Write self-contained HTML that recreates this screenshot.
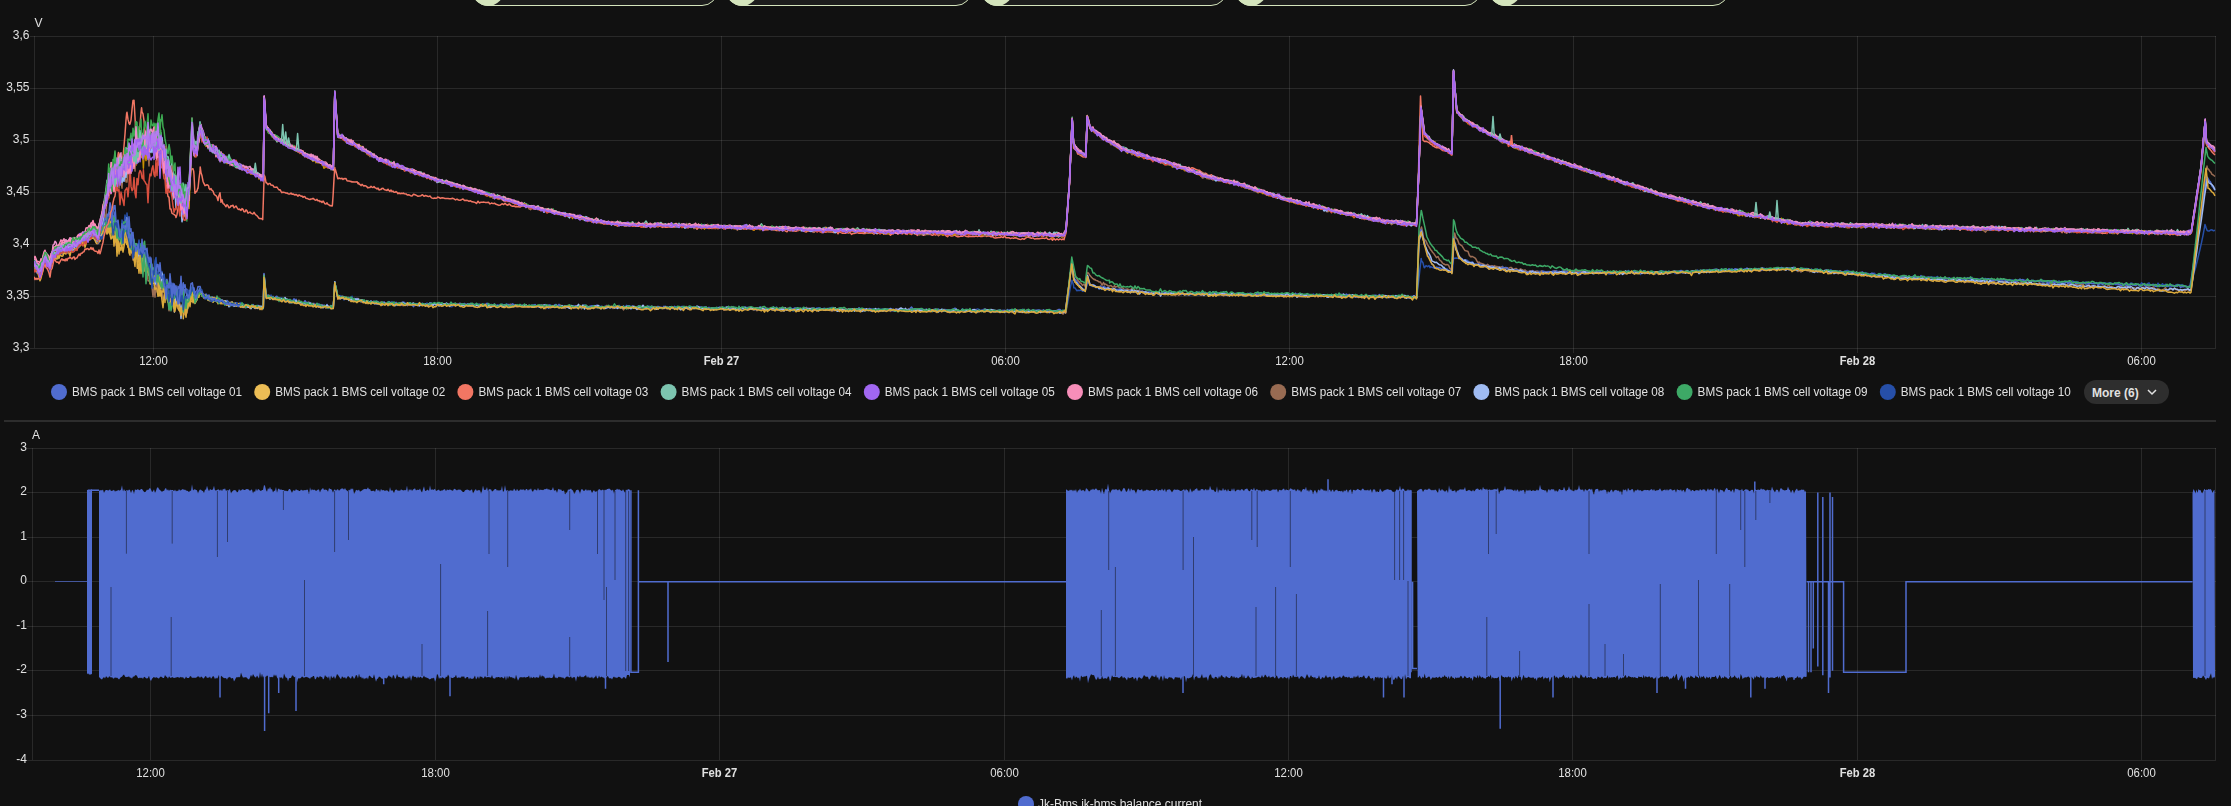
<!DOCTYPE html>
<html><head><meta charset="utf-8"><style>
html,body{margin:0;padding:0;background:#111111;width:2231px;height:806px;overflow:hidden;position:relative}
.chip{position:absolute;top:-26px;height:30px;border:1px solid #d4e4bc;border-radius:16px;background:#1c1c1c}
.av{position:absolute;top:-26px;width:32px;height:32px;border-radius:50%;background:#d4e4bc}
svg{position:absolute;left:0;top:0;will-change:transform}
.ax{font-family:"Liberation Sans",sans-serif;font-size:12px;fill:#e1e1e1}
.b{font-weight:bold}
.lg{font-family:"Liberation Sans",sans-serif;font-size:12px;fill:#e1e1e1}
.more{position:absolute;left:2084px;top:380px;width:85px;height:24px;border-radius:12px;background:#2e2e2e}
.more span{position:absolute;left:8px;top:6px;font-family:"Liberation Sans",sans-serif;font-size:12px;color:#e1e1e1;font-weight:bold}
</style></head><body>
<div class="chip" style="left:472px;width:244px"></div>
<div class="av" style="left:472px"></div>
<div class="chip" style="left:726px;width:244px"></div>
<div class="av" style="left:726px"></div>
<div class="chip" style="left:981px;width:244px"></div>
<div class="av" style="left:981px"></div>
<div class="chip" style="left:1235px;width:244px"></div>
<div class="av" style="left:1235px"></div>
<div class="chip" style="left:1489px;width:238px"></div>
<div class="av" style="left:1489px"></div>
<svg width="2231" height="806" viewBox="0 0 2231 806">
<path d="M30 36.5H2216M30 88.5H2216M30 140.5H2216M30 192.5H2216M30 244.5H2216M30 296.5H2216M30 348.5H2216M34.5 36V348M153.5 36V353M437.5 36V353M721.5 36V353M1005.5 36V353M1289.5 36V353M1573.5 36V353M1857.5 36V353M2141.5 36V353M2215.5 36V348" stroke="rgba(255,255,255,0.1)" stroke-width="1" fill="none"/>
<path d="M27 448.5H2216M27 492.5H2216M27 537.5H2216M27 581.5H2216M27 626.5H2216M27 670.5H2216M27 715.5H2216M27 760.5H2216M32.5 448V760M150.5 448V760M435.5 448V760M719.5 448V760M1004.5 448V760M1288.5 448V760M1572.5 448V760M1857.5 448V760M2141.5 448V760M2215.5 448V760" stroke="rgba(255,255,255,0.1)" stroke-width="1" fill="none"/>
<text x="29.5" y="39" text-anchor="end" class="ax">3,6</text>
<text x="29.5" y="91" text-anchor="end" class="ax">3,55</text>
<text x="29.5" y="143" text-anchor="end" class="ax">3,5</text>
<text x="29.5" y="195" text-anchor="end" class="ax">3,45</text>
<text x="29.5" y="247" text-anchor="end" class="ax">3,4</text>
<text x="29.5" y="299" text-anchor="end" class="ax">3,35</text>
<text x="29.5" y="351" text-anchor="end" class="ax">3,3</text>
<text x="34.5" y="27" class="ax">V</text>
<text x="153.5" y="365.3" text-anchor="middle" class="ax" textLength="28.5" lengthAdjust="spacingAndGlyphs">12:00</text>
<text x="437.5" y="365.3" text-anchor="middle" class="ax" textLength="28.5" lengthAdjust="spacingAndGlyphs">18:00</text>
<text x="721.5" y="365.3" text-anchor="middle" class="ax b" textLength="35.5" lengthAdjust="spacingAndGlyphs">Feb 27</text>
<text x="1005.5" y="365.3" text-anchor="middle" class="ax" textLength="28.5" lengthAdjust="spacingAndGlyphs">06:00</text>
<text x="1289.5" y="365.3" text-anchor="middle" class="ax" textLength="28.5" lengthAdjust="spacingAndGlyphs">12:00</text>
<text x="1573.5" y="365.3" text-anchor="middle" class="ax" textLength="28.5" lengthAdjust="spacingAndGlyphs">18:00</text>
<text x="1857.5" y="365.3" text-anchor="middle" class="ax b" textLength="35.5" lengthAdjust="spacingAndGlyphs">Feb 28</text>
<text x="2141.5" y="365.3" text-anchor="middle" class="ax" textLength="28.5" lengthAdjust="spacingAndGlyphs">06:00</text>
<text x="27" y="450.6" text-anchor="end" class="ax">3</text>
<text x="27" y="494.6" text-anchor="end" class="ax">2</text>
<text x="27" y="539.6" text-anchor="end" class="ax">1</text>
<text x="27" y="583.6" text-anchor="end" class="ax">0</text>
<text x="27" y="628.6" text-anchor="end" class="ax">-1</text>
<text x="27" y="672.6" text-anchor="end" class="ax">-2</text>
<text x="27" y="717.6" text-anchor="end" class="ax">-3</text>
<text x="27" y="762.6" text-anchor="end" class="ax">-4</text>
<text x="32" y="439" class="ax">A</text>
<text x="150.5" y="777.3" text-anchor="middle" class="ax" textLength="28.5" lengthAdjust="spacingAndGlyphs">12:00</text>
<text x="435.5" y="777.3" text-anchor="middle" class="ax" textLength="28.5" lengthAdjust="spacingAndGlyphs">18:00</text>
<text x="719.5" y="777.3" text-anchor="middle" class="ax b" textLength="35.5" lengthAdjust="spacingAndGlyphs">Feb 27</text>
<text x="1004.5" y="777.3" text-anchor="middle" class="ax" textLength="28.5" lengthAdjust="spacingAndGlyphs">06:00</text>
<text x="1288.5" y="777.3" text-anchor="middle" class="ax" textLength="28.5" lengthAdjust="spacingAndGlyphs">12:00</text>
<text x="1572.5" y="777.3" text-anchor="middle" class="ax" textLength="28.5" lengthAdjust="spacingAndGlyphs">18:00</text>
<text x="1857.5" y="777.3" text-anchor="middle" class="ax b" textLength="35.5" lengthAdjust="spacingAndGlyphs">Feb 28</text>
<text x="2141.5" y="777.3" text-anchor="middle" class="ax" textLength="28.5" lengthAdjust="spacingAndGlyphs">06:00</text>
<circle cx="59.0" cy="392" r="8" fill="#506ccf"/>
<text x="72.0" y="396" class="lg" textLength="170" lengthAdjust="spacingAndGlyphs">BMS pack 1 BMS cell voltage 01</text>
<circle cx="262.2" cy="392" r="8" fill="#ecbd55"/>
<text x="275.2" y="396" class="lg" textLength="170" lengthAdjust="spacingAndGlyphs">BMS pack 1 BMS cell voltage 02</text>
<circle cx="465.4" cy="392" r="8" fill="#f27663"/>
<text x="478.4" y="396" class="lg" textLength="170" lengthAdjust="spacingAndGlyphs">BMS pack 1 BMS cell voltage 03</text>
<circle cx="668.6" cy="392" r="8" fill="#7cc4af"/>
<text x="681.6" y="396" class="lg" textLength="170" lengthAdjust="spacingAndGlyphs">BMS pack 1 BMS cell voltage 04</text>
<circle cx="871.8" cy="392" r="8" fill="#a167f1"/>
<text x="884.8" y="396" class="lg" textLength="170" lengthAdjust="spacingAndGlyphs">BMS pack 1 BMS cell voltage 05</text>
<circle cx="1075.0" cy="392" r="8" fill="#f78eb9"/>
<text x="1088.0" y="396" class="lg" textLength="170" lengthAdjust="spacingAndGlyphs">BMS pack 1 BMS cell voltage 06</text>
<circle cx="1278.2" cy="392" r="8" fill="#986b52"/>
<text x="1291.2" y="396" class="lg" textLength="170" lengthAdjust="spacingAndGlyphs">BMS pack 1 BMS cell voltage 07</text>
<circle cx="1481.4" cy="392" r="8" fill="#9fbbf2"/>
<text x="1494.4" y="396" class="lg" textLength="170" lengthAdjust="spacingAndGlyphs">BMS pack 1 BMS cell voltage 08</text>
<circle cx="1684.6" cy="392" r="8" fill="#3da966"/>
<text x="1697.6" y="396" class="lg" textLength="170" lengthAdjust="spacingAndGlyphs">BMS pack 1 BMS cell voltage 09</text>
<circle cx="1887.8" cy="392" r="8" fill="#264fa8"/>
<text x="1900.8" y="396" class="lg" textLength="170" lengthAdjust="spacingAndGlyphs">BMS pack 1 BMS cell voltage 10</text>
<rect x="4" y="420.5" width="2212" height="1" fill="#4a4a4a"/>
<circle cx="1026" cy="804" r="8" fill="#506ccf"/>
<text x="1038" y="808" class="lg" textLength="164" lengthAdjust="spacingAndGlyphs">Jk-Bms jk-bms balance current</text>
<clipPath id="clipTop"><rect x="34" y="6" width="2182" height="342"/></clipPath>
<g clip-path="url(#clipTop)">
<path d="M34 266.3l1 3.5l1 0.7l1 0.7l1 1.8l1 2.3l1 0.1l1 -3l1 -5.7l1 -1.9l1 -2.1l1 -4.7l1 3.3l1 1.5l1 2.6l1 0.7l1 6.1l1 -5.1l1 -5.2l1 -4l1 2.5l1 -4.7l1 1.4l1 -0.1l1 -1.4l1 -2.5l1 0.9l1 -0.7l1 0.8l1 -0.7l1 -1.3l1 0.7l1 -0.9l1 -0.9l1 -1.4l1 -1.7l1 0l1 -1.3l1 1.4l1 1.8l1 -2.7l1 0.5l1 -2.8l1 1.1l1 1l1 -0.6l1 -2.5l1 -2l1 -3.2l1 3.6l1 -2.4l1 0.1l1 -2.7l1 0.4l1 -2.5l1 2.7l1 -0.4l1 -4.4l1 2l1 0.4l1 -1.1l1 1.3l1 2.4l1 2l1 0.9l1 0l1 -1.7l1 -2.2l1 -2.9l1 -2.4l1 -2.9l0.4 -4.5l0.6 0.6l1 -2.2l1 -2.4l1 1.4l1 -1.3l1 -0.8l1 -11l1 1.2l1 10.1l1 3.2l0.9 3.1l0.1 1.8l1 -2.3l1 8.5l1 -0.6l1 1.4l1 0.7l1 1.5l1 -17.2l1 4.3l1 0.6l1 -9.8l1 6.5l0.8 -2l0.2 -6.5l1 11.8l1 5.9l1 10l1 2.4l1 -1.7l1 -2.5l1 5.9l1 2.7l1 6.3l1 -1.5l0.2 -4.9l0.8 -3.4l1 4.6l1 -2.6l1 -2.6l1 4.2l1 -2.3l1 2.5l0.6 1.8l0.4 -3.9l1 17.2l1 -9.8l1 10.6l1 0.6l1 10.4l1 -12l1 7.9l1 2.6l1 -0.5l1 10.9l1 -7.9l1 7l1 -1.6l1 1.8l0.5 -1.7l0.5 -2.5l1 2l1 -9.2l1 10.1l1 -7.4l1 10l1 13l1 -8.4l1 3.6l1 8.1l1 -9.6l1 -8.1l1 1.4l1 4.7l1 3.6l0.4 -6.2l0.6 14.3l1 0.2l1 -7.7l1 1.9l1 -4.1l1 8.6l1 -11l1 8.9l1 -3.8l0.3 -0.5l0.7 8.3l1 2.9l1 -6.9l1 -3.1l1 5.5l1 -6.6l1 -1.7l1 3.7l1 -2l0.3 -5l0.7 10.5l1 -3.3l1 4.3l1 -4.6l1 -0.5l1 -3.6l1 2.6l0.7 -1.5l0.3 -2.6l1 1.1l1 1.4l1 4.2l1 -0.8l1 0.8l1 0.1l1 0.6l1 -0.7l0.6 1.3l0.4 -1.6l1 1.5l1 0.4l1 0.9l1 -0.1l1 0l1 1.2l1 -0.7l1 2.2l1 -0.5l1 -0.6l1 -0.1l1 -0.1l1 -0.2l1 0.8l1 1l1 0.5l1 0.4l1 1.9l1 -2.4l1 1l1 3.4l1 -4.1l1 1.8l1 0.2l1 -0.5l1 -0.3l1 -0.4l1 0.8l1 -0.1l1 0.8l1 -2.2l1 1.1l1 1.1l1 -0.6l1 0.2l1 1.8l1 -0.9l1 1.4l1 0.3l1 -0.3l1 0.4l1 -0.4l1 -0.9l1 1.4l1 0.4l1 -0.8l1 0.4l1 0.7l1 -1.4l1 1.4l1 1l1 -2.2l1 0.5l1 -0.3l0.3 1.5l0.7 -33.9l1 9.9l1 8.1l0.3 3.5l0.7 0.1l1 -1.4l1 2.9l1 -0.3l1 -2.2l1 2.5l1 -0.4l1 0.9l1 0.3l1 -1.3l1 1.5l1 1.6l1 -1.7l1 -0.3l1 -0.2l1 0.2l1 1.5l1 1.3l1 -1l1 0l1 1.9l1 -2.2l1 0l1 1.3l1 0.3l1 -1l1 0.2l1 1.5l1 0.3l1 -1.1l1 1.1l1 -0.1l1 1l1 -0.3l1 0.1l1 -0.1l1 1.3l1 0.3l1 -1.3l1 1.1l1 -1.3l1 0.9l1 0.7l1 0.8l1 -1.5l1 0.5l1 0.3l1 -1.2l1 1.4l1 -0.4l1 1l1 -1.1l1 -0.5l1 1.9l1 0.4l1 -0.5l1 1.4l1 -0.7l1 -0.1l1 1l1 -1.6l1 0.8l1 0.7l1 0.8l1 -0.8l1 0.6l1 -0.7l0.3 0.8l0.7 -10.4l0.8 -15.1l0.2 3.5l1 2.4l1 5.3l0.7 3.5l0.3 0.8l1 -1.7l1 -0.5l1 2.3l1 0.3l1 0l1 1.7l1 -1.9l1 0.1l1 0.5l1 -0.4l1 1.1l1 -2l1 1l1 -2.1l1 3.7l1 -0.6l1 1.3l1 1.2l1 -1.6l1 -0.1l1 0l1 -0.1l1 0.3l1 1.1l1 -0.3l1 0.1l1 0l1 1l1 -0.2l1 -0.5l1 0.7l1 -0.7l1 -0.7l1 2l1 -0.7l1 -0.9l1 1.8l1 -0.3l1 -1.2l1 2.6l1 -0.7l1 0.7l1 -0.5l1 -0.2l1 -0.9l1 2l1 -0.6l1 -0.4l1 0.4l1 -0.4l1 0.4l1 -0.9l1 0.1l1 -1.5l1 1.4l1 0.9l1 0.6l1 -1.2l1 0.3l1 1.4l1 -1.4l1 0.9l1.5 0.8l1.5 -1.1l1.5 0.7l1.5 -1.6l1.5 0.6l1.5 -0.4l1.5 0.4l1.5 1l1.5 1.2l1.5 -2.1l1.5 0l1.5 0.8l1.5 -1.2l1.5 1.1l1.5 0l1.5 -0.7l1.5 0.6l1.5 -1.6l1.5 1.8l1.5 -1.7l1.5 0.7l1.5 0.2l1.5 0.2l1.5 1l1.5 -0.6l1.5 -0.3l1.5 0.7l1.5 0.8l1.5 -1.2l1.5 0.2l1.5 0.8l1.5 -0.7l1.5 -1l1.5 2.9l1.5 -0.3l1.5 -3.3l1.5 1.4l1.5 0.2l1.5 0.5l1.5 -0.2l1.5 -0.7l1.5 -0.5l1.5 1l1.5 0.8l1.5 -1.5l1.5 0.2l1.5 0.7l1.5 -1.5l1.5 1.2l1.5 -0.2l1.5 0.7l1.5 -0.9l1.5 -0.2l1.5 0.3l1.5 0.4l1.5 -0.3l1.5 0.7l1.5 0.7l1.5 0.4l1.5 0.4l1.5 -1.8l1.5 0.4l1.5 -1.7l1.5 3.2l1.5 -2.1l1.5 0.4l1.5 0.3l1.5 -1.4l1.5 1.3l1.5 -0.4l1.5 -1.2l1.5 1.7l1.5 0.8l1.5 -2.2l1.5 2l1.5 -0.4l1.5 0.2l1.5 0l1.5 0.7l1.5 -1.2l1.5 0.9l1.5 -1l1.5 1l1.5 -1l1.5 0.7l1.5 1.5l1.5 -1.1l1.5 -0.6l1.5 -0.9l1.5 0.1l1.5 0.9l1.5 0.8l1.5 -0.2l1.5 0.3l1.5 -0.6l1.5 0.8l1.5 -1.4l1.5 -0.3l1.5 1.1l0.1 -0.6l1.4 -0.2l1.5 -0.2l1.5 0.3l1.5 0.8l1.5 -0.1l1.5 -1l1.5 1.3l1.5 -0.1l1.5 -0.8l1.5 1.4l1.5 -0.8l1.5 0l1.5 0.8l1.5 0.4l1.5 -1.5l1.5 0.8l1.5 -1l1.5 2.4l1.5 -2.1l1.5 1.2l1.5 -1.3l1.5 1.1l1.5 1l1.5 -3.5l1.5 1.6l1.5 0.7l1.5 -0.4l1.5 -0.4l1.5 2.1l1.5 -1.5l1.5 -1.2l1.5 1.8l1.5 -1.9l1.5 2.1l1.5 -1.3l1.5 0.5l1.5 0.9l1.5 -0.8l1.5 -1l1.5 -0.2l1.5 2.2l1.5 -0.3l1.5 -1.2l1.5 1.3l1.5 -0.3l1.5 0.1l1.5 -2.2l1.5 1.5l1.5 1l1.5 -0.1l1.5 0.2l1.5 -2.5l1.5 2l1.5 0.2l1.5 1.6l1.5 -2.5l1.5 0.6l1.5 0.4l1.5 0.7l1.5 -1.1l1.5 1.1l1.5 -1.5l1.5 0.6l1.5 -0.6l1.5 0.5l1.5 -0.7l1.5 -0.7l1.5 2l1.5 -0.5l1.5 -0.7l1.5 0.6l1.5 0.7l1.5 -1.5l1.5 0.7l1.5 0.6l1.5 0l1.5 -0.5l1.5 -1.2l1.5 2.5l1.5 -0.7l1.5 -0.3l1.5 -0.3l1.5 0.3l1.5 -0.4l1.5 -0.4l1.5 0.3l1.5 0.2l1.5 0.1l1.5 -0.3l1.5 1.5l1.5 -1.4l1.5 1.2l1.5 -1.6l1.5 0.7l1.5 0.5l1.5 -0.8l1.5 -0.5l1.5 0.7l1.5 0.2l1.5 -1.3l1.5 1l1.5 0.6l1.5 -0.3l1.5 0.4l1.5 0.5l1.5 0.1l1.5 0.1l1.5 -0.2l1.5 -0.6l1.5 0.2l1.5 -0.2l1.5 -0.1l1.5 0.1l1.5 -1.2l1.5 1l1.5 0.3l1.5 -0.6l1.5 0.8l1.5 0.5l1.5 -0.5l1.5 1.7l1.5 -3.5l1.5 1.8l1.5 -1.3l1.5 2l1.5 1.2l1.5 -3.8l1.5 2.2l1.5 0.5l1.5 -0.4l1.5 0.9l1.5 -2.2l1.5 2.1l1.5 -0.5l1.5 -0.4l1.5 -0.5l1.5 0.9l1.5 -0.9l1.5 0.4l1.5 -0.5l1.5 -1.2l1.5 1.7l1.5 0.2l1.5 0.4l1.5 -1.2l1.5 0.7l1.5 0.4l1.5 -0.3l1.5 0.9l1.5 0.5l1.5 -2.1l1.5 -0.9l1.5 1.8l1.5 0.4l1.5 -0.7l1.5 0.1l1.5 -0.9l1.5 0.2l1.5 1.3l1.5 -1.2l1.5 -0.5l1.5 0.7l1.5 2.7l1.5 -0.6l1.5 -2l1.5 -0.2l1.5 0.5l1.5 -0.6l1.5 1.6l1.5 -0.9l1.5 -0.7l1.5 1.9l1.5 -1.3l1.5 0.7l1.5 -0.1l1.5 -0.2l1.5 0.5l1.5 -0.8l1.5 -0.8l1.5 -0.2l1.5 0.7l1.5 0.5l1.5 0.6l1.5 -0.2l1.5 0.1l1.5 -0.5l1.5 -0.9l1.5 0.2l1.5 -1l1.5 1.6l1.5 0.6l1.5 0l1.5 -0.4l1.5 -0.1l1.5 0.9l1.5 -0.6l1.5 0.6l1.5 0l1.5 -0.2l1.5 0.8l1.5 -1.3l1.5 0.2l1.5 -0.3l1.5 -0.2l1.5 1.4l1.5 -0.1l1.5 -1.5l1.5 0.7l1.5 0.7l1.5 0l1.5 0.6l1.5 -2l1.5 0.3l1.5 0.6l1.5 0.6l1.5 -0.8l1.5 -0.6l1.5 0.6l1.5 -0.1l1.5 -0.3l1.5 1.6l1.5 -1.7l1.5 0.3l1.5 1.8l1.5 -0.6l1.5 -0.5l1.5 -0.6l1.5 0.9l1.5 0.9l1.5 -0.6l1.5 0.6l1.5 -1l1.5 0.2l1.5 -0.6l1.5 0.4l1.5 0.7l1.5 -2l1.5 1.1l1.5 0.2l1.5 -0.5l1.5 0.2l1.5 0.9l1.5 0.9l1.5 -1l1.5 -0.3l1.5 -1.4l1.5 2.6l1.5 -1.4l1.5 -0.1l1.5 -0.8l1.5 0.8l1.5 -0.7l1.5 1l1.5 0.5l1.5 -0.2l1.5 0.1l1.5 -0.8l1.5 1.6l1.5 -1.5l1.5 -1l1.5 1.2l1.5 -0.6l1.5 -0.2l1.5 0.7l1.5 0.7l1.5 -0.8l1.5 1l1.5 0.9l1.5 -0.9l1.5 -0.9l1.5 0l1.5 -0.1l1.5 0.3l1.5 0.7l1.5 -0.4l1.5 -1.8l1.5 1.7l1.5 -0.7l1.5 1l1.5 -0.9l1.5 0.6l1.5 1.6l1.5 -2.4l1.5 0l1.5 -0.1l1.5 -0.7l1.5 0.5l1.5 1.6l1.5 -0.8l1.5 -0.9l1.5 0.3l1.5 1.5l1.5 -0.9l1.5 0.3l1.5 0.6l1.5 0.6l1.5 0.3l1.5 -0.9l1.5 -0.8l1.5 0.1l1.5 1.2l1.5 -0.3l1.5 -1.2l1.5 0.7l1.5 0l1.5 0l1.5 -0.2l1.5 -0.7l1.5 0.5l1.5 -0.9l1.5 2l1.5 -0.5l1.5 -1.3l1.5 1.9l1.5 -0.4l1.5 -2l1.5 2.7l1.5 -0.8l1.5 0.9l1.5 -2.2l1.5 1.5l1.5 0.2l1.5 0l1.5 0l1.5 0.6l1.5 -1.9l1.5 0.2l1.5 -0.1l1.5 0.7l1.5 0l1.5 0.8l1.5 -0.2l1.5 -0.4l1.5 -0.6l1.5 0l1.5 1.1l1.5 -0.1l1.5 -0.4l1.5 -0.2l1.5 1.3l1.5 -1.7l1.5 0.9l1.5 0.3l1.5 -0.9l0.9 0.9l0.6 -2l1.5 -6.1l1.5 -8.3l1.5 -9l1.5 -6.2l1.5 4.8l0.3 2.8l1.2 0.1l1.5 2.2l0.3 0.7l1.2 -0.5l1.5 0.3l1.5 -0.6l1.5 1.2l0.3 -0.4l1.2 0.2l1.5 -2l1.5 -3.2l0.5 -2.9l1 -0.5l1.5 2.8l1.5 0.6l1.5 0.9l1.5 -1.2l1.5 2.3l1.5 -0.9l1.5 2.2l1 -1.6l0.5 0.6l1.5 -0.7l1.5 -0.5l1.5 1.7l1.5 0.3l1.5 0.9l1.5 0l1.5 -0.6l1.5 -0.7l1.5 0.8l1.5 0.1l1.5 -0.1l1.5 1.2l1 -0.1l0.5 -0.4l1.5 0.5l1.5 -0.2l1.5 0.5l1.5 0.6l1.5 0.3l1.5 -1l1.5 -0.4l1.5 2.2l1.5 -0.8l1.5 0.9l1.5 -1.8l1.5 1.1l1.5 0.5l1.5 -0.9l1.5 0.6l1.5 0.9l1.5 0.2l1.5 0.3l1.5 -1.5l1.5 -0.1l1.5 1.6l1.5 0.5l1.5 -0.5l1.5 -1.1l1.5 1.6l1.5 0.1l1.5 -0.2l1.5 -0.7l1.5 0.6l1.5 0.3l1.5 -1.1l1.5 -1l1.5 1.5l1.5 0l1.5 -0.4l1.5 0.7l1.5 -1.1l1.5 0.3l1.5 0l1.5 0.8l1.5 0.9l1.5 -1.2l1.5 1.6l1.5 -0.4l1.5 -0.6l1.5 -0.2l1.5 0.9l1.5 -1.4l1.5 0.1l1.5 -0.7l1.5 1.2l1.5 0.8l1.5 -0.5l1.5 0.1l1.5 -0.6l1.5 0.2l1.5 -1.3l1.5 1.7l1.5 -1.2l1.5 -0.6l1.5 0.1l1.5 -0.2l1.5 1.4l1.5 0.3l1.5 -1.6l1.5 1.8l1.5 -0.1l1.5 -1.1l1.5 -0.8l1.5 0.5l1.5 0.3l1.5 0.9l1.5 -0.3l1.5 -1l1.5 1.7l1.5 -1.3l1.5 1.7l1.5 -1.5l1.5 0.3l1.5 -0.2l1.5 0.2l1.5 1.3l1.5 -0.3l1.5 -0.1l1.5 -0.1l1.5 -1.3l1.5 0.8l1.5 0.1l1.5 -0.2l1.5 1.1l1.5 -0.9l1.5 0l1.5 -0.3l1.5 -0.8l1.5 2.1l1.5 0.6l1.5 -0.7l1.5 -0.7l1.5 -1.4l1.5 2l1.5 0.7l1.5 -0.7l1.5 0.5l1.5 0.5l1.5 -0.1l1.5 -1.1l1.5 1.2l1.5 -0.2l1.5 -1.6l1.5 0.9l1.5 -0.7l1.5 1l1.5 0.5l1.5 -1.2l1.5 -0.8l1.5 2.2l1.5 -0.8l1.5 0.7l1.5 -1.9l1.5 1.8l1.5 0.9l1.5 0.1l1.5 -1.8l1.5 0.2l1.5 -0.5l1.5 0.6l1.5 0.1l1.5 -0.6l1.5 -0.9l1.5 1.6l1.5 -1l1.5 0.8l1.5 -0.3l1.5 0.9l1.5 -0.1l1.5 -0.9l1.5 0.8l1.5 1.3l1.5 -1.8l1.5 0.6l1.5 0.4l1.5 -0.1l1.5 -0.5l1.5 -1.2l1.5 0.2l1.5 1.2l1.5 0.1l1.5 1.6l1.5 -2.5l1.5 1.4l1.5 -0.2l1.5 -1.7l1.5 0.6l1.5 0.8l1.5 -0.5l1.5 0.2l1.5 0.4l1.5 -0.9l1.5 1l1.5 -0.7l1.5 0.1l1.5 0.9l1.5 -0.7l1.5 0.8l1.5 1.1l1.5 -1l1.5 -0.3l1.5 0.6l1.5 -0.9l1.5 0.9l1.5 -1.6l1.5 1.4l1.5 -0.8l1.5 -0.1l1.5 1.9l1.5 -1.8l1.5 1.9l1.5 -0.7l1.5 0.5l1.5 -1.9l1.5 1.5l1.5 0.2l1.5 -1.2l1.5 -0.1l1.5 1.8l1.5 -1.7l1.5 -0.4l1.5 0l1.5 0.8l1.5 0l1.5 0l1.5 1.3l1.5 -1.3l1.5 0.7l1.5 0.5l1.5 -1.9l1.5 1.2l1 0.5l0.5 -2.4l1.5 -13.2l1.5 -13.4l1.2 -10.2l0.3 2.4l1.5 2l1 4.2l0.5 0.7l1.5 -2.1l1.5 1.1l1.5 -1.1l1 2l0.5 -1l1.5 0.6l1.5 0.5l1.5 0.6l1.5 -0.4l1.5 0.5l1.5 -0.2l1.5 0.7l1.5 -0.5l1.5 1.2l1.5 -1.1l1.5 1.4l1.5 2l1.5 -1.1l1.5 -0.7l0.9 1.3l0.6 -7.2l0.5 -5.7l1 -0.2l1.5 -0.2l1.5 0.2l1.5 0.2l1.5 -0.1l1.5 0.5l1.5 2.3l1.5 -0.2l1 -0.4l0.5 -0.7l1.5 0.9l1.5 3.2l1.5 -2.2l1.5 1.2l1.5 0.7l1.5 0.2l1.5 0.4l1.5 -0.6l1.5 0.5l1.5 2.2l1.5 -1.6l1.5 1.5l1.5 -1.5l1.5 1.3l0.5 0.5l1 0.7l1.5 -1.3l1.5 1.4l1.5 0.1l1.5 -0.6l1.5 1l1.5 -0.9l1.5 0.3l1.5 0.7l1.5 -1.7l1.5 2.2l1.5 -0.3l1.5 -0.1l1.5 0.9l1.5 1l1.5 -0.7l1.5 1.3l1.5 -1.4l1.5 0.2l1.5 2.3l1.5 -0.5l1.5 0.4l1.5 -1.3l1.5 1.2l1.5 -0.4l1.5 0.7l1.5 -0.1l1.5 1.3l0.5 -1.2l1 -0.1l1.5 -0.4l1.5 1.8l1.5 -1.5l1.5 -0.2l1.5 -0.1l1.5 0.3l1.5 -0.7l1.5 0.6l1.5 0l1.5 0.2l1.5 -0.1l1.5 0.9l1.5 -0.4l1.5 0.3l1.5 0.1l1.5 0l1.5 -2l1.5 1l1.5 -0.3l1.5 1l1.5 -1.6l1.5 0.7l1.5 0.4l1.5 0.1l1.5 1l1.5 -0.9l1.5 1.1l1.5 -1.7l1.5 -0.3l1.5 2.1l1.5 -0.6l1.5 0l1.5 -0.2l1.5 0.4l1.5 -1.1l1.5 1.6l1.5 -1.1l1.5 1.1l1.5 -0.6l1.5 -1.5l1.5 0.5l1.5 1.7l1.5 -0.9l1.5 -0.2l1.5 0.4l1.5 -0.5l1.5 -0.1l1.5 0.5l1.5 0.1l1.5 1l1.5 -0.9l1.5 1.3l1.5 -0.1l1.5 -0.1l1.5 -0.5l1.5 -0.7l1.5 0l1.5 -0.2l1.5 -0.5l1.5 0.5l1.5 -0.6l1.5 1.4l1.5 -1l1.5 -0.8l1.5 -0.9l1.5 1.6l1.5 -0.1l1.5 -0.2l1.5 0l1.5 -0.8l1.5 2.1l1.5 -0.5l1.5 1.8l1.5 -2l1.5 -0.2l1.5 1l1.5 -0.9l1.5 0l1.5 -0.4l1.5 -0.2l1.5 1.7l1.5 -0.2l1.5 0.7l1.5 -1.3l1.5 0l1.5 -0.9l1.5 1l1.5 -1.9l0.8 1.5l0.7 0.4l1.5 0.3l1.5 -1.5l1.5 1.6l1.5 -1.2l1.5 0l1.5 -0.3l1.5 1.9l1.5 0.1l1.5 -2l1.5 -0.4l1.5 0l1.5 2.1l1.5 -1l1.5 -1l1.5 -0.8l1.5 0.8l1.5 1.4l1.5 0.5l1.5 -1.5l1.5 -0.5l1.5 0l1.5 -1.2l1.5 1.8l1.5 -1.4l1.5 1.5l1.5 -2l1.5 0.4l1.5 1l1.5 -0.7l1.5 1.1l1.5 -0.6l1.5 -1l1.5 1.1l1.5 -0.1l1.5 -2.1l1.5 2.7l1.5 -1l1.5 0.2l1.5 -1.8l1.5 0.8l1.5 0.2l1.5 1l1.5 -1.8l1.5 0.4l1.5 -0.8l1.5 1.2l1.5 0.4l1.5 -1.5l1.5 0.6l1.5 0.7l1.5 0.7l1.5 -0.7l1.5 -0.8l1.5 -0.7l1.5 0.1l1.5 0.1l1.5 0.5l1.5 -0.3l1.5 1.2l1.5 -1l1.5 -1l1.5 1.9l1.5 -0.5l1.5 -0.5l1.5 -0.6l1.5 -0.7l1.5 0.6l1.5 1.3l1.5 -1.3l1.5 -0.5l1.5 1l1.5 -0.1l1.5 0.1l1.5 -0.1l1.5 0.5l1.5 -1.7l1.5 1.3l1.5 -1.5l1.5 1.2l1.5 -0.2l1.5 0.3l0.7 0.6l0.8 -0.5l1.5 1.1l1.5 -0.1l1.5 -0.6l1.5 -0.5l1.5 -0.1l1.5 0.2l1.5 0.3l1.5 0.2l1.5 2.2l1.5 -1.8l1.5 -0.1l1.5 -1.3l1.5 0l1.5 0.6l1.5 0.7l1.5 -0.6l1.5 2.3l1.5 -1.5l1.5 1.2l1.5 -2.3l1.5 1.7l1.5 0.4l1.5 0.1l1.5 0.5l1.5 0l1.5 -0.1l1.5 -1.5l1.5 0.9l1.5 -1.2l1.5 2.2l1.5 -0.2l1.5 -0.3l1.5 -0.4l1.5 0.3l1.5 1.9l1.5 0l1.5 -1.1l1.5 0.9l1.5 -2.2l1.5 -0.3l1.5 0.9l1.5 0.1l1.5 0.5l1.5 0.9l1.5 2.3l1.5 -2.5l1.5 0.5l1.5 0.3l1.5 -0.2l1.5 0.8l1.5 0.6l1.5 -2.1l1.5 1.1l1.5 -0.1l1.5 0.8l1.5 -1.1l1.5 0.1l1.5 -0.2l1.5 2.2l1.5 -0.1l1.5 0.1l1.5 -1.9l1.5 1.3l1.5 -0.4l1.5 -0.5l1.5 0.5l1.5 1.3l1.5 0.1l1.5 -0.2l1.5 0.6l1.5 -0.6l1.5 0.6l1.5 0.2l1.5 0.5l1.5 -0.3l1.5 0l1.5 0l1.5 -0.3l1.5 2l1.5 -1.2l1.5 -0.1l1.5 1.4l1.5 -0.7l1.5 -2l1.5 1.6l1.5 0.3l1.5 1.1l1.5 -0.2l1.5 -0.1l1.5 -1.4l1.5 0.2l1.5 0.8l1.5 0.1l1.5 -1.2l1.5 0.4l1.5 -0.2l1.5 0.2l1.5 0.3l1.5 -0.4l1.5 -0.7l1.5 1.8l1.5 0.6l1.5 -1l1.5 1.1l1.5 -0.1l1.5 0.1l1.5 -0.1l1.5 -0.9l1.5 1l1.5 0.4l1.5 -1.3l1.5 2.2l1.5 0.2l1.5 -0.2l1.5 0.1l1.5 -1l1.5 -0.7l1.5 -0.3l1.5 -0.2l1.5 0.5l1.5 -0.1l1.5 0.6l1.5 -1.8l1.5 3.2l1.5 0.1l1.5 -1.7l1.5 0.3l1.5 -0.2l1.5 -0.3l1.5 -0.2l1.5 0.2l1.5 -0.3l1.5 0.9l1.5 -0.1l1.5 0.4l1.5 -0.8l1.5 0.8l1.5 0.1l1.5 0.4l1.5 -1l1.5 1.1l1.5 0.4l1.5 -0.4l1.5 -0.7l1.5 -0.1l1.5 0.3l1.5 0.7l1.5 0.7l1.5 -1.1l1.5 -0.2l1.5 0.8l1.5 -0.1l1.5 -0.7l1.5 0.2l1.5 0.5l1.5 0.6l1.5 -1.3l1.5 0.2l1.5 1.2l1.5 -1.2l1.5 1l1.5 0.2l1.5 -0.3l1.5 -0.6l1.5 0.7l1.5 -0.2l1.5 0.5l1.5 -0.9l1.5 1.4l1.5 -1.8l1.5 1.2l1.5 0.3l1.5 0.8l1.5 -1.2l1.5 0.9l1.5 -0.8l1.5 0.9l1.5 0.7l1.5 -1.6l1.5 0.6l1.5 -1l1.5 1.4l1.5 0.3l1.5 -0.8l1.5 -0.7l1.5 1.1l1.5 0.7l1.5 0l1.5 -0.1l1.5 -1.8l1.5 0.8l1.5 1.6l1.5 -1.9l1.5 1.8l1.5 0.6l1.5 -0.7l1.5 0.3l1.5 -1l1.5 -0.6l1.5 0.8l1.5 0l1.5 0.2l1.5 0.6l1.5 -0.6l1.5 0.3l1.5 0.2l1.5 -0.3l1.5 1.4l1.5 -1l1.5 -0.3l1.5 -0.2l1.5 -0.3l1.5 1.3l1.5 -0.7l1.5 -0.6l1.5 0.5l1.5 0.5l1.5 -0.1l1.5 1.1l1.5 -1.5l1.5 1.3l1.5 -0.2l1.5 -1l1.5 0.9l1.5 -0.1l1.5 0.4l1.5 -0.6l1.5 0.5l1.5 -1.4l1.5 0.5l1.5 1.4l1.5 0.3l1.5 -0.6l1.5 -0.5l1.5 1.1l1.5 -2.3l1.5 0.9l1.5 1l1.5 0l1.5 -1.2l1.5 -0.7l1.5 2.6l1.5 -0.7l1.5 -0.6l1.5 0.9l1.5 0.6l1.5 -2.5l1.5 2.6l1.5 -0.3l1.5 -1.8l1.5 2.1l1.5 -1.6l1.5 2.3l1.5 -0.7l1.5 1.3l1.5 -2.1l1.5 0.3l1.5 0.7l1.5 -1.3l1.5 -0.1l1.5 0.2l1.5 0.4l1.5 -0.6l1.5 1.3l1.5 0.2l1.5 -0.1l1.5 1.4l1.5 -1.2l0.5 1.3l1 -2.2l1.5 -5l1.5 -7.8l1.5 -4.5l1.5 -6.2l1 -4.1l0.5 -2.2l1.5 -6.2l1.5 -6.6l1.5 -7.4l1.5 -7.9l0.5 -2.9l1 3l1 2.7l0.5 0.5l1.5 0.4l1.5 -1l1.5 -0.3l1.5 1l1.5 -0.5" stroke="#264fa8" stroke-width="1.5" fill="none" stroke-linejoin="round"/>
<path d="M34 266.9l1 0.1l1 3.4l1 2.3l1 -1.8l1 1.9l1 1.8l1 -4.5l1 -3.2l1 0.5l1 -3.9l1 -2.1l1 -0.1l1 4.2l1 -3.2l1 2.4l1 3.6l1 -3l1 -6.7l1 -3.4l1 0.9l1 -3l1 2.8l1 -0.6l1 -1.8l1 0.4l1 -0.5l1 -1.4l1 0.5l1 1.6l1 -2.2l1 -0.1l1 -1.8l1 1l1 -1.7l1 1.3l1 -0.3l1 -0.3l1 1.9l1 -2.4l1 1.1l1 -1.6l1 -0.2l1 -2.4l1 0.8l1 -0.8l1 -3.3l1 -0.5l1 -2l1 -0.6l1 1l1 -3.3l1 -1.4l1 -0.6l1 1.1l1 -0.6l1 0.6l1 0.3l1 1.2l1 -2.2l1 2.3l1 -1.2l1 1.9l1 1.2l1 2.3l1 -5.5l1 2.1l1 -1.9l1 -4.1l1 -6.4l1 -0.6l0.4 0.4l0.6 -0.5l1 -3.3l1 -0.5l1 6.3l1 -8.9l1 13.4l1 -4.7l1 3.5l1 -7.7l1 3.7l0.9 6.4l0.1 -10.2l1 21.1l1 -12.7l1 5l1 5.9l1 1.8l1 -3.7l1 -4.6l1 1.5l1 0.6l1 -3.5l1 -11.5l0.8 15.6l0.2 -2.3l1 3.9l1 0.7l1 8.6l1 0.6l1 1.5l1 7.5l1 -13.8l1 9.2l1 -6.6l1 4.1l0.2 8.8l0.8 -12.8l1 4.2l1 -1.1l1 8.7l1 -8l1 -3.5l1 10.5l0.6 -4.2l0.4 1.1l1 14.8l1 -1.3l1 10.6l1 0.3l1 -0.9l1 -6.7l1 13.5l1 9.6l1 -8.9l1 9.4l1 -20.5l1 15.4l1 -7.6l1 3.1l0.5 -1.9l0.5 -0.6l1 -1l1 6.4l1 10.1l1 -1.4l1 -7.9l1 -1.5l1 3l1 0.7l1 17.4l1 -5.5l1 -2.7l1 -3l1 -4.5l1 9.3l0.4 -3.3l0.6 -9.7l1 12.6l1 -6.9l1 11.6l1 -7.4l1 2.9l1 4.5l1 -0.2l1 3l0.3 -8.9l0.7 11.8l1 0.4l1 -5.1l1 3.3l1 -6.6l1 -1.9l1 -8l1 2.9l1 -1.6l0.3 2.5l0.7 0.8l1 1.9l1 -0.1l1 -1.7l1 -3.2l1 -2.2l1 -5.2l0.7 2.2l0.3 -2.1l1 2.9l1 2.3l1 -0.6l1 2.6l1 -2.3l1 2.3l1 0.1l1 -1.4l0.6 1.5l0.4 1.2l1 -1l1 1.1l1 -0.7l1 0.6l1 -0.5l1 0.9l1 1.5l1 0.9l1 -1.3l1 0l1 0.6l1 -0.5l1 -0.1l1 2.7l1 -1.9l1 1.8l1 -1.8l1 3.3l1 -2.2l1 2.3l1 0.5l1 -2.5l1 2.1l1 -1.6l1 -0.4l1 2.8l1 0l1 -0.7l1 -2l1 2.2l1 -0.1l1 0l1 0.2l1 -1.1l1 1.2l1 2.2l1 -0.1l1 -1.5l1 -0.2l1 1l1 0.7l1 -0.2l1 -1.6l1 1.3l1 0l1 1.3l1 -0.1l1 -0.5l1 0.7l1 -1.3l1 1.6l1 -1.6l1 0.7l1 0.4l0.3 -1.5l0.7 -32.6l1 8.6l1 11.1l0.3 2.6l0.7 -0.1l1 0.7l1 -2.1l1 1.9l1 0.2l1 0l1 1.2l1 1.2l1 -1.5l1 -0.1l1 0.6l1 0.7l1 0.5l1 -1l1 1.6l1 -1.6l1 1.7l1 -0.1l1 0.2l1 1.6l1 -1.8l1 0.3l1 0.7l1 0.5l1 -1.5l1 1.5l1 -0.6l1 1.4l1 0.8l1 -1.1l1 -0.1l1 0.3l1 -2.5l1 3l1 -0.2l1 -0.1l1 -0.2l1 -0.1l1 0.7l1 1.4l1 -0.9l1 1.3l1 -2.9l1 1.8l1 0.8l1 -0.1l1 -1.2l1 1l1 1.6l1 -1.9l1 0.4l1 0l1 0.6l1 1.1l1 0.2l1 -1.8l1 3l1 -1.4l1 0.2l1 1.9l1 -1.2l1 -0.8l1 0.6l1 0l1 -0.1l1 0.7l1 1l0.3 -0.4l0.7 -12.9l0.8 -9.9l0.2 -2l1 5.6l1 4.8l0.7 3.9l0.3 -0.8l1 0.8l1 1.4l1 -1.4l1 -0.8l1 1.3l1 -0.6l1 0.6l1 0.6l1 0.4l1 -0.2l1 1.1l1 -0.7l1 -0.8l1 1.8l1 -0.9l1 1.3l1 -1.3l1 1.1l1 0.1l1 -2.1l1 1.1l1 0.6l1 2.1l1 -2.3l1 2.2l1 0.3l1 -0.3l1 0.3l1 -0.7l1 0.4l1 0.2l1 0.2l1 0.2l1 -0.6l1 -0.4l1 0.4l1 0.9l1 -1.3l1 0.5l1 0.8l1 0.1l1 0.4l1 -1.7l1 1.8l1 0.1l1 0.9l1 -2l1 1.3l1 0.6l1 0l1 0.6l1 -0.1l1 -1.5l1 1.3l1 -0.7l1 -0.3l1 1.7l1 -1.5l1 -0.1l1 0.3l1 -0.3l1 1.4l1.5 -0.5l1.5 0.8l1.5 -0.7l1.5 -0.7l1.5 1.3l1.5 -1.2l1.5 0l1.5 0.2l1.5 0l1.5 0.8l1.5 -1.3l1.5 0.8l1.5 -0.3l1.5 -0.8l1.5 0.2l1.5 0.7l1.5 0.6l1.5 0l1.5 0l1.5 -0.3l1.5 -0.5l1.5 0.6l1.5 -0.9l1.5 -0.1l1.5 0.9l1.5 -0.7l1.5 0.5l1.5 -0.4l1.5 0l1.5 0.2l1.5 -0.4l1.5 0.5l1.5 -0.7l1.5 1.5l1.5 -0.8l1.5 0.9l1.5 -2.4l1.5 1.5l1.5 0.6l1.5 -2l1.5 1.3l1.5 0.3l1.5 0.2l1.5 -0.9l1.5 1.5l1.5 0.2l1.5 -0.9l1.5 1.2l1.5 -0.6l1.5 0.1l1.5 -0.4l1.5 0.8l1.5 -0.4l1.5 0.8l1.5 -0.6l1.5 -0.8l1.5 0.2l1.5 0.8l1.5 -0.9l1.5 0.6l1.5 0.2l1.5 -0.4l1.5 -1.4l1.5 1.9l1.5 0.3l1.5 0.1l1.5 -0.8l1.5 1.3l1.5 -1.2l1.5 -0.5l1.5 -0.2l1.5 0.6l1.5 -1.2l1.5 -0.1l1.5 2.3l1.5 -0.2l1.5 0l1.5 0.4l1.5 -0.5l1.5 -1.7l1.5 2.1l1.5 0l1.5 -0.4l1.5 -1.7l1.5 2.5l1.5 0.1l1.5 -1.3l1.5 0.5l1.5 0.4l1.5 -0.6l1.5 0.9l1.5 -0.8l1.5 0.4l1.5 -0.4l1.5 -1.1l1.5 0.3l1.5 3.1l1.5 -2.1l1.5 0.9l0.1 -0.1l1.4 0.6l1.5 -0.7l1.5 -0.7l1.5 0.3l1.5 -1.6l1.5 1.1l1.5 0.6l1.5 -1.9l1.5 2l1.5 0.7l1.5 0.6l1.5 -1.8l1.5 0.1l1.5 -1.1l1.5 0.5l1.5 1.1l1.5 1.1l1.5 -2.4l1.5 1.8l1.5 -0.5l1.5 -0.5l1.5 2.1l1.5 -3.3l1.5 1.8l1.5 0.2l1.5 1.4l1.5 -0.2l1.5 0.2l1.5 -1.6l1.5 0.5l1.5 0.1l1.5 -0.4l1.5 0l1.5 -0.2l1.5 0l1.5 -0.8l1.5 2.1l1.5 -1.9l1.5 -1.3l1.5 1.7l1.5 -0.1l1.5 0.2l1.5 1.3l1.5 -1.2l1.5 0.1l1.5 -0.2l1.5 0.7l1.5 -0.4l1.5 0.4l1.5 2l1.5 -2.1l1.5 -0.9l1.5 1.9l1.5 -0.8l1.5 -0.1l1.5 0.1l1.5 0.2l1.5 0.1l1.5 0.6l1.5 -0.2l1.5 0.3l1.5 -1.3l1.5 0.4l1.5 -0.6l1.5 1.2l1.5 -0.1l1.5 -1l1.5 0.6l1.5 1.4l1.5 -1.1l1.5 -1.9l1.5 0.9l1.5 0.7l1.5 -0.4l1.5 0.4l1.5 0.7l1.5 -0.6l1.5 -0.9l1.5 1.4l1.5 -0.6l1.5 0.2l1.5 -0.4l1.5 -0.6l1.5 0.2l1.5 0.8l1.5 -0.4l1.5 -1.1l1.5 2.6l1.5 -1.8l1.5 0.2l1.5 0.8l1.5 -2.2l1.5 2.8l1.5 -1.6l1.5 1.1l1.5 -0.8l1.5 0.6l1.5 -0.1l1.5 0l1.5 -1.2l1.5 0.3l1.5 1.2l1.5 1.2l1.5 -1.6l1.5 0.6l1.5 -0.4l1.5 0.1l1.5 0.6l1.5 -1.6l1.5 1.4l1.5 -0.1l1.5 -0.4l1.5 -0.7l1.5 -0.2l1.5 -0.5l1.5 0.3l1.5 2.8l1.5 -0.3l1.5 -0.9l1.5 0.4l1.5 -1.3l1.5 -1.4l1.5 0.6l1.5 1.5l1.5 1.1l1.5 -1l1.5 -0.6l1.5 0.6l1.5 -0.5l1.5 -0.3l1.5 0.9l1.5 -0.3l1.5 -0.4l1.5 -0.2l1.5 -0.1l1.5 0.9l1.5 0.9l1.5 -1l1.5 1.8l1.5 -2.7l1.5 1.4l1.5 -1l1.5 0.8l1.5 0.2l1.5 0.3l1.5 0.5l1.5 -1.2l1.5 -0.6l1.5 0.7l1.5 0.2l1.5 -0.8l1.5 1.2l1.5 0.6l1.5 -2.3l1.5 1.3l1.5 0.4l1.5 -2.1l1.5 1.4l1.5 -0.3l1.5 -0.5l1.5 2.3l1.5 -0.5l1.5 -0.1l1.5 0.5l1.5 -0.1l1.5 -0.1l1.5 -0.3l1.5 -0.1l1.5 -1.2l1.5 0.6l1.5 0.4l1.5 -2.2l1.5 3.5l1.5 -1.9l1.5 -0.6l1.5 -0.3l1.5 1.6l1.5 0.1l1.5 -0.3l1.5 0.1l1.5 -0.5l1.5 0l1.5 0.4l1.5 -0.2l1.5 1.1l1.5 -0.4l1.5 0.3l1.5 0.2l1.5 0.6l1.5 -0.5l1.5 -0.3l1.5 -0.4l1.5 -0.5l1.5 0.3l1.5 0.7l1.5 -0.3l1.5 -0.3l1.5 -0.7l1.5 0l1.5 1.2l1.5 0.4l1.5 -0.6l1.5 -1.4l1.5 0.9l1.5 0.4l1.5 -0.8l1.5 1l1.5 -0.4l1.5 -0.5l1.5 -0.3l1.5 1.5l1.5 -0.3l1.5 -1l1.5 -0.1l1.5 1.3l1.5 -0.1l1.5 -0.5l1.5 1.5l1.5 -1.3l1.5 -0.5l1.5 1.5l1.5 -0.9l1.5 0.4l1.5 -0.1l1.5 -0.6l1.5 0l1.5 0.8l1.5 0.8l1.5 -2.1l1.5 1.4l1.5 -1.2l1.5 -0.7l1.5 1.2l1.5 0.4l1.5 -0.8l1.5 -0.9l1.5 1.8l1.5 -1.1l1.5 1.1l1.5 -1.6l1.5 1.3l1.5 -0.4l1.5 -0.5l1.5 1l1.5 0.4l1.5 -0.5l1.5 -0.3l1.5 1l1.5 -1.4l1.5 1.6l1.5 0l1.5 0.9l1.5 -0.6l1.5 -0.4l1.5 -0.1l1.5 -0.2l1.5 -1l1.5 2l1.5 -0.7l1.5 -0.5l1.5 -0.5l1.5 1.9l1.5 -0.6l1.5 -1.2l1.5 1.3l1.5 0.9l1.5 -1.3l1.5 0.1l1.5 -0.7l1.5 -0.3l1.5 1l1.5 1.6l1.5 -2l1.5 0l1.5 0.8l1.5 -0.9l1.5 0.7l1.5 0l1.5 -1.4l1.5 0l1.5 0.7l1.5 0.7l1.5 -0.4l1.5 0.8l1.5 -1.7l1.5 1.4l1.5 -0.7l1.5 0.5l1.5 0.2l1.5 -0.9l1.5 0.5l1.5 -0.6l1.5 1l1.5 -0.8l1.5 0.3l1.5 0.5l1.5 -0.7l1.5 1.2l1.5 -1.3l1.5 1.1l1.5 -0.3l1.5 -0.9l1.5 0.6l1.5 -0.5l1.5 0.3l1.5 0.1l1.5 1.4l1.5 -1.5l1.5 1.6l1.5 -0.7l1.5 -1.2l1.5 -0.6l1.5 2.1l1.5 -1.8l1.5 1.9l1.5 0.3l1.5 -0.3l1.5 -0.4l1.5 0.1l1.5 0.3l1.5 -0.4l1.5 -0.2l1.5 0.1l1.5 1l1.5 -1.4l1.5 0.5l1.5 -1.2l1.5 0.4l1.5 -0.5l1.5 0.9l1.5 0.7l1.5 -0.3l1.5 -0.6l1.5 0.7l1.5 -0.7l1.5 0.7l1.5 0l1.5 0.3l1.5 -2l1.5 0.9l1.5 1.6l1.5 -0.4l1.5 1.8l1.5 -1.9l0.9 -0.2l0.6 0.8l1.5 -13.5l1.5 -11.8l1.5 -13.9l1.3 -11.6l0.2 1.8l1.5 7.5l0.5 3.2l1 1.1l1.5 2.3l1.5 2.8l1.5 1.1l0.5 1.3l1 0.2l1.5 2.1l1.5 -1.4l1.3 2.8l0.2 -1.1l1.5 -11.3l0.5 -1.9l1 0.6l1.5 2.5l1.5 1.6l1.5 1.5l1.5 1.1l0.2 -0.5l1.3 1.1l1.5 0.4l1.5 1.1l1.5 0.1l1.5 3.2l1.5 -2.7l1.1 2.4l0.4 -1l1.5 0.7l1.5 1.4l1.5 -0.1l1.5 -0.3l1.5 1.4l1.5 -0.1l0.5 -1.3l1 1.6l1.5 -0.8l1.5 0.4l1.5 1.1l1.5 0.1l1.5 -0.2l1.5 2.2l1.5 -0.8l1.5 -0.3l1.5 1l1.5 -0.1l1.5 -1.4l1.5 0.6l0.9 0.2l0.6 2.5l1.5 -1.3l1.5 0.2l1.5 0l0.5 1.2l1 -0.5l1.5 1.4l1.5 -0.4l1.5 0.9l1.5 -1.1l1.5 0.8l1.5 -0.2l1.5 0.2l1.5 -1l1.5 0.7l1.5 -0.3l1.5 0.2l1.5 1.3l1.5 -0.5l1.5 0.9l1.5 -0.1l1.5 0.3l1.5 0.1l1.5 -1.2l1.5 1.1l1.5 -0.8l1.5 -0.1l1.5 1.3l1.5 0.8l1.5 -2.1l1.5 1.8l1.5 -0.7l1.5 -1.2l1.5 0.7l1.5 0.1l1.5 0l1.5 -0.6l1.5 -0.7l1.5 1l1.5 0.6l1.5 0l1.5 -0.1l1.5 0.5l1.5 -1.2l1.5 0.8l1.5 0.5l1.5 0.2l1.5 -0.8l1.5 0l1.5 -0.5l1.5 1.5l1.5 -2.8l1.5 1.7l1.5 1.9l1.5 -1.6l1.5 -1.4l1.5 1.4l1.5 -1.1l1.5 0.6l1.5 0.7l1.5 1.1l1.5 -0.8l1.5 0.1l1.5 0.2l1.5 -0.7l1.5 -0.8l1.5 0.7l1.5 0.3l1.5 -0.3l1.5 -0.2l1.5 0.3l1.5 -0.8l1.5 0.4l1.5 0.7l1.5 -0.2l1.5 0.2l1.5 0.9l1.5 -0.8l1.5 -0.3l1.5 -0.8l1.5 0.1l1.5 1l1.5 -0.8l1.5 0.9l1.5 -1l1.5 0.9l1.5 -0.2l1.5 0.7l1.5 -1l1.5 0l1.5 0.5l1.5 0l1.5 1.2l1.5 -1.3l1.5 -0.2l1.5 0.2l1.5 0.6l1.5 -0.2l1.5 0.4l1.5 -1.4l1.5 2.8l1.5 -0.4l1.5 -1.2l1.5 -0.7l1.5 1l1.5 0.3l1.5 -1.8l1.5 1.6l1.5 -1.1l1.5 1.4l1.5 0.5l1.5 -0.3l1.5 -1.9l1.5 1.9l1.5 -0.2l1.5 -0.8l1.5 0.7l1.5 0.8l1.5 -1.3l1.5 0.2l1.5 -0.3l1.5 1.1l1.5 -2.2l1.5 2.5l1.5 -1.6l1.5 1.4l1.5 -1.8l1.5 0.4l1.5 0.2l1.5 1l1.5 -1.7l1.5 1.6l1.5 -0.8l1.5 1.4l1.5 -1.2l1.5 0.6l1.5 -0.5l1.5 1.3l1.5 -1.5l1.5 0.2l1.5 1.4l1.5 -1.3l1.5 0.6l1.5 -0.9l1.5 0.8l1.5 -1.6l1.5 1.8l1.5 -0.5l1.5 -0.6l1.5 0.2l1.5 1.7l1.5 -0.5l1.5 -1.4l1.5 2.3l1.5 -1.7l1.5 0.2l1.5 0.4l1.5 -0.9l1.5 -0.4l1.5 0.7l1.5 1.3l1.5 -0.1l1.5 -1.8l1.5 1.9l1.5 -0.9l1.5 0.3l1.5 -0.4l1.5 0.2l1.5 -1.1l1.5 0l1.5 0.4l1.5 0.4l1.5 0.9l1.5 -1.1l1.5 2l1.5 -1.6l1.5 0l1.5 0.9l1.5 -0.2l1.5 -0.6l1.5 -0.5l1.5 0l1.5 -0.5l1.5 1.9l1.5 0l1.5 0.5l1.5 -0.7l1.5 0l1.5 0.5l1 0.3l0.5 -0.8l1.5 -45.6l0.5 -14l1 -6.1l1.5 -4.8l1.5 7l0.4 3.2l1.1 2.3l1.5 1.6l1.5 3.5l1.5 2.2l1.5 2.6l1.5 1.8l0.3 0.8l1.2 1.2l1.5 2.2l1.5 2.3l1.5 -1.2l1.5 3.3l1.5 1.2l1.5 2l1 0.9l0.5 0.1l1.5 0.9l1.5 -0.4l1.5 0.6l1.5 3.5l1.5 0.9l0.4 -1.2l1.1 -11.8l1.5 -18.7l0.2 -4.7l1.3 4.8l1.5 1.5l1.5 4.4l1 0.6l0.5 0.5l1.5 0.9l1.5 2.5l1.5 2.3l1.5 0.3l1.5 0.6l1.5 4.2l1.5 1.2l0.4 -0.4l1.1 0.1l1.5 0.8l1.5 1l1.5 2.8l1.5 2l0.5 -1.2l1 1.1l1.5 0.3l1.5 0.5l1.5 0.8l1.5 1.3l1.5 -1.6l1.5 1.2l1.5 0.6l1.5 -0.6l1.5 0.5l1.3 -0.5l0.2 1.7l1.5 -0.8l1.5 0.2l1.5 0.7l1.5 -0.3l1.5 0l1.5 0.6l1.5 1.4l1.5 -1.1l1.5 0.7l1.5 -1.2l1.5 -0.1l1.5 2.8l1.5 -1.3l1.5 -0.5l1.5 1.2l1.5 0.8l1.5 -1.5l1.5 0.7l1.5 1l1.5 -0.7l1.5 1.3l1.5 0.3l1.5 -0.3l0.5 -0.5l1 0.2l1.5 -0.3l1.5 0.5l1.5 0.4l1.5 -0.4l1.5 0.9l1.5 1.2l1.5 -2.2l1.5 0.6l1.5 0.5l1.5 0.1l1.5 -0.5l1.5 0l1.5 0.8l1.5 -0.4l1.5 -0.3l1.5 -1.1l1.5 1.2l1.5 0.3l1.5 -0.5l1.5 0.7l1.5 1l1.5 -3l1.5 1.6l1.5 -1.3l1.5 -0.1l1.5 0.8l1.5 0.6l1.5 -0.3l1.5 -0.8l1.5 -0.1l1.5 0.6l1.5 0.4l1.5 -0.5l1.5 -0.4l1.5 2.3l1.5 -1.7l1.5 0.5l1.5 -0.2l1.5 0l1.5 0.5l1.5 -0.1l1.5 0.7l1.5 -1.2l1.5 -0.1l1.5 2.2l1.5 -1.5l1.5 0.4l1.5 0.1l1.5 -0.3l1.5 -0.2l1.5 -0.9l1.5 0.1l1.5 1.8l1.5 -0.2l1.5 -0.1l1.5 -1.5l1.5 -0.4l1.5 0.8l1.5 -0.1l1.5 0.9l1.5 -0.9l1.5 1.7l1.5 -1.6l1.5 -0.1l1.5 1.2l1.5 -0.3l1.5 -0.7l1.5 1.4l1.5 0.7l1.5 -2.3l1.5 0.7l1.5 -0.7l1.5 -0.5l1.5 1.8l1.5 0.1l1.5 0.3l1.5 -0.5l1.5 -1.7l1.5 1.4l1.5 -0.5l1.5 -0.3l1.5 0.2l1.5 1.4l1.5 -0.7l1.5 1.6l1.5 -1l1.5 -1.6l1.5 2l0.8 0.3l0.7 -0.9l1.5 -0.9l1.5 2l1.5 -2.1l1.5 0.7l1.5 -1.4l1.5 0.3l1.5 -0.5l1.5 2l1.5 0.1l1.5 -1.1l1.5 -0.6l1.5 0.9l1.5 0.3l1.5 -1.3l1.5 0.2l1.5 0.5l1.5 0.3l1.5 -0.6l1.5 0l1.5 -1l1.5 -0.8l1.5 2.1l1.5 -0.7l1.5 0.3l1.5 -0.5l1.5 0.4l1.5 -1.1l1.5 1.6l1.5 -0.9l1.5 0.4l1.5 0.2l1.5 0.2l1.5 -0.4l1.5 -1.6l1.5 0.8l1.5 1.7l1.5 -0.9l1.5 0l1.5 0l1.5 -0.9l1.5 -0.2l1.5 -0.1l1.5 1.1l1.5 -0.6l1.5 0.8l1.5 -1l1.5 0.9l1.5 -1.1l1.5 -1.2l1.5 2l1.5 -1.1l1.5 0.6l1.5 -0.8l1.5 -0.5l1.5 0.3l1.5 -0.8l1.5 0.1l1.5 0.3l1.5 0.3l1.5 -0.7l1.5 0.8l1.5 0.1l1.5 1.1l1.5 -0.2l1.5 -1.4l1.5 0.6l1.5 -0.9l1.5 0.5l1.5 -0.3l1.5 -0.3l1.5 0.5l1.5 -1.2l1.5 1.2l1.5 -0.7l1.5 -0.7l1.5 0.5l1.5 0.6l1.5 -0.9l1.5 0.8l1.5 0l1.5 0.7l0.7 -1.9l0.8 0.7l1.5 0.6l1.5 0.9l1.5 -0.6l1.5 0.6l1.5 -1.3l1.5 0.7l1.5 1.7l1.5 -1.3l1.5 1.8l1.5 -2l1.5 0.3l1.5 -0.9l1.5 1.5l1.5 -0.2l1.5 1.2l1.5 -1.3l1.5 -0.3l1.5 -0.6l1.5 1.2l1.5 1l1.5 0.1l1.5 0.4l1.5 -0.2l1.5 -0.5l1.5 0.5l1.5 -0.1l1.5 -1l1.5 2.3l1.5 -0.8l1.5 -0.9l1.5 1.1l1.5 0.1l1.5 0.6l1.5 0.4l1.5 -3.1l1.5 2.5l1.5 0.8l1.5 -1.6l1.5 -0.4l1.5 1.7l1.5 0.2l1.5 0.1l1.5 -0.9l1.5 0.6l1.5 0.5l1.5 0.5l1.5 1.1l1.5 -1.2l1.5 -0.6l1.5 -1.1l1.5 2.5l1.5 -0.7l1.5 0.1l1.5 -0.5l1.5 1.3l1.5 -1.6l1.5 1.5l1.5 0.2l1.5 0.4l1.5 0.9l1.5 -0.8l1.5 0.2l1.5 0.5l1.5 -1.7l1.5 0.9l1.5 0.5l1.5 0.8l1.5 -1l1.5 1.3l1.5 -0.2l1.5 -1.2l1.5 0.1l1.5 0.1l1.5 1.2l1.5 0.2l1.5 0.4l1.5 0l1.5 -0.7l1.5 1.3l1.5 0.1l1.5 -0.1l1.5 0.1l1.5 -1.3l1.5 1.2l1.5 -0.9l1.5 -0.1l1.5 0.7l1.5 0.4l1.5 -0.1l1.5 -0.1l1.5 -0.3l1.5 1l1.5 -0.6l1.5 -0.5l1.5 0.9l1.5 0.8l1.5 -1.4l1.5 -0.3l1.5 1.9l1.5 0.4l1.5 -1.2l1.5 0.1l1.5 0.4l1.5 2l1.5 -1.9l1.5 0.7l1.5 -0.2l1.5 -1.5l1.5 0.6l1.5 -0.2l1.5 1.1l1.5 -0.3l1.5 1.1l1.5 -1.3l1.5 0.7l1.5 0l1.5 0.2l1.5 1.6l1.5 -1.4l1.5 0.8l1.5 -0.1l1.5 -1.1l1.5 1l1.5 -0.6l1.5 0.5l1.5 0.1l1.5 -0.1l1.5 -0.3l1.5 1.5l1.5 -1.2l1.5 0.7l1.5 0.7l1.5 -0.8l1.5 0.5l1.5 0.4l1.5 0l1.5 0.6l1.5 -2.3l1.5 2.3l1.5 -1.4l1.5 -1.4l1.5 0.8l1.5 -0.5l1.5 1l1.5 -1l1.5 0.4l1.5 1l1.5 0l1.5 -0.6l1.5 0.4l1.5 0.1l1.5 0.1l1.5 0l1.5 0l1.5 0.9l1.5 -1.6l1.5 0.9l1.5 0.4l1.5 -0.5l1.5 -0.2l1.5 0l1.5 0.7l1.5 0.9l1.5 -0.8l1.5 0.1l1.5 0.6l1.5 -0.3l1.5 -1.1l1.5 1.6l1.5 -0.3l1.5 -0.1l1.5 1l1.5 -0.3l1.5 -0.5l1.5 -1.1l1.5 0.2l1.5 1.2l1.5 0.1l1.5 0.6l1.5 0l1.5 -0.3l1.5 -0.6l1.5 0l1.5 0.6l1.5 -0.8l1.5 1.5l1.5 -1.4l1.5 -0.2l1.5 1.2l1.5 -1.2l1.5 2.3l1.5 -1.9l1.5 0.6l1.5 0l1.5 -0.2l1.5 -0.5l1.5 0l1.5 2l1.5 0.2l1.5 0.9l1.5 -2.5l1.5 1.6l1.5 -0.1l1.5 0.8l1.5 -0.7l1.5 0.8l1.5 0.1l1.5 -0.2l1.5 0.6l1.5 -1.2l1.5 1.2l1.5 -1.7l1.5 1.6l1.5 -2.9l1.5 2.1l1.5 -0.3l1.5 0.7l1.5 0.8l1.5 -0.2l1.5 -0.3l1.5 1.1l1.5 -2.2l1.5 0.5l1.5 1.6l1.5 -0.8l1.5 -1.6l1.5 1.8l1.5 -1l1.5 2l1.5 -0.2l1.5 -1.2l1.5 1.3l1.5 -1.4l1.5 1.3l1.5 -0.2l1.5 -0.5l1.5 -0.8l1.5 0.7l1.5 -1.4l1.5 1.2l1.5 -0.9l1.5 2.3l1.5 -1.4l1.5 -0.8l1.5 2.3l1.5 0l1.5 -0.4l1.5 2l1.5 -0.8l1.5 -0.4l1.5 -0.5l1.5 -1.5l1.5 2.5l1.5 0.3l1.5 -1.2l1.5 -0.6l1.5 0.9l1.5 -1.1l1.5 1.2l1.5 0.5l1.5 0.6l1.5 -0.8l1.5 0.1l1.5 0.4l1.5 0.6l1.5 -1.1l1.5 -0.4l1.5 0.4l0.5 -0.3l1 0.3l1.5 -11.1l1.5 -11.3l1.5 -11.8l1.5 -11.7l1.5 -12l1.5 -11.2l1.5 -11.4l1.5 -11.7l1.5 -11.1l1.5 -12.8l1 -7.7l0.5 2.3l1.5 1.5l1 1.8l0.5 0l1.5 2.7l1.5 0.8l1.5 1.3" stroke="#9c6e55" stroke-width="1.5" fill="none" stroke-linejoin="round"/>
<path d="M34 264.7l1 2.4l1 3.1l1 2.9l1 -2.1l1 2.8l1 2l1 -4.9l1 -1.4l1 -4.1l1 -2.4l1 -0.2l1 -1.2l1 3l1 1.7l1 -0.2l1 2.1l1 -1l1 -4.8l1 -5.2l1 -2.5l1 1.5l1 -0.1l1 2.5l1 -0.6l1 -2.6l1 -2.4l1 -2.1l1 -0.5l1 1.2l1 0.1l1 0.1l1 0l1 -1.5l1 -0.7l1 2l1 1.3l1 -3.6l1 0.9l1 -0.4l1 -0.5l1 -0.4l1 -1.1l1 -1.1l1 1.3l1 -1l1 -4.8l1 -2.2l1 2.9l1 -2.2l1 -0.6l1 -2.2l1 2.3l1 -1l1 -1.1l1 0.9l1 0.9l1 -2.1l1 -0.9l1 -2.4l1 3.4l1 0.7l1 3.2l1 0.9l1 1.1l1 -1.1l1 -3.5l1 -0.6l1 -1.9l1 -5.4l1 -3.3l0.4 -5.1l0.6 2.4l1 -3l1 -8l1 6.8l1 -8.6l1 -9.7l1 4.1l1 13.2l1 -4.3l1 7.9l0.9 -11.8l0.1 7.4l1 10.1l1 -3.1l1 11.6l1 -4.7l1 3.7l1 -4.5l1 9.6l1 -16.6l1 10.1l1 0.9l1 -13.6l0.8 4.5l0.2 12l1 -4.6l1 -18l1 14.7l1 -2.7l1 14.2l1 -0.5l1 2l1 -0.2l1 6.7l1 -2.2l0.2 -1.8l0.8 3.8l1 3.6l1 -7.8l1 7.9l1 -15.2l1 11.7l1 -2.1l0.6 10.5l0.4 -9l1 0.6l1 -2.6l1 16.8l1 -3.2l1 -4.8l1 7.1l1 0l1 12.8l1 -4.6l1 -8.6l1 14.1l1 6.7l1 -6.7l1 0l0.5 -3.9l0.5 0.8l1 3.2l1 -1.3l1 8.2l1 -0.7l1 -0.8l1 -2.9l1 -1.2l1 5.7l1 2.4l1 -13.7l1 11.1l1 11.2l1 -0.9l1 -6.7l0.4 10.5l0.6 -10.8l1 -0.6l1 11.8l1 -13.1l1 3.2l1 -4.8l1 5.1l1 -2.2l1 3.8l0.3 -8.6l0.7 13.4l1 -6.5l1 -0.7l1 0.5l1 7.2l1 1.9l1 -8.2l1 4.3l1 -2.7l0.3 -1.5l0.7 -1.1l1 -1.5l1 7.4l1 -3.9l1 -0.7l1 -4.1l1 0.2l0.7 0.2l0.3 -0.6l1 3.7l1 3.8l1 0l1 0.6l1 4.4l1 -4.8l1 1.6l1 1.8l0.6 -0.8l0.4 -1.7l1 3.3l1 1l1 -1.8l1 2.3l1 -1.1l1 1.4l1 -2.1l1 2.3l1 1.9l1 0.7l1 -0.4l1 -1.1l1 0.4l1 -0.6l1 1.8l1 -1.6l1 0.9l1 -1.7l1 0.9l1 3.6l1 -1.4l1 0.3l1 -2.1l1 2.3l1 2.3l1 -3l1 -0.7l1 2l1 -0.3l1 0.4l1 -0.9l1 0l1 0.3l1 1.7l1 -0.4l1 0.8l1 -1.5l1 1.5l1 -0.9l1 0.5l1 0.8l1 -0.8l1 -0.3l1 -1.1l1 1.7l1 0.8l1 -1l1 0.7l1 -1.3l1 0.6l1 1.6l1 0.9l1 -1.3l1 -1l0.3 1.1l0.7 -33.7l1 10.7l1 11.3l0.3 1.5l0.7 -0.4l1 1.1l1 -1.1l1 0.6l1 0l1 0.4l1 -1.3l1 2.1l1 0.3l1 -2.4l1 -0.1l1 1.7l1 2.1l1 -1.1l1 0.8l1 0l1 0.4l1 -1.1l1 0.2l1 0.9l1 0.4l1 0.1l1 0l1 -0.6l1 1.4l1 -0.5l1 0.6l1 -2.9l1 3.1l1 -2.5l1 2.5l1 -0.3l1 1l1 -0.2l1 0.5l1 0.3l1 0.1l1 -1l1 -1.5l1 1.3l1 1.1l1 -0.9l1 1.3l1 -0.4l1 -0.1l1 2l1 0.7l1 -1.4l1 0.2l1 0.9l1 -1.8l1 0.5l1 1.8l1 0l1 -0.9l1 0l1 1.2l1 -1.2l1 1l1 0.2l1 -1.7l1 2.5l1 0.2l1 0.3l1 -1.9l1 0.3l1 0.5l0.3 -0.3l0.7 -8.8l0.8 -15.6l0.2 1.5l1 5.2l1 5.1l0.7 4.2l0.3 -2l1 1.8l1 -0.4l1 -0.9l1 1.3l1 -1.1l1 2.6l1 -1.7l1 1.5l1 0.4l1 -1.4l1 0l1 0.9l1 -0.8l1 1.6l1 -0.5l1 -0.6l1 0.2l1 1.3l1 -1.5l1 2.7l1 -1.7l1 0.7l1 -0.4l1 2.2l1 -0.5l1 0.5l1 -0.3l1 -0.3l1 1.4l1 -0.7l1 0.1l1 0.3l1 0.3l1 -0.2l1 -0.1l1 -1.1l1 2.9l1 -2.5l1 -0.5l1 1.1l1 2.2l1 -0.4l1 -1.4l1 0.7l1 -0.1l1 -1.5l1 1.3l1 0.5l1 0.6l1 -1.8l1 -0.8l1 0.6l1 1.4l1 -0.2l1 0l1 0l1 -0.4l1 -0.7l1 1.3l1 0.1l1 0.2l1 0.6l1.5 -1.8l1.5 -0.7l1.5 0.4l1.5 3l1.5 -2.2l1.5 1l1.5 -0.2l1.5 0.6l1.5 2l1.5 -2.7l1.5 0.1l1.5 -0.4l1.5 0.5l1.5 0.1l1.5 -1l1.5 1.8l1.5 -0.1l1.5 -0.4l1.5 -0.4l1.5 0l1.5 -1l1.5 1.9l1.5 -1.3l1.5 0.2l1.5 1.1l1.5 -1.5l1.5 0.3l1.5 1.1l1.5 0.8l1.5 -1.9l1.5 1.4l1.5 -1.3l1.5 0.8l1.5 0.1l1.5 -1.3l1.5 1.6l1.5 0.6l1.5 -1.4l1.5 0.2l1.5 -1.1l1.5 2.2l1.5 -1.3l1.5 -0.8l1.5 1.7l1.5 -1.5l1.5 0.8l1.5 -1.1l1.5 2.5l1.5 0.6l1.5 -2.2l1.5 0l1.5 0.1l1.5 0l1.5 0.8l1.5 0.7l1.5 -1.9l1.5 1l1.5 -1.8l1.5 2.6l1.5 -1l1.5 -0.4l1.5 1.8l1.5 -1.1l1.5 1.2l1.5 -0.1l1.5 0.5l1.5 -2l1.5 0.5l1.5 0.1l1.5 -0.6l1.5 1.4l1.5 -1.7l1.5 1.4l1.5 0.3l1.5 -2.3l1.5 0.9l1.5 0.2l1.5 0.4l1.5 0.8l1.5 -0.4l1.5 0.2l1.5 -0.3l1.5 0.3l1.5 0.5l1.5 0.2l1.5 -1.1l1.5 0.3l1.5 -0.6l1.5 0.3l1.5 -1l1.5 1.8l1.5 -0.1l1.5 -0.4l1.5 -0.3l1.5 0l1.5 -0.2l1.5 -0.7l1.5 2.3l1.5 1.3l0.1 -3.3l1.4 0.1l1.5 1.4l1.5 0.2l1.5 -1.7l1.5 -0.3l1.5 1.8l1.5 -2l1.5 2.6l1.5 -1.3l1.5 0.5l1.5 0l1.5 -0.4l1.5 0.5l1.5 -0.1l1.5 1.3l1.5 -1.1l1.5 0l1.5 -0.4l1.5 -0.1l1.5 -0.1l1.5 0.5l1.5 1.3l1.5 -0.5l1.5 -0.6l1.5 1.1l1.5 -0.5l1.5 -0.5l1.5 -0.3l1.5 -0.6l1.5 1l1.5 -0.4l1.5 -1l1.5 0.2l1.5 2.4l1.5 -1.4l1.5 0.3l1.5 -0.1l1.5 -0.4l1.5 0.7l1.5 0.5l1.5 -1l1.5 0.7l1.5 0.4l1.5 -1l1.5 0.6l1.5 -0.6l1.5 1.1l1.5 -1l1.5 0.9l1.5 -1.7l1.5 1.6l1.5 -1.4l1.5 -0.3l1.5 0l1.5 1.2l1.5 -1.1l1.5 2l1.5 -0.4l1.5 -0.5l1.5 -1.3l1.5 1.2l1.5 -0.3l1.5 -0.6l1.5 1.8l1.5 1.4l1.5 -1.9l1.5 1.1l1.5 0.3l1.5 -1.9l1.5 0.3l1.5 0.3l1.5 0.2l1.5 -1.2l1.5 1l1.5 -0.2l1.5 0.9l1.5 -1.8l1.5 0.9l1.5 0.1l1.5 -0.1l1.5 0.5l1.5 -1.2l1.5 2.2l1.5 -2.4l1.5 1.4l1.5 0.3l1.5 0.1l1.5 -1l1.5 -0.7l1.5 0.2l1.5 0.5l1.5 -0.1l1.5 0.6l1.5 0.2l1.5 -0.8l1.5 -0.1l1.5 1.8l1.5 -1.5l1.5 -0.8l1.5 2.5l1.5 -1.9l1.5 -0.1l1.5 1.4l1.5 -1.4l1.5 0.2l1.5 1.5l1.5 -1.3l1.5 2.5l1.5 -1.9l1.5 1.9l1.5 -2l1.5 0.1l1.5 -0.3l1.5 0.4l1.5 0l1.5 0.2l1.5 0.6l1.5 -1.6l1.5 0.2l1.5 -0.8l1.5 2.7l1.5 -1.2l1.5 0.1l1.5 0.2l1.5 0.9l1.5 -0.3l1.5 0.6l1.5 -1l1.5 -0.2l1.5 -0.1l1.5 -1.6l1.5 2.3l1.5 -1.8l1.5 0.5l1.5 1.4l1.5 -0.6l1.5 0.4l1.5 0.6l1.5 0l1.5 -0.2l1.5 -1l1.5 1.8l1.5 -2l1.5 0.6l1.5 0.8l1.5 -0.9l1.5 0l1.5 -0.2l1.5 1.2l1.5 -2.8l1.5 2.7l1.5 -0.1l1.5 -0.8l1.5 0.6l1.5 -1.1l1.5 1.6l1.5 1.5l1.5 -2.9l1.5 1.8l1.5 -1.1l1.5 -0.2l1.5 -0.1l1.5 0.2l1.5 -0.8l1.5 -0.2l1.5 2.1l1.5 -1.3l1.5 0.4l1.5 -0.1l1.5 0.1l1.5 -1.5l1.5 0.6l1.5 1.2l1.5 0.4l1.5 -1.5l1.5 0.2l1.5 -0.5l1.5 1.1l1.5 -0.4l1.5 -0.2l1.5 -0.4l1.5 0.8l1.5 -0.1l1.5 -0.5l1.5 0.9l1.5 -0.7l1.5 1.3l1.5 -0.2l1.5 -0.9l1.5 0.9l1.5 -0.3l1.5 -0.5l1.5 0l1.5 -0.5l1.5 0.5l1.5 1.1l1.5 0.6l1.5 -1.3l1.5 0.6l1.5 0l1.5 0.3l1.5 -0.4l1.5 0.5l1.5 -0.3l1.5 -1.1l1.5 0.9l1.5 -2l1.5 1.4l1.5 0.1l1.5 0.3l1.5 -0.8l1.5 0.9l1.5 0.5l1.5 -1.5l1.5 0.3l1.5 0.6l1.5 0.3l1.5 -0.2l1.5 0.5l1.5 -1.5l1.5 1.4l1.5 0.3l1.5 -0.1l1.5 -0.4l1.5 -0.5l1.5 0.5l1.5 -0.3l1.5 -1.1l1.5 0.8l1.5 0.5l1.5 -0.3l1.5 -0.4l1.5 0.4l1.5 -0.2l1.5 0.2l1.5 0l1.5 0.2l1.5 0.6l1.5 -0.6l1.5 0.1l1.5 -1.2l1.5 -1.4l1.5 1.8l1.5 1l1.5 -0.5l1.5 0l1.5 -0.2l1.5 1.4l1.5 -1.2l1.5 0.5l1.5 0.5l1.5 -0.5l1.5 1.2l1.5 -1.8l1.5 0.8l1.5 0l1.5 -0.8l1.5 0.7l1.5 -0.2l1.5 -0.4l1.5 0.9l1.5 -0.9l1.5 1.8l1.5 -1.7l1.5 0.2l1.5 0.6l1.5 -0.3l1.5 0.3l1.5 -0.6l1.5 -0.7l1.5 -0.8l1.5 1.1l1.5 2.2l1.5 -0.6l1.5 0l1.5 -0.5l1.5 0.1l1.5 0.2l1.5 -1.3l1.5 0.4l1.5 -0.1l1.5 1.6l1.5 -1.8l1.5 1.7l1.5 -1.2l1.5 2.4l1.5 -2.1l1.5 0.1l1.5 0.9l1.5 -0.3l1.5 0l1.5 -1.4l1.5 1.7l1.5 0.5l1.5 -1.2l1.5 -0.2l1.5 -0.3l1.5 1.6l1.5 -0.4l1.5 -0.4l1.5 -1.1l1.5 2l1.5 -0.7l1.5 -0.7l1.5 1l1.5 -1.8l1.5 1.3l1.5 -1.2l1.5 1.9l1.5 -1.1l1.5 1.2l1.5 -1.1l1.5 0.6l1.5 0.6l1.5 -1.4l1.5 0.5l1.5 -0.8l1.5 1l1.5 -1.2l1.5 0.2l1.5 0.2l1.5 1.1l1.5 -1.6l1.5 0.8l1.5 -0.3l1.5 -0.1l1.5 -0.2l1.5 0.6l1.5 0.4l1.5 -1.2l1.5 1.5l1.5 -1.1l1.5 0.9l1.5 1.7l1.5 -2.4l1.5 0.6l1.5 -0.2l1.5 0.8l1.5 -1.1l1.5 -1l1.5 0.1l1.5 1.3l1.5 0l1.5 0.8l0.9 -1.1l0.6 -3.6l1.5 -12.6l1.5 -9.5l1.5 -12.6l1.3 -10.5l0.2 2.3l1.5 13.5l0.3 0.5l1.2 1l1.5 2.1l1.5 1.8l1.5 2.8l0.3 0.7l1.2 0.7l1.5 1.4l1.5 1.8l1.3 -0.1l0.2 -2.1l1.5 -11l0.5 -1.5l1 3.4l1.2 5.1l0.3 0.7l1.5 0.6l1.5 -0.9l1.5 0.8l1.5 1.2l1.5 0.2l1.5 1.3l0.7 -1l0.8 -1.1l1.5 2.5l1.5 -2l1.5 0.6l1.5 1.2l1.5 -0.8l1.5 2.8l1.5 -1.4l1.5 0.5l1.5 -0.5l1.5 2.2l1.5 -1.1l1.5 -0.7l1 1.6l0.5 -2.1l1.5 0.9l1.5 0.7l1.5 0.1l1.5 -0.6l1.5 2l1.5 0.1l1.5 -1.6l1.5 1.2l1.5 -0.5l1.5 0.3l1.5 1l1.5 -0.7l1.5 -0.2l1.5 0.1l1.5 -0.7l1.5 1.9l1.5 -1.2l1.5 1.7l1.5 -1l1.5 0.3l1.5 1.5l1.5 -0.8l1.5 -0.6l1.5 0l1.5 0.8l1.5 0.9l1.5 -1l1.5 -0.8l1.5 -0.7l1.5 0.3l1.5 0.4l1.5 0.3l1.5 -0.6l1.5 1.4l1.5 -1.6l1.5 0.2l1.5 0.9l1.5 0l1.5 -0.7l1.5 1l1.5 -1.8l1.5 2.2l1.5 0.6l1.5 0.1l1.5 -1.1l1.5 1.5l1.5 -1.4l1.5 0.8l1.5 -1.1l1.5 0.2l1.5 0.2l1.5 -1.7l1.5 1.1l1.5 1.4l1.5 -3.4l1.5 2.3l1.5 0.4l1.5 -0.5l1.5 0l1.5 1l1.5 -0.7l1.5 -1.5l1.5 0.7l1.5 0.5l1.5 0.3l1.5 -0.4l1.5 0.4l1.5 1.5l1.5 -3.1l1.5 3.1l1.5 -0.3l1.5 -0.4l1.5 -0.5l1.5 -0.1l1.5 0.2l1.5 0l1.5 -0.6l1.5 1.1l1.5 -1l1.5 0.6l1.5 -0.1l1.5 -0.5l1.5 1.3l1.5 -0.5l1.5 -0.8l1.5 0.8l1.5 -1l1.5 2l1.5 -0.7l1.5 1l1.5 -2l1.5 0.8l1.5 -1.3l1.5 -0.1l1.5 0.9l1.5 0.6l1.5 0.7l1.5 -0.6l1.5 0.9l1.5 -0.1l1.5 -1.4l1.5 0.5l1.5 -0.6l1.5 1.9l1.5 -1.7l1.5 1l1.5 0l1.5 -0.8l1.5 -0.1l1.5 0.6l1.5 -0.8l1.5 -0.4l1.5 0.2l1.5 0.9l1.5 -0.1l1.5 1.2l1.5 -2.6l1.5 1.7l1.5 -1.2l1.5 1.6l1.5 -0.3l1.5 -0.5l1.5 1.2l1.5 -1.2l1.5 0.1l1.5 -0.2l1.5 0.3l1.5 0.5l1.5 0.5l1.5 0.4l1.5 -1.1l1.5 -0.3l1.5 0.3l1.5 -0.1l1.5 0l1.5 0.1l1.5 -0.2l1.5 0.6l1.5 -0.3l1.5 0.2l1.5 -0.8l1.5 1.1l1.5 0.3l1.5 0l1.5 -0.9l1.5 -0.4l1.5 -0.2l1.5 0.1l1.5 0.3l1.5 0.2l1.5 -0.9l1.5 1.9l1.5 -1.5l1.5 0.7l1.5 0.1l1.5 1.2l1.5 0.8l1.5 -1.6l1.5 0.1l1.5 -0.1l1.5 0.1l1.5 0l1.5 2l1.5 -2.5l1.5 0.7l1.5 -0.4l1.5 0.7l1.5 -0.7l1.5 0.7l1.5 -1.3l1.5 2.3l1.5 -1.4l1.5 -1.4l1.5 1.7l1.5 -0.6l1.5 -0.3l1.5 1.3l1.5 -0.5l1.5 0.8l1.5 -1.1l1.5 1l1.5 -0.7l1.5 0.2l1.5 0l1.5 -0.3l1.5 0.1l1.5 0.5l1.5 0.2l1.5 -0.8l1.5 1.9l1.5 -0.4l1.5 -2l1.5 1.7l1.5 -0.8l1.5 0.2l1.5 -0.7l1.5 1.7l1 -1.8l0.5 -11.6l1.5 -37.1l0.5 -10.3l1 -2.8l1.2 -4.6l0.3 1.8l1.5 6.4l1.5 5.1l1.5 5.8l1.5 5.2l0.4 2.5l1.1 0.6l1.5 3.9l1.5 3.6l1.5 0.6l1.1 3.3l0.4 -0.7l1.5 -0.4l1.5 0.6l1.5 -0.1l1.5 1.1l1.5 0.8l1.5 0.5l1.5 -0.6l1.5 -0.3l1.5 1.4l1.5 1.8l1.5 -0.5l0.4 -0.1l1.1 -25.1l0.5 -9.7l1 4.3l1.5 4.4l1.5 7.1l1.5 4.1l1.5 0.8l1.5 1.2l1.5 1.4l1.5 1.8l0.8 -0.7l0.7 -0.8l1.5 1.4l1.5 0.6l1.5 0.9l1.5 -1.4l1.5 2.4l1.5 0l1.5 0.4l1.5 -0.5l1.5 0.3l1.5 0.3l1.5 1.7l1.5 -0.3l1.5 0.8l1.5 0.7l0.5 -1.3l1 0l1.5 1.7l1.5 -2l1.5 0.9l1.5 0.3l1.5 0.2l1.5 0.5l1.5 -0.5l1.5 1.6l1.5 -1.7l1.5 0.5l1.5 -0.6l1.5 0.3l1.5 1.8l1.5 0.4l1.5 -0.2l1.5 1.1l1.5 -0.2l1.5 -0.8l1.5 0.3l1.5 0.3l1.5 1.4l1.5 -1.4l1.5 0.8l1.5 0.5l1.5 0.6l1.5 -0.3l1.5 0.7l0.5 -1.5l1 0.6l1.5 -1.1l1.5 1.5l1.5 1.8l1.5 -1.4l1.5 -0.2l1.5 0.1l1.5 -0.2l1.5 -1.1l1.5 0.4l1.5 0.4l1.5 0.2l1.5 -0.7l1.5 0.4l1.5 -0.4l1.5 -0.5l1.5 0.4l1.5 0l1.5 1.2l1.5 0.4l1.5 -0.5l1.5 -0.5l1.5 -0.3l1.5 -0.7l1.5 0.7l1.5 1.6l1.5 -0.3l1.5 -0.6l1.5 -0.3l1.5 0.3l1.5 0.3l1.5 -0.2l1.5 0.3l1.5 -0.9l1.5 0.5l1.5 -0.3l1.5 1l1.5 -1.7l1.5 1.7l1.5 -1l1.5 -0.3l1.5 0.3l1.5 0.1l1.5 -0.3l1.5 0.5l1.5 -0.6l1.5 -0.7l1.5 1.8l1.5 -0.3l1.5 1l1.5 -1l1.5 -1.7l1.5 2.1l1.5 -1.3l1.5 0.8l1.5 1.2l1.5 -0.8l1.5 -1.4l1.5 0.8l1.5 -0.9l1.5 1.7l1.5 -0.1l1.5 -1.1l1.5 1l1.5 0.3l1.5 -0.1l1.5 -1.1l1.5 -0.1l1.5 -0.4l1.5 -0.2l1.5 1.1l1.5 -0.3l1.5 0.9l1.5 -0.8l1.5 -0.4l1.5 -0.9l1.5 2.1l1.5 -0.8l1.5 -0.1l1.5 -0.5l1.5 0.1l1.5 1l1.5 -1.2l1.5 1l1.5 -0.1l1.5 -0.6l1.5 -0.7l1.5 1.5l1.5 0.8l0.8 -1.7l0.7 -0.3l1.5 1.4l1.5 -0.8l1.5 -0.7l1.5 1.3l1.5 -1.1l1.5 0.6l1.5 -0.6l1.5 -0.3l1.5 0.7l1.5 -0.8l1.5 -0.7l1.5 0.8l1.5 1.2l1.5 -0.2l1.5 0.7l1.5 -0.8l1.5 0.4l1.5 -1l1.5 -0.6l1.5 0.6l1.5 -1l1.5 1.1l1.5 -0.8l1.5 0.3l1.5 -0.9l1.5 0.3l1.5 0.7l1.5 -0.9l1.5 -0.4l1.5 0.6l1.5 0.4l1.5 -0.7l1.5 -0.7l1.5 -0.2l1.5 0.1l1.5 1.8l1.5 -0.7l1.5 0.5l1.5 0.5l1.5 -0.7l1.5 -0.1l1.5 -0.9l1.5 -0.9l1.5 1.4l1.5 -0.6l1.5 0.4l1.5 -1.3l1.5 0.7l1.5 1.4l1.5 -2l1.5 0.6l1.5 0.9l1.5 -1.1l1.5 0.3l1.5 -1.6l1.5 2l1.5 -0.8l1.5 1.3l1.5 -0.9l1.5 -0.4l1.5 0.4l1.5 -0.7l1.5 -0.3l1.5 1.4l1.5 -0.3l1.5 -0.6l1.5 0.5l1.5 0l1.5 -0.3l1.5 -0.4l1.5 -0.1l1.5 0.2l1.5 0l1.5 -0.3l1.5 -0.7l1.5 0.3l1.5 0.2l1.5 -1l1.5 0.5l1.5 0.6l1.5 -0.4l0.7 -0.3l0.8 0.2l1.5 -0.1l1.5 1.1l1.5 -0.9l1.5 -0.9l1.5 0.4l1.5 1.3l1.5 0.1l1.5 -0.3l1.5 -0.4l1.5 0.8l1.5 -0.6l1.5 0.1l1.5 0.4l1.5 -0.3l1.5 1.1l1.5 -0.4l1.5 0.5l1.5 0.2l1.5 1.2l1.5 0.2l1.5 -0.4l1.5 -1.1l1.5 0.7l1.5 0.7l1.5 0l1.5 -1.6l1.5 1.3l1.5 -0.3l1.5 1.2l1.5 -0.1l1.5 -0.7l1.5 1.9l1.5 -1.7l1.5 1.8l1.5 -1.9l1.5 0l1.5 1.3l1.5 -1.4l1.5 0.3l1.5 1.5l1.5 -0.8l1.5 0.5l1.5 -1.1l1.5 2.2l1.5 -0.4l1.5 -0.4l1.5 0.3l1.5 -0.8l1.5 0.1l1.5 -0.7l1.5 1.5l1.5 0.7l1.5 -0.2l1.5 0.3l1.5 0.1l1.5 -0.9l1.5 0l1.5 1.5l1.5 -0.2l1.5 0.7l1.5 -0.7l1.5 -0.4l1.5 1l1.5 -0.7l1.5 -0.6l1.5 0.8l1.5 0l1.5 -0.1l1.5 0.6l1.5 1.1l1.5 1.1l1.5 -0.3l1.5 -1.4l1.5 1.2l1.5 -0.7l1.5 0.4l1.5 -0.7l1.5 0.5l1.5 -1l1.5 2.5l1.5 -1.7l1.5 1.1l1.5 -0.7l1.5 0.7l1.5 -0.8l1.5 0.4l1.5 0.7l1.5 -0.3l1.5 -1.9l1.5 2l1.5 -1.3l1.5 1.2l1.5 0.3l1.5 -0.6l1.5 0.5l1.5 0.2l1.5 0.7l1.5 0.3l1.5 0.2l1.5 -0.7l1.5 1.1l1.5 -2l1.5 1.9l1.5 -1.4l1.5 0.8l1.5 -0.5l1.5 0.2l1.5 -0.6l1.5 1.1l1.5 1l1.5 -1.4l1.5 -0.2l1.5 0l1.5 0.5l1.5 -0.6l1.5 0.2l1.5 0.2l1.5 0.7l1.5 -0.2l1.5 -1.3l1.5 0.3l1.5 0.5l1.5 0.6l1.5 0.2l1.5 -0.8l1.5 1.8l1.5 -1.4l1.5 1.3l1.5 0.2l1.5 0.2l1.5 -0.9l1.5 0.4l1.5 -1.3l1.5 -0.3l1.5 0.8l1.5 0.9l1.5 0.1l1.5 -0.7l1.5 0.8l1.5 -0.3l1.5 0.7l1.5 -2l1.5 0.7l1.5 0l1.5 0.1l1.5 1.9l1.5 -1.7l1.5 0.1l1.5 0.4l1.5 0.9l1.5 -0.9l1.5 0.9l1.5 -0.1l1.5 -1l1.5 -1.2l1.5 0.8l1.5 -0.3l1.5 2.1l1.5 -1.4l1.5 -0.1l1.5 1.1l1.5 -0.3l1.5 -0.7l1.5 1.3l1.5 -0.3l1.5 -0.1l1.5 -0.5l1.5 0.2l1.5 -0.5l1.5 1.6l1.5 0l1.5 -1l1.5 0.7l1.5 2.3l1.5 -3l1.5 -0.3l1.5 1.6l1.5 -0.5l1.5 0.2l1.5 1l1.5 -0.3l1.5 0.8l1.5 -0.3l1.5 0.5l1.5 -0.7l1.5 -1.6l1.5 2.4l1.5 -2.1l1.5 1.9l1.5 -0.5l1.5 -1.1l1.5 1l1.5 0.6l1.5 -1.2l1.5 0.8l1.5 -0.5l1.5 -0.1l1.5 0.2l1.5 1.3l1.5 -0.4l1.5 -0.5l1.5 0l1.5 0.3l1.5 0.2l1.5 0l1.5 -1.1l1.5 2l1.5 -1l1.5 -1l1.5 2.1l1.5 -1.4l1.5 0.5l1.5 -0.1l1.5 -0.3l1.5 0.9l1.5 -0.5l1.5 0.1l1.5 -0.4l1.5 0.6l1.5 -0.4l1.5 0.8l1.5 1l1.5 -0.1l1.5 -0.3l1.5 -1.1l1.5 1.7l1.5 0l1.5 0.8l1.5 -2.9l1.5 1.5l1.5 -0.3l1.5 0.8l1.5 -1.5l1.5 0.6l1.5 1.9l1.5 -0.7l1.5 -1.9l1.5 1.3l1.5 1l1.5 -1.3l1.5 0.9l1.5 -0.4l1.5 -1l1.5 0.5l1.5 1.2l1.5 0.2l1.5 -1.1l1.5 1.3l1.5 -1.1l1.5 0.7l1.5 -0.2l1.5 -0.8l1.5 1.1l1.5 -0.4l1.5 -1.4l1.5 1.4l1.5 0.2l1.5 0l1.5 -0.1l1.5 0.2l1.5 -1.1l1.5 2.2l1.5 -0.6l1.5 0.1l1.5 -0.4l1.5 0.4l1.5 -0.1l1.5 -0.5l0.5 -0.2l1 -5.6l1.5 -9.4l1.5 -10.5l1.5 -9.2l1.5 -12l1.5 -9.3l1.5 -10.2l1.5 -8.8l1.5 -9.7l1.5 -11.5l1.5 -9.1l0.5 -4l1 0.9l1.5 2.8l1.5 1.7l1.5 4l1.5 1.7l1.5 2.7" stroke="#506ccf" stroke-width="1.5" fill="none" stroke-linejoin="round"/>
<path d="M34 266.8l1 -1.9l1 -0.6l1 4.3l1 -0.7l1 3.9l1 2.2l1 -3.8l1 -4.7l1 -1.5l1 -4.2l1 -2.9l1 -1.3l1 1.7l1 3.7l1 4.3l1 2.6l1 -2.9l1 -5l1 -2.5l1 -0.7l1 1.8l1 -4l1 -1.6l1 -1.3l1 1.2l1 -2.3l1 0.9l1 -0.3l1 -2.9l1 3.8l1 -0.8l1 -1.9l1 3.6l1 -3l1 0.5l1 -1l1 -0.7l1 -2.9l1 3.8l1 -2l1 -2.6l1 1l1 0.3l1 -0.3l1 -1.6l1 -2l1 0.5l1 -3.1l1 -0.2l1 0l1 -3.8l1 3l1 -2.6l1 1.8l1 -1.3l1 0.6l1 0.1l1 -2.7l1 -0.6l1 -0.3l1 1.5l1 2.7l1 1l1 2.4l1 -0.6l1 -3.8l1 -1.3l1 -6.9l1 -3.7l1 -2.5l0.4 1.3l0.6 4.7l1 0l1 4.7l1 -7.5l1 2.9l1 3.1l1 -0.2l1 -1.9l1 -12.6l1 10.1l0.9 -3.3l0.1 1.1l1 8.1l1 2.8l1 -0.3l1 2.9l1 -1.8l1 -4.1l1 4.2l1 5.3l1 -11.4l1 -3.1l1 -4.5l0.8 -5.1l0.2 9.6l1 3.8l1 7.7l1 2.9l1 5.6l1 -9.7l1 7l1 -4l1 8.9l1 -6.2l1 7.5l0.2 0.2l0.8 -2.5l1 8.4l1 -3.5l1 -1.6l1 11.3l1 -8.5l1 0.3l0.6 2l0.4 1.3l1 12.1l1 -12.1l1 11.9l1 4.9l1 -8l1 0.6l1 10.8l1 -10.7l1 8.8l1 7.3l1 -3.2l1 -2l1 1.1l1 3.3l0.5 -1.3l0.5 7.2l1 -2.4l1 -13.9l1 12.6l1 2.3l1 6.5l1 -5.7l1 0.1l1 4.6l1 8.1l1 -3.4l1 6.4l1 -3.4l1 -4.2l1 0.3l0.4 14.9l0.6 -15.1l1 6l1 0.6l1 -2.6l1 2.3l1 3.3l1 11.8l1 -12.8l1 -3.2l0.3 2.9l0.7 3.4l1 -9.2l1 1.4l1 -6.2l1 10.8l1 -2.6l1 0.3l1 -11.9l1 7.2l0.3 -4.7l0.7 -1.7l1 4.1l1 4.4l1 -2.1l1 1.1l1 -3.9l1 -2.3l0.7 -0.3l0.3 -0.3l1 -0.2l1 1.1l1 0.5l1 2.9l1 -0.1l1 -1.2l1 1.6l1 2.3l0.6 -1.6l0.4 2.4l1 -1.3l1 0.5l1 -2.7l1 3.3l1 -0.3l1 0.3l1 -0.1l1 0.1l1 -0.5l1 2l1 -0.3l1 -1l1 0.1l1 1.3l1 0.7l1 -1.9l1 0.6l1 3.3l1 -0.8l1 3l1 -4l1 1.4l1 -0.3l1 1.1l1 0.8l1 0.1l1 -2.1l1 2.4l1 -1.9l1 1.6l1 0.2l1 0.7l1 -1.2l1 1.9l1 -1.1l1 0.1l1 -0.2l1 -0.7l1 1.7l1 -0.2l1 0.2l1 1.4l1 -2.3l1 0.7l1 0.3l1 0.7l1 -0.8l1 1l1 -0.3l1 -1.9l1 1l1 -1l1 1.5l1 0l0.3 0.9l0.7 -33.1l1 9.4l1 10.6l0.3 2.3l0.7 -1.4l1 0.6l1 1l1 1.3l1 -1.4l1 0.1l1 0.4l1 0.6l1 -0.7l1 0.4l1 -0.5l1 0l1 -0.1l1 1.4l1 -0.9l1 1l1 0l1 0.7l1 -2.8l1 1.7l1 0l1 1.1l1 1l1 1.7l1 -0.5l1 0.1l1 -0.6l1 -0.3l1 1l1 -2.1l1 2.8l1 -0.6l1 0.7l1 -1.2l1 0.1l1 0.5l1 0.6l1 0.4l1 -0.4l1 0.6l1 0.4l1 -1.3l1 1l1 -1.1l1 1l1 1.3l1 -1.2l1 2.4l1 -0.9l1 0.6l1 -0.4l1 0.9l1 0.4l1 -0.8l1 -0.5l1 0l1 2l1 -1.6l1 -0.2l1 -0.2l1 -0.7l1 1l1 0.8l1 -0.6l1 -0.1l1 1l1 0.2l0.3 -0.6l0.7 -10.9l0.8 -14.2l0.2 2.4l1 3.4l1 5.3l0.7 3.8l0.3 -0.3l1 -0.4l1 2.8l1 -0.2l1 -2.3l1 1.6l1 -0.8l1 1.4l1 -1l1 1.7l1 0.1l1 1.2l1 -0.3l1 -1.1l1 1.3l1 -1l1 0.5l1 -0.2l1 -0.8l1 1.9l1 -1.9l1 1.5l1 0.7l1 -0.2l1 -1.1l1 0.9l1 1.2l1 0.6l1 0.6l1 -2.4l1 1.8l1 -0.6l1 1.1l1 -1.8l1 1.3l1 0.8l1 -0.9l1 0.3l1 -0.3l1 1.7l1 -1.7l1 0.4l1 0.7l1 0l1 1.8l1 -1.3l1 -0.8l1 1.1l1 -0.1l1 0l1 -0.2l1 0.5l1 -1.1l1 0l1 0.6l1 -0.5l1 1.4l1 0.9l1 -0.5l1 -0.5l1 -0.2l1 -0.8l1 -0.6l1.5 1.3l1.5 -1.6l1.5 1.3l1.5 -0.3l1.5 0.7l1.5 -0.5l1.5 0.1l1.5 -0.4l1.5 -0.7l1.5 1.1l1.5 1l1.5 0.4l1.5 0.4l1.5 -1.6l1.5 -0.1l1.5 0.9l1.5 -1l1.5 2l1.5 -1.7l1.5 -1.3l1.5 0.7l1.5 1.6l1.5 -2.3l1.5 1.6l1.5 -1l1.5 2.3l1.5 -1.5l1.5 -0.4l1.5 -0.4l1.5 0.7l1.5 -1.4l1.5 1.5l1.5 1.9l1.5 -1.6l1.5 -0.2l1.5 -0.6l1.5 1.2l1.5 -0.6l1.5 -0.2l1.5 1.7l1.5 -0.6l1.5 -0.9l1.5 1.6l1.5 -1.3l1.5 0.3l1.5 -0.4l1.5 0.9l1.5 -0.3l1.5 -0.5l1.5 0.9l1.5 -0.8l1.5 0.5l1.5 1.2l1.5 -1.9l1.5 0l1.5 0.5l1.5 0l1.5 1.4l1.5 -2.1l1.5 2.9l1.5 -0.5l1.5 -1.4l1.5 0.4l1.5 -0.5l1.5 0.7l1.5 -0.1l1.5 0l1.5 -0.1l1.5 0.8l1.5 -1.6l1.5 0.8l1.5 -0.4l1.5 0.4l1.5 0.4l1.5 -0.2l1.5 0.2l1.5 -0.9l1.5 0.5l1.5 -0.4l1.5 -0.5l1.5 0.3l1.5 0.1l1.5 0.4l1.5 -0.9l1.5 1.1l1.5 -0.5l1.5 0.2l1.5 0.8l1.5 0.7l1.5 -0.6l1.5 -0.6l1.5 -0.1l1.5 1.3l1.5 -2.2l1.5 1.8l1.5 -2l1.5 0.5l1.5 0.3l1.5 0l0.1 1.4l1.4 -0.7l1.5 -0.3l1.5 0.9l1.5 -0.7l1.5 -0.6l1.5 1.4l1.5 0.3l1.5 -0.1l1.5 -1.8l1.5 2.2l1.5 -1.7l1.5 1l1.5 0.4l1.5 0.9l1.5 -2.8l1.5 0.4l1.5 1.5l1.5 -0.6l1.5 -0.6l1.5 -1.8l1.5 2.6l1.5 -0.3l1.5 -1.7l1.5 4l1.5 -3.6l1.5 1.5l1.5 0.5l1.5 0l1.5 0.2l1.5 -1l1.5 -0.6l1.5 0.5l1.5 -1.1l1.5 0.9l1.5 2.5l1.5 -2.1l1.5 0.4l1.5 1.3l1.5 -0.7l1.5 -0.6l1.5 0.6l1.5 -0.7l1.5 -0.3l1.5 1.3l1.5 -0.6l1.5 1l1.5 -1.4l1.5 0.1l1.5 0.6l1.5 -0.3l1.5 0.1l1.5 -0.6l1.5 0.7l1.5 0l1.5 0.9l1.5 -1.2l1.5 -1.1l1.5 1.7l1.5 1.5l1.5 -2.1l1.5 -0.4l1.5 0.4l1.5 -2.1l1.5 2l1.5 0.2l1.5 -0.9l1.5 1.6l1.5 -1.1l1.5 -0.7l1.5 0.9l1.5 0.9l1.5 1.1l1.5 -0.4l1.5 -0.7l1.5 -0.4l1.5 0l1.5 0.7l1.5 -1.2l1.5 0.5l1.5 0.4l1.5 -1.3l1.5 0.3l1.5 0.7l1.5 -0.1l1.5 0.2l1.5 -0.1l1.5 0.5l1.5 1.4l1.5 -0.4l1.5 -2.3l1.5 1.2l1.5 0.1l1.5 0.1l1.5 -0.9l1.5 1l1.5 0l1.5 -0.7l1.5 0.5l1.5 -2.2l1.5 0.8l1.5 1.3l1.5 0.3l1.5 -0.3l1.5 -0.2l1.5 0.6l1.5 0.7l1.5 -0.1l1.5 -0.6l1.5 -0.2l1.5 1.2l1.5 -0.3l1.5 0.2l1.5 -1l1.5 -0.5l1.5 0.6l1.5 -0.6l1.5 1.3l1.5 -0.2l1.5 -2.3l1.5 2.2l1.5 0.6l1.5 -0.1l1.5 -1l1.5 -0.3l1.5 1.2l1.5 0l1.5 -0.7l1.5 -0.9l1.5 -0.3l1.5 1.2l1.5 -0.8l1.5 0.2l1.5 1l1.5 0.5l1.5 -2.1l1.5 0.8l1.5 1.3l1.5 -1.2l1.5 -0.4l1.5 0.8l1.5 -1.2l1.5 0l1.5 1l1.5 1.3l1.5 -0.2l1.5 -0.5l1.5 0.9l1.5 -1.2l1.5 -0.7l1.5 -0.4l1.5 1.3l1.5 0.4l1.5 -0.3l1.5 -0.3l1.5 -0.2l1.5 1.1l1.5 -0.7l1.5 -1l1.5 2.1l1.5 -1.4l1.5 0.8l1.5 -0.2l1.5 0.9l1.5 -0.7l1.5 0.7l1.5 -0.7l1.5 -0.6l1.5 -0.1l1.5 0.8l1.5 -1.2l1.5 1.2l1.5 -0.8l1.5 -0.5l1.5 0.1l1.5 0.6l1.5 1.5l1.5 -0.6l1.5 -0.4l1.5 -0.6l1.5 2l1.5 -1.7l1.5 0.2l1.5 -0.4l1.5 1.2l1.5 -0.8l1.5 -0.5l1.5 0.4l1.5 -0.7l1.5 0.1l1.5 0.8l1.5 -1.9l1.5 3l1.5 0.6l1.5 -2.2l1.5 0.7l1.5 -0.9l1.5 1.3l1.5 0.1l1.5 0.5l1.5 -1.7l1.5 0.3l1.5 -0.3l1.5 0.1l1.5 1.9l1.5 -1.8l1.5 0.2l1.5 -0.3l1.5 0.9l1.5 1.3l1.5 -1l1.5 0.3l1.5 -1.8l1.5 1.6l1.5 -0.6l1.5 1l1.5 -0.2l1.5 -0.4l1.5 -1.7l1.5 1.3l1.5 -0.4l1.5 0.9l1.5 -0.2l1.5 0.8l1.5 -2.1l1.5 0.3l1.5 0.2l1.5 0.1l1.5 -0.3l1.5 0.6l1.5 0.3l1.5 1l1.5 -0.9l1.5 0.1l1.5 -1.6l1.5 -0.7l1.5 0.9l1.5 1.4l1.5 -1.9l1.5 2l1.5 -0.3l1.5 0.2l1.5 -0.5l1.5 0.3l1.5 0.9l1.5 -0.4l1.5 -0.3l1.5 -0.3l1.5 0.4l1.5 0.7l1.5 -1l1.5 -0.3l1.5 -0.4l1.5 1.1l1.5 -0.5l1.5 -0.2l1.5 1.6l1.5 -1.1l1.5 -1.1l1.5 0.9l1.5 1.8l1.5 -1.5l1.5 -0.9l1.5 0.1l1.5 1.3l1.5 -0.1l1.5 -0.1l1.5 -0.2l1.5 0.4l1.5 0.7l1.5 -0.9l1.5 -0.5l1.5 -0.9l1.5 1.3l1.5 0.8l1.5 -0.6l1.5 -1.3l1.5 1.1l1.5 0.9l1.5 -1.3l1.5 0.9l1.5 0.5l1.5 0.4l1.5 -2.3l1.5 -0.1l1.5 1.5l1.5 0.3l1.5 -0.8l1.5 0.2l1.5 -0.3l1.5 1.1l1.5 -2.5l1.5 1.7l1.5 -1.1l1.5 0.4l1.5 -0.7l1.5 0.5l1.5 0.6l1.5 0l1.5 1.3l1.5 -1.2l1.5 0.6l1.5 0.3l1.5 0.2l1.5 0.8l1.5 -1l1.5 -0.1l1.5 -0.3l1.5 0l1.5 -0.1l1.5 0.7l1.5 -0.8l1.5 0.2l1.5 0.1l1.5 0.7l1.5 -0.7l1.5 1l1.5 -1.1l1.5 0.8l1.5 0.9l1.5 -1.3l1.5 -0.3l1.5 -0.8l1.5 1.3l1.5 -0.5l1.5 0.6l1.5 -1.1l1.5 0.9l1.5 1l1.5 -0.8l1.5 -0.4l1.5 -0.6l1.5 0.9l1.5 0.4l1.5 -0.1l1.5 -1.2l1.5 0.1l1.5 0.2l1.5 0.1l1.5 0.6l1.5 0.3l1.5 1.1l1.5 -1.3l1.5 0.8l1.5 -2.3l0.9 2.3l0.6 -5.1l1.5 -11.7l1.5 -11.2l1.5 -11.6l1.3 -8.9l0.2 0.9l1.5 10.7l0.3 2.5l1.2 3.8l1.5 0.5l1.5 2.8l1.5 0.5l0.3 0.1l1.2 1.2l1.5 1.7l1.5 1.2l1.3 0.4l0.2 -0.5l1.5 -10.1l0.5 -4.5l1 3.8l1.2 4.2l0.3 1.2l1.5 0.7l1.5 0l1.5 0.5l1.5 0.8l1.5 0.6l1.5 0.9l0.7 0.4l0.8 -0.2l1.5 0.7l1.5 -1.3l1.5 1.3l1.5 0l1.5 -0.9l1.5 0.4l1.5 0.9l1.5 0l1.5 -0.7l1.5 0.8l1.5 1.8l1.5 -0.4l1 -0.4l0.5 0.9l1.5 -1.5l1.5 0.6l1.5 1l1.5 -0.7l1.5 -0.3l1.5 1.5l1.5 0.7l1.5 -3l1.5 2l1.5 -1.1l1.5 0.9l1.5 -0.6l1.5 3.1l1.5 -2.2l1.5 0.6l1.5 -0.4l1.5 -0.1l1.5 0.5l1.5 0.6l1.5 1.2l1.5 -1l1.5 1l1.5 -1.9l1.5 0.9l1.5 -0.3l1.5 -0.8l1.5 4l1.5 -2.7l1.5 0.5l1.5 -0.6l1.5 0l1.5 -0.4l1.5 1.4l1.5 -1.2l1.5 0.2l1.5 0.1l1.5 -1.1l1.5 1l1.5 -0.2l1.5 0.6l1.5 -0.5l1.5 0.4l1.5 0.5l1.5 0.4l1.5 -1.1l1.5 1.3l1.5 -1.4l1.5 0.6l1.5 0.2l1.5 0l1.5 -1.9l1.5 1.1l1.5 0.6l1.5 0.8l1.5 -1.1l1.5 1.8l1.5 -2.3l1.5 1.5l1.5 0.3l1.5 -0.4l1.5 0.2l1.5 0.4l1.5 -1.3l1.5 0.9l1.5 0.3l1.5 -1l1.5 -1.4l1.5 1l1.5 0.3l1.5 0l1.5 0.9l1.5 -1.1l1.5 2.2l1.5 -1.5l1.5 -1.3l1.5 0.9l1.5 1.4l1.5 -0.5l1.5 -1.3l1.5 1.5l1.5 -1.1l1.5 1.9l1.5 -1.9l1.5 0.9l1.5 0.1l1.5 -0.7l1.5 0.4l1.5 1l1.5 -0.3l1.5 -0.3l1.5 0.3l1.5 0.8l1.5 -0.8l1.5 -0.4l1.5 0l1.5 -1.1l1.5 1.4l1.5 -0.3l1.5 0.7l1.5 -1.1l1.5 0.5l1.5 -1.2l1.5 1.6l1.5 -1l1.5 0.7l1.5 0.7l1.5 -0.9l1.5 0l1.5 0.6l1.5 0.3l1.5 -2.5l1.5 0.8l1.5 1.2l1.5 0.2l1.5 -0.8l1.5 0.5l1.5 0l1.5 1.9l1.5 -1.8l1.5 -0.8l1.5 -0.3l1.5 0.1l1.5 1.9l1.5 -1.1l1.5 1.7l1.5 -0.9l1.5 -0.2l1.5 0.2l1.5 0.1l1.5 0.1l1.5 -1.3l1.5 0.3l1.5 0.1l1.5 0.5l1.5 -0.3l1.5 -0.7l1.5 0.4l1.5 1.8l1.5 0.2l1.5 -2.2l1.5 0.8l1.5 -0.3l1.5 -0.5l1.5 1.2l1.5 -0.5l1.5 1.3l1.5 -0.8l1.5 -0.5l1.5 -1.6l1.5 1.8l1.5 0.7l1.5 -1.2l1.5 1.1l1.5 -0.2l1.5 -1.6l1.5 1.2l1.5 0.5l1.5 0.4l1.5 -0.3l1.5 0l1.5 -0.1l1.5 0.1l1.5 0l1.5 -1l1.5 1l1.5 -0.9l1.5 0.7l1.5 -0.6l1.5 0.7l1.5 -0.1l1.5 0.6l1.5 -0.2l1.5 0.3l1.5 -0.7l1.5 0.1l1.5 -0.1l1.5 -0.7l1.5 0.9l1.5 0.9l1.5 -0.2l1.5 -1.1l1.5 0.8l1.5 0.3l1.5 -1.6l1.5 1.2l1.5 0l1.5 0.3l1.5 -0.2l1.5 -1.4l1.5 -0.1l1.5 2.9l1.5 -1.7l1.5 1.2l1.5 0l1.5 -0.8l1.5 -0.9l1.5 1.8l1 -0.9l0.5 0.3l1.5 -42.6l0.5 -13.9l1 -3.1l1.5 -6.4l1.5 6.5l1.5 7.3l1.5 2.8l1.5 3.5l1.5 2.2l1.5 2.9l1.5 4.4l0.3 0.2l1.2 0.5l1.5 0.9l1.5 -0.3l1.5 1.5l1.5 1.1l1.5 0.2l1.5 1.4l1 1.5l0.5 -0.6l1.5 2.2l1.5 0.9l1.5 0.3l1.5 0.7l1.5 1.4l0.4 0.1l1.1 -21.2l0.5 -10.7l1 2.3l1.5 6.6l1.5 1.9l1.5 4.1l1 1.6l0.5 1l1.5 0.9l1.5 1.9l1.5 -1.6l0.8 1.5l0.7 0.8l1.5 0.4l1.5 0.1l1.5 0.7l1.5 -0.5l1.5 1.6l1.5 1l1.5 -0.4l1.5 -0.3l1.5 1.6l1.5 -0.3l1.5 -0.8l1.5 0.6l1.5 0.3l1.5 0.7l0.5 1l1 -1.2l1.5 0.7l1.5 0.5l1.5 -0.6l1.5 0.7l1.5 1l1.5 0.6l1.5 -2l1.5 2.1l1.5 -0.6l1.5 1.3l1.5 -0.3l1.5 1.2l1.5 -1l1.5 -0.4l1.5 -0.2l1.5 -0.2l1.5 1.5l1.5 0.1l1.5 0.3l1.5 -0.2l1.5 -1l1.5 1.2l1.5 0.4l1.5 0.7l1.5 0.7l1.5 0.7l1.5 -0.6l0.5 -1.6l1 0.8l1.5 -0.8l1.5 1l1.5 -0.4l1.5 1l1.5 -0.3l1.5 0.9l1.5 0l1.5 -1.1l1.5 0.9l1.5 -0.7l1.5 0.3l1.5 0.5l1.5 -1.7l1.5 0.7l1.5 1.2l1.5 -1.6l1.5 0.6l1.5 -0.1l1.5 -0.4l1.5 -0.6l1.5 0.5l1.5 -0.1l1.5 1.5l1.5 -0.5l1.5 0.2l1.5 -1.4l1.5 1.1l1.5 -0.4l1.5 0.8l1.5 -1l1.5 1.2l1.5 0.6l1.5 0.2l1.5 -2l1.5 -0.3l1.5 -0.3l1.5 1.6l1.5 -0.3l1.5 -0.3l1.5 -0.9l1.5 1.5l1.5 0.3l1.5 -1.1l1.5 -0.1l1.5 0.8l1.5 -0.6l1.5 0.5l1.5 -1.3l1.5 0.5l1.5 -0.4l1.5 -0.1l1.5 0.3l1.5 0l1.5 0.6l1.5 -0.5l1.5 0.3l1.5 -0.5l1.5 0l1.5 2l1.5 -1.5l1.5 1.8l1.5 -0.9l1.5 -2.5l1.5 0.9l1.5 0.3l1.5 0.4l1.5 0l1.5 -0.2l1.5 1.3l1.5 -1l1.5 0.7l1.5 -1.3l1.5 0l1.5 1.4l1.5 -1.2l1.5 -0.6l1.5 0.8l1.5 0.9l1.5 -0.8l1.5 -0.3l1.5 0.7l1.5 0.1l1.5 -1l1.5 -0.3l1.5 0.2l1.5 2.3l1.5 -1.8l1.5 1.6l0.8 -1.3l0.7 0.4l1.5 -1.7l1.5 1.6l1.5 -0.1l1.5 -0.4l1.5 -0.2l1.5 -0.9l1.5 -0.2l1.5 1.1l1.5 -0.7l1.5 0.3l1.5 -0.1l1.5 -0.2l1.5 -0.2l1.5 1.7l1.5 -2.1l1.5 0.4l1.5 0.2l1.5 -0.6l1.5 0.1l1.5 1.1l1.5 0l1.5 -0.7l1.5 2l1.5 -1.7l1.5 0.3l1.5 -1.4l1.5 1.3l1.5 0.4l1.5 -1.5l1.5 1.5l1.5 -1.8l1.5 -0.4l1.5 0.7l1.5 -0.6l1.5 0.9l1.5 -1.3l1.5 0.9l1.5 -1.4l1.5 1.3l1.5 0.7l1.5 -1l1.5 0.4l1.5 0.5l1.5 -1.6l1.5 -0.1l1.5 0.9l1.5 0.1l1.5 -0.5l1.5 -0.7l1.5 1.4l1.5 -1.9l1.5 0.7l1.5 0.1l1.5 0.5l1.5 -0.8l1.5 -0.3l1.5 1.9l1.5 -2l1.5 1.1l1.5 -0.6l1.5 -0.1l1.5 0.3l1.5 -0.1l1.5 0.3l1.5 -2.1l1.5 1.7l1.5 -0.1l1.5 -0.9l1.5 0.2l1.5 1.7l1.5 -0.5l1.5 -0.9l1.5 -0.3l1.5 -0.4l1.5 1.2l1.5 -1.1l1.5 -0.1l1.5 1.3l1.5 -1l1.5 0l1.5 1.4l0.7 -2.2l0.8 1l1.5 0.1l1.5 0.1l1.5 -1.2l1.5 0.9l1.5 -0.1l1.5 1.7l1.5 -0.5l1.5 -1.1l1.5 1.2l1.5 0.1l1.5 -0.4l1.5 0.1l1.5 0.2l1.5 -0.7l1.5 0.8l1.5 1.3l1.5 0.6l1.5 0.4l1.5 -1.4l1.5 0.8l1.5 -2l1.5 1.4l1.5 -0.7l1.5 1.4l1.5 -1.7l1.5 0.5l1.5 0.1l1.5 1.1l1.5 0.5l1.5 -1l1.5 2.2l1.5 -0.9l1.5 -0.4l1.5 0.7l1.5 -0.3l1.5 0.4l1.5 -0.4l1.5 1.6l1.5 -0.4l1.5 -1l1.5 1.3l1.5 0l1.5 -1.2l1.5 0.2l1.5 0l1.5 -1.1l1.5 2.3l1.5 -0.5l1.5 1.2l1.5 -1.1l1.5 0.7l1.5 0.7l1.5 0.4l1.5 -0.4l1.5 -0.8l1.5 2.3l1.5 -0.8l1.5 0.4l1.5 0.2l1.5 -0.1l1.5 -0.7l1.5 0.2l1.5 0.2l1.5 -1.4l1.5 1.7l1.5 -1l1.5 1.2l1.5 -0.7l1.5 1.4l1.5 -0.6l1.5 2.2l1.5 -1.4l1.5 0.4l1.5 -0.8l1.5 0.7l1.5 0.2l1.5 0l1.5 -0.3l1.5 -0.5l1.5 0.9l1.5 -1l1.5 0l1.5 1.2l1.5 -0.5l1.5 0.8l1.5 -0.2l1.5 -0.3l1.5 0.5l1.5 -0.4l1.5 -0.2l1.5 1.3l1.5 -0.3l1.5 -0.7l1.5 0.7l1.5 0.5l1.5 0.1l1.5 0l1.5 0l1.5 0.2l1.5 -0.7l1.5 -0.2l1.5 1.1l1.5 -0.7l1.5 0.4l1.5 0.5l1.5 0.3l1.5 0.2l1.5 -1.2l1.5 0.3l1.5 0.6l1.5 -1.4l1.5 0.1l1.5 1.3l1.5 -0.7l1.5 -0.1l1.5 1.3l1.5 -0.1l1.5 0.3l1.5 -0.8l1.5 0.1l1.5 0.1l1.5 0.5l1.5 -1.6l1.5 0.9l1.5 1l1.5 -1l1.5 0.5l1.5 0.1l1.5 0.2l1.5 -0.6l1.5 -0.4l1.5 2.6l1.5 -2.1l1.5 1.9l1.5 -2.2l1.5 1.5l1.5 -0.1l1.5 1.6l1.5 0.1l1.5 -0.6l1.5 -1.4l1.5 0.2l1.5 0.1l1.5 0.2l1.5 0.6l1.5 -0.8l1.5 0.4l1.5 1.1l1.5 0l1.5 -2.1l1.5 0.8l1.5 0.7l1.5 1.3l1.5 -1.1l1.5 1.5l1.5 -1.1l1.5 0.7l1.5 -1.6l1.5 0.3l1.5 0.9l1.5 -0.4l1.5 -1.4l1.5 1.5l1.5 0.6l1.5 0.6l1.5 -1l1.5 1.5l1.5 -1.2l1.5 0.7l1.5 -0.4l1.5 0.1l1.5 0.1l1.5 -0.3l1.5 1.4l1.5 -0.2l1.5 0.1l1.5 -1l1.5 -0.4l1.5 0.4l1.5 0.1l1.5 0.2l1.5 0.6l1.5 -1.4l1.5 0.2l1.5 0.7l1.5 0.4l1.5 1.1l1.5 -1l1.5 -0.8l1.5 0.1l1.5 0.4l1.5 0.8l1.5 0.4l1.5 -0.2l1.5 -0.3l1.5 0.4l1.5 0.1l1.5 0.4l1.5 -0.3l1.5 -0.7l1.5 -0.2l1.5 1.7l1.5 -1.1l1.5 -0.2l1.5 0.1l1.5 0.9l1.5 -0.8l1.5 0.5l1.5 -0.1l1.5 0.6l1.5 -1l1.5 0.9l1.5 0.6l1.5 0.3l1.5 -0.3l1.5 -0.1l1.5 1l1.5 -0.6l1.5 0.5l1.5 -1.8l1.5 0.1l1.5 1.4l1.5 -0.6l1.5 0l1.5 -0.3l1.5 1.6l1.5 -1.9l1.5 0.8l1.5 -1.1l1.5 1l1.5 1.8l1.5 0.3l1.5 -1.9l1.5 -0.2l1.5 2l1.5 -1.4l1.5 -0.4l1.5 1.3l1.5 -1.1l1.5 -0.5l1.5 1.7l1.5 -1.1l1.5 0l1.5 1.1l1.5 0l1.5 1.1l1.5 -0.6l1.5 1.2l1.5 -0.1l1.5 0.4l1.5 -0.5l1.5 -0.8l1.5 0.3l1.5 -0.5l1.5 -1.1l1.5 0.1l1.5 1.3l1.5 -1.9l1.5 1.3l1.5 0l1.5 1l1.5 -0.8l1.5 0.7l1.5 -0.4l1.5 -0.4l1.5 0l1.5 -0.7l1.5 1.8l0.5 -0.9l1 0.8l1.5 -10l1.5 -10l1.5 -10.7l1.5 -9.9l1.5 -12.3l1.5 -8.8l1.5 -9.7l1.5 -11.1l1.5 -11.5l1.5 -9.3l1 -7.6l0.5 0.5l1.5 2.8l1.5 0.8l1.5 1l1.5 1.9l1.5 3.4" stroke="#9fbbf2" stroke-width="1.5" fill="none" stroke-linejoin="round"/>
<path d="M34 260.2l1 2.4l1 1.7l1 3l1 2.4l1 -1.3l1 -0.1l1 -0.8l1 -3.4l1 -1.6l1 -3.5l1 -4.5l1 0.4l1 2.4l1 -0.5l1 3.4l1 0.5l1 -2.2l1 -4.3l1 -4.6l1 -1.9l1 0.9l1 0.3l1 2l1 2.3l1 -1.4l1 -4.5l1 1.2l1 -0.1l1 -0.9l1 -1.6l1 0l1 2.7l1 -2.2l1 -2.1l1 1.4l1 -0.3l1 -2.4l1 -1.1l1 3.3l1 -2.5l1 0.6l1 -2l1 -1.9l1 0.9l1 1.1l1 -2.7l1 -1.6l1 1.8l1 -0.5l1 0l1 -1.7l1 -0.6l1 -2.1l1 0l1 -1.7l1 0.2l1 -1.9l1 -3.6l1 -0.6l1 4.6l1 2.7l1 2.3l1 1.1l1 -1l1 -0.9l1 -1.5l1 -0.5l1 -3.9l1 -1.8l1 -1.8l0.4 2l0.6 0.1l1 -5.9l1 5.7l1 -9.5l1 -5.4l1 -0.7l1 5.8l1 16.6l1 3.7l1 -15.9l0.9 4.9l0.1 4.5l1 3.4l1 -2.1l1 -3.3l1 8.4l1 1.1l1 -7.2l1 5.8l1 -11l1 -4.9l1 13.7l1 -4.7l0.8 0.7l0.2 -5.3l1 2.5l1 6.4l1 -1.1l1 12.2l1 -0.3l1 -0.7l1 -5.9l1 9.9l1 9.9l1 -1.4l0.2 -3l0.8 -7.3l1 0.8l1 5.9l1 2.3l1 8.1l1 -10.8l1 -10.7l0.6 -1.7l0.4 7.1l1 2.2l1 14.1l1 6.3l1 -1.9l1 6l1 1.1l1 1.7l1 -4.2l1 -0.6l1 6.6l1 -8.2l1 0l1 10.6l1 3.6l0.5 -4.3l0.5 5.7l1 -5.3l1 6l1 1.6l1 -1l1 1.4l1 1.5l1 -10.5l1 10.6l1 7l1 -2.5l1 -1.8l1 3.8l1 7.1l1 -10.7l0.4 -2.6l0.6 -0.6l1 -1.8l1 9.5l1 -5.5l1 7.3l1 -1.9l1 -3.2l1 4.6l1 -3.2l0.3 -7.3l0.7 9.6l1 5.6l1 -8.3l1 3.8l1 7.8l1 -6.9l1 -1l1 -3.6l1 -3.1l0.3 0.7l0.7 3.5l1 -1.1l1 1l1 -2.1l1 -2.1l1 2l1 -5l0.7 -1.8l0.3 0.8l1 4.3l1 -0.1l1 1.9l1 0.9l1 1l1 -1.8l1 1.9l1 -0.6l0.6 2.1l0.4 -0.3l1 -1.7l1 0.6l1 2.2l1 1.2l1 0l1 -1.6l1 0.7l1 -4.1l1 2.3l1 0l1 0.4l1 2.6l1 0.7l1 1l1 0l1 1.1l1 0.5l1 -1.4l1 1.3l1 -1.8l1 2.7l1 -2.9l1 1.1l1 -0.6l1 1.2l1 1.3l1 -1.7l1 2.3l1 -0.2l1 -0.8l1 -0.7l1 1.4l1 -3.2l1 1.9l1 1.6l1 -0.8l1 2.2l1 -2.7l1 -0.4l1 1.1l1 0.8l1 1.2l1 -2.9l1 1.8l1 1l1 -1.6l1 0.3l1 -0.6l1 1.8l1 0.2l1 -0.1l1 -0.1l1 0.7l1 -0.8l0.3 0.8l0.7 -32.6l1 10l1 8.9l0.3 2.5l0.7 0.7l1 -1.7l1 -0.1l1 3.1l1 -1.1l1 -0.8l1 0.6l1 0.5l1 0.4l1 -0.5l1 1.7l1 -2.2l1 4l1 -3.1l1 2.4l1 -0.7l1 -1.8l1 0.4l1 1.2l1 0.2l1 -0.5l1 0.5l1 0.2l1 -0.8l1 1.3l1 2.2l1 -2.1l1 0l1 1.7l1 0.5l1 -0.4l1 -1.4l1 0.4l1 0.1l1 -0.4l1 0.8l1 0.9l1 -0.2l1 -0.1l1 0.2l1 1.9l1 -2.3l1 2.8l1 -0.9l1 -0.3l1 -0.6l1 2.3l1 -0.4l1 -0.2l1 1.1l1 -3.1l1 1.7l1 -0.3l1 0l1 0.9l1 0.7l1 0.3l1 -0.3l1 -0.6l1 1.5l1 0l1 1.2l1 -1l1 -0.8l1 -0.9l1 3.2l1 -2.6l0.3 0.8l0.7 -11.1l0.8 -13.4l0.2 1.6l1 3l1 5.1l0.7 4.1l0.3 -1.1l1 0.7l1 1.8l1 -0.7l1 -0.1l1 -0.2l1 0.7l1 0.2l1 -0.6l1 1.7l1 -1.5l1 2.3l1 -1.1l1 -1.4l1 0.8l1 1.6l1 -0.7l1 2.3l1 -0.3l1 0.7l1 -0.8l1 0.5l1 -1.4l1 1.6l1 -1.2l1 0.5l1 -0.8l1 1.3l1 0.4l1 -0.1l1 -0.7l1 1.6l1 0.1l1 -0.7l1 0.8l1 0.2l1 -1.3l1 0.9l1 -1.3l1 0.8l1 1.3l1 -0.8l1 1.2l1 0l1 -1.8l1 1.3l1 1.5l1 -1.1l1 0.1l1 -0.7l1 -0.8l1 0l1 3.3l1 -2.4l1 -0.4l1 0.9l1 -1.5l1 2.6l1 0.3l1 -1.7l1 0.7l1 -0.9l1 1.3l1.5 -1.3l1.5 0.5l1.5 1.2l1.5 -0.5l1.5 -0.5l1.5 -0.8l1.5 -0.1l1.5 1.9l1.5 -0.6l1.5 -0.4l1.5 1l1.5 -0.8l1.5 -0.6l1.5 0.5l1.5 0l1.5 0.1l1.5 1.9l1.5 -1.4l1.5 -0.2l1.5 -0.3l1.5 -0.3l1.5 -0.2l1.5 -0.7l1.5 1l1.5 -0.8l1.5 -0.3l1.5 0.8l1.5 -0.7l1.5 2.6l1.5 0l1.5 -1.7l1.5 2.1l1.5 -1l1.5 -2.5l1.5 2.1l1.5 -0.6l1.5 -0.4l1.5 1.3l1.5 1.1l1.5 -0.6l1.5 -1.3l1.5 0.6l1.5 -0.1l1.5 1.4l1.5 -1l1.5 -0.7l1.5 0.1l1.5 -0.8l1.5 0.9l1.5 1.3l1.5 -2.1l1.5 1.5l1.5 -0.2l1.5 0.6l1.5 -1.4l1.5 1.5l1.5 0.5l1.5 0.6l1.5 -2.9l1.5 1.3l1.5 0l1.5 0.3l1.5 -0.9l1.5 1.4l1.5 1.1l1.5 -0.7l1.5 -1.8l1.5 0.3l1.5 0.9l1.5 -0.4l1.5 -0.6l1.5 1.7l1.5 -0.5l1.5 0.5l1.5 -0.8l1.5 1l1.5 -1.2l1.5 -0.5l1.5 0.8l1.5 -1l1.5 1.9l1.5 -0.4l1.5 -1.8l1.5 1.4l1.5 0.5l1.5 -0.9l1.5 0.7l1.5 -0.7l1.5 0.5l1.5 0l1.5 0.4l1.5 -1.1l1.5 -0.1l1.5 1l1.5 -0.5l1.5 0.8l1.5 -0.8l1.5 -0.5l1.5 1.6l0.1 -0.4l1.4 0.4l1.5 -0.7l1.5 0l1.5 1.3l1.5 -2.1l1.5 2.6l1.5 -0.9l1.5 -0.4l1.5 0.2l1.5 0.4l1.5 -1l1.5 0.6l1.5 -0.9l1.5 -0.8l1.5 1.5l1.5 0l1.5 0.6l1.5 0.1l1.5 0.2l1.5 -0.1l1.5 -1.5l1.5 1.5l1.5 1l1.5 -2.3l1.5 -0.5l1.5 1.6l1.5 0.2l1.5 0.2l1.5 0.5l1.5 -2l1.5 1.4l1.5 0.2l1.5 0.7l1.5 -1.5l1.5 0.8l1.5 -0.5l1.5 0l1.5 -0.1l1.5 -0.2l1.5 -1.2l1.5 1.3l1.5 0l1.5 -0.3l1.5 -2.4l1.5 2.2l1.5 0l1.5 -0.1l1.5 1.8l1.5 -0.5l1.5 -0.9l1.5 0.5l1.5 2.1l1.5 -3.1l1.5 1.2l1.5 -0.7l1.5 1.6l1.5 -0.3l1.5 -0.9l1.5 0.5l1.5 -1l1.5 -0.6l1.5 1.8l1.5 0.6l1.5 -1.3l1.5 0l1.5 -0.8l1.5 3.1l1.5 -2.7l1.5 0.1l1.5 0.4l1.5 1l1.5 -0.7l1.5 0.2l1.5 0.2l1.5 0.8l1.5 -0.7l1.5 0.1l1.5 -0.2l1.5 -0.8l1.5 1.8l1.5 -1.5l1.5 -0.5l1.5 0.7l1.5 0.3l1.5 0.5l1.5 -1.8l1.5 0.1l1.5 1.1l1.5 0.1l1.5 -1l1.5 0l1.5 0.9l1.5 -0.4l1.5 -1.2l1.5 0.5l1.5 1.9l1.5 -1.7l1.5 1.8l1.5 -1.8l1.5 2.3l1.5 0l1.5 -1.7l1.5 0l1.5 1l1.5 -1.3l1.5 1.4l1.5 0.6l1.5 -0.8l1.5 0l1.5 -0.4l1.5 0.8l1.5 -1.3l1.5 1.9l1.5 -1.1l1.5 -0.1l1.5 -1.1l1.5 0.8l1.5 0.3l1.5 0.7l1.5 -2.2l1.5 1.1l1.5 -0.5l1.5 -0.4l1.5 1.1l1.5 -0.4l1.5 1.5l1.5 -2.5l1.5 2.6l1.5 -1.9l1.5 0l1.5 1.9l1.5 -0.9l1.5 0.1l1.5 -1.1l1.5 -0.4l1.5 0.6l1.5 0.8l1.5 -0.2l1.5 0.6l1.5 -0.4l1.5 0.7l1.5 -1.1l1.5 -0.9l1.5 -0.3l1.5 1.9l1.5 0.1l1.5 0.7l1.5 -1.3l1.5 -0.4l1.5 -0.4l1.5 1.6l1.5 -1l1.5 1.3l1.5 -0.7l1.5 -0.1l1.5 -1.1l1.5 1l1.5 1.3l1.5 -0.9l1.5 0.8l1.5 -1.8l1.5 1.9l1.5 1.2l1.5 -1.2l1.5 -0.5l1.5 -1.1l1.5 0.6l1.5 -0.1l1.5 0.7l1.5 -1.7l1.5 0.9l1.5 1.4l1.5 -0.3l1.5 0.6l1.5 0.2l1.5 -1.5l1.5 -0.2l1.5 1.3l1.5 -0.4l1.5 -0.1l1.5 -0.9l1.5 1.3l1.5 -0.6l1.5 0.6l1.5 -1.1l1.5 0.9l1.5 -0.5l1.5 -0.7l1.5 0.6l1.5 -1.2l1.5 1.1l1.5 0.2l1.5 0.4l1.5 -1.3l1.5 -0.2l1.5 0.5l1.5 -0.9l1.5 1.1l1.5 2.5l1.5 -1.7l1.5 -0.5l1.5 0.2l1.5 1.9l1.5 -2.2l1.5 0.7l1.5 0l1.5 -0.6l1.5 0.1l1.5 -0.7l1.5 0.7l1.5 1.7l1.5 0l1.5 -1.3l1.5 0.7l1.5 -0.2l1.5 -0.3l1.5 -0.2l1.5 1l1.5 -0.5l1.5 -0.5l1.5 0l1.5 0.9l1.5 -1l1.5 -0.1l1.5 0.3l1.5 -0.2l1.5 1.3l1.5 -0.5l1.5 -0.1l1.5 -0.2l1.5 1.6l1.5 -0.7l1.5 1.2l1.5 -0.9l1.5 -0.8l1.5 -0.3l1.5 0.1l1.5 0.2l1.5 0.4l1.5 -0.2l1.5 0.8l1.5 -2.2l1.5 1.1l1.5 -1.2l1.5 0.1l1.5 0.1l1.5 -0.2l1.5 -0.1l1.5 -0.2l1.5 2.1l1.5 -0.9l1.5 1.1l1.5 -1.3l1.5 -0.7l1.5 1.5l1.5 0.8l1.5 -1.3l1.5 0.5l1.5 -1.3l1.5 2l1.5 -0.6l1.5 0.6l1.5 -0.9l1.5 1.2l1.5 -0.8l1.5 -0.4l1.5 -0.1l1.5 0.5l1.5 -0.9l1.5 -0.3l1.5 0.9l1.5 0.4l1.5 -0.7l1.5 0.9l1.5 0.6l1.5 -2.1l1.5 1.1l1.5 -0.9l1.5 0.2l1.5 0.7l1.5 -1.7l1.5 2.2l1.5 0.3l1.5 -0.2l1.5 0l1.5 0.8l1.5 -1.6l1.5 1.2l1.5 0.3l1.5 -0.5l1.5 -1.6l1.5 1.2l1.5 -0.1l1.5 -1l1.5 1.1l1.5 0.6l1.5 -0.9l1.5 0l1.5 1.2l1.5 -1.4l1.5 0l1.5 0.9l1.5 1l1.5 -0.6l1.5 -0.5l1.5 -0.7l1.5 1.1l1.5 -0.2l1.5 -2l1.5 1.5l1.5 -2l1.5 2.9l1.5 -0.6l1.5 -0.9l1.5 -0.4l1.5 0.7l1.5 -1.1l1.5 1.7l1.5 -0.9l1.5 -0.9l1.5 1.4l1.5 0.9l1.5 -1.7l1.5 0.7l1.5 1.6l1.5 -1.2l1.5 -0.5l1.5 0.7l1.5 0.5l1.5 -1.2l1.5 0.7l1.5 -1.3l1.5 -0.1l1.5 -0.2l1.5 1.6l1.5 -0.3l1.5 0.3l1.5 0.4l1.5 -0.8l1.5 0.2l1.5 0.1l1.5 0.1l1.5 -1l1.5 0.6l0.9 0.1l0.6 -0.4l1.5 -14.4l1.5 -13.4l1.5 -13.5l1.3 -12l0.2 1.2l1.5 7.5l1.5 7.1l0.8 4.1l0.7 0.4l1.5 1.4l1.5 0.5l0.3 -0.7l1.2 2.7l1.5 0.1l1.5 1.1l1.3 0.5l0.2 -2.1l1.5 -12.5l0.5 -2.9l1 0.7l1.5 1.7l1.5 0.6l1.5 4.5l1.5 0.1l0.2 0.3l1.3 1.7l1.5 0.8l1.5 -0.3l1.5 1.3l1.5 0.9l1.5 0.7l1.5 1l1.5 0.9l1.5 0l1.5 -0.2l0.1 2.8l1.4 -1.2l1.5 0.2l1.5 1.8l1.5 0.5l1.5 -0.4l1.5 2.8l1.5 -2.8l1.5 3.3l1.5 -0.9l1.5 0.4l1.5 0.2l1.5 -0.3l1.5 0.5l1.5 -1l1.5 0.9l1.5 1.9l1.5 -3l1.5 2.9l1.5 -2.3l1.4 1.2l0.1 1.3l1.5 -0.5l1.5 0.2l1.5 -0.3l1.5 1.3l1.5 0.3l1.5 0.1l1.5 -0.2l1.5 1.3l1.5 0.3l1.5 0.4l1.5 -0.6l1.5 0.7l1.5 -0.4l1.5 -2.8l1.5 3.4l1.5 -1.1l1.5 -0.6l1.5 1.2l1.5 0.6l1.5 -1.7l1.5 0.4l1.5 1.4l1.5 -0.8l1.5 1.5l1.5 -0.9l1.5 -0.6l1.5 -0.7l1.5 1.4l1.5 -1.8l1.5 0.2l1.5 -0.2l1.5 2.1l1.5 -0.1l1.5 -1.1l1.5 0.2l1.5 1.1l1.5 0.8l1.5 -1.7l1.5 2.1l1.5 -1.8l1.5 0.8l1.5 -2.3l1.5 1.9l1.5 -0.2l1.5 2.2l1.5 -1.8l1.5 -1l1.5 2.2l1.5 -2.1l1.5 0.6l1.5 -0.8l1.5 1.6l1.5 -0.3l1.5 -0.4l1.5 -0.2l1.5 -0.2l1.5 -0.2l1.5 -0.3l1.5 2.1l1.5 -0.1l1.5 -1.5l1.5 0.2l1.5 1.2l1.5 1.3l1.5 -1.7l1.5 -0.3l1.5 0l1.5 0.2l1.5 -0.5l1.5 1.2l1.5 0.1l1.5 -0.1l1.5 0.9l1.5 -1.1l1.5 -0.1l1.5 2.7l1.5 -3.4l1.5 0l1.5 -0.7l1.5 1.7l1.5 -1.2l1.5 1.5l1.5 -2.3l1.5 1.4l1.5 -0.3l1.5 -0.3l1.5 1.7l1.5 -1l1.5 0.8l1.5 -0.7l1.5 0.4l1.5 -0.4l1.5 0.4l1.5 -0.2l1.5 -0.5l1.5 0.8l1.5 -0.5l1.5 -0.5l1.5 0l1.5 1.1l1.5 0.7l1.5 -1.8l1.5 0.8l1.5 0.8l1.5 0.5l1.5 -0.3l1.5 -1.5l1.5 0.8l1.5 0.5l1.5 -0.2l1.5 -0.2l1.5 -0.4l1.5 1.2l1.5 -0.2l1.5 0l1.5 1.1l1.5 -0.3l1.5 -1.4l1.5 0.7l1.5 -0.4l1.5 0.3l1.5 1.2l1.5 -0.3l1.5 -0.5l1.5 -0.4l1.5 0.2l1.5 0.3l1.5 -0.8l1.5 1l1.5 -0.6l1.5 -0.7l1.5 2.5l1.5 -3.5l1.5 1.8l1.5 0l1.5 0.7l1.5 0l1.5 0.3l1.5 0.2l1.5 -0.8l1.5 0l1.5 0.7l1.5 -0.6l1.5 -0.8l1.5 0.7l1.5 0.7l1.5 -0.1l1.5 -1.3l1.5 1.6l1.5 -0.6l1.5 -1.2l1.5 1.5l1.5 0.4l1.5 -0.2l1.5 -0.5l1.5 -0.3l1.5 1.5l1.5 -0.6l1.5 -0.1l1.5 -0.2l1.5 -0.3l1.5 -0.6l1.5 1.1l1.5 1.1l1.5 -0.3l1.5 -1l1.5 1.5l1.5 -1.3l1.5 -0.6l1.5 1.4l1.5 0.3l1.5 -1.3l1.5 -0.6l1.5 0.8l1.5 -1.8l1.5 1.7l1.5 1.1l1.5 -0.7l1.5 -0.5l1.5 1.3l1.5 -0.6l1.5 1.3l1.5 -1.1l1.5 1.8l1 -1.7l0.5 -0.1l1.5 -51l0.5 -17l1 -7.6l1.2 -10.6l0.3 0.4l1.5 7.8l1.5 6.6l1.5 7.1l0.7 3.8l0.8 1.8l1.5 3l1.5 2.8l1.5 1.9l1.5 1.7l1.1 1.8l0.4 1.1l1.5 0.2l1.5 2.2l1.5 1.2l1.5 1.5l1.5 1.5l1 1.5l0.5 0.8l1.5 0.4l1.5 1.1l1.5 -0.6l1.5 2.5l1.5 1.2l0.4 -1.7l1.1 -26.7l0.5 -15.7l1 2.1l1.5 8l1.5 3.8l0.5 1l1 1.1l1.5 2.5l1.5 0.8l1.5 0.9l1.5 2.4l1.5 0l1.5 1.5l1.5 1l1.5 0.7l1.5 1.7l1.5 0l1.5 0l1.5 1.1l1.5 -0.4l1.5 2.3l1.5 0.7l1.5 1.1l1.5 0.2l1.5 1.3l1.5 -0.1l0.5 1l1 0.4l1.5 -0.7l1.5 1.7l1.5 0.1l1.5 0.3l1.5 -0.1l1.5 2.2l1.5 -1.1l1.5 -0.2l1.5 0.3l1.5 1.4l1.5 -0.2l1.5 -0.1l1.5 0.5l1.5 1.7l0.5 -0.5l1 1.1l1.5 -0.3l1.5 -0.4l1.5 1.9l1.5 0l1.5 -0.3l1.5 0.6l1.5 -0.1l1.5 1.7l1.5 -0.6l1.5 1.1l1.5 0.2l1.5 0l0.5 0.6l1 -0.4l1.5 -0.5l1.5 0.7l1.5 -0.4l1.5 1.6l1.5 -0.2l1.5 -1l1 0.8l0.5 -0.2l1.5 0.5l1.5 -1.1l1.5 1l1.5 -0.5l1.5 0.5l1.5 1.7l1.5 -2.3l1.5 1l1.5 1.2l1.5 0.4l1.5 -0.9l1.5 -0.6l1.5 0.5l1.5 1.6l1.5 0.7l1.5 0l1.5 -1.1l1.5 1.9l1.5 -0.7l1.5 1l1.5 -0.2l0.7 1.3l0.8 -1.6l1.5 -1.2l1.5 1.2l1.5 0.3l1.5 0l1.5 -0.7l1.5 0.4l1.5 -0.6l1.5 0.8l1.5 0.4l1.5 0.2l1.5 1.2l1.5 -2.7l1.5 1.7l1.5 -0.2l1.5 -1.3l1.5 0.9l1.5 -0.1l1.5 -0.7l1.5 1.3l1.5 1l1.5 -0.8l1.5 0.3l1.5 0.3l1.5 -0.8l1.5 0.7l1.5 -1.2l1.5 0.7l1.5 0.4l1.5 0.5l1.5 -1.1l1.5 0l1.5 0.6l1.5 -0.3l1.5 0.2l1.5 0.5l1.5 -1.2l1.5 1.1l1.5 -0.4l1.5 -0.6l1.5 -0.7l1.5 0.5l1.5 0.4l1.5 0.7l1.5 -2l1.5 1.9l1.5 -0.3l1.5 -0.9l1.5 1.5l1.5 -0.3l1.5 0.2l1.5 -1l1.5 0.1l1.5 1.5l1.5 0.4l1.5 -0.6l1.5 -0.5l1.5 -0.3l1.5 -1l1.5 1.8l0.8 -0.8l0.7 1l1.5 -1.4l1.5 1.2l1.5 -1.2l1.5 0.8l1.5 0.4l1.5 -1.5l1.5 1l1.5 -0.5l1.5 -0.4l1.5 1l1.5 0.5l1.5 -1.1l1.5 0.2l1.5 -0.4l1.5 -0.2l1.5 0.3l1.5 0.6l1.5 -1l1.5 1.1l1.5 -1.3l1.5 -0.4l1.5 1.1l1.5 0.1l1.5 -1.5l1.5 0.9l1.5 -1.3l1.5 0.5l1.5 0l1.5 0.8l1.5 -1.5l1.5 0.6l1.5 -0.2l1.5 0.6l1.5 -0.9l1.5 -0.1l1.5 2.8l1.5 -2l1.5 -1.4l1.5 1.5l1.5 -1.4l1.5 -0.4l1.5 2.5l1.5 -0.2l1.5 -1.5l1.5 -0.1l1.5 1.2l1.5 1.1l1.5 -1.1l1.5 -0.1l1.5 -1.4l1.5 -0.6l1.5 1.5l1.5 0.4l1.5 -0.7l1.5 -0.1l1.5 0.8l1.5 -1.8l1.5 1.1l1.5 -0.3l1.5 -1l1.5 0.6l1.5 0.1l1.5 0.4l1.5 -1.1l1.5 0.5l1.5 0.2l1.5 -0.1l1.5 -0.1l1.5 0l1.5 -0.4l1.5 -0.3l1.5 1l1.5 -1.2l1.5 0.1l1.5 -0.5l1.5 -0.1l1.5 1.1l1.5 -0.3l1.5 0l1.5 0.3l1.5 -0.6l0.7 0.6l0.8 0.8l1.5 -1l1.5 -0.3l1.5 1.5l1.5 -0.5l1.5 -1.6l1.5 2.2l1.5 -0.8l1.5 0.5l1.5 -1.4l1.5 0.4l1.5 0.4l1.5 1l1.5 -1l1.5 0.5l1.5 1.3l1.5 -0.9l1.5 0.7l1.5 -0.8l1.5 -0.6l1.5 1.1l1.5 0l1.5 -0.8l1.5 1.9l1.5 0.1l1.5 0.2l1.5 -1l1.5 -0.5l1.5 0.7l1.5 0.1l1.5 0l1.5 0l1.5 0l1.5 0.4l1.5 0.5l1.5 -0.2l1.5 1.6l1.5 -1.2l1.5 0.5l1.5 -0.6l1.5 0.2l1.5 -0.5l1.5 0.5l1.5 -0.5l1.5 -0.2l1.5 2.5l1.5 -1.6l1.5 1l1.5 -0.4l1.5 -0.3l1.5 1.1l1.5 -0.7l1.5 0.9l1.5 -0.4l1.5 1.2l1.5 0.2l1.5 -0.3l1.5 0.9l1.5 -0.4l1.5 0.8l1.5 -1.2l1.5 -1l1.5 1.3l1.5 0l1.5 -0.3l1.5 0.1l1.5 0.3l1.5 -0.4l1.5 2.3l1.5 -1.4l1.5 -0.1l1.5 -0.3l1.5 0.6l1.5 0.6l1.5 1.2l1.5 -0.6l1.5 -0.9l1.5 -0.4l1.5 0l1.5 0.7l1.5 0.6l1.5 -1l1.5 1.5l1.5 0.3l1.5 -1.2l1.5 -1.6l1.5 2.3l1.5 -0.7l1.5 0.6l1.5 0.3l1.5 -1.1l1.5 1l1.5 0.3l1.5 -0.3l1.5 0.9l1.5 -0.6l1.5 -0.2l1.5 1.5l1.5 -1.2l1.5 1l1.5 -1.3l1.5 0.8l1.5 -1l1.5 0.8l1.5 0.8l1.5 -2l1.5 1.9l1.5 -0.5l1.5 1.1l1.5 -0.6l1.5 -0.3l1.5 -0.9l1.5 2.8l1.5 -2.7l1.5 0.4l1.5 -0.1l1.5 0.4l1.5 0.5l1.5 -1.1l1.5 1.5l1.5 -1l1.5 0.5l1.5 -1.7l1.5 1.3l1.5 0.4l1.5 0.1l1.5 0l1.5 0.8l1.5 0.2l1.5 -0.8l1.5 -0.9l1.5 1.7l1.5 -0.9l1.5 0.8l1.5 0l1.5 -0.5l1.5 -0.8l1.5 0.9l1.5 -0.2l1.5 1.3l1.5 -2l1.5 1.8l1.5 -1.6l1.5 0.7l1.5 -0.4l1.5 0.5l1.5 0.3l1.5 0.6l1.5 -0.6l1.5 0.9l1.5 0.8l1.5 -1l1.5 -0.8l1.5 0.7l1.5 0.2l1.5 -0.1l1.5 1.1l1.5 0.1l1.5 0.6l1.5 -1l1.5 -2.2l1.5 1.8l1.5 0.6l1.5 -0.9l1.5 0.2l1.5 1.2l1.5 -0.5l1.5 -0.8l1.5 0.4l1.5 -1.7l1.5 2.2l1.5 -0.8l1.5 0.9l1.5 -0.8l1.5 0.1l1.5 0.3l1.5 2.1l1.5 -2.8l1.5 0.2l1.5 0.5l1.5 1.3l1.5 -0.1l1.5 -0.1l1.5 -0.7l1.5 0.3l1.5 -0.6l1.5 0.4l1.5 -0.4l1.5 -0.4l1.5 0.3l1.5 2.3l1.5 -0.8l1.5 -0.6l1.5 0.7l1.5 -0.3l1.5 1.1l1.5 -0.9l1.5 -0.5l1.5 0.9l1.5 -0.2l1.5 -0.6l1.5 -0.1l1.5 0.5l1.5 -1.3l1.5 0.4l1.5 1.2l1.5 0.1l1.5 0.4l1.5 -0.9l1.5 0.1l1.5 0.3l1.5 0l1.5 1.3l1.5 -0.9l1.5 1.1l1.5 -1.5l1.5 0.8l1.5 0.8l1.5 -1.6l1.5 0.1l1.5 0l1.5 -0.6l1.5 1.1l1.5 -0.1l1.5 2.2l1.5 -1.7l1.5 -1.2l1.5 2.1l1.5 -0.1l1.5 -0.8l1.5 0.3l1.5 0.3l1.5 -0.8l1.5 0.5l1.5 0.1l1.5 1.1l1.5 -0.1l1.5 -0.8l1.5 -1l1.5 1.6l1.5 -0.6l1.5 0.9l1.5 -0.7l1.5 0.3l1.5 0.4l1.5 -0.8l1.5 0.1l1.5 2l1.5 -2.1l1.5 1.2l1.5 -0.1l1.5 0.1l1.5 0.3l1.5 -1.8l1.5 1.6l1.5 -2l1.5 1.4l1.5 0.3l1.5 0.5l1.5 0.1l1.5 -1.3l1.5 0.5l1.5 0.2l1.5 -0.1l1.5 0.1l1.5 0.3l1.5 1.1l1.5 0.1l1.5 -0.6l0.5 0.7l1 -2.2l1.5 -14.6l1.5 -13.4l1.5 -13.1l1.5 -13.2l1.5 -13.8l1.5 -15.5l1.5 -12.6l1.5 -15l1.5 -12.9l1.5 -13.5l1.5 8.1l0.5 1.1l1 1.5l1.5 1.4l1.5 0.8l1.5 1.6l1.5 1.7" stroke="#3da966" stroke-width="1.5" fill="none" stroke-linejoin="round"/>
<path d="M34 264.9l1 2.7l1 3.3l1 0.4l1 2.3l1 3.4l1 3.7l1 -2.5l1 -4.4l1 -3.2l1 -6l1 -5.6l1 3.4l1 0.7l1 0.4l1 1.8l1 2.8l1 -3.4l1 -2.4l1 -5.7l1 2.9l1 -1.2l1 0.5l1 0.2l1 -3.6l1 3l1 -3.6l1 0.9l1 0.6l1 -0.5l1 -3.5l1 1.3l1 0.4l1 -2.6l1 0.8l1 1l1 2.7l1 -4.5l1 -2.1l1 -1.9l1 0.9l1 0.6l1 0.9l1 -1.5l1 -3.1l1 -0.8l1 1.6l1 -1.3l1 -4l1 3.6l1 -3.7l1 6.8l1 -3.4l1 -4.4l1 1.4l1 -1.1l1 -0.9l1 -0.2l1 -0.4l1 -0.5l1 0.9l1 1.5l1 2.5l1 1l1 -1.2l1 -1.5l1 0.1l1 -3.3l1 -0.8l1 -5.9l1 -1.2l0.4 -2.7l0.6 -0.4l1 2.7l1 -0.6l1 1l1 2.9l1 1.1l1 5.1l1 -1.3l1 -9.8l1 18.1l0.9 -7.5l0.1 -3l1 6.5l1 -0.2l1 -3.3l1 15.4l1 -10l1 -4.1l1 6.1l1 6.1l1 -5.6l1 -8.7l1 4.9l0.8 1.8l0.2 -2.4l1 5.4l1 -1.6l1 6.2l1 -6l1 6.9l1 0l1 5.9l1 7.6l1 -18.7l1 4.6l0.2 1.9l0.8 3.4l1 5.2l1 -7.8l1 1.9l1 11.9l1 -2.7l1 2.3l0.6 2.5l0.4 -6.3l1 6.1l1 -3.3l1 0.9l1 4.4l1 1.6l1 -8.5l1 7.5l1 9.7l1 0.6l1 5.9l1 -1.6l1 1l1 7.3l1 -1.5l0.5 -17.5l0.5 18.7l1 -5.4l1 9.9l1 7.2l1 -10.4l1 -4.7l1 5.1l1 1.1l1 3.5l1 -8.7l1 8.1l1 3.2l1 -1.1l1 0.6l1 3.9l0.4 -9.8l0.6 10.7l1 -3l1 -4l1 5.5l1 2.7l1 0.2l1 4.9l1 -6.2l1 -3.9l0.3 13.4l0.7 -12.8l1 -1.1l1 9.7l1 -5l1 -2.5l1 -4.8l1 4.4l1 -9.5l1 1.7l0.3 -2.2l0.7 2.8l1 0.1l1 3.9l1 -2.1l1 -1.7l1 -4.2l1 -3.1l0.7 -1.9l0.3 2.1l1 -2.1l1 5.5l1 -0.6l1 1l1 -1.5l1 1.9l1 0.9l1 2.6l0.6 -1l0.4 1.3l1 0.1l1 -2.4l1 2.1l1 1.9l1 -1.7l1 0.6l1 -0.4l1 -1.2l1 4.1l1 -1.9l1 1.3l1 -1.2l1 1.8l1 -0.3l1 0.4l1 0.2l1 0.1l1 1.1l1 -0.6l1 0.2l1 0.6l1 -1.9l1 -1.7l1 3.6l1 -0.1l1 -0.4l1 0.6l1 -0.5l1 0.3l1 1.1l1 0.1l1 0.8l1 -0.9l1 0.6l1 -0.1l1 -1.3l1 -1l1 0.8l1 0.5l1 -0.2l1 2.5l1 -2.5l1 1.1l1 -1l1 1.5l1 -1.4l1 2.2l1 -0.4l1 -0.3l1 -0.5l1 2.7l1 -1.9l1 1.9l1 -3.3l0.3 1.1l0.7 -30.1l1 9.6l1 8l0.3 3.7l0.7 -0.2l1 -0.6l1 0.6l1 -0.9l1 0l1 1.4l1 0.6l1 -0.4l1 -1.1l1 1.8l1 -0.5l1 0.8l1 -0.6l1 0.3l1 1.4l1 0.6l1 -1.9l1 0.2l1 1.9l1 -0.4l1 -0.1l1 -0.8l1 1.9l1 -0.6l1 0.2l1 0.2l1 -0.6l1 0.9l1 -0.1l1 0.8l1 0l1 -1.1l1 0.8l1 0.7l1 1.5l1 -1.5l1 1.6l1 0l1 -0.1l1 1.2l1 -1.8l1 0.4l1 1l1 -0.5l1 0.6l1 -0.7l1 1.4l1 -0.7l1 -1.6l1 2.7l1 -0.8l1 -0.4l1 0.7l1 0l1 1.2l1 -0.7l1 -0.3l1 0.1l1 -0.7l1 0.3l1 0.4l1 0.3l1 -0.6l1 0.8l1 1.3l1 -0.4l1 -0.3l0.3 0.3l0.7 -12l0.8 -14.1l0.2 2.7l1 5.8l1 3.4l0.7 3.5l0.3 1.5l1 -2.7l1 1.7l1 -0.5l1 0.3l1 -0.9l1 1.5l1 0.6l1 -1.4l1 1.3l1 0l1 -0.2l1 1.5l1 1.1l1 -0.7l1 0.8l1 0l1 -0.4l1 0.6l1 0.7l1 -1.4l1 0.3l1 -0.9l1 -0.3l1 0.9l1 1.5l1 -0.3l1 0.1l1 1l1 -2.3l1 2.5l1 -0.9l1 0.6l1 0.6l1 -1.6l1 0l1 1.2l1 -0.2l1 -0.2l1 0.5l1 -0.3l1 0.9l1 -0.3l1 1.6l1 -2.2l1 1.2l1 -0.4l1 1.1l1 -1.9l1 0.4l1 1.8l1 -1.8l1 0.2l1 0.1l1 -0.4l1 1.8l1 0.3l1 -1.2l1 -0.4l1 -0.3l1 1.5l1 -0.9l1 0.9l1.5 -2.2l1.5 1.5l1.5 0.7l1.5 -0.2l1.5 -2.5l1.5 2.3l1.5 -0.1l1.5 0l1.5 -0.2l1.5 0.1l1.5 0.4l1.5 0.2l1.5 -2.8l1.5 2.4l1.5 0.8l1.5 -0.7l1.5 1.2l1.5 -1.5l1.5 2.2l1.5 -0.7l1.5 -1l1.5 2.4l1.5 -1.1l1.5 0.1l1.5 -2.2l1.5 0.8l1.5 0.4l1.5 0.5l1.5 -0.7l1.5 -1l1.5 1.8l1.5 -1l1.5 0.4l1.5 -0.6l1.5 0.2l1.5 -0.8l1.5 1.6l1.5 -0.9l1.5 -0.7l1.5 1.9l1.5 -0.1l1.5 0.9l1.5 -0.2l1.5 -1.6l1.5 0.6l1.5 0l1.5 0.1l1.5 -0.7l1.5 0.9l1.5 0.8l1.5 0.2l1.5 0.1l1.5 -0.5l1.5 -2.4l1.5 1.7l1.5 -0.1l1.5 -1.7l1.5 3.4l1.5 -0.5l1.5 -0.8l1.5 0.1l1.5 0l1.5 -0.5l1.5 1.1l1.5 0.4l1.5 -0.8l1.5 -0.9l1.5 0.8l1.5 0.7l1.5 0l1.5 -1.1l1.5 1.3l1.5 -0.2l1.5 -0.1l1.5 -0.8l1.5 0.2l1.5 -1.5l1.5 1.3l1.5 -0.2l1.5 0.3l1.5 0.2l1.5 0.1l1.5 0.2l1.5 0l1.5 -0.6l1.5 0.3l1.5 0l1.5 0.5l1.5 0l1.5 -0.6l1.5 -0.2l1.5 -0.4l1.5 0.4l1.5 1.4l1.5 -1l1.5 1.8l1.5 -1.4l1.5 -0.2l1.5 0.1l0.1 -0.3l1.4 0l1.5 0.5l1.5 -1.1l1.5 1.1l1.5 -0.2l1.5 -0.6l1.5 1.4l1.5 -0.4l1.5 0.6l1.5 -1.3l1.5 -0.4l1.5 0.2l1.5 -0.3l1.5 -0.1l1.5 2.7l1.5 -1.6l1.5 0.5l1.5 -0.6l1.5 0.3l1.5 1.2l1.5 -2.6l1.5 0.5l1.5 0.8l1.5 -0.7l1.5 1.3l1.5 0.6l1.5 -0.2l1.5 -0.1l1.5 -0.7l1.5 0.8l1.5 -1.4l1.5 -0.2l1.5 0.7l1.5 0.1l1.5 1.1l1.5 -1.6l1.5 1.5l1.5 -1.4l1.5 -0.4l1.5 -0.4l1.5 1.1l1.5 -1.2l1.5 1.1l1.5 -0.1l1.5 -0.2l1.5 -1.1l1.5 1.1l1.5 0.8l1.5 -1.5l1.5 1.9l1.5 -0.4l1.5 -0.5l1.5 0.4l1.5 0.2l1.5 -0.6l1.5 -0.4l1.5 1.2l1.5 -1l1.5 0.8l1.5 0.7l1.5 0.6l1.5 0.4l1.5 -0.1l1.5 -0.7l1.5 -0.4l1.5 0.2l1.5 0.2l1.5 1.7l1.5 -1.7l1.5 -1.2l1.5 1.7l1.5 -2.2l1.5 2l1.5 -1.7l1.5 0.2l1.5 0.3l1.5 0l1.5 -0.9l1.5 1.2l1.5 -0.3l1.5 1.3l1.5 -1.6l1.5 -0.4l1.5 2l1.5 -0.6l1.5 0.9l1.5 -2.4l1.5 0.8l1.5 1l1.5 1.3l1.5 -2.4l1.5 -0.6l1.5 1l1.5 1.3l1.5 0l1.5 -2l1.5 0.8l1.5 -0.8l1.5 1l1.5 -0.2l1.5 0.9l1.5 0.4l1.5 0.9l1.5 -2l1.5 0.9l1.5 -0.5l1.5 0l1.5 1.4l1.5 -0.9l1.5 0.7l1.5 -0.8l1.5 0.4l1.5 -0.3l1.5 -0.4l1.5 -0.5l1.5 0.4l1.5 0.5l1.5 -0.1l1.5 0.2l1.5 -0.4l1.5 1l1.5 -0.9l1.5 -0.1l1.5 0.1l1.5 1.3l1.5 -1.2l1.5 1.7l1.5 -1.8l1.5 1.6l1.5 -0.8l1.5 -0.9l1.5 0.6l1.5 0.4l1.5 -1.7l1.5 0.5l1.5 0.5l1.5 -0.3l1.5 0l1.5 0.4l1.5 0.2l1.5 0.4l1.5 0.5l1.5 -1.3l1.5 2.5l1.5 -2.3l1.5 1.7l1.5 -1.3l1.5 -1l1.5 0.8l1.5 0l1.5 1.1l1.5 -2.2l1.5 1.1l1.5 0.5l1.5 0.7l1.5 -0.4l1.5 0.1l1.5 -1l1.5 -0.3l1.5 1.1l1.5 0.4l1.5 -0.9l1.5 -0.2l1.5 -0.5l1.5 2.4l1.5 -1l1.5 0.4l1.5 -1.9l1.5 1.4l1.5 1.1l1.5 -2.1l1.5 0.1l1.5 1.4l1.5 -1.2l1.5 0.9l1.5 0.9l1.5 -2.2l1.5 0.3l1.5 1.2l1.5 -0.5l1.5 -0.3l1.5 -0.3l1.5 0l1.5 0.3l1.5 -0.6l1.5 0.2l1.5 0.5l1.5 -1l1.5 1.1l1.5 -2l1.5 2.1l1.5 -0.5l1.5 -0.6l1.5 1.9l1.5 -1.7l1.5 2.4l1.5 -2.1l1.5 1.4l1.5 -0.9l1.5 1.2l1.5 -1.3l1.5 0.9l1.5 -1l1.5 -1.1l1.5 1.7l1.5 0.1l1.5 0l1.5 0.9l1.5 -1.9l1.5 -0.6l1.5 1.2l1.5 -0.7l1.5 0.5l1.5 0.1l1.5 -0.5l1.5 1.4l1.5 -0.8l1.5 1.5l1.5 -1.1l1.5 0.8l1.5 -0.9l1.5 -0.1l1.5 0.2l1.5 -0.4l1.5 0.8l1.5 -0.3l1.5 -1.1l1.5 -0.3l1.5 0.5l1.5 -0.7l1.5 0.7l1.5 -0.3l1.5 1.7l1.5 -1.2l1.5 0.5l1.5 0.2l1.5 0.1l1.5 0.2l1.5 0.2l1.5 0l1.5 -0.6l1.5 1.2l1.5 -0.5l1.5 -0.9l1.5 1.6l1.5 -2l1.5 1.1l1.5 0.7l1.5 -0.8l1.5 0.3l1.5 -0.1l1.5 0.3l1.5 -0.4l1.5 -0.2l1.5 0.5l1.5 -2l1.5 1.5l1.5 -0.5l1.5 1.6l1.5 -1.2l1.5 -0.7l1.5 1l1.5 -0.7l1.5 -0.5l1.5 0.8l1.5 0.6l1.5 0.7l1.5 0l1.5 -0.5l1.5 -0.2l1.5 0.4l1.5 0.8l1.5 -1l1.5 0.9l1.5 -1.4l1.5 0.5l1.5 0.4l1.5 -0.2l1.5 -0.5l1.5 -0.3l1.5 -0.7l1.5 1.2l1.5 -0.1l1.5 0.1l1.5 1.2l1.5 -2l1.5 0.9l1.5 -0.6l1.5 -0.7l1.5 0.9l1.5 0.5l1.5 -1.3l1.5 0.2l1.5 0.7l1.5 0.9l1.5 -1.1l1.5 0.6l1.5 -0.2l1.5 -0.5l1.5 0.6l1.5 0.7l1.5 -0.8l1.5 0.6l1.5 -1.1l1.5 0.2l1.5 0.5l1.5 0.6l1.5 -1l1.5 -0.5l1.5 1.7l1.5 1.1l1.5 -3.8l1.5 1l1.5 0.8l1.5 0.1l1.5 -0.9l1.5 1.1l1.5 0.6l1.5 -0.8l1.5 0.8l1.5 -0.4l1.5 -0.7l1.5 0.2l1.5 0l1.5 1.3l1.5 -0.2l1.5 -0.7l1.5 -1.2l1.5 0.9l1.5 0.1l1.5 -1l1.5 1.3l1.5 0.2l1.5 -1.2l1.5 0.6l1.5 0l1.5 1.7l1.5 -0.8l1.5 0.1l1.5 -0.5l1.5 -1.1l1.5 1.6l1.5 -1.2l1.5 -1l0.9 1.9l0.6 -5.4l1.5 -11.2l1.5 -11.1l1.5 -11.8l1.3 -9.3l0.2 2.3l1.5 11.4l0.3 2.5l1.2 1.8l1.5 2.2l1.5 1.1l1.5 2.1l0.3 -0.2l1.2 1.4l1.5 1.6l1.5 0.1l1.3 1.3l0.2 -2.2l1.5 -9.8l0.5 -2.9l1 4.2l1.2 3.6l0.3 0.7l1.5 -0.2l1.5 1.2l1.5 0.5l1.5 0.6l1.5 0l1.5 -0.4l0.7 0.9l0.8 -0.3l1.5 0.9l1.5 0.9l1.5 1.2l1.5 -1.1l1.5 0l1.5 0.8l1.5 -1.5l1.5 3.1l1.5 -2.3l1.5 2l1.5 0.1l1.5 0.4l1 -0.6l0.5 0.7l1.5 -0.5l1.5 1.3l1.5 -1.2l1.5 -0.1l1.5 0.9l1.5 -0.6l1.5 0.9l1.5 -1.1l1.5 0.8l1.5 -0.8l1.5 0.8l1.5 1.8l1.5 -2.1l1.5 0.1l1.5 -0.1l1.5 1l1.5 1.4l1.5 -1.3l1.5 1.1l1.5 -0.6l1.5 -0.2l1.5 1.9l1.5 -0.7l1.5 -2.1l1.5 0.6l1.5 1l1.5 0.2l1.5 -0.5l1.5 0.5l1.5 0.2l1.5 -0.6l1.5 1l1.5 -1.2l1.5 1.2l1.5 0l1.5 -0.5l1.5 -0.5l1.5 0.2l1.5 -1.5l1.5 1.8l1.5 -1.1l1.5 -0.4l1.5 2l1.5 -1.2l1.5 0.9l1.5 -0.2l1.5 -1.1l1.5 0.7l1.5 0.5l1.5 0.6l1.5 -0.4l1.5 -1l1.5 0.4l1.5 0.4l1.5 -0.9l1.5 0.8l1.5 0l1.5 -1l1.5 2.8l1.5 -0.5l1.5 -0.9l1.5 1l1.5 -1.5l1.5 1.8l1.5 -1.5l1.5 0.3l1.5 -0.5l1.5 0.4l1.5 0.2l1.5 -0.3l1.5 -0.5l1.5 1.2l1.5 -0.1l1.5 -0.3l1.5 0.6l1.5 -1.3l1.5 1.3l1.5 -1.1l1.5 1.3l1.5 -1.3l1.5 0.3l1.5 0.4l1.5 0.6l1.5 0.2l1.5 -1.3l1.5 -0.3l1.5 1.2l1.5 0.4l1.5 -0.3l1.5 -0.6l1.5 1.1l1.5 -0.9l1.5 0.2l1.5 0.3l1.5 -0.7l1.5 -1.2l1.5 1.9l1.5 0.4l1.5 -0.2l1.5 0.1l1.5 -0.3l1.5 0.6l1.5 -0.6l1.5 1l1.5 -0.9l1.5 0.5l1.5 -0.9l1.5 0.6l1.5 0l1.5 -0.2l1.5 1l1.5 -1l1.5 0.8l1.5 -0.5l1.5 0.5l1.5 -1.5l1.5 0.3l1.5 0.8l1.5 -1.1l1.5 1.1l1.5 0.2l1.5 -0.1l1.5 0.3l1.5 0.1l1.5 -0.5l1.5 0.5l1.5 -0.6l1.5 0l1.5 -0.7l1.5 1l1.5 -1.3l1.5 1.1l1.5 -0.1l1.5 -1l1.5 0.9l1.5 0.4l1.5 -0.3l1.5 -0.3l1.5 0.4l1.5 0.3l1.5 0.2l1.5 0.6l1.5 -2.6l1.5 1.9l1.5 0.2l1.5 -0.5l1.5 0.6l1.5 1.2l1.5 -1.5l1.5 0.9l1.5 -0.2l1.5 -1.1l1.5 -1.3l1.5 2.5l1.5 0.2l1.5 -2.3l1.5 1.1l1.5 -0.4l1.5 0.7l1.5 0l1.5 0.8l1.5 -1.2l1.5 1.9l1.5 -2.6l1.5 1.4l1.5 1.8l1.5 -2l1.5 0.5l1.5 -0.9l1.5 2.7l1.5 -1.7l1.5 -0.7l1.5 -1l1.5 1.6l1.5 0.4l1.5 -2l1.5 1.2l1.5 0.8l1.5 -2.1l1.5 1.6l1.5 -0.9l1.5 0.2l1.5 1.2l1.5 0.5l1.5 0l1.5 -1.3l1.5 0.8l1.5 -1.6l1.5 0.3l1.5 1.4l1.5 -0.5l1.5 -0.2l1.5 -0.4l1.5 1.3l1.5 1.7l1.5 -3.1l1.5 0.6l1 1.5l0.5 -14.3l1.5 -35.8l0.5 -11.7l1 -1.6l1.2 -3.6l0.3 2.5l1.5 4.5l1.5 5.6l1.5 6.1l1.5 5.6l0.4 0.2l1.1 2l1.5 2.9l1.5 2.7l1.5 1.3l1.1 2.1l0.4 0.2l1.5 1.2l1.5 0l1.5 1.2l1.5 0.3l1.5 -0.7l1.5 0.7l1.5 -0.4l1.5 1.2l1.5 1.2l1.5 -0.6l1.5 0.1l0.4 1.8l1.1 -24.2l0.5 -10.7l1 4.1l1.5 5.4l1.5 5.9l1.5 4.5l1.5 -0.3l1.5 2.2l1.5 1.1l1.5 0.9l0.8 1.1l0.7 -0.3l1.5 1.4l1.5 -1.1l1.5 0.8l1.5 0l1.5 2.1l1.5 -1.9l1.5 0.2l1.5 0.9l1.5 1.2l1.5 -0.1l1.5 0.3l1.5 -0.7l1.5 -0.2l1.5 1.5l0.5 0.1l1 1.5l1.5 -0.8l1.5 0.1l1.5 0.6l1.5 -1.2l1.5 0l1.5 0.8l1.5 1.5l1.5 -0.1l1.5 -0.8l1.5 -0.1l1.5 1.9l1.5 0.5l1.5 -1.5l1.5 1.8l1.5 -1.7l1.5 1.1l1.5 -0.4l1.5 0.1l1.5 0l1.5 1.2l1.5 0.2l1.5 0.4l1.5 -0.5l1.5 -0.2l1.5 2.3l1.5 -0.1l1.5 -1.1l0.5 -0.7l1 1.9l1.5 -1l1.5 0l1.5 0.6l1.5 -0.4l1.5 -0.1l1.5 1.5l1.5 -2.7l1.5 1.9l1.5 -1.2l1.5 0.7l1.5 -0.2l1.5 0.3l1.5 -1.9l1.5 2.1l1.5 1.1l1.5 -2l1.5 0.9l1.5 -0.2l1.5 -0.3l1.5 -0.6l1.5 0.8l1.5 -0.2l1.5 0.8l1.5 -0.4l1.5 -1.1l1.5 -1.6l1.5 3.1l1.5 -0.7l1.5 -0.2l1.5 -0.4l1.5 2.3l1.5 -0.7l1.5 -1.1l1.5 -0.5l1.5 0.5l1.5 0.4l1.5 -0.6l1.5 0.3l1.5 -0.4l1.5 0l1.5 -1.1l1.5 1.1l1.5 0l1.5 -0.1l1.5 -0.1l1.5 0.3l1.5 -0.7l1.5 0.3l1.5 -0.8l1.5 2.6l1.5 -2.3l1.5 -0.2l1.5 0.6l1.5 0.3l1.5 -0.3l1.5 -0.9l1.5 2.7l1.5 -0.7l1.5 -1.3l1.5 0.4l1.5 -0.9l1.5 -0.2l1.5 1.6l1.5 0.4l1.5 -1.1l1.5 0.4l1.5 -2.3l1.5 1.9l1.5 0.9l1.5 -0.5l1.5 0.1l1.5 0.3l1.5 -1.9l1.5 0.6l1.5 0l1.5 1l1.5 -0.6l1.5 -1l1.5 2l1.5 -0.8l1.5 0.8l1.5 0.7l1.5 -2.7l1.5 0.2l1.5 1.8l1.5 0.4l1.5 -0.6l1.5 0.1l0.8 0.1l0.7 -0.2l1.5 -1.6l1.5 1.2l1.5 -0.1l1.5 -1l1.5 -0.4l1.5 0.3l1.5 0l1.5 0.9l1.5 0.2l1.5 -0.4l1.5 -0.2l1.5 -1l1.5 1.1l1.5 -0.4l1.5 0.4l1.5 0.6l1.5 -0.1l1.5 2.4l1.5 -3.1l1.5 0l1.5 -0.6l1.5 0.4l1.5 -0.2l1.5 0.8l1.5 -2.2l1.5 2l1.5 -0.3l1.5 -0.8l1.5 -0.2l1.5 0.7l1.5 0.2l1.5 -0.5l1.5 0l1.5 0.2l1.5 -0.8l1.5 0.9l1.5 0.2l1.5 -0.4l1.5 -0.8l1.5 0.6l1.5 -0.3l1.5 0.2l1.5 -0.8l1.5 1l1.5 0.2l1.5 -0.1l1.5 -0.4l1.5 0.7l1.5 -1l1.5 -0.2l1.5 -1l1.5 1.1l1.5 0.9l1.5 -1.5l1.5 1.3l1.5 -1.7l1.5 1l1.5 0.9l1.5 -1.4l1.5 -0.9l1.5 1l1.5 -0.4l1.5 0.7l1.5 -1l1.5 -1l1.5 0.8l1.5 0.6l1.5 0.3l1.5 -0.6l1.5 -0.3l1.5 0.4l1.5 -0.6l1.5 -0.1l1.5 0.6l1.5 0.7l1.5 -1.2l1.5 0.7l1.5 -0.8l1.5 -0.1l1.5 0.6l1.5 -1l0.7 0.3l0.8 -0.2l1.5 0.6l1.5 -0.2l1.5 2.3l1.5 -1.2l1.5 -0.3l1.5 -0.9l1.5 -0.7l1.5 2l1.5 -0.7l1.5 1.3l1.5 -1l1.5 -0.5l1.5 0.5l1.5 -0.5l1.5 0.2l1.5 1.5l1.5 -0.7l1.5 1l1.5 -0.8l1.5 0.4l1.5 -0.1l1.5 0.2l1.5 0.2l1.5 1.7l1.5 -0.9l1.5 -1.3l1.5 2.7l1.5 -0.2l1.5 0l1.5 -1l1.5 -0.1l1.5 -0.3l1.5 0.4l1.5 0.5l1.5 0l1.5 -0.3l1.5 0.2l1.5 1.9l1.5 0.1l1.5 -2l1.5 0.6l1.5 0.4l1.5 0.5l1.5 -0.4l1.5 0.3l1.5 0.3l1.5 0.8l1.5 -1.5l1.5 1.9l1.5 -0.3l1.5 0.3l1.5 -1.3l1.5 1.1l1.5 0l1.5 0.7l1.5 0l1.5 0.1l1.5 -1.3l1.5 1.9l1.5 -0.7l1.5 0.7l1.5 -0.4l1.5 -0.2l1.5 2.5l1.5 -1.2l1.5 0.3l1.5 -0.7l1.5 0.4l1.5 1.1l1.5 -0.3l1.5 1l1.5 -0.3l1.5 -1.5l1.5 0l1.5 2.1l1.5 -0.1l1.5 -0.4l1.5 -0.1l1.5 -0.2l1.5 1.6l1.5 -1.4l1.5 -0.9l1.5 1.6l1.5 -0.7l1.5 0.3l1.5 -0.3l1.5 0.4l1.5 -1.1l1.5 1.9l1.5 -0.9l1.5 0.2l1.5 0.4l1.5 0.7l1.5 -2.3l1.5 1.6l1.5 0.7l1.5 0.5l1.5 -1.4l1.5 0.9l1.5 0.1l1.5 0.4l1.5 -0.9l1.5 0.4l1.5 0l1.5 1.3l1.5 -0.2l1.5 -1.1l1.5 0.1l1.5 0.1l1.5 -0.6l1.5 0.8l1.5 0.9l1.5 0.1l1.5 -1l1.5 0.1l1.5 0.4l1.5 -0.8l1.5 1.1l1.5 -0.1l1.5 -1.1l1.5 0.8l1.5 -0.1l1.5 0.4l1.5 -0.2l1.5 1.7l1.5 -1.4l1.5 1.4l1.5 -0.2l1.5 1l1.5 -1.1l1.5 0l1.5 0l1.5 -1.4l1.5 2.9l1.5 -1.8l1.5 -0.1l1.5 -0.6l1.5 0.8l1.5 1.3l1.5 -1.5l1.5 1l1.5 0.5l1.5 0.2l1.5 -0.8l1.5 -0.7l1.5 1.4l1.5 0.1l1.5 -0.6l1.5 -0.1l1.5 1.7l1.5 -2.1l1.5 0.8l1.5 0.2l1.5 -0.8l1.5 0.5l1.5 -0.2l1.5 1.4l1.5 -1.9l1.5 0.5l1.5 1.3l1.5 -1l1.5 -0.5l1.5 0.9l1.5 -0.6l1.5 0l1.5 0.7l1.5 0.6l1.5 -0.6l1.5 0.5l1.5 0.7l1.5 -0.5l1.5 0.7l1.5 -0.9l1.5 0.8l1.5 0.6l1.5 -1.8l1.5 3.1l1.5 -2.1l1.5 0.2l1.5 0.3l1.5 0.7l1.5 -1.3l1.5 0.8l1.5 -0.5l1.5 1.3l1.5 -2l1.5 1.8l1.5 -0.6l1.5 -0.1l1.5 0.8l1.5 -0.1l1.5 0.4l1.5 0.3l1.5 0.7l1.5 -1.1l1.5 1.4l1.5 -3l1.5 3.1l1.5 -0.5l1.5 0.2l1.5 -0.9l1.5 0.1l1.5 -0.9l1.5 1.7l1.5 -1.7l1.5 0.2l1.5 0.6l1.5 0.1l1.5 0l1.5 -0.8l1.5 0.9l1.5 0.8l1.5 0.7l1.5 -0.2l1.5 -0.1l1.5 -0.4l1.5 0l1.5 0l1.5 0.4l1.5 0.5l1.5 -0.6l1.5 1.8l1.5 -2.1l1.5 1.2l1.5 -0.7l1.5 0.3l1.5 0.1l1.5 1.5l1.5 -1.1l1.5 0.6l1.5 -0.4l1.5 0.4l1.5 -0.1l1.5 0.6l1.5 -1.8l1.5 -0.3l1.5 1.6l1.5 -0.1l1.5 -0.6l1.5 -0.1l1.5 0.5l1.5 0.9l1.5 -1.2l1.5 1.7l1.5 -0.8l1.5 -0.3l1.5 0l1.5 -1.2l1.5 1.7l1.5 -1l1.5 0.7l1.5 -0.1l1.5 1l1.5 0.5l1.5 -0.3l1.5 0.3l1.5 0.4l1.5 0.6l1.5 -0.9l1.5 0.5l1.5 -1.3l1.5 0.6l1.5 -0.4l1.5 1.1l1.5 -0.6l1.5 0.7l1.5 -0.8l1.5 0.1l0.5 1l1 -0.8l1.5 -12.2l1.5 -13.3l1.5 -13.7l1.5 -10.3l1.5 -13.5l1.5 -12.8l1.5 -11.3l1.5 -13.8l1.5 -12.1l1.5 -11.2l1.5 13.9l0.5 6.2l1 0.2l1.5 1.7l1.5 1.8l1.5 1.2l1.5 2.6" stroke="#dcaa3c" stroke-width="1.5" fill="none" stroke-linejoin="round"/>
<path d="M100 238.9l1 -0.8l1 -0.7l1 -5.5l1 -1.1l0.4 -0.9l0.6 1.7l1 -1.1l1 3.6l1 -6.1l1 -4l1 9.9l1 -15.8l1 13.9l1 2.3l1 -3.6l0.9 -7.3l0.1 0.8l1 10.7l1 21.2l1 -15.5l1 5.9l1 1l1 2.9l1 -6.3l1 -0.8l1 1.7l1 -10.7l1 -1.7l0.8 2.3l0.2 9.7l1 -6.9l1 15l1 2.4l1 -15.9l1 12.6l1 3.1l1 4.8l1 2.5l1 -8.4l1 4.2l0.2 10.3l0.8 -6.4l1 11.4l1 -13.5l1 13.6l1 -9.1l1 -9.5l1 6.3l0.6 1.6l0.4 2.6l1 5.2l1 1l1 0.5l1 -3.4l1 15.2l1 0.4l1 -5.4l1 -5l1 1l1 1.3l1 0.5l1 5.4l1 0.7l1 9.8l0.5 -4.3l0.5 7.6l1 -2.2l1 -2.1l1 0.4l1 -7.3l1 17.8l1 -15.4l1 10.6l1 -0.8l1 0.7l1 9.4l1 -4.4l1 -7.8l1 7.6l1 3.9l0.4 5.6l0.6 -0.8l1 -7.2l1 -2l1 -5.6l1 9.4l1 5.7l1 -3.6l1 4.1l1 -3.6l0.3 -2.9l0.7 -4.6l1 10.7l1 5.8l1 -10l1 -5.7l1 -1.3l1 2.5l1 -1.3l1 0l0.3 -11.7l0.7 13.1l1 -2.3l1 2l1 -1.9l1 -2.4l1 -1.1l1 0.1l0.7 -5.4l0.3 1.7l1 0.8l1 -2.5l1 3.1l1 3.1l1 -0.9l1 0.6l1 0.2l1 -0.3l0.6 0.5l0.4 -1.1l1 1.3l1 2.8l1 -3.4l1 0.9l1 -1.3l1 1l1 0.1l1 -0.2l1 2.3l1 -0.6l1 2.2l1 1.8l1 -3.9l1 2.7l1 -2.1l1 1.6l1 0.3l1 0.3l1 1.4l1 -0.5l1 -1.5l1 3.1l1 -2.2l1 0.9l1 0.4l1 -1l1 1.2l1 1.6l1 -2.6l1 0.3l1 1.4" stroke="#dcaa3c" stroke-width="1.5" fill="none" stroke-linejoin="round"/>
<path d="M100 233.1l1 -0.7l1 -2.8l1 -3.2l1 -5.6l0.4 -2l0.6 -1.6l1 -1.3l1 2.6l1 3.3l1 5.4l1 -3.6l1 3.1l1 -4.3l1 -6.4l1 5l0.9 9.6l0.1 -13.2l1 13.6l1 7.1l1 -4l1 5.9l1 -10.8l1 11.5l1 3.2l1 -8.3l1 -12.6l1 3.4l1 -4.9l0.8 1.2l0.2 1.5l1 3.7l1 7.5l1 4.8l1 8.9l1 0.4l1 3l1 -6l1 2.8l1 -5.8l1 5.2l0.2 -1.7l0.8 -1.5l1 -0.5l1 -1.1l1 6l1 11.9l1 15.1l1 -22.2l0.6 5.4l0.4 5.5l1 18.2l1 -17.2l1 -3.6l1 9.5l1 9.7l1 -22.3l1 9.7l1 10.9l1 -12.5l1 6.7l1 -0.7l1 8.5l1 -9.9l1 9.3l0.5 0l0.5 2.5l1 1.8l1 1.1l1 -6.8l1 7.3l1 -2.4l1 7.7l1 1.4l1 6.2l1 8.9l1 -6.7l1 7.9l1 -4.8l1 -15.3l1 0.2l0.4 7.3l0.6 -11l1 9.9l1 -7l1 3.8l1 7.7l1 -10.8l1 9.8l1 -1l1 4.4l0.3 7.9l0.7 -4.9l1 -9.3l1 10.8l1 -6.7l1 0.1l1 -1.2l1 -9.9l1 3.1l1 -3.6l0.3 -3.4l0.7 4.1l1 2.3l1 9.8l1 -2.6l1 -1.3l1 -5.1l1 0l0.7 -3.2l0.3 2.3l1 1.4l1 0.9l1 1.5l1 0.1l1 -1.1l1 0.5l1 -0.2l1 3.3l0.6 -1l0.4 -0.4l1 1.7l1 -1.2l1 -0.4l1 1.5l1 1.1l1 -1l1 0.1l1 2l1 -3.3l1 5l1 -4.2l1 1.6l1 -0.7l1 0.6l1 1.3l1 3l1 -3l1 0.6l1 1.2l1 -0.9l1 1.2l1 1.2l1 -2.5l1 1.7l1 0l1 -0.3l1 0.6l1 -1.4l1 1.5l1 0.1l1 -0.3" stroke="#3da966" stroke-width="1.5" fill="none" stroke-linejoin="round"/>
<path d="M100 240.1l1 -3.5l1 2.1l1 -3.8l1 0l0.4 -1.7l0.6 -3l1 -3l1 -0.4l1 -7.2l1 -7.8l1 8.2l1 -3.6l1 7.8l1 10.8l1 -5.5l0.9 -6.6l0.1 2l1 -1.9l1 4.1l1 -6.2l1 15.2l1 1.5l1 -3l1 -3.7l1 12.3l1 -18.5l1 -0.4l1 -0.9l0.8 0.2l0.2 10.4l1 2.9l1 5l1 5.8l1 -5.9l1 -4.5l1 20.8l1 -5.9l1 -4.3l1 -1.6l1 2.2l0.2 -0.4l0.8 -0.1l1 -7.9l1 14.1l1 -2.1l1 5.1l1 -4.9l1 -4.4l0.6 3.5l0.4 -1.6l1 2.1l1 5.5l1 5.1l1 3.7l1 2.6l1 10.3l1 9l1 -17.1l1 3.7l1 -13.4l1 -3.9l1 15.2l1 1.5l1 -3.1l0.5 -3l0.5 2.7l1 3.1l1 4.5l1 -1.1l1 -2.6l1 5.9l1 11.1l1 -7l1 8.6l1 8.6l1 -11l1 -0.9l1 15.2l1 -7.4l1 -7.6l0.4 3.9l0.6 0.1l1 2.5l1 3.8l1 -1.7l1 -9.3l1 6.8l1 5.6l1 -6.7l1 5.6l0.3 9.1l0.7 -5.6l1 -7.8l1 0.8l1 1.2l1 -8.4l1 2.8l1 2.3l1 -3.1l1 -2.6l0.3 -2.5l0.7 2.9l1 3.4l1 0.9l1 0.3l1 -2.3l1 0.6l1 -1.6l0.7 -0.8l0.3 -1.4l1 1.7l1 -0.6l1 4.7l1 0.1l1 3.4l1 0.7l1 -0.7l1 0.1l0.6 0l0.4 0.4l1 1.2l1 1l1 0.7l1 -2.5l1 1.2l1 0.4l1 -0.2l1 0.2l1 -1.2l1 2.8l1 -1.6l1 0.5l1 0l1 1.7l1 -1.2l1 1.7l1 0.4l1 -0.7l1 -0.5l1 0.7l1 1.4l1 -1.1l1 0l1 0.5l1 -0.2l1 0.7l1 0.3l1 -1.9l1 3.6l1 -1.9l1 0.5" stroke="#264fa8" stroke-width="1.5" fill="none" stroke-linejoin="round"/>
<path d="M100 233.4l1 -3.3l1 -3.6l1 -0.4l1 -4.3l0.4 -6.5l0.6 4.9l1 -3.2l1 -2.8l1 1.9l1 -3.9l1 2.4l1 1.1l1 6.9l1 -10.3l1 -6.5l0.9 3.3l0.1 -3.7l1 15.8l1 0.8l1 -1.9l1 8.6l1 8.5l1 -0.2l1 -13.3l1 4.2l1 -2.3l1 3.1l1 0.4l0.8 -6.3l0.2 -4.4l1 9.5l1 9.9l1 -2.9l1 10.2l1 -11.4l1 -1.4l1 13.6l1 -0.6l1 6.1l1 -4.2l0.2 1.5l0.8 -4.7l1 10.1l1 -4.3l1 -2.2l1 4.6l1 0.9l1 -7.5l0.6 3l0.4 0.8l1 -0.6l1 1.9l1 6l1 2.9l1 2.9l1 -4.4l1 14.7l1 5.3l1 -0.6l1 4.5l1 -8l1 -9.6l1 0l1 7.2l0.5 -3.6l0.5 -5.2l1 11.9l1 1.2l1 3.6l1 6.8l1 0.6l1 11.8l1 -13.8l1 2.1l1 1.1l1 -3l1 0.3l1 11.9l1 -14.1l1 10.4l0.4 -9.6l0.6 11l1 -9.2l1 5.2l1 13l1 -0.7l1 -10l1 -17l1 18.1l1 -4l0.3 -6.7l0.7 3.5l1 -2.5l1 7.9l1 1.8l1 2.3l1 1.3l1 -6.3l1 -8.2l1 0.2l0.3 -1l0.7 3.8l1 4.5l1 5.3l1 2.2l1 -4l1 -3l1 -0.8l0.7 -1.8l0.3 1.1l1 2.4l1 -0.5l1 3.1l1 2.4l1 0.1l1 0.5l1 -1.4l1 -1.3l0.6 4.3l0.4 -2l1 1l1 0.1l1 -0.4l1 1.9l1 -1.9l1 0.3l1 2.4l1 -0.6l1 -0.5l1 1.2l1 0.8l1 -1.8l1 0.1l1 0.7l1 1.5l1 1.1l1 0.7l1 -1.1l1 1.4l1 -0.2l1 -1.6l1 2.7l1 -0.8l1 1l1 -1.2l1 0.9l1 -0.5l1 0.4l1 0.8l1 -0.6l1 0.7" stroke="#506ccf" stroke-width="1.5" fill="none" stroke-linejoin="round"/>
<path d="M34 276.7l1 2.8l1 -1.3l1 1.2l1 -1.1l1 0.8l1 0l1 -4.5l1 -0.4l1 -4.9l1 -2.8l1 -3.1l1 4.2l1 0.8l1 1.9l1 2.7l1 4.1l1 -7.2l1 -1.3l1 -4.3l1 -5.5l1 1.2l1 1.6l1 0.7l1 -0.4l1 1.8l1 -2l1 -1.8l1 -1.1l1 1.6l1 -0.9l1 1.4l1 -2.2l1 2l1 -2.4l1 0l1 -1.2l1 1.1l1 0.7l1 -1.4l1 -0.6l1 2.5l1 -1.3l1 -0.1l1 -2.2l1 -1.8l1 1.5l1 -2.3l1 0.1l1 -1.2l1 -0.3l1 -2.8l1 0.4l1 -0.9l1 0.3l1 0.9l1 -0.5l1 -1.7l1 2l1 -1.6l1 2.6l1 0.7l1 0l1 0.5l1 1.7l1 -3.4l1 3.7l1 -3.5l1 -4.3l1 -3.7l1 -6l1 -4l1 -3.4l1 -3.5l1 -1.1l1 -4.2l1 -2.3l0.6 -5.3l0.4 -0.8l1 -2.2l1 -6.7l1 -4.5l1 -2.1l1 -8.1l1 -13.5l1 -19.5l0.4 -2.4l0.6 0.7l1 8.4l1 8.6l1 2.7l1 -16.3l1 -10.7l1 -11.9l1 -14l0.7 -6.9l0.3 -0.9l1 7.1l1 3.9l0.7 1.1l0.3 -0.4l1 -3.9l1 -10.5l1 -9.1l1 -0.3l1 17.1l1 17.6l1 17.6l1 -9.8l1 -10.3l1 -7.4l1 -12.3l0.6 -5l0.4 4.2l1 2l1 6.8l1 11.7l1 7.6l1 4l1 2.1l1 3.2l1 2.8l1 -4.7l1 0.8l1 -2.3l1 -1l1 -0.7l1 5.2l1 1.4l1 4.6l1 3.5l1 0.9l1 6.9l1 0.7l1 2.3l1 1.9l1 1.1l1 11l1 6.7l1 6l1 1l1 11.5l1 0.1l1 4.4l1 0.4l1 0.7l1 0.6l0.8 1.4l0.2 1l1 -3.1l1 -5.5l1 -4.7l1 -3.5l1 3.7l1 3.3l1 2.1l1 3.7l1 3.4l1 0.1l1 -11.9l1 -7.4l1 -8.1l1 -8.7l1 -10.1l0.3 -1.5l0.7 -0.3l1 -0.3l0.7 2.7l0.3 3.4l0.9 18.5l0.1 -0.1l1 -1.3l1 -1l0.9 -3.2l0.1 0.8l1 -9.9l1 -7.4l0.2 -4.3l0.8 5.7l1 3.2l1 5.4l0.8 2.1l0.2 0.1l1 2.3l1 -0.5l1 -0.4l1 0.4l0.6 0.7l0.4 2.3l1 1.4l1 -1.1l1 1.8l1 0.7l1 3l1 1.1l1 0.5l1 1.6l1 3.4l0.7 -4.3l0.3 -0.9l1 -2.6l1 9.5l1 -2.5l1 3.8l1 0.4l1 1.4l1 1.3l1 -2l1 1.1l1 2l1 -0.4l1 -1.7l1 0.3l1 -0.8l1 2.6l1 -0.8l1 -1l1 1.7l1 1.5l1 0.2l0.5 -0.3l0.5 0.6l1 0.7l1 -1.8l1 0.8l1 2.4l1 0l1 -1.9l1 1l1 2.3l1 -0.5l1 -0.7l1 1.2l1 0.5l1 0.2l1 -1.5l0.4 0.4l0.6 1.1l1 1.2l1 0.6l1 1.2l1 1.5l1 0l1 0.3l1 -0.2l0.7 1.2l0.3 -9.4l1 -29.3l0.2 -5.9l0.8 1.7l1 5.9l0.3 -0.2l0.7 0.8l1 1.3l1 -1.1l1 -0.1l1 1.7l1 0.2l1 0l1 1.8l1 0.1l1 0.1l1 -0.2l1 1.5l1 1.3l1 -0.2l1 1.7l1 1.3l1 -0.6l1 0.4l1 0l1 0.7l1 -0.3l1 0.8l1 0.3l1 -0.1l1 -0.8l1 1.2l1 -0.3l1 0.5l1 0.6l1 -0.7l1 0.7l1 1l1 -1.2l1 0.6l1 0.7l1 -0.1l1 1.2l1 -0.7l1 0.2l1 1.5l1 0.1l1 0.4l1 0.5l1 0.3l1 -0.7l1 0.1l1 -0.7l1 0.8l1 0.9l1 0.2l1 -0.8l1 1.5l1 -0.3l1 1.1l1 -0.5l1 1.2l0.9 -0.9l0.1 -0.4l1 1.2l1 1.5l1 0.1l1 -1.1l1 1.5l1 0.6l1 0.9l1 -0.2l1 0.5l0.4 -1l0.6 -8.4l1 -17.3l0.8 -11.8l0.2 0.8l1 3.4l1 3.7l0.7 2.8l0.3 0.5l1 -0.8l1 0.6l1 0.1l1 -0.4l1 1.1l1 -0.8l1 0.2l1 -0.3l1 2.2l1 0.2l1 0l1 0.5l1 -0.1l1 0.8l1 -0.3l1 0.3l1 0l1 0l1 -0.4l1 2l0.6 -0.8l0.4 1.1l1 0.5l1 1.1l1 -1.2l1 0.9l1 0.8l1 -0.5l1 0.4l1 0.9l1 1l1 -0.5l1 0l1 -1.1l1 0.9l1 0.3l1 -0.9l1 1.2l1 0.3l1 0.9l1 -0.9l1 1.9l1 -0.5l1 -0.1l1 -1l1 -0.1l1 1l1 0.7l1 0l1 0.5l1 -1.3l1 1.4l1 0.8l1 -1.4l1 1.6l1 -0.5l1 1.1l1 0.1l1 -0.7l1 0.7l1 1.4l1 -0.8l1 0.8l1.5 -0.4l1.5 0.3l0.5 -0.5l1 0.7l1.5 0.1l1.5 1.2l1.5 -0.3l1.5 0.9l1.5 0.2l1.5 -1.7l1.5 0.6l1.5 0.6l1.5 0.9l1.5 -0.2l1.5 -0.4l1.5 -1l1.5 1.6l1.5 -0.8l1.5 0.5l1.5 0.6l1.5 -0.6l1.5 1.9l1.5 0.5l1.5 -0.3l1.5 0.1l1 -0.2l0.5 -1l1.5 0.5l1.5 0.9l1.5 -0.6l1.5 0.3l1.5 0.3l1.5 0l1.5 0.2l1.5 0.2l1.5 -0.1l1.5 -0.5l1.5 0.7l1.5 1l1.5 -0.8l1.5 0.9l1.5 0.2l1.5 -0.5l1.5 -0.8l1.5 1.7l1.5 -0.4l1.5 0.2l1.5 0.9l1.5 -0.5l1.5 1l1.5 0.2l1.5 0.4l1.5 1.1l1.5 -2.3l1.5 1.7l1.5 -0.7l1.5 0l1.5 -0.1l1.5 0.4l1.5 0.1l1.5 -0.3l1.5 1.7l1.5 -1l1.5 0.6l1.5 -0.4l1.5 1.1l1.5 0.4l1.5 0.7l1.5 -0.4l1.5 -1.3l1.5 0.9l1.5 -1.4l1.5 1.5l1.5 0.5l0.5 -1l1 -0.1l1.5 1.5l1.5 0.7l1.5 -0.3l1.5 0.7l1.5 0l1.5 0.1l1.5 0.3l1.5 -0.9l1.5 -0.7l1.5 1l1.5 -0.1l1.5 0.1l1.5 0.8l1 0.4l0.5 -1.5l1.5 0.2l1.5 1.4l1.5 -1l1.5 0.7l1.5 1.5l1.5 0.4l1.5 -0.1l1.5 0.8l1.5 -1.3l1.5 2.5l1.5 0.4l1.5 -0.8l1.5 1.1l1.5 0.4l1.5 -0.1l1.5 0.9l1.5 0.4l1.5 -0.1l1.5 0.2l1 -0.3l0.5 1.5l1.5 -0.6l1.5 0.9l1.5 1.2l1.5 -0.2l1.5 -0.9l1.5 0.9l1.5 0l1.5 -0.2l1.5 0.8l1.5 1.1l1.5 0.2l1.5 -0.1l1.5 0.4l1.5 -0.6l1.5 0.4l1.5 0.7l1.5 1l1.5 -0.3l1.5 0.4l1.5 0.8l1.5 1.3l1.5 -1.1l1.5 1.6l1.5 -0.1l1.5 -0.1l1.5 0.2l1.5 -1.2l1.5 1.4l1.5 0l0.5 -0.5l1 1.2l1.5 -0.6l1.5 0.2l1.5 0.9l1.5 -0.7l1.5 0.4l1.5 1.2l1.5 0.3l1.5 1l1.5 -1.2l1.5 -0.3l1.5 0.2l1.5 0.4l1.5 1l1.5 -0.3l0.3 -0.2l1.2 -0.4l1.5 0l1.5 0l1.5 0.8l1.5 -0.4l1.5 0.4l1.5 -0.4l1.5 0.1l1.5 0.5l1.5 -0.2l1.5 0.9l1.5 -0.3l1.5 0.4l1.5 -0.9l1.5 -0.6l1.5 2l1.5 -1.4l1.5 0.6l1.5 -0.4l1.5 -0.2l1.5 0.6l1.5 -0.9l1.5 0.5l1.5 0.9l1.5 -0.6l1.5 0.4l1.5 0l1.5 -0.1l1.5 -0.2l1.5 0.3l1.5 -0.9l1.5 0.9l1.5 -0.9l1.5 0.2l1.5 0.1l1.5 -0.6l1.5 -0.5l1.5 1.2l1.5 0l1.5 0.2l1.5 1.1l1.5 -1.1l1.5 0.5l1.5 -0.6l1.5 1.1l1.5 -0.7l1.5 2.1l1.5 -1.8l1.5 0.3l1.5 0.7l1.5 -1.7l1.5 2l1.5 -1.3l1.5 0.6l1.5 0.5l1.5 -0.5l1.5 0.4l1.5 -0.9l1.5 0.6l1.5 -1.6l1.5 2.1l1.5 -1.3l1.5 -0.2l1.5 0.6l1.5 1.1l1.5 -1.3l1.5 0.5l1.5 -0.2l1.5 -0.4l1.5 -0.3l1.5 1.1l1.5 0.3l1.5 -0.6l1.5 0.9l1.5 0.4l1.5 -0.2l1.5 -0.5l1.5 0l1.5 0l1.5 -0.7l1.5 0.5l1.5 0.5l1.5 -0.7l1.5 1l1.5 -1l1.5 -0.5l1.5 0.4l1.5 -0.1l1.5 1.6l1.5 -0.7l1.5 1.4l1.5 -0.4l1.5 -0.3l1.5 0.1l1.5 -0.3l1.5 -0.4l1.5 0.8l1.5 -0.6l1.5 0.8l1.5 0.5l1.5 -0.3l1.5 0.5l1.5 -1.1l1.5 1.4l1.5 -1l1.5 1.1l1.5 0.7l1.5 -2l1.5 1l1.5 -0.1l1.5 -0.2l1.5 0.5l1.5 0.3l1.5 -1.1l1.5 0.2l1 -0.5l0.5 0.6l1.5 -0.5l1.5 0.4l1.5 1.3l1.5 0.2l1.5 -1.2l1.5 0.6l1.5 -0.8l1.5 1.2l1.5 0.4l1.5 -2.3l1.5 1.1l1.5 0.2l1.5 0.2l1.5 1.3l1.5 0l1.5 -0.8l1.5 0.4l1.5 -1.3l1.5 0.9l1.5 0.1l1.5 0.2l1.5 0.4l1.5 -0.9l1.5 0.3l1.5 1.9l1.5 -2.3l1.5 1.1l1.5 0.6l1.5 0.1l1.5 0l1.5 -0.7l1.5 0.5l1.5 -0.7l1.5 2l1.5 -1.1l1.5 0.1l1.5 -0.4l1.5 -0.4l1.5 0.7l1.5 0l1.5 0l1.5 0.1l1.5 0.2l1.5 -0.7l1.5 0.3l1.5 -0.3l1.5 -0.3l1.5 0.6l1.5 0.9l1.5 -2.3l1.5 2.1l1.5 -1l1.5 1l1.5 -1.2l1.5 0.6l0.8 0.8l0.7 -0.5l1.5 0.5l1.5 -0.7l1.5 0.2l1.5 1.5l1.5 -1.1l1.5 -0.3l1.5 -1l1.5 0.2l1.5 -0.1l1.5 0.5l1.5 -0.1l1.5 -0.2l1.5 0.1l1.5 0.6l1.5 0.7l1.5 -1.4l1.5 -0.1l1.5 1.5l1.5 -1.4l1.5 0.8l1.5 0.4l1.5 1.2l1.5 -2.1l1.5 -0.4l1.5 1.6l1.5 0.7l1.5 -0.5l1.5 -0.6l1.5 0.5l1.5 -1.3l1.5 1.5l1.5 0.5l1.5 -0.9l1.5 0.7l1.5 -1l1.5 1.6l1.5 -1.2l1.5 0.1l1.5 0.1l1.5 -0.4l1.5 1.5l1.5 0.9l1.5 -1.8l1.5 0.8l1.5 0.4l1.5 -0.5l1.5 -0.5l1.5 1.2l1.5 0.6l1.5 -0.4l1.5 -0.5l1.5 0.3l1.5 -1.2l1.5 0.9l1.5 0.6l1.5 0.1l1.5 -0.5l1.5 0.4l1.5 -0.3l1.5 0.3l1.5 -0.5l1.5 0.5l1.5 -0.5l1.5 0.3l1.5 0.2l1.5 -0.5l1.5 -0.9l1.5 1.2l1.5 -0.4l1.5 0l1.5 0.7l1.5 -0.3l1.5 1.4l1.5 0.2l1.5 -0.3l1.5 -0.3l1.5 0.1l1.5 -0.7l1.5 0.8l1.5 -1.5l1.5 1.7l1.5 0l1.5 -0.1l1.5 0.9l1.5 -0.7l1.5 0.5l1.5 -0.6l1.5 0.3l1.5 0.7l1.5 0.4l1.5 0.2l1.5 -0.8l1.5 0.7l1.5 -1.2l1.5 -0.8l1.5 -0.1l1.5 0.5l1.5 0.6l1.5 -0.4l1.5 1.1l1.5 -0.2l1.5 -0.2l1.5 0.1l1.5 -0.3l1.5 -0.1l1.5 -0.1l1.5 0.2l1.5 -0.6l1.5 1.5l1.5 0.1l1.5 -0.8l1.5 1.6l1.5 -1.6l1.5 1.4l1.5 -1.2l1.5 1.1l1.5 -1l1.5 0.8l1.5 -0.7l1 0.7l0.5 -1.8l1.5 -4.9l1.5 -22.1l1.5 -20.5l0.5 -8l1 -23.4l1.5 -34.6l0.2 -5.7l1.3 28l0.1 1.6l1.4 1.2l1.5 1.3l1.2 3.3l0.3 -0.7l1.5 1.2l1.5 1l1.5 1.1l1.5 0.4l1.5 -0.9l0.4 0.9l1.1 -33.5l0.2 -6.2l1.3 5.3l1.5 5.5l1.5 2.1l1.5 0.1l1.5 2.3l1.5 0.4l1.5 1l1.5 1.3l1.5 0.4l1.5 1.6l1.5 0.2l1.5 1.3l1.5 0l1.5 2l1.5 -0.7l1.5 1.4l1.5 1.4l1.5 1.3l1.5 0.5l1.5 1.3l1.5 1l1.5 1.1l1.5 0.4l1.5 -0.9l1.5 0.9l1.5 0.6l1.5 0l1.5 1.3l1.5 1.4l1.5 -1l1.5 2.9l1.5 -0.7l1.5 0.7l1.5 -0.6l1.5 -1.2l1.5 1.9l1.5 1.4l1.5 -0.6l1.5 1.8l1.5 0.3l1.5 0.5l1.5 0.4l1.5 0.4l1.5 0.5l1.5 0.6l1.5 -0.2l1.5 0.4l1.5 0.1l1.5 0.3l1.5 -0.1l1.5 -0.1l1.5 0.9l1.5 0.3l1.5 0.3l1.5 1.6l1.5 -0.1l1.5 1.2l1.5 1.4l0.5 -1.2l1 -0.5l1.5 0.9l1.5 0.4l1.5 0.9l1.5 1.7l1.5 0.5l1.5 0l1.5 -0.3l1.5 1.1l1.5 -0.3l1.5 0.3l1.5 -1l1.5 0.6l1.5 0.7l1.5 0.6l1.5 0.6l1.5 0l1.5 1.5l1.5 0.9l1.5 0.8l1.5 -0.2l1.5 1l1.5 1.7l1.5 -0.4l1.5 -0.7l1.5 1.6l1.5 0.3l1.5 1l1.5 -0.4l1.5 0.9l1.5 0.2l1.5 1.4l1.5 0.9l1.5 0.9l1.5 -0.6l1.5 0.5l1.5 2l1.5 -2.7l1.5 1.5l1.5 0.8l1.5 0l1.5 1.6l1.5 -0.1l0.5 0.7l1 0l1.5 -0.2l1.5 1.6l1.5 1l1.5 -0.2l1.5 0.1l1.5 -0.8l1.5 1.8l1.5 0.4l1.5 0.1l1.5 0l1.5 1.6l1.5 0.6l1.5 0.1l1.5 1.1l1.5 -1.6l1.5 2.2l1.5 0.5l1.5 1.7l1.5 -0.6l1.5 -0.2l1.5 0.8l1.5 0.5l1.5 -0.3l1.5 0.3l1.5 1l1.5 0.7l1.5 0.2l1.5 1.3l1.5 0.3l1.5 1l1.5 0.4l1.5 0.6l1.4 0.5l0.1 -1l1.5 0.3l1.5 1l1.5 -0.5l1.5 -0.6l1.5 0.6l1.5 -0.3l1.5 0.3l1.5 1.5l1.5 0.7l1.5 0.1l1.5 1.7l1.5 -0.5l1.5 0.6l1.5 0.1l1.5 -0.1l1.5 -0.5l1.5 1.8l1.5 -2l1.5 1.4l1.5 0.7l1.5 -0.2l1.5 0.7l1.5 0.8l1.5 0.6l1.5 0.2l1.5 1l1.5 -0.1l1.5 0.8l1.5 -0.6l1.5 -1l1.5 0.4l1.5 0.8l1.5 0.8l1.5 -0.8l1.5 1l1.5 1.4l1.5 -0.1l1.5 -0.2l1.5 0.8l1.5 0.5l1.5 0.1l1.5 0.5l1.5 0.3l1.5 0.9l1.5 1.3l1.5 0.3l1.5 -1.2l1.5 2.5l1.5 -1l1.5 -0.7l1.5 0l1.5 1l1.5 0.1l1.5 0.1l1.5 0.5l1.5 1l1.5 0.9l1.5 0.1l1.5 -0.1l1.5 -1.7l1.5 0.9l1.5 1.1l1.5 0.7l1.5 0.7l1.5 -0.9l1.5 1.8l1.5 -1.5l1.5 0.6l1.5 0l1.5 0.2l1.5 0l1.5 1.2l1.5 0.2l1.5 -0.2l1.5 -0.9l1.5 0.4l1.5 0.4l1.5 0.4l1.5 -0.4l1.5 0.3l1.5 1.8l1.5 -1.2l1.5 0.1l1.5 -1l1 1.2l0.5 -12.3l1.5 -41.6l1.5 -57.4l0.5 -17.5l1 17.7l1.5 26.5l1.5 1.4l1.5 -0.2l1.5 0.6l1.5 0.7l1.5 1.4l1.5 0.8l0.6 0.9l0.9 0.4l1.5 1l1.5 0.7l1.5 0l1.5 0.1l1.5 1.3l1.5 1.3l1.5 0l1.5 0.5l1.5 0l1.5 0.3l1.5 0.6l1.5 0.7l0.5 0.5l1 -52.7l0.5 -25.1l1 10.6l1.5 18.3l0.8 8.7l0.7 -0.3l1.5 2.3l1.5 1.7l1.5 1.5l1.5 1.5l1.3 0.5l0.2 0.2l1.5 0.9l1.5 1.3l1.5 0.2l1.5 1.2l1.5 0.7l1.5 0.3l1.5 0.1l1.5 1.9l1.5 0.5l1.5 0.1l1 2.3l0.5 -1.3l1.5 0.8l1.5 1.2l1.5 1.4l1.5 1.4l1.5 0.8l1.5 0.4l1.5 0.5l1.5 1.1l1.5 0l1.5 1.1l1.5 1.8l1.5 0.8l1.5 1.1l1.5 -0.2l1.5 1.2l1.5 -0.5l1.5 1.9l1.5 0.3l1.5 0.5l1.5 0.7l1.5 2.5l1.5 0.7l1.5 -1.5l1.5 1.8l1.5 -1.8l1.5 2.9l1.5 0l1.5 0.7l1.5 0l1.5 0.1l1.5 1.2l1.5 0l1.5 0.9l1.5 0.8l1.5 -0.1l1.5 0.9l1.5 0.3l1.5 0.7l1.5 0.3l1.5 1.2l1.5 0.8l1.5 0l1.5 0l1.5 -0.4l1.5 0.5l1.5 1.8l1.5 0.1l1.5 -0.1l1.1 0.2l0.4 -0.2l1.5 1.2l1.5 0.7l1.5 0l1.5 0.9l1.5 1l1.5 -0.9l1.5 0.9l1.5 0.7l1.5 0.4l1.5 1.1l1.5 0.5l1.5 1l1.5 0.8l1.5 -0.6l1.5 1.1l1.5 1.1l1.5 0l1.5 -0.2l1.5 0.9l1.5 1.7l1.5 -0.5l1.5 0.1l1.5 1.2l1.5 -0.5l1.5 0.3l1.5 1.4l1.5 0.2l1.5 0.1l1.5 1.1l1.5 0.7l1.5 0.5l1.5 -0.2l1.5 0.6l1.5 0.4l1.5 -0.7l1.5 2.2l1.5 -0.6l1.5 0.8l1.5 0.5l1.5 0.6l1.5 1.7l1.5 -0.2l1.5 0.2l1.5 -0.3l1.5 1.7l1.5 0.3l1.5 0l1.5 1l1.5 -0.6l1.5 1.7l1.5 -0.7l1.5 1.3l1.5 0.3l1.5 -0.8l1.5 1.1l1.5 0.8l1.5 1.4l1.5 0.4l1.5 0.7l1.5 1.1l1.5 -0.6l1.5 0.4l1.5 -0.3l1.5 1l1.5 1.6l1.5 -0.2l1.5 0.7l1.5 1.7l1.5 -1.8l1.5 2.3l1.5 0.1l1.5 -1.7l0.8 1.7l0.7 0l1.5 1.1l1.5 -0.1l1.5 0.8l1.5 1.2l1.5 -0.8l1.5 0.9l1.5 0.5l1.5 -0.2l1.5 0.8l1.5 0l1.5 0.5l1.5 -1.1l1.5 0.8l1.5 1.2l1.5 0.9l1.5 0.5l1.5 -0.4l1.5 -0.1l1.5 0.1l1.5 0.1l1.5 1.4l1.5 1.2l1.5 0.2l1.5 -0.3l1.5 1.3l1.5 0.6l1.5 0.1l1.5 1.3l1.5 -0.5l1.5 0.5l1.5 -0.5l1.5 -0.3l1.5 1.5l1.5 0.3l1.5 -0.7l1.4 0.1l0.1 1.2l1.5 -0.4l1.5 0.1l1.5 1l1.5 0.6l1.5 -0.5l1.5 0.7l1.5 0.7l1.5 0.1l1.5 -1.2l1.5 1.5l1.5 0.7l1.5 0l1.5 -0.2l1.5 0.6l1.5 -0.7l1.5 0.8l1.5 0.3l1.5 1.8l1.5 -0.9l1.5 -0.5l1.5 1.7l1.5 -0.2l1.5 -1.5l1.5 1.2l1.5 -0.4l1.5 2l1.5 -1.5l1.5 2.2l1.5 -1.8l1.5 -0.1l1.5 1.7l1.5 -0.5l1.5 0.3l1.5 0.6l1.5 -0.6l1.5 1.4l0.5 -0.5l1 0.7l1.5 0.3l1.5 1.1l1.5 -1.2l1.5 0.3l1.5 1.5l1.5 1.3l1.5 -0.9l1.5 -0.3l1.5 0.5l1.5 -0.9l1.5 1.4l1.5 -0.4l1.5 1.7l1.5 1l1.5 0.6l1.5 -1.2l1.5 0.9l0.8 0.3l0.7 -1.4l1.5 0.5l1.5 -0.8l1.5 0.7l1.5 0.8l1.5 -1.4l1.5 1l1.5 0.6l1.5 0.5l1.5 -2.2l1.5 1.8l1.5 -0.4l1.5 -0.9l1.5 0.7l1.5 0.8l1.5 -0.5l1.5 0.3l1.5 -0.4l1.5 0.7l1.5 -0.7l1.5 0.2l1.5 0.3l1.5 -1l1.5 1.5l1.5 -1l1.5 -0.5l1.5 0.1l1.5 -0.1l1.5 0.5l1.5 0.1l1.5 0.9l1.5 -0.8l1.5 0.9l1.5 -0.8l1.5 0.5l1.5 1.1l1.5 -0.9l1.5 0.7l1.5 -0.4l1.5 -0.4l1.5 0.2l1.5 -0.4l1.5 0.5l1.5 -0.4l1.5 1.3l1.5 -0.5l1.5 -0.2l1.5 -0.7l1.5 0.9l1.5 -0.6l1.5 1.8l1.5 -1.8l1.5 1l1.5 -1.4l1.5 1.3l1.5 -1l1.5 0.5l1.5 0.4l1.5 0l1.5 -0.1l0.5 0l1 -0.4l1.5 0.4l1.5 0.1l1.5 -0.5l1.5 1l1.5 -0.3l1.5 -0.5l1.5 1.2l1.5 -1.1l1.5 -0.5l1.5 2l1.5 -0.6l1.5 1.3l1.5 -0.9l1.5 -1.1l1.5 0.9l1.5 -0.7l1.5 0.3l1.5 -0.5l1.5 0.9l1.5 -0.3l1.5 -0.4l1.5 -0.4l1.5 1.1l1.5 0.4l1.5 -0.4l1.5 0.7l1.5 1.2l1.5 -0.8l1.5 0.6l1.5 -1.5l1.5 -0.4l1.5 0.8l1.5 -0.6l1.5 0.3l1.5 0.5l1.5 0.3l1.5 -1.6l1.5 1l1.5 -0.2l1.5 0l1.5 1l1.5 -1.1l1.5 -0.2l1.5 0.7l1.5 -1.1l1.5 1.7l1.5 -0.4l1.5 1l1.5 -0.7l1.5 0.7l1.5 -0.4l1.5 -0.3l1.5 0.8l1.5 0.1l1.5 -1.3l1.5 0.3l1.5 0.5l1.5 0l1.5 0.9l1.5 0.1l1.5 -0.6l1.5 0.4l1.5 -0.8l1.5 -0.6l1.5 0.9l1.5 -1.2l1.5 1.9l1.5 -0.9l1.5 0.5l1.5 -1l1.5 -0.6l1.5 0.8l1.5 0.7l1.5 -0.2l1.5 0.1l1.5 0.5l1.5 0.1l1.5 1.2l1.5 -1.3l1.5 -0.3l1.5 1l1.5 -0.1l1.5 -1.4l1.5 0.6l1.5 0.5l1.5 0.2l1.5 0.2l1.5 -0.4l1.5 -0.6l1.5 1.2l0.4 -0.8l1.1 -0.7l1.5 1.4l1.5 -0.3l1.5 -1.9l1.5 3.2l1.5 -1.3l1.5 -0.7l1.5 1.7l1.5 -0.1l1.5 0.7l1.5 -0.9l1.5 -1.1l1.5 0.7l1.5 -0.4l1.5 0.6l1.5 -0.2l1.5 0.6l1.5 -0.9l1.5 0.3l1.5 -0.1l1.5 0.4l1.5 -1.4l1.5 1.4l1.5 1.7l1.5 -2.1l1.5 2l1.5 -0.9l1.5 0.2l1.5 -0.9l1.5 -0.2l1.5 0.3l1.5 0.3l1.5 -0.7l1.5 0.9l1.5 1l1.5 -0.3l1.5 -1.3l1.5 -0.2l1.5 0.6l1.5 0.8l1.5 0l1.5 -0.8l1.5 -1l1.5 1.4l1.5 -0.8l1.5 1.6l1.5 0.4l1.5 -0.3l1.5 0.1l1.5 0.1l1.5 0.7l1.5 -0.4l1.5 0.2l1.5 -1.6l1.5 0.5l1.5 0.3l1.5 -1.2l1.5 1.2l1.5 0.1l1.5 -0.1l1.5 1.5l1.5 -1.7l1.5 -0.1l1.5 -0.1l1.5 -0.2l1.5 -0.8l1.5 1.8l1.5 -0.3l1.5 0.5l1.5 0.1l1.5 -0.4l1.5 -0.4l1.5 0.8l1.5 0.6l1.5 -0.5l1.5 0.4l1.5 -1l1.5 0.2l1.5 0.4l1.5 -0.1l1.5 0.2l1.5 0.8l1.5 -1.1l1.5 0.2l1.5 -0.5l1.5 0.6l1.5 -0.3l1.5 -0.7l1.5 -0.3l1.5 -0.2l1.5 0.9l1.5 0.6l1.5 -0.1l1.5 0.5l1.5 0l1.5 1.1l1.5 -0.8l1.5 0.5l1.5 -0.9l1.5 0.4l1.5 1.3l1.5 -0.5l1.5 0l1.5 -0.8l1.5 -0.1l1.5 0.7l1.5 -0.9l1.5 -0.1l1.5 -0.5l0.5 1l1 -1.6l0.5 -0.3l1 -7.2l1.5 -9.7l1.5 -8.2l1.5 -10.2l1.5 -8.9l1.5 -10.6l1 -6.3l0.5 -5.9l1.5 -14l1.5 -15.5l0.7 -7.2l0.8 11.3l0.5 4.8l1 1.5l1.5 2l1.5 1.7l1.5 2.1l1.5 1.5l1.5 1.5" stroke="#f27663" stroke-width="1.5" fill="none" stroke-linejoin="round"/>
<path d="M34 258.2l1 3.4l1 1.8l1 -0.2l1 0.7l1 1.6l1 2.4l1 -1.8l1 -1.8l1 -5.1l1 -3l1 -4.2l1 0.9l1 0.9l1 3.2l1 4.2l1 2l1 -6.5l1 -5.2l1 0.4l1 -3l1 0l1 -1.1l1 -2.4l1 2.4l1 -2.7l1 -0.2l1 -1.5l1 0.1l1 3l1 -1.6l1 -4.4l1 0.5l1 1.2l1 0.2l1 2.2l1 1.4l1 -4l1 0.5l1 -2.1l1 -2.9l1 3.4l1 0.1l1 -2.5l1 2.6l1 -0.6l1 -1.2l1 -2.1l1 -1.3l1 -0.4l1 -1.5l1 0.4l1 -2.8l1 1.3l1 -3.7l1 -1.2l1 3.4l1 -1.4l1 -1.9l1 0.3l1 -0.1l1 4l1 -0.5l1 -0.9l1 3.5l1 -4.3l1 -3.5l1 -3.1l1 -5.5l1 -8.8l1 -7.5l1 -5.6l1 -7.2l1 -8.7l1 13.7l0.7 3.9l0.3 -11.6l1 -0.4l1 -7l1 -0.2l1 -7.4l1 -5.4l1 9.9l1 -18l1 18l0.4 -12.4l0.6 6.6l1 -12.5l1 13.5l1 -11.7l1 23.9l1 -16.3l1 10.6l1 -4l1 -16.2l1 -6.9l1 0.4l1 11.1l1 0l1 4.1l1 -14.6l1 2.5l1 3.1l0.8 -3.2l0.2 4.2l1 3.8l1 -9.3l1 -8.8l1 1.1l1 -5l1 -0.5l1 13.9l1 -8.3l0.4 6.7l0.6 -12.2l1 1l1 -4.7l1 11.1l1 4.9l1 -2l1 -12.8l1 5.4l1 5.2l1 -8.3l1 6.5l1 -5.6l1 4.4l1 -1.9l1 -8.1l1 0.6l1 2.9l0.8 -2.7l0.2 2.7l1 2.4l1 14.1l1 -1.8l1 7.6l1 -0.7l1 13.6l1 -4.6l1 6.4l1 9.8l1 -11.5l1 -12.5l1 10.9l1 8.8l1 -6.5l1 1.8l1 11.1l1 -5.8l1 14.6l1 -4.6l1 -4.3l1 10.8l1 -9.3l1 -1.3l1 15l1 -2.2l0.9 1.1l0.1 6.6l1 -10.7l1 -0.3l1 -19.1l1 -18.5l1 -25.3l1 1.4l1 15.7l0.3 -4.3l0.7 6.7l1 -10.7l1 3.2l1 -13.9l1 -0.3l1 -3.8l1 0.6l1 6.2l1 1.1l1 6l1 0.3l1 0.7l1 1.9l1 -4.5l1 5.5l1 0.3l1 3.1l1 -0.7l1 2.5l1 0.3l1 -0.7l1 1.6l1 1.4l1 -1.4l1 2.6l1 -0.1l1 4.6l1 -1.9l1 1.7l1 0.7l0.6 1.3l0.4 -3.1l1 0.3l1 4.5l1 -3.4l1 -0.2l1 3.6l1 0l1 -0.4l1 2.1l1 -1.9l1 3.4l1 -1.6l1 1.3l1 0.2l1 2.6l0.5 -2.6l0.5 1.1l1 2.7l1 -3.7l1 1.8l1 1.1l1 -0.2l1 1l1 1l1 -1.5l1 1.2l1 2.6l1 1.3l1 -3.8l1 3.8l1 0.3l0.4 -1.6l0.6 -0.1l1 -0.1l1 1.1l1 -0.7l1 2l1 -0.4l1 2l1 -1.1l1 3.2l0.3 0l0.7 -63.1l0.2 -18.7l0.8 13.7l1 13.1l0.3 3.5l0.7 2.1l1 -0.8l1 1.5l1 2.5l1 -1l1 2l1 1.9l1 1.5l1 1.3l1 2.1l1 2l1 -2.1l1 -0.8l1 1.1l1 -0.6l1 0.3l1 0.5l1 2.5l1 -0.3l1 1.1l1 -0.2l1 1.6l1 -0.7l1 2.2l1 0.1l1 0.1l1 -1l1 0.9l1 1.9l1 -0.7l1 1.4l1 0.6l1 1.9l1 -1.4l1 1.3l1 0.1l1 0.5l1 1.7l1 1.2l1 -1.5l1 3.3l1 1l1 -1.5l1 0.6l1 -1.1l1 0.9l1 0.9l1 0.2l1 1.8l1 -1.4l1 1.1l1 1.2l1 0l1 0.5l1 0.7l1 1l1 -1.4l1 4.5l1 -1l1 -1.1l1 0.7l1 0.4l1 1.9l1 -1.5l1 4.3l1 -2.3l1 -0.4l0.3 3l0.7 -37.7l0.8 -40.7l0.2 2.3l1 14.6l1 16.5l0.7 7l0.3 2.2l1 -0.2l1 1.1l1 0.9l1 -0.8l1 2.7l1 0.1l1 0.7l1 -0.5l1 1.6l1 -0.6l1 1.4l1 1.2l1 0.2l1 -1l1 2l1 -0.2l1 3.2l1 -0.8l1 -0.6l1 0.5l0.6 2.7l0.4 -1.6l1 1.8l1 0.1l1 0.6l1 0.2l1 0.8l1 1.7l1 -1.6l1 1.6l1 0.6l1 -0.3l1 0.2l1 0.8l1 1.8l1 0.3l1 1.4l1 0.2l1 0.5l1 0.6l1 0.9l1 0.6l1 1l1 -0.9l1 1.8l1 0.8l1 -1.1l1 0.8l1 -1l1 1.4l1 -0.8l1 2.3l1 -0.4l1 1.2l1 0.3l1 -1.2l1 1.5l1 0.8l1 0.9l1 -1.6l1 0.9l1 -0.5l1 1.3l1.5 0.5l1.5 1.3l1.5 -0.8l1.5 0.7l1.5 0.9l1.5 0l1.5 2.4l1.5 -2.6l1.5 1.2l1.5 1.6l1.5 1.2l1.5 -0.3l1.5 0.6l1.5 -1.3l1.5 2.3l1.5 0.6l1.5 1.4l1.5 0.1l1.5 -0.4l1.5 0.6l1.5 0.5l1.5 1.2l1.5 0.7l1.5 1.4l1 0.6l0.5 -1.2l1.5 0.7l1.5 -0.3l1.5 -0.5l1.5 1.7l1.5 -0.7l1.5 -0.1l1.5 1.1l1.5 2.4l1.5 -1.5l1.5 2.3l1.5 -1.8l1.5 1.4l1.5 0.8l1.5 -0.3l1.5 0l1.5 1.2l1.5 1.7l1.5 -0.3l1.5 0.1l1.5 0.8l1.5 0.9l1.5 0.6l1.5 -0.8l1.5 -0.1l1.5 0.4l1.5 1l1.5 -0.1l1.5 0.4l1.5 -0.2l0.7 2.7l0.8 -2.2l1.5 2.3l1.5 -1.2l1.5 0.7l1.5 0.3l1.5 0.6l1.5 0.1l1.5 1.2l1.5 0.7l1.5 0.9l1.5 -1.8l1.5 1.9l1.5 0.2l1.5 0.6l1.5 -1.1l1.5 2.6l1.5 0.5l1.5 0.8l1.5 -0.8l1.5 1.5l1.5 -0.3l1.5 -0.1l1.5 1.7l1.5 1l1.5 -0.2l1.5 0.1l1.5 0.1l1.5 1l1.5 -1.4l1.5 2.1l0.3 -1.1l1.2 0.9l1.5 0.9l1.5 1.2l1.5 -0.7l1.5 -0.3l1.5 3.1l1.5 -1.4l1.5 -1.9l1.5 2.4l1.5 -0.1l1.5 0.3l1.5 1.5l1.5 1l1.5 -1.4l1.5 -0.8l1.5 2l1.5 -0.3l1.5 0l1.5 1l1.5 -0.6l1.5 1.5l1.5 0.6l1.5 1.1l1.5 1.1l1.5 -1.6l1.5 1.3l1.5 -0.8l1.5 0.9l1.5 1l1.5 -0.3l1.5 -0.3l1.5 2l1.5 -0.3l1.5 0.6l1.5 -0.6l1.5 1.2l1.5 -0.8l1.5 1l1.5 -0.3l1.5 0.2l1.5 -0.9l1.5 2.3l1.5 -0.1l1.5 -0.6l1.5 0.8l1.5 0.7l1.5 0.3l1.5 -1.9l1.5 3l1.5 -1.7l1.5 2.6l1.5 -0.3l0.5 -0.6l1 0.1l1.5 0.2l1.5 -0.2l1.5 1.7l1.5 -1.4l1.5 0.3l1.5 0.3l1.5 -1l1.5 2.1l1.5 -1.7l1.5 2.3l1.5 -0.2l1.5 1l1.5 -1.8l1.5 0.1l0.3 -0.1l1.2 0.9l1.5 -1.5l1.5 0.3l1.5 -1.5l1.5 2l1.5 0.3l1.5 1.5l1.5 -2.3l1.5 1.4l1.5 -0.3l1.5 0.2l1.5 -1.6l1.5 -1.9l1.5 2.3l1.5 1.1l1.5 -0.4l1.5 1.3l1.5 0.8l1.5 -2l1.5 0.2l1.5 1.4l1.5 -2.6l1.5 -0.7l1.5 2.3l1.5 0.1l1.5 1l1.5 -0.5l1.5 -0.7l1.5 -0.6l1.5 -1.1l1.5 1.7l1.5 -0.7l1.5 0.3l1.5 0.7l1.5 -1.7l1.5 1.6l1.5 -0.4l1.5 2.1l1.5 -1.6l1.5 1l1.5 -1.6l1.5 -0.5l1.5 2l1.5 -0.8l1.5 -0.6l1.5 2l1.5 -0.2l1.5 -1.8l1.5 1.1l1.5 1.8l1.5 -1.5l1.5 -1.2l1.5 0.5l1.5 1.7l1.5 0.1l1.5 -0.6l1.5 -1.7l1.5 1.9l1.5 -1.2l1.5 0.2l1.5 0l1.5 1.2l1.5 -0.5l1.5 0.1l1.5 -0.8l1.5 -0.1l1.5 1.3l1.5 -1.2l1.5 0.3l1.5 0.7l1.5 -0.4l1.5 0.9l1.5 -0.4l1.5 0l1.5 1.3l1.5 -2.1l1.5 2.2l1.5 -2.6l1.5 0.6l1.5 -1.4l1.5 1.6l1.5 -0.1l1.5 1.3l1.5 0.6l1.5 1l1.5 -2.1l1.5 1.4l1.5 -1.1l1.5 -1.4l1.5 -2l1.5 2.9l1.5 -0.9l1.5 2.6l1.5 -1.2l1.5 1.6l1.5 -1.3l1.5 0.7l1.5 -1.4l1.5 0.9l1.5 1.2l1.5 -1l1.5 -1.3l1.5 0.6l1.5 0.7l1.5 0.6l1.5 -1.6l1.5 0.3l1.5 -0.6l1.5 2.7l1.5 -1.2l1.5 0l1.5 -0.5l1.5 2l1.5 -1l1.5 -0.4l1.5 0.9l1.5 -0.6l1.5 -0.8l1.5 -0.2l1.5 0.6l1.5 1.4l1.5 -1.9l1.5 0.1l1.5 1.8l1.5 0.2l1.5 0.2l1.5 -0.9l1.5 -1.5l1.5 1.9l1.5 -0.4l1.5 -0.8l1.5 -0.6l1.5 -0.1l1.5 1.2l1.5 -1.2l1.5 1.5l1.5 -0.1l1.5 0.9l1.5 0.4l1.5 -1.5l1.5 0.3l1.5 0.8l1.5 -1.3l1.5 1.7l1.5 -0.1l1.5 0.5l1.5 -0.9l1.5 1l1.5 -1l1.5 0.1l1.5 0.2l1.5 -0.9l1.5 0.5l1.5 -1.8l1.5 1.4l1.5 1.3l1.5 -1.2l1.5 -0.7l1.5 0.8l1.5 1l1.5 0.8l1.5 0l1.5 -1.4l1.5 1.2l1.5 -1.6l1.5 1.6l1.5 -0.8l1.5 -0.8l1.5 0.2l1.5 0.4l1.5 -0.3l0.8 1.6l0.7 -0.6l1.5 -0.3l1.5 1.1l1.5 -1.1l1.5 1.2l1.5 -0.5l1.5 -0.3l1.5 0.3l1.5 0.1l1.5 -1.5l1.5 1.3l1.5 2l1.5 -1.7l1.5 -0.9l1.5 0.9l1.5 1.1l1.5 -2l1.5 2.3l1.5 -1.5l1.5 2l1.5 -2.3l1.5 1.5l1.5 -1.4l1.5 1.4l1.5 -0.1l1.5 -0.3l1.5 -0.7l1.5 1.7l1.5 -0.7l1.5 -1.3l1.5 1.1l1.5 -0.8l1.5 0.2l1.5 -0.6l1.5 1.1l1.5 0.6l1.5 -1.2l1.5 1.4l1.5 -1.9l1.5 1.6l1.5 0.2l1.5 -0.9l1.5 0.9l1.5 -1.1l1.5 2.4l1.5 -1.2l1.5 0.5l1.5 -1.8l1.5 -0.9l1.5 1.8l1.5 1.1l1.5 -1.1l1.5 1l1.5 -0.6l1.5 -0.1l1.5 0.5l1.5 -1.3l1.5 0.2l1.5 1.3l1.5 -0.5l1.5 -0.8l1.5 -0.5l1.5 2.1l1.5 -3.9l1.5 3.5l1.5 -0.7l1.5 -0.7l1.5 1.4l1.5 0.1l1.5 1.6l1.5 -1.6l1.5 -2.2l1.5 1.2l1.5 1.2l1.5 -1.1l1.5 0.1l1.5 0l1.5 1.3l1.5 -0.9l1.5 -0.4l1.5 -0.2l1.5 1.5l1.5 -1.3l1.5 1.1l1.5 0.2l1.5 0.4l1.5 0.3l1.5 -0.2l1.5 1.1l1.5 -1l1.5 -1.3l1.5 -0.3l1.5 0.2l1.5 1.6l1.5 -1.8l1.5 2.1l1.5 -0.9l1.5 -0.8l1.5 -0.3l1.5 0.7l1.5 0.5l1.5 -0.7l1.5 0.5l1.5 -0.6l1.5 1l1.5 -1.3l1.5 0.4l1.5 -0.7l1.5 1l1.5 -0.4l1.5 -0.1l1.5 1.2l1.5 0.4l1.5 -2.7l1.5 0.6l1.5 -0.5l1.5 1.8l1.5 0.6l1.5 0.2l1.5 0l1 -0.6l0.5 -0.4l1.5 -4.2l1.5 -20.9l1.5 -20.7l0.5 -7.5l1 -22l1.5 -37.4l0.2 -4l1.3 25.2l0.1 0.5l1.4 2.7l1.5 2.5l1.2 2.4l0.3 0.1l1.5 1.5l1.5 1.5l1.5 1.7l1.5 -2.2l1.5 2.4l0.4 -0.3l1.1 -32.8l0.2 -7l1.3 5.7l1.5 5.9l1.5 0.8l1.5 1.2l1.5 1.6l1.5 0l1.5 2l1.5 2.1l1.5 1.1l1.5 1l1.5 -0.6l1.5 1l1.5 2.2l1.5 0.2l1.5 1.1l1.5 0.4l1.5 2l1.5 0.4l1.5 0l1.5 2l1.5 0.1l1.5 0.7l1.5 0.9l1.5 -0.1l1.5 0.3l1.5 0.5l1.5 1.4l1.5 1.2l1.5 -0.4l1.5 1l1.5 2.9l1.5 -1.9l1.5 1l1.5 -0.5l1 1l0.5 0.6l1.5 0.3l1.5 -0.9l1.5 1.8l1.5 -0.3l1.5 2.1l1.5 -0.4l1.5 1.9l1.5 -0.5l1.5 -0.8l1.5 2l1.5 -0.8l1.5 0.6l1.5 0.4l1.5 -0.5l1.5 2.5l1.5 -0.4l1.5 -0.4l1.5 0.1l1.5 1.7l1.5 0.8l1.5 -0.4l1.5 0.5l1.5 0l0.5 1.3l1 0.1l1.5 -0.4l1.5 0.6l1.5 -0.7l1.5 2.9l1.5 1.8l1.5 -1.7l1.5 1.2l1.5 1l1.5 -0.1l1.5 2.3l1.5 -2.1l1.5 0.4l1.5 2.3l1.5 0.2l1.5 0.5l1.5 0l1.5 0.8l1.5 0.4l1.5 0.5l1.5 -0.5l1.5 1.6l1 1.1l0.5 -1.6l1.5 0.2l1.5 1.4l1.5 2.4l1.5 -2.3l1.5 2.3l1.5 -1.2l1.5 0.3l1.5 1.6l1.5 -0.7l1.5 0.2l1.5 0.8l1.5 0.7l1.5 -0.2l1.5 1.4l1.5 -1.3l1.5 0.4l1.5 1.2l1.5 0.2l1.5 -1.6l1.5 1.7l0.5 0.9l1 -0.3l1.5 2.2l1.5 -2l1.5 1.8l1.5 -0.3l1.5 -0.1l1.5 1.6l1.5 0.6l1.5 0.3l1.5 0.3l1.5 1.7l1.5 -1l1.5 0.9l1.5 -0.2l1.5 2.5l1.5 -1.6l1.5 3l1.5 -1.6l1.5 1.2l1.5 1.6l1.5 -1.8l1.5 2.2l1.5 -1.8l1.5 1.2l1.5 1.3l1.5 0.4l1.5 0.6l1.5 0.5l1.5 1.4l1.5 -1.9l1.5 1.3l1.5 1.6l1.5 -1.3l1.4 0.9l0.1 2.5l1.5 -0.4l1.5 -0.5l1.5 -0.1l1.5 0l1.5 -0.3l1.5 0.7l1.5 0.5l1.5 0.5l1.5 1.8l1.5 0.6l1.5 -0.7l1.5 1.3l1.5 -0.7l1.5 1.4l1.5 -0.4l1.5 0.4l1.5 0.3l1.5 1l1.5 -0.7l1.5 -0.6l1.5 0.8l1.5 0.9l1.5 0.9l1.5 1.1l1.5 -0.6l1.5 -0.1l1.5 1.6l1.5 -1.2l1.5 1.4l1.5 2.3l1.3 -0.5l0.2 -2.1l1.5 1l1.5 1.5l1.5 -0.6l1.5 0.8l1.5 -0.3l1.5 0l1.5 0.7l1.5 -1.2l1.5 2.5l1.5 -1.5l1.5 0.7l1.5 -0.8l1.5 2.1l1.5 0.7l1.5 -0.5l1.5 -0.5l1.5 -0.8l1.5 2.3l1.5 -1l1.5 1.1l1.5 0.9l1.5 0.1l1.5 0.8l1.5 1.3l1.5 -0.3l1.5 -1l1.5 1.1l1.5 0.1l1.5 -0.2l1.5 1.5l1.5 -0.5l1.5 0.8l1.5 0.4l1.5 1.2l1.5 -2.2l1.5 0.9l1.5 1.1l1.5 -0.7l1.5 -0.7l1.5 -0.7l1.5 0.9l1.5 -0.4l1.5 0.5l1.5 -0.6l1.5 1.5l1.5 -0.9l1.5 2.6l1.5 -0.2l1.5 -0.4l1.5 0.6l1.5 -0.1l1.5 -0.4l1.5 0.3l1 -0.5l0.5 -10.7l1.5 -34.2l1.5 -42.3l1 -27.5l0.5 1.8l1.5 11.4l1.5 12.6l1.5 1l1.5 1.5l1.5 1.6l1.5 0.9l1.5 1.3l0.6 1.4l0.9 0.1l1.5 1.1l1.5 0.6l1.5 2.3l1.5 -1l1.5 1.9l1.5 0l1.5 2.8l1.5 -0.1l1.5 -0.3l1.5 2.6l1.5 -0.8l1.5 2l0.5 -1.1l1 -54l0.5 -27.5l1 13.2l1.5 15.5l0.8 10.1l0.7 3l1.5 1.3l1.5 0.5l1.5 2l1.5 0l1.3 2.4l0.2 -0.1l1.5 2.1l1.5 0.5l1.5 0.5l1.5 2l1.5 -0.5l1.5 2.1l1.5 0.1l1.5 1.5l1.5 0.2l1.5 2.2l1 -0.9l0.5 2.2l1.5 -0.3l1.5 -0.5l1.5 1.2l1.5 2.2l1.5 0.9l1.5 -1.4l1.5 1.9l1.5 1.1l1.5 2l1.5 -0.5l1.5 0l1.5 1.7l1.5 0.1l1.5 0.1l1.5 1.6l1.5 0.7l1.5 0.9l1.5 0.9l1.5 0.9l1.5 -0.5l1.5 1.6l1.5 -1.2l1.5 2.4l1.5 0.6l1.5 0.5l1.5 -1l1.5 1.3l1.5 1l1.5 0.7l1.5 0.9l1.5 -1.2l1.5 1.8l1.5 1.4l1.5 -1.2l1.5 0.4l1.5 1.1l1.5 0.6l1.5 0.3l1.5 1.4l1.5 -0.4l1.5 -1.4l1.5 2.8l1.5 0.1l1.5 1.4l1.5 -0.1l1.5 1.8l1.5 -0.5l1.5 0.1l1.1 -0.1l0.4 1.9l1.5 -0.5l1.5 -0.8l1.5 2.4l1.5 0.9l1.5 -2.2l1.5 2.6l1.5 0.5l1.5 1.4l1.5 0.1l1.5 -0.9l1.5 1.5l1.5 0.9l1.5 -1.4l1.5 2.8l1.5 -0.3l1.5 0.7l1.5 -1l1.5 1.7l1.5 -0.5l1.5 0.2l1.5 0.8l1.5 0.9l1.5 -0.8l1.5 1.8l1.5 0.8l1.5 -1l1.5 3.2l1.5 1.4l1.5 -1.2l1.5 -0.1l1.5 -0.4l1.5 0.3l1.5 0.3l1.5 2.1l1.5 -1.1l1.5 1.2l1.5 0.2l1.5 1.8l1.5 0.8l1.5 0.5l1.5 0.2l1.5 0.9l1.5 0.9l1.5 -1.5l1.5 1.4l1.5 -0.2l1.5 1.1l1.5 0.3l1.5 0.6l1.5 1l1.5 -1.2l1.5 -0.7l1.5 2.8l1.5 1.1l1.5 -0.7l1.5 2l1.5 1.1l1.5 -1.1l1.5 0.3l1.5 1.2l1.5 0.4l1.5 -1.4l1.5 1.8l1.5 -1.6l1.5 1.5l1.5 1.8l1.5 0.7l1.5 -0.4l1.5 1.3l1.5 1.4l1.5 -1.9l1.5 2.1l0.8 0.7l0.7 -1.8l1.5 2.3l1.5 -0.2l1.5 -0.3l1.5 0.8l1.5 0.3l1.5 0.5l1.5 0.2l1.5 0l1.5 1.6l1.5 1.1l1.5 -1.2l1.5 1.5l1.5 -1.7l1.5 -0.3l1.5 1.6l1.5 0.4l1.5 0.8l1.5 -0.5l1.5 1.1l1.5 1.5l1.5 0.6l1.5 -0.7l1.5 0.3l1.5 -2l1.5 1.9l1.5 1.9l1.5 0.6l1.5 -1.5l1.5 -0.8l1.5 2.9l1.5 -0.9l1.5 1.1l1.5 0.2l1.5 0.6l1.5 -0.1l1.4 1.6l0.1 -0.4l1.5 -1l1.5 0l1.5 3.2l1.5 -1.1l1.5 -0.1l1.5 -1.3l1.5 3.3l1.5 -2.3l1.5 1.3l1.5 0.4l1.5 -0.5l1.5 0.8l1.5 -0.2l1.5 -1.1l1.5 0.7l1.5 1.1l1.5 0.7l1.5 1.3l1.5 1.6l1.5 -1.6l1.5 2l1.5 -2.2l1.5 0.5l1.5 0.1l1.5 -0.8l1.5 1.7l1.5 0.3l1.5 -0.2l1.5 1.7l1.5 -0.1l1.5 -0.1l1.5 -0.5l1.5 1.1l1.5 -0.9l1.5 0l1.5 0.6l0.5 1.3l1 -0.9l1.5 0.5l1.5 0.1l1.5 1l1.5 -0.5l1.5 1l1.5 -0.7l1.5 1.3l1.5 -0.5l1.5 0.2l1.5 1.3l1.5 -0.2l1.5 -0.1l1.5 1.8l1.5 -1.4l1.5 0.3l1.5 0.7l1.5 1.9l0.8 -2l0.7 2.1l1.5 -0.6l1.5 -0.7l1.5 0l1.5 -0.2l1.5 -1l1.5 0.9l1.5 -0.3l1.5 -0.1l1.5 0.9l1.5 1l1.5 -1.3l1.5 0.6l1.5 -0.4l1.5 0.5l1.5 0.4l1.5 0.7l1.5 -0.5l1.5 0l1.5 0.8l1.5 -0.3l1.5 -0.3l1.5 0.2l1.5 0.1l1.5 -1.3l1.5 0l1.5 0.8l1.5 -1.5l1.5 1.2l1.5 -0.1l1.5 0.7l1.5 0.3l1.5 0.7l1.5 -3l1.5 2.1l1.5 0l1.5 1l1.5 -1.7l1.5 0.8l1.5 -0.6l1.5 -0.5l1.5 1l1.5 0.8l1.5 -1l1.5 0.6l1.5 0.5l1.5 -1l1.5 -0.3l1.5 0.4l1.5 0.2l1.5 0.4l1.5 0.7l1.5 -0.2l1.5 -1.4l1.5 -0.3l1.5 1.1l1.5 1.5l1.5 -1.4l1.5 -0.2l1.5 0.5l0.5 0.3l1 0.5l1.5 -1.8l1.5 1.7l1.5 -0.2l1.5 0.5l1.5 0.4l1.5 -2.7l1.5 2.5l1.5 -0.4l1.5 -1l1.5 0.3l1.5 1l1.5 -2.2l1.5 2.1l1.5 -0.1l1.5 1l1.5 -2.1l1.5 0.4l1.5 1.3l1.5 -0.8l1.5 0.5l1.5 -2.4l1.5 3.8l1.5 -3.3l1.5 0l1.5 1.9l1.5 -0.1l1.5 -0.8l1.5 -1l1.5 2.2l1.5 -0.3l1.5 -0.8l1.5 0.8l1.5 -0.6l1.5 -0.5l1.5 1.4l1.5 -0.8l1.5 0.3l1.5 -0.9l1.5 0.6l1.5 0.4l1.5 -0.2l1.5 0.6l1.5 -0.1l1.5 -0.3l1.5 0.2l1.5 0.3l1.5 0.7l1.5 -1.7l1.5 1.8l1.5 -0.1l1.5 0.2l1.5 -1.1l1.5 0.8l1.5 1.3l1.5 -2.5l1.5 1.7l1.5 -0.9l1.5 1.3l1.5 -1.1l1.5 0.3l1.5 -1l1.5 0.1l1.5 1.9l1.5 -2.3l1.5 0.7l1.5 0.2l1.5 -0.7l1.5 1.5l1.5 -1.4l1.5 0.9l1.5 -0.2l1.5 -1.6l1.5 2.1l1.5 -1.3l1.5 1.5l1.5 -1.8l1.5 1.4l1.5 1l1.5 -0.3l1.5 0.5l1.5 0.5l1.5 -0.8l1.5 -0.7l1.5 0l1.5 0.9l1.5 -1.4l1.5 0.4l1.5 0.9l1.5 1.5l1.5 -2.5l0.4 1.2l1.1 -0.9l1.5 1.2l1.5 -0.5l1.5 -0.2l1.5 0.5l1.5 -0.8l1.5 -1.1l1.5 3.2l1.5 -1.8l1.5 0.6l1.5 0.3l1.5 -1.2l1.5 0.3l1.5 -0.2l1.5 1.1l1.5 0l1.5 -0.2l1.5 -1l1.5 0.5l1.5 -0.2l1.5 0.2l1.5 0.7l1.5 0.6l1.5 0.2l1.5 -2l1.5 1.9l1.5 -0.2l1.5 1.2l1.5 -0.6l1.5 -1.7l1.5 1.4l1.5 -0.2l1.5 -0.1l1.5 -0.9l1.5 1.7l1.5 -0.8l1.5 -0.6l1.5 -0.8l1.5 1.2l1.5 -0.8l1.5 -0.1l1.5 2.7l1.5 -1.6l1.5 1l1.5 -0.1l1.5 -0.2l1.5 -0.9l1.5 -0.5l1.5 0.8l1.5 0.4l1.5 -0.4l1.5 0l1.5 0.2l1.5 -1.2l1.5 2l1.5 -1.5l1.5 1.1l1.5 -0.6l1.5 1.5l1.5 -1.5l1.5 -0.4l1.5 0.4l1.5 1.1l1.5 -1.3l1.5 0.2l1.5 0.9l1.5 0.5l1.5 -3.3l1.5 2.5l1.5 0.9l1.5 -1.9l1.5 1.2l1.5 -0.7l1.5 -1.1l1.5 1.2l1.5 1.1l1.5 -1.3l1.5 0.8l1.5 -0.3l1.5 1.1l1.5 1.5l1.5 -1.6l1.5 -1.2l1.5 2.5l1.5 -1.7l1.5 0l1.5 0.5l1.5 0.2l1.5 -0.7l1.5 0.2l1.5 -0.1l1.5 -0.8l1.5 1.7l1.5 0.4l1.5 -1.5l1.5 -0.8l1.5 0.8l1.5 0.6l1.5 1l1.5 -0.7l1.5 -2.6l1.5 2.2l1.5 0.4l1.5 0.2l1.5 -1.4l1.5 0.9l1.5 0.4l1.5 0.6l1.5 0l0.5 0.8l1 -3.4l0.5 -0.5l1 -6.8l1.5 -9.2l1.5 -9l1.5 -11.3l1.5 -10l1.5 -10.7l1 -6.9l0.5 -3.1l1.5 -18.7l1.5 -15.6l0.7 -8.6l0.8 12.6l0.5 8.8l1 0.2l1.5 2.7l1.5 0.9l1.5 2l1.5 1.9l1.5 -0.2" stroke="#7cc4af" stroke-width="1.5" fill="none" stroke-linejoin="round"/>
<path d="M34 265.4l1 -1.2l1 1.7l1 -1.2l1 3.3l1 -0.4l1 2.8l1 -3.4l1 -2.9l1 -2.2l1 -2.6l1 -1.8l1 2l1 3l1 1.1l1 -3.6l1 7.4l1 -5.5l1 -2.8l1 -6.1l1 1.1l1 -0.9l1 -1.5l1 -0.7l1 2.3l1 -1.4l1 -3.1l1 -2.9l1 1l1 1.6l1 0.8l1 -2.9l1 0.6l1 -0.6l1 0.2l1 -3.3l1 1.5l1 -0.9l1 -0.5l1 0.2l1 2.4l1 -1.4l1 0.6l1 -1.2l1 -0.6l1 -1.4l1 -1.5l1 -0.4l1 1.2l1 0.1l1 0.2l1 -5.2l1 2.8l1 -2.5l1 -2.4l1 -3.5l1 0.8l1 -2.2l1 -1l1 1.5l1 3.1l1 0.3l1 2.4l1 2.3l1 0.8l1 -4.7l1 -1.6l1 -6.7l1 -3.6l1 -3.5l1 -7l1 -8.6l1 -2.6l1 -5.4l1 -5l0.7 -1.3l0.3 6.5l1 -1.9l1 -7.7l1 1.4l1 -6.3l1 10.4l1 -3.1l1 -15.4l1 3.9l0.4 1.2l0.6 -2.6l1 -4.9l1 10.3l1 -2.2l1 -11.5l1 -2.1l1 2.7l1 8.9l1 -4.5l1 1.2l1 -0.6l1 -12.8l1 -3.8l1 -1.7l1 5.2l1 -10.7l1 8.3l0.8 -5.6l0.2 5.6l1 8.2l1 -13.3l1 5.4l1 -4.2l1 1.6l1 3l1 -2l1 4.2l0.4 8.3l0.6 -13.4l1 -0.1l1 5.9l1 -7.8l1 4.5l1 -17.1l1 7.2l1 -9.1l1 1.2l1 -1.4l1 -1.4l1 -1.2l1 4l1 0.6l1 4.7l1 7.3l1 -6.9l0.8 2.4l0.2 -3.8l1 13l1 -7.1l1 6.9l1 1.7l1 14.8l1 -8.6l1 4.7l1 9.6l1 1.7l1 -1.3l1 13.9l1 -6.1l1 -8.4l1 13l1 -6.7l1 4.9l1 1.1l1 -3.9l1 0.8l1 -0.2l1 11.5l1 17.1l1 -13.8l1 2.1l1 9.7l0.9 3.4l0.1 -6.2l1 -9.6l1 6.7l1 -26.3l1 -17.6l1 -29.7l1 2.9l1 17.9l0.3 -6.3l0.7 -1l1 2.6l1 -3.3l1 -2.4l1 -8.5l1 -8.8l1 1.6l1 6.4l1 2.9l1 2.5l1 -1.8l1 6.8l1 -2.2l1 3.9l1 -0.9l1 -1.1l1 -0.5l1 1.9l1 3.7l1 -2.8l1 4.9l1 -3.9l1 4.6l1 -0.6l1 -1.3l1 3.5l1 -0.6l1 0.6l1 -2l1 2.8l0.6 1.4l0.4 1l1 0.1l1 4.7l1 -2.5l1 1.5l1 -0.1l1 2.6l1 -0.3l1 0.7l1 -2.6l1 2.1l1 0.2l1 1.2l1 -0.9l1 1.3l0.5 -0.9l0.5 0.7l1 1.2l1 -0.3l1 0.3l1 1.2l1 1.1l1 0.6l1 -1l1 0.9l1 -0.4l1 0.3l1 3.6l1 -0.9l1 -0.2l1 -0.5l0.4 1.4l0.6 1.1l1 0.5l1 0.3l1 -0.9l1 4.1l1 -1.3l1 0.5l1 -0.2l1 0.4l0.3 -0.6l0.7 -65.1l0.2 -14.8l0.8 12.2l1 12.6l0.3 4.6l0.7 0.2l1 2l1 0.4l1 1.3l1 2l1 -1l1 4.3l1 -0.5l1 2.2l1 0.7l1 1.5l1 0.9l1 -2l1 1l1 1.9l1 -1l1 2.9l1 -0.3l1 -0.2l1 2l1 -1.3l1 0.6l1 1.1l1 1.4l1 -0.3l1 0.4l1 1.2l1 0.1l1 -0.7l1 2.9l1 0l1 0.9l1 -0.5l1 0.7l1 -1.6l1 0.6l1 0l1 3.3l1 -1.2l1 2.3l1 -0.4l1 0.2l1 1.3l1 0.4l1 1.3l1 1.7l1 1.2l1 -0.7l1 -0.6l1 2.8l1 -1.7l1 2l1 -1.6l1 1l1 -0.4l1 2.9l1 0.4l1 2.9l1 -0.6l1 -1.2l1 -1.6l1 1.9l1 0.7l1 0.4l1 0.1l1 -0.5l1 1l0.3 2.1l0.7 -38l0.8 -40.8l0.2 2.3l1 15.2l1 16.4l0.7 9.7l0.3 -0.6l1 0.8l1 1.7l1 -0.5l1 0.4l1 1.1l1 -1.4l1 3.7l1 -1.1l1 1.9l1 -0.2l1 1.5l1 -0.8l1 3.1l1 -1.1l1 -0.1l1 1l1 -1.5l1 1.2l1 -0.4l1 1.9l0.6 2.4l0.4 -1.5l1 -1l1 0.3l1 2.5l1 1l1 0.2l1 2.2l1 -0.2l1 2.3l1 -0.6l1 1.4l1 -3.5l1 3.2l1 0.5l1 0.9l1 0.1l1 0.5l1 0.7l1 0.6l1 1.1l1 1.5l1 -2.1l1 1.3l1 -0.6l1 1l1 1.1l1 0.1l1 0.8l1 0.9l1 0.4l1 0l1 0.8l1 -0.2l1 0.6l1 0.4l1 0.6l1 -1.5l1 2.3l1 -0.8l1 -0.8l1 1.5l1 1.1l1.5 0.2l1.5 0.2l1.5 0.3l1.5 1.5l1.5 0.5l1.5 0.8l1.5 -0.1l1.5 1.8l1.5 -2l1.5 1.9l1.5 -0.7l1.5 0.3l1.5 2.3l1.5 1.2l1.5 -0.4l1.5 1.2l1.5 0.1l1.5 1.7l1.5 -1l1.5 1.3l1.5 0.2l1.5 -1.1l1.5 2.8l1.5 -0.8l1 0l0.5 0.6l1.5 1.7l1.5 -0.6l1.5 1.2l1.5 -0.9l1.5 1.2l1.5 -1.2l1.5 1.4l1.5 1.6l1.5 -1.2l1.5 1.2l1.5 -1.1l1.5 3.4l1.5 -1l1.5 0.9l1.5 -0.5l1.5 -0.2l1.5 0.8l1.5 0.7l1.5 0l1.5 1.4l1.5 -0.1l1.5 0.8l1.5 -1.6l1.5 1.8l1.5 1.2l1.5 0.5l1.5 0l1.5 1l1.5 1.4l0.7 -0.8l0.8 0.1l1.5 0.4l1.5 0.8l1.5 0.8l1.5 -2l1.5 3.7l1.5 -0.7l1.5 0l1.5 -0.5l1.5 0.9l1.5 -0.1l1.5 2.1l1.5 -0.9l1.5 0l1.5 1.7l1.5 0.2l1.5 1.2l1.5 0.4l1.5 -0.5l1.5 -0.2l1.5 1.4l1.5 -0.3l1.5 1.3l1.5 0.7l1.5 -0.3l1.5 0.7l1.5 -0.3l1.5 1.9l1.5 -2.1l1.5 1.3l0.3 1.8l1.2 -1.4l1.5 2l1.5 -0.4l1.5 0.4l1.5 -0.9l1.5 1l1.5 0.6l1.5 -1.2l1.5 2.1l1.5 0l1.5 -1.2l1.5 2.1l1.5 -0.1l1.5 -0.7l1.5 2.5l1.5 -0.8l1.5 -0.4l1.5 0.5l1.5 1.5l1.5 -0.3l1.5 1.5l1.5 -1.1l1.5 1.6l1.5 0.5l1.5 0.6l1.5 -0.7l1.5 0.2l1.5 0l1.5 1.3l1.5 -1.5l1.5 4.2l1.5 -2.1l1.5 1.5l1.5 -0.9l1.5 1.7l1.5 -1l1.5 1.4l1.5 0.2l1.5 -0.1l1.5 -0.8l1.5 1.8l1.5 0.2l1.5 -0.2l1.5 0l1.5 0.9l1.5 -2.1l1.5 2.5l1.5 1.1l1.5 -1.3l1.5 1.8l1.5 -0.7l1.5 0.6l0.5 0.2l1 0.4l1.5 -0.2l1.5 0l1.5 0.2l1.5 -0.8l1.5 0.6l1.5 1l1.5 -1.2l1.5 0.9l1.5 -0.4l1.5 -0.5l1.5 0.9l1.5 -0.3l1.5 1l1.5 -0.2l0.3 -0.4l1.2 -0.6l1.5 1.7l1.5 -2.1l1.5 0.6l1.5 1.2l1.5 -0.1l1.5 0.2l1.5 -0.2l1.5 1l1.5 0.8l1.5 -2.1l1.5 1.7l1.5 -0.1l1.5 -1.8l1.5 -0.3l1.5 1.3l1.5 0.4l1.5 -0.2l1.5 -1.1l1.5 1.4l1.5 -0.5l1.5 -0.3l1.5 0.9l1.5 -2.5l1.5 1.7l1.5 -0.5l1.5 0.8l1.5 -0.7l1.5 1.5l1.5 -1.1l1.5 -0.7l1.5 -0.5l1.5 1.2l1.5 0.5l1.5 1.4l1.5 -0.7l1.5 -0.1l1.5 -0.7l1.5 1l1.5 -1l1.5 -0.6l1.5 1.4l1.5 -0.9l1.5 -0.6l1.5 2l1.5 0.2l1.5 -0.6l1.5 -1.6l1.5 0.5l1.5 -0.1l1.5 0.9l1.5 2.6l1.5 -2l1.5 -0.6l1.5 -0.5l1.5 -0.2l1.5 0.6l1.5 1l1.5 -0.2l1.5 0.6l1.5 -0.2l1.5 -1.3l1.5 1.3l1.5 -0.5l1.5 1.1l1.5 -1.3l1.5 -0.3l1.5 0.5l1.5 1.2l1.5 -0.3l1.5 0.7l1.5 -0.1l1.5 -0.6l1.5 1.7l1.5 -2l1.5 0l1.5 1l1.5 -1.7l1.5 1.1l1.5 0.8l1.5 -1.2l1.5 -0.5l1.5 0.5l1.5 2l1.5 0.8l1.5 -2.7l1.5 -0.4l1.5 0.2l1.5 2.2l1.5 -0.4l1.5 0l1.5 -1.2l1.5 0.8l1.5 -1.2l1.5 0.7l1.5 -0.8l1.5 -0.3l1.5 0.9l1.5 0.8l1.5 0.1l1.5 -0.5l1.5 1.4l1.5 -1.8l1.5 -0.3l1.5 1.9l1.5 -0.5l1.5 0l1.5 -0.2l1.5 0.8l1.5 -0.1l1.5 0.9l1.5 -2l1.5 -0.5l1.5 0.8l1.5 -0.4l1.5 0.2l1.5 -1.3l1.5 2.1l1.5 1.2l1.5 -0.8l1.5 0.9l1.5 -0.2l1.5 -0.1l1.5 0.2l1.5 0.5l1.5 -0.4l1.5 0.2l1.5 -1l1.5 -0.9l1.5 0.4l1.5 -1l1.5 1l1.5 -2.1l1.5 3.3l1.5 -0.2l1.5 0.5l1.5 -0.5l1.5 -0.8l1.5 0.9l1.5 -0.6l1.5 1.2l1.5 -0.3l1.5 0.1l1.5 -1.4l1.5 0.3l1.5 -0.4l1.5 2.8l1.5 -1l1.5 -0.7l1.5 -0.7l1.5 -1.5l1.5 1.5l1.5 0.3l1.5 0l1.5 1.7l1.5 -2.2l1.5 1.8l1.5 0.7l1.5 0.1l1.5 -1.8l1.5 -0.9l1.5 3.4l1.5 0l1.5 -1.3l1.5 -0.3l1.5 0.3l1.5 0.4l1.5 -0.5l1.5 -0.1l1.5 0.7l1.5 0.3l0.8 1.4l0.7 -1.6l1.5 -0.7l1.5 2.2l1.5 -0.3l1.5 -0.1l1.5 -2l1.5 0.1l1.5 -0.7l1.5 1.2l1.5 1.4l1.5 0l1.5 -0.5l1.5 0.1l1.5 0.2l1.5 -0.5l1.5 -0.7l1.5 0.3l1.5 1.8l1.5 -2l1.5 -0.2l1.5 1.3l1.5 -0.9l1.5 -0.1l1.5 0.3l1.5 -0.1l1.5 -1.1l1.5 2.2l1.5 -0.5l1.5 1.2l1.5 -0.7l1.5 -1.1l1.5 0.1l1.5 0l1.5 -1l1.5 2.5l1.5 -0.9l1.5 1.4l1.5 -0.5l1.5 -0.2l1.5 1.5l1.5 -2.3l1.5 1.8l1.5 -1.9l1.5 1.6l1.5 -0.4l1.5 -1l1.5 2.1l1.5 -0.8l1.5 -0.2l1.5 -0.7l1.5 0.2l1.5 -0.4l1.5 0l1.5 0.8l1.5 -0.1l1.5 0.3l1.5 0l1.5 -1l1.5 0.7l1.5 -0.8l1.5 0.9l1.5 0.3l1.5 0l1.5 -0.7l1.5 -0.3l1.5 2.2l1.5 -2.1l1.5 0.1l1.5 0.7l1.5 -0.7l1.5 0.6l1.5 0.6l1.5 -2.2l1.5 1.4l1.5 0.5l1.5 -1.5l1.5 1.7l1.5 0.6l1.5 -1.1l1.5 0.3l1.5 -0.5l1.5 1l1.5 -1.1l1.5 0.5l1.5 -0.3l1.5 0.1l1.5 1.7l1.5 -0.7l1.5 0.5l1.5 -2.2l1.5 0.2l1.5 0l1.5 2.3l1.5 -0.6l1.5 0.9l1.5 -2l1.5 0.6l1.5 -0.5l1.5 -0.7l1.5 0.4l1.5 -0.1l1.5 0.8l1.5 -1.4l1.5 1l1.5 0.1l1.5 2.2l1.5 -0.6l1.5 -1.4l1.5 1.3l1.5 -0.7l1.5 -0.3l1.5 0.3l1.5 2.9l1.5 -2.6l1.5 -0.3l1.5 0.8l1.5 -0.7l1.5 -1l1.5 2.6l1.5 0.1l1 -1.1l0.5 -2.4l1.5 -2.5l1.5 -20.9l1.5 -21.9l0.5 -4.1l1 -25.4l1.5 -35.6l0.2 -4.4l1.3 22.8l0.1 0l1.4 4.3l1.5 3.5l1.2 1.3l0.3 0.4l1.5 0.7l1.5 -0.1l1.5 2.7l1.5 1l1.5 -0.4l0.4 0.2l1.1 -33.2l0.2 -6.6l1.3 4.1l1.5 7.6l1.5 1.1l1.5 1.8l1.5 2.1l1.5 -0.4l1.5 0.7l1.5 2.4l1.5 1.8l1.5 1.9l1.5 0.6l1.5 0.3l1.5 0.8l1.5 -0.5l1.5 2.7l1.5 0.9l1.5 0.4l1.5 1l1.5 1.7l1.5 1.2l1.5 0.7l1.5 0.7l1.5 -1.2l1.5 1.1l1.5 -0.3l1.5 2.6l1.5 2l1.5 -2.1l1.5 1.1l1.5 0.9l1.5 -0.2l1.5 2.4l1.5 -0.7l1.5 2.1l1 0.4l0.5 -1.2l1.5 -0.7l1.5 2.2l1.5 -0.7l1.5 0.1l1.5 0.9l1.5 1.5l1.5 -1.2l1.5 0.8l1.5 1.2l1.5 -0.6l1.5 1.1l1.5 0.6l1.5 -1.1l1.5 0l1.5 0.5l1.5 2.4l1.5 -0.1l1.5 0.3l1.5 0.2l1.5 1.8l1.5 -0.6l1.5 2.7l1.5 -1.8l0.5 -1.5l1 2.2l1.5 -0.3l1.5 0.6l1.5 0.8l1.5 1.9l1.5 -0.5l1.5 2l1.5 -1.4l1.5 1.7l1.5 -1.5l1.5 2.4l1.5 -0.9l1.5 1.1l1.5 1.3l1.5 -0.5l1.5 1.6l1.5 0.2l1.5 1.7l1.5 0.1l1.5 0l1.5 0l1.5 -0.1l1 2.1l0.5 -1.1l1.5 -0.6l1.5 0.7l1.5 -0.6l1.5 1l1.5 0.5l1.5 0.7l1.5 0.7l1.5 0.5l1.5 -1.6l1.5 1.5l1.5 1.4l1.5 0.1l1.5 0l1.5 -0.3l1.5 1.4l1.5 -0.1l1.5 0.4l1.5 0.7l1.5 0.4l1.5 0.7l0.5 0.7l1 -0.5l1.5 -0.1l1.5 0.8l1.5 0.4l1.5 0.9l1.5 0.5l1.5 1.1l1.5 0.1l1.5 -1.3l1.5 1.3l1.5 0.4l1.5 1.6l1.5 2.1l1.5 -1l1.5 -0.4l1.5 2.1l1.5 0.1l1.5 -0.6l1.5 0.5l1.5 2.2l1.5 -0.2l1.5 -2l1.5 1.4l1.5 1.3l1.5 -1.1l1.5 1.3l1.5 -0.3l1.5 0l1.5 1.5l1.5 0.6l1.5 1.3l1.5 -1.1l1.5 2.1l1.4 0l0.1 -0.9l1.5 2.6l1.5 -0.9l1.5 1l1.5 1.3l1.5 -0.5l1.5 0.6l1.5 -0.5l1.5 -0.4l1.5 0.7l1.5 -0.8l1.5 2.1l1.5 0.9l1.5 0.2l1.5 -0.5l1.5 0l1.5 0.7l1.5 0.7l1.5 -0.5l1.5 2.9l1.5 -1.7l1.5 1l1.5 -0.3l1.5 0.7l1.5 -1.6l1.5 1l1.5 1.3l1.5 0.4l1.5 0.9l1.5 -0.3l1.5 1.5l1.3 -0.2l0.2 -0.1l1.5 0.4l1.5 1.1l1.5 -0.6l1.5 1.6l1.5 -0.8l1.5 0.3l1.5 0.3l1.5 0.6l1.5 0.5l1.5 -0.4l1.5 1.3l1.5 1.6l1.5 -1.5l1.5 -0.1l1.5 -0.6l1.5 0.2l1.5 0.1l1.5 1.1l1.5 -0.5l1.5 2.1l1.5 -1.4l1.5 -0.1l1.5 0.6l1.5 1.2l1.5 0.5l1.5 1.4l1.5 -1.1l1.5 1l1.5 0.6l1.5 -0.8l1.5 -0.7l1.5 1.9l1.5 0.8l1.5 -0.2l1.5 -0.1l1.5 -1.2l1.5 3l1.5 -1.1l1.5 -0.8l1.5 0.6l1.5 0.4l1.5 -0.1l1.5 -0.6l1.5 2.9l1.5 -0.8l1.5 0l1.5 -0.3l1.5 -0.8l1.5 -0.5l1.5 -0.1l1.5 2l1.5 -0.6l1.5 1.4l1 -3l0.5 -8.3l1.5 -33.8l1.5 -43.9l1 -27.5l0.5 2.5l1.5 11.6l1.5 11.9l1.5 1.3l1.5 1.7l1.5 1.5l1.5 2l1.5 -0.1l0.6 -0.4l0.9 1.3l1.5 -0.5l1.5 4.4l1.5 -1.2l1.5 1.4l1.5 1.2l1.5 0.1l1.5 1.1l1.5 1.5l1.5 0.7l1.5 1.4l1.5 0l1.5 0.5l0.5 -0.4l1 -55l0.5 -25.9l1 12.3l1.5 17.8l0.8 11.1l0.7 -2.3l1.5 4.1l1.5 0.1l1.5 2.1l1.5 1.6l1.3 0.8l0.2 0.5l1.5 1.5l1.5 2.6l1.5 -0.9l1.5 1.6l1.5 0.9l1.5 -0.6l1.5 1.9l1.5 0.1l1.5 1.9l1.5 -0.3l1 1.9l0.5 -1.2l1.5 1.1l1.5 1.7l1.5 0.8l1.5 0.6l1.5 1.6l1.5 0.1l1.5 0l1.5 1.6l1.5 -0.6l1.5 2l1.5 0.4l1.5 0.3l1.5 0.2l1.5 2.4l1.5 -1.6l1.5 2.4l1.5 -0.1l1.5 1.8l1.5 0.8l1.5 0.3l1.5 0.8l1.5 1l1.5 1.7l1.5 0.1l1.5 -1.2l1.5 0.3l1.5 1.4l1.5 -0.6l1.5 0.1l1.5 2.5l1.5 -0.6l1.5 2l1.5 -0.4l1.5 -0.7l1.5 2l1.5 0.8l1.5 0.3l1.5 -0.7l1.5 0.3l1.5 3.1l1.5 -3.2l1.5 2l1.5 1.9l1.5 1.3l1.5 -0.4l1.5 0l1.5 0.7l1.5 1.1l1.1 -1l0.4 1.5l1.5 -0.2l1.5 0.5l1.5 0.8l1.5 0.4l1.5 -0.5l1.5 2.4l1.5 -1.1l1.5 0.7l1.5 -1.2l1.5 1l1.5 2.2l1.5 -0.1l1.5 0.7l1.5 0.5l1.5 1.5l1.5 -0.3l1.5 -0.3l1.5 0.3l1.5 1.1l1.5 1.3l1.5 1.3l1.5 -0.3l1.5 -0.5l1.5 -0.1l1.5 2.2l1.5 0.3l1.5 0.1l1.5 1.1l1.5 0.6l1.5 0.6l1.5 1.4l1.5 -1.6l1.5 1l1.5 0.4l1.5 0l1.5 2.7l1.5 -0.9l1.5 0.4l1.5 0.7l1.5 -0.5l1.5 1.4l1.5 -0.3l1.5 1.3l1.5 0.4l1.5 1.2l1.5 -1.6l1.5 1l1.5 0.8l1.5 0.3l1.5 1.4l1.5 0.9l1.5 -0.6l1.5 1.5l1.5 0.3l1.5 -0.8l1.5 1.4l1.5 1.2l1.5 -1l1.5 -0.9l1.5 2.7l1.5 0.2l1.5 0.6l1.5 0.3l1.5 0l1.5 0.6l1.5 -0.1l1.5 2.7l1.5 0.3l1.5 -0.9l1.5 -0.1l1.5 1.5l1.5 1.4l0.8 -0.9l0.7 -0.5l1.5 1.8l1.5 -0.2l1.5 -0.4l1.5 0.9l1.5 0.9l1.5 -0.5l1.5 1.6l1.5 1l1.5 0.1l1.5 0.4l1.5 -0.1l1.5 -0.2l1.5 1l1.5 1l1.5 -0.5l1.5 0.7l1.5 -0.7l1.5 0.8l1.5 -0.1l1.5 -0.2l1.5 1.3l1.5 1.7l1.5 -2.9l1.5 1.6l1.5 1.2l1.5 -0.1l1.5 1.3l1.5 0.8l1.5 -1.8l1.5 1.5l1.5 0.7l1.5 0.4l1.5 1.4l1.5 -0.9l1.5 1.3l1.4 -1l0.1 -0.2l1.5 0.6l1.5 0.5l1.5 1.4l1.5 0.2l1.5 -0.3l1.5 -0.4l1.5 1.1l1.5 -0.3l1.5 0.2l1.5 -1l1.5 2.8l1.5 -0.4l1.5 2.2l1.5 0.2l1.5 -1.7l1.5 1.8l1.5 -2l1.5 2.6l1.5 -2.1l1.5 -1l1.5 1.8l1.5 1l1.5 1.1l1.5 -0.5l1.5 0.8l1.5 -1.2l1.5 -1.2l1.5 1.8l1.5 -0.4l1.5 1.8l1.5 -1.9l1.5 1l1.5 0l1.5 1.1l1.5 0.8l1.5 -0.6l0.5 -0.7l1 0.9l1.5 0.7l1.5 1.5l1.5 -0.7l1.5 1.1l1.5 -3.2l1.5 3.7l1.5 0.9l1.5 -1.6l1.5 3.1l1.5 -2.8l1.5 2.3l1.5 -1.5l1.5 0.9l1.5 1.1l1.5 0l1.5 0.1l1.5 -0.2l0.8 -1.3l0.7 0.1l1.5 0.7l1.5 0l1.5 0.5l1.5 -1l1.5 1.2l1.5 0.5l1.5 -0.9l1.5 1.4l1.5 -0.8l1.5 0.7l1.5 -1.3l1.5 1l1.5 -1.4l1.5 -0.5l1.5 0.1l1.5 1l1.5 0.7l1.5 1.8l1.5 -1.2l1.5 -0.3l1.5 1l1.5 -0.7l1.5 -0.1l1.5 0l1.5 0.8l1.5 0.7l1.5 -2.3l1.5 1.4l1.5 -0.5l1.5 0.3l1.5 1.8l1.5 -2.1l1.5 -1.8l1.5 2.7l1.5 -1.1l1.5 -0.3l1.5 2.4l1.5 -0.1l1.5 -0.8l1.5 -0.7l1.5 -0.6l1.5 1.9l1.5 -1.2l1.5 0.6l1.5 -0.4l1.5 0.2l1.5 -1.7l1.5 0.5l1.5 -0.1l1.5 -0.8l1.5 0.8l1.5 0.4l1.5 0.3l1.5 0.1l1.5 -0.3l1.5 1.2l1.5 -2.3l1.5 1.5l1.5 0.5l0.5 -0.4l1 2l1.5 -1.3l1.5 0.9l1.5 -0.5l1.5 -0.7l1.5 1.1l1.5 -2l1.5 0.3l1.5 0.7l1.5 -1.6l1.5 1.5l1.5 0.2l1.5 -1.2l1.5 0.6l1.5 -0.2l1.5 3l1.5 -0.9l1.5 -0.4l1.5 -0.3l1.5 1l1.5 -0.9l1.5 1l1.5 -0.2l1.5 1l1.5 -0.8l1.5 -1.4l1.5 0.9l1.5 0.3l1.5 -0.5l1.5 1.6l1.5 -1.1l1.5 -0.2l1.5 1.4l1.5 0.1l1.5 -1l1.5 0.3l1.5 -0.4l1.5 -0.2l1.5 -0.1l1.5 -0.8l1.5 0.7l1.5 -0.1l1.5 1.3l1.5 -0.9l1.5 0l1.5 -0.9l1.5 2.9l1.5 -1.8l1.5 -0.1l1.5 0l1.5 0.1l1.5 -0.2l1.5 1.3l1.5 -1.7l1.5 0.1l1.5 -0.2l1.5 0.8l1.5 -1.5l1.5 2.3l1.5 -0.9l1.5 -0.6l1.5 2.2l1.5 -2.3l1.5 1.5l1.5 -0.6l1.5 -0.4l1.5 -0.7l1.5 0.8l1.5 1.3l1.5 -0.5l1.5 -0.2l1.5 1.4l1.5 -0.5l1.5 -0.1l1.5 -0.9l1.5 -0.5l1.5 0.6l1.5 0.8l1.5 -0.4l1.5 0.7l1.5 -0.3l1.5 -0.2l1.5 0.1l1.5 0.1l1.5 -2.2l1.5 1.7l1.5 -0.2l1.5 -0.3l1.5 1.1l1.5 0.3l1.5 0.2l0.4 -0.3l1.1 -0.1l1.5 -0.1l1.5 0.6l1.5 -1.2l1.5 0.5l1.5 0.4l1.5 -0.2l1.5 -0.8l1.5 1.1l1.5 -0.2l1.5 -0.1l1.5 1l1.5 0.4l1.5 -0.8l1.5 -1.2l1.5 0.6l1.5 -0.2l1.5 -0.9l1.5 0.5l1.5 0.7l1.5 -0.5l1.5 0.9l1.5 -1.2l1.5 1.6l1.5 -1l1.5 0.8l1.5 -0.1l1.5 -0.4l1.5 1.2l1.5 -2.2l1.5 1.6l1.5 0.4l1.5 -0.7l1.5 0.2l1.5 -0.8l1.5 0.9l1.5 0.3l1.5 -0.6l1.5 0.6l1.5 -0.2l1.5 -0.5l1.5 0.8l1.5 -0.6l1.5 1.2l1.5 -1.5l1.5 1.6l1.5 -1l1.5 0.1l1.5 -0.5l1.5 1l1.5 -1.1l1.5 -0.4l1.5 1.6l1.5 -1.9l1.5 2.8l1.5 -1.2l1.5 2l1.5 -0.9l1.5 1.1l1.5 -2.6l1.5 0.7l1.5 0.4l1.5 -0.7l1.5 0.4l1.5 -0.2l1.5 0.5l1.5 0.9l1.5 -2.7l1.5 2.5l1.5 -1.3l1.5 2.3l1.5 -2.4l1.5 0.6l1.5 1.1l1.5 -0.7l1.5 0.5l1.5 -0.4l1.5 -1.2l1.5 -0.6l1.5 2.3l1.5 -1l1.5 0.1l1.5 0.1l1.5 0.2l1.5 -0.2l1.5 0.8l1.5 0.2l1.5 -1.2l1.5 -0.3l1.5 1.7l1.5 0.4l1.5 -1.1l1.5 0.4l1.5 -0.2l1.5 0.8l1.5 -0.2l1.5 -0.3l1.5 0l1.5 0.9l1.5 -0.2l1.5 -0.6l1.5 0.6l1.5 -2.8l1.5 2.2l1.5 0.6l1.5 -1.7l1.5 1.1l1.5 0.5l1.5 0.7l0.5 -0.7l1 -2.9l0.5 1l1 -7.4l1.5 -8.9l1.5 -11.4l1.5 -10l1.5 -10.1l1.5 -8.3l1 -6.3l0.5 -6.5l1.5 -17.2l1.5 -17.2l0.7 -7.7l0.8 12.5l0.5 10.2l1 0.7l1.5 1.7l1.5 0.4l1.5 2l1.5 1.3l1.5 2.5" stroke="#c99000" stroke-width="1.5" fill="none" stroke-linejoin="round"/>
<path d="M34 262.1l1 -0.5l1 3l1 -1.2l1 4.3l1 0.2l1 -0.8l1 1.7l1 -6l1 -2.5l1 -4.6l1 -0.9l1 2.2l1 0.8l1 2.2l1 2.6l1 -0.1l1 -3.3l1 -4.6l1 -2.1l1 -2l1 -1.9l1 -1.2l1 1.1l1 -0.9l1 -0.7l1 -0.4l1 -0.8l1 0.9l1 -1.6l1 1.6l1 0.4l1 1.8l1 2.4l1 -2.6l1 -1.4l1 -1.9l1 -0.8l1 -4.3l1 1.9l1 -1.3l1 -0.5l1 0.4l1 4.1l1 -2.6l1 -0.8l1 -0.5l1 0l1 -1.6l1 -1.9l1 -0.7l1 -2.9l1 2.9l1 -5.2l1 1.5l1 -2.1l1 -1.2l1 -0.7l1 -1.6l1 -0.5l1 2.5l1 0.4l1 0.4l1 3.4l1 0.7l1 -4.5l1 -4l1 -2.1l1 -5.7l1 -1.7l1 -9l1 -6.2l1 -8.3l1 -9.1l1 7.8l0.7 -7.8l0.3 6.7l1 -7.8l1 0.6l1 -17.6l1 13.5l1 -14.8l1 -11.3l1 14l1 4l0.4 -3.9l0.6 -3.1l1 -2.6l1 -1.6l1 13.6l1 -11l1 -2.7l1 -4.1l1 8.8l1 -9.5l1 5.5l1 -21.3l1 0.3l1 0.9l1 -7l1 17.8l1 -22.8l1 7.7l0.8 -4.6l0.2 -1.5l1 -8.4l1 0.8l1 22.1l1 -17.8l1 0l1 -7.3l1 32.2l1 -13.2l0.4 9.5l0.6 -11.3l1 5l1 -0.7l1 -14l1 -13.1l1 21.1l1 5.2l1 -19.9l1 4.9l1 0.8l1 -2.7l1 5.4l1 -3.8l1 4.5l1 -10.1l1 -6l1 18.4l0.8 -11.9l0.2 1.5l1 -6.3l1 12.3l1 3.1l1 9.3l1 4.7l1 6.6l1 2.8l1 -9.1l1 5.9l1 12.5l1 -6.8l1 9.5l1 4.9l1 -7.6l1 26.1l1 -10.2l1 2.7l1 -1.1l1 14.8l1 -0.2l1 -8.7l1 4.5l1 2.5l1 -9l1 17.3l0.9 19.3l0.1 -13.8l1 -14.3l1 1.1l1 -28.8l1 -15.5l1 -15.5l1 4l1 7.7l0.3 8.4l0.7 -12.4l1 1.6l1 4.4l1 -6.3l1 -4.3l1 -13.1l1 1.4l1 6l1 1.7l1 4.8l1 2l1 2.3l1 -1.5l1 7.9l1 -0.1l1 -3.2l1 2.7l1 1.9l1 -0.9l1 1.1l1 1.2l1 -2.8l1 5.1l1 0.7l1 -1.2l1 2.5l1 0.1l1 -0.3l1 0.4l1 -0.3l0.6 3.4l0.4 1.2l1 1.5l1 -0.3l1 -1.8l1 0.6l1 2l1 -0.3l1 1l1 -0.2l1 0.5l1 -2l1 1.9l1 1.5l1 -1.2l1 2.1l0.5 -0.8l0.5 0.3l1 -0.2l1 1l1 2.7l1 -1.8l1 2.2l1 -0.7l1 4l1 -1l1 -1.2l1 0.1l1 1.1l1 0.9l1 1.7l1 0l0.4 -2.2l0.6 1.5l1 1.3l1 -1.1l1 0.8l1 1.9l1 -1.4l1 2.2l1 0.7l1 0.6l0.3 0.5l0.7 -65l0.2 -15.8l0.8 10.5l1 17.2l0.3 4.5l0.7 -1.3l1 3.8l1 1.1l1 -0.6l1 2l1 1.8l1 -1.3l1 0.8l1 -1.6l1 0.9l1 0.1l1 1l1 0.6l1 1.5l1 0.6l1 0.1l1 -0.4l1 2.4l1 1.2l1 0.2l1 2.1l1 -0.8l1 2l1 -0.2l1 1.3l1 0.6l1 -2.2l1 -0.2l1 2.9l1 0.2l1 0.9l1 0.2l1 0.5l1 2.6l1 0.2l1 -0.6l1 0.8l1 0.5l1 -1.2l1 1l1 1.3l1 0.2l1 -0.7l1 2.1l1 2.1l1 -0.7l1 -1.1l1 1.2l1 0.2l1 0.3l1 0.4l1 0.7l1 0.8l1 -0.2l1 2.7l1 0.3l1 2.3l1 -0.3l1 1l1 0l1 -0.1l1 -0.3l1 1.9l1 0l1 -0.2l1 1.1l1 0.1l0.3 -0.8l0.7 -34.2l0.8 -42.8l0.2 3.4l1 15.3l1 13.2l0.7 10.7l0.3 0.9l1 0.1l1 0.7l1 0.3l1 1.9l1 0.3l1 1.5l1 0.6l1 -0.4l1 1.2l1 -0.8l1 2.4l1 -1l1 1.1l1 0.5l1 0.7l1 1.8l1 0l1 -0.3l1 1.9l1 -0.1l0.6 0.7l0.4 -0.1l1 -0.1l1 -0.6l1 1.8l1 0l1 2.2l1 -0.7l1 1.9l1 1.3l1 -0.4l1 1.7l1 -2.1l1 0.9l1 0.2l1 0.4l1 0.7l1 2.4l1 -0.7l1 1l1 1.4l1 -0.2l1 2.3l1 0.2l1 0.1l1 1.2l1 -0.4l1 0.2l1 0.9l1 0.2l1 -1.6l1 2.2l1 0.1l1 -2.3l1 3.7l1 -1.2l1 1.3l1 -1.7l1 1.4l1 -0.4l1 0.3l1 1.2l1 -0.9l1.5 1.6l1.5 1.1l1.5 -0.5l1.5 0.5l1.5 1.9l1.5 0.9l1.5 0.4l1.5 -0.7l1.5 0.6l1.5 1.8l1.5 0.3l1.5 0.3l1.5 0.7l1.5 0.4l1.5 1.1l1.5 0.5l1.5 0l1.5 0.6l1.5 -0.9l1.5 1.5l1.5 1.8l1.5 -0.6l1.5 -0.7l1.5 1.2l1 0.8l0.5 1.2l1.5 1l1.5 -1.4l1.5 0.3l1.5 0.6l1.5 -0.6l1.5 2.1l1.5 -1.8l1.5 1.8l1.5 -0.8l1.5 0.4l1.5 1.8l1.5 1.8l1.5 -1.5l1.5 1.6l1.5 -0.3l1.5 1.9l1.5 -1.6l1.5 0.4l1.5 0.9l1.5 -0.4l1.5 2l1.5 -1.4l1.5 1.6l1.5 0l1.5 1.7l1.5 -1l1.5 0.5l1.5 1.7l1.5 -0.5l0.7 0.7l0.8 0.4l1.5 -0.1l1.5 0.4l1.5 -1l1.5 0.4l1.5 1.6l1.5 1l1.5 1.1l1.5 -1l1.5 0.8l1.5 2.3l1.5 -2.1l1.5 1.2l1.5 0.5l1.5 0l1.5 2.2l1.5 -1.9l1.5 1.6l1.5 -0.6l1.5 1.4l1.5 2.2l1.5 -2.4l1.5 0.6l1.5 1.8l1.5 0.7l1.5 -0.3l1.5 1.3l1.5 0l1.5 0.1l1.5 0.7l0.3 1l1.2 -1.7l1.5 1.8l1.5 -0.1l1.5 -0.1l1.5 0l1.5 1.1l1.5 0.8l1.5 -1l1.5 1.7l1.5 -0.2l1.5 0.8l1.5 -0.2l1.5 -0.2l1.5 0.5l1.5 0.7l1.5 -1.3l1.5 1.5l1.5 -1.6l1.5 2.7l1.5 -0.1l1.5 0.9l1.5 1.3l1.5 0.3l1.5 0.7l1.5 -0.1l1.5 -0.6l1.5 -0.1l1.5 3l1.5 -2.2l1.5 0.5l1.5 1.1l1.5 -0.6l1.5 1.2l1.5 0.4l1.5 -0.6l1.5 -0.5l1.5 0.9l1.5 0.2l1.5 -0.5l1.5 1.4l1.5 0.5l1.5 -0.2l1.5 1.3l1.5 -1.2l1.5 2l1.5 -1l1.5 1.5l1.5 -0.5l1.5 0.2l1.5 -1l1.5 2.2l1.5 -1l0.5 2.8l1 -1.2l1.5 0.1l1.5 0.1l1.5 0.7l1.5 0l1.5 0.1l1.5 0.2l1.5 -0.9l1.5 1.2l1.5 -2.6l1.5 0.1l1.5 2.1l1.5 -0.2l1.5 -0.9l1.5 0.4l0.3 0.5l1.2 1.6l1.5 -0.3l1.5 -1.7l1.5 0.2l1.5 1.1l1.5 -1.1l1.5 0.4l1.5 0l1.5 0.5l1.5 0.4l1.5 -1l1.5 0.3l1.5 0.8l1.5 1.2l1.5 -0.8l1.5 -0.8l1.5 0.8l1.5 -1l1.5 -1.3l1.5 1.8l1.5 1l1.5 -1.9l1.5 1.6l1.5 -1.5l1.5 0.8l1.5 0l1.5 -0.2l1.5 0.3l1.5 0.7l1.5 -0.8l1.5 0.2l1.5 -0.1l1.5 0.4l1.5 -0.8l1.5 1l1.5 -0.2l1.5 -0.5l1.5 -0.3l1.5 0.9l1.5 1.2l1.5 -0.2l1.5 -0.3l1.5 1.7l1.5 -0.4l1.5 -0.9l1.5 0.7l1.5 -1.4l1.5 -0.2l1.5 0.3l1.5 -1.7l1.5 1.3l1.5 -0.3l1.5 1.6l1.5 -0.5l1.5 0.9l1.5 -1.6l1.5 1.6l1.5 -1.1l1.5 0.3l1.5 -0.1l1.5 -1.3l1.5 1.6l1.5 -1.1l1.5 1.2l1.5 -0.3l1.5 -0.5l1.5 0.8l1.5 0.5l1.5 -0.5l1.5 1.6l1.5 -0.4l1.5 -0.9l1.5 -0.4l1.5 1.4l1.5 -1.1l1.5 1.1l1.5 -1.8l1.5 -0.2l1.5 2.3l1.5 0.1l1.5 -0.9l1.5 0l1.5 0.5l1.5 -0.1l1.5 -0.5l1.5 0l1.5 0.1l1.5 0.7l1.5 -0.1l1.5 -2.5l1.5 2.4l1.5 -0.5l1.5 1.1l1.5 -0.3l1.5 -0.9l1.5 0.4l1.5 -1.7l1.5 1.8l1.5 -0.7l1.5 1.1l1.5 -0.5l1.5 1.7l1.5 0.2l1.5 -1.2l1.5 -0.4l1.5 1.8l1.5 -2.1l1.5 0.7l1.5 -0.2l1.5 0.3l1.5 -0.3l1.5 -0.4l1.5 1.7l1.5 -0.1l1.5 0.3l1.5 0.7l1.5 -0.1l1.5 -1.6l1.5 -0.8l1.5 0.3l1.5 0.3l1.5 -0.6l1.5 0.5l1.5 0.4l1.5 1.1l1.5 0.5l1.5 -2.2l1.5 0.6l1.5 0.6l1.5 -0.4l1.5 0.6l1.5 -1.2l1.5 1.2l1.5 0.5l1.5 0.2l1.5 -0.7l1.5 0.6l1.5 0.2l1.5 -0.9l1.5 -0.4l1.5 0.4l1.5 0.8l1.5 0l1.5 -1.6l1.5 0.1l1.5 -0.1l1.5 2.6l1.5 -0.9l1.5 0.1l1.5 -0.8l1.5 -0.6l1.5 3.2l1.5 -1.2l1.5 -2.5l1.5 3.1l1.5 -1l1.5 -0.3l1.5 0.2l1.5 0.5l1.5 -2.2l1.5 1.7l1.5 -1.3l1.5 0.6l1.5 0.6l1.5 0.2l1.5 0.2l1.5 1.1l1.5 -0.8l1.5 0.2l1.5 0.1l1.5 -1.6l0.8 0.6l0.7 -0.5l1.5 1.4l1.5 0l1.5 0.3l1.5 0.2l1.5 -0.5l1.5 -0.8l1.5 0.4l1.5 1.6l1.5 -0.9l1.5 0.5l1.5 -1.1l1.5 0.5l1.5 1.8l1.5 -0.5l1.5 -1.8l1.5 0.6l1.5 0.6l1.5 0.6l1.5 -0.1l1.5 -0.1l1.5 0.3l1.5 -0.4l1.5 0.1l1.5 -1.4l1.5 -0.3l1.5 0.4l1.5 1.3l1.5 0.3l1.5 -1.8l1.5 0.8l1.5 0.4l1.5 0.3l1.5 -0.4l1.5 0.8l1.5 -1.2l1.5 -0.3l1.5 0.1l1.5 1.2l1.5 -1l1.5 0.8l1.5 -0.5l1.5 -0.3l1.5 -0.5l1.5 1.3l1.5 -0.4l1.5 1.1l1.5 -0.9l1.5 -0.6l1.5 1.2l1.5 -1l1.5 1.8l1.5 -1.9l1.5 0.5l1.5 -0.6l1.5 1.9l1.5 -0.9l1.5 -0.3l1.5 0.2l1.5 -1.5l1.5 2.7l1.5 -0.9l1.5 1l1.5 -1.5l1.5 1.8l1.5 -1.6l1.5 0.5l1.5 1.5l1.5 -1.8l1.5 0.5l1.5 -0.1l1.5 0.4l1.5 -0.3l1.5 -0.6l1.5 0.1l1.5 -1l1.5 1.8l1.5 -0.2l1.5 -1l1.5 0.9l1.5 -0.1l1.5 0.8l1.5 -2.5l1.5 2.2l1.5 -2.3l1.5 1.2l1.5 0l1.5 0.6l1.5 1l1.5 0.1l1.5 -0.7l1.5 0l1.5 -0.5l1.5 1.8l1.5 -1.1l1.5 2.6l1.5 -3.5l1.5 0.6l1.5 0.9l1.5 0.8l1.5 -1.7l1.5 0.5l1.5 -0.9l1.5 0.7l1.5 -1.8l1.5 2.2l1.5 -0.8l1.5 0.8l1.5 -0.3l1.5 -0.5l1.5 -0.3l1.5 0.6l1.5 0.9l1.5 0.9l1.5 0.5l1.5 0.1l1.5 0.6l1.5 -1.2l1.5 0.3l1.5 -1.1l1 -0.3l0.5 -2.6l1.5 -1l1.5 -21.8l1.5 -21.1l0.5 -7.7l1 -21.4l1.5 -36l0.2 -5l1.3 22.7l0.1 2.3l1.4 2.7l1.5 2.8l1.2 1.7l0.3 0.3l1.5 1.1l1.5 0.8l1.5 2.2l1.5 -0.1l1.5 0.7l0.4 2l1.1 -35.6l0.2 -5.7l1.3 5.4l1.5 5.5l1.5 1.2l1.5 2l1.5 1.3l1.5 -0.6l1.5 3.7l1.5 -1.1l1.5 1.5l1.5 2.6l1.5 -0.3l1.5 0.8l1.5 2.4l1.5 0.5l1.5 0.6l1.5 1.6l1.5 0.5l1.5 -0.4l1.5 0.9l1.5 1.5l1.5 0.4l1.5 1.5l1.5 1.2l1.5 0.2l1.5 -0.9l1.5 2.9l1.5 -0.9l1.5 0.7l1.5 -0.8l1.5 1.9l1.5 -0.2l1.5 2.9l1.5 -1l1.5 -0.1l1 1.5l0.5 -0.5l1.5 1.2l1.5 -0.5l1.5 -0.2l1.5 1.5l1.5 0.2l1.5 0.1l1.5 1.7l1.5 0.7l1.5 -0.2l1.5 0.5l1.5 0.8l1.5 0.9l1.5 -0.1l1.5 -0.6l1.5 1.9l1.5 1.8l1.5 -0.9l1.5 0l1.5 -0.5l1.5 -0.6l1.5 1.9l1.5 0.5l1.5 0.4l0.5 0l1 1.3l1.5 -0.5l1.5 -0.8l1.5 1.9l1.5 0.8l1.5 1.1l1.5 0.3l1.5 0.7l1.5 0.3l1.5 0.4l1.5 -0.5l1.5 1.1l1.5 1.6l1.5 1.1l1.5 -2.8l1.5 2.4l1.5 0.3l1.5 1.4l1.5 -1.6l1.5 1.6l1.5 1.2l1.5 -0.2l1 -0.3l0.5 2.9l1.5 -1.3l1.5 0.6l1.5 0.8l1.5 1.3l1.5 -1.7l1.5 0.7l1.5 0.2l1.5 1.4l1.5 0.3l1.5 0.9l1.5 -1.3l1.5 -0.3l1.5 0.8l1.5 -0.7l1.5 2.1l1.5 -1.6l1.5 2.3l1.5 -0.8l1.5 1.4l1.5 1.1l0.5 -1.2l1 0.1l1.5 0.5l1.5 -0.2l1.5 1.4l1.5 0.2l1.5 0.9l1.5 -0.1l1.5 1.6l1.5 0.3l1.5 -0.4l1.5 1.1l1.5 -0.6l1.5 0.3l1.5 0.8l1.5 1.5l1.5 -0.1l1.5 0.8l1.5 0.7l1.5 0l1.5 0.8l1.5 0.3l1.5 2.8l1.5 -1.7l1.5 1.4l1.5 -0.3l1.5 1.9l1.5 -1.9l1.5 1.1l1.5 0.7l1.5 -0.4l1.5 2.3l1.5 -0.8l1.5 0.8l1.4 -1l0.1 1.6l1.5 -0.7l1.5 1.7l1.5 0.3l1.5 0l1.5 0.1l1.5 0.2l1.5 0.7l1.5 2.2l1.5 -1.3l1.5 0.6l1.5 0.9l1.5 -1.2l1.5 1.1l1.5 1.6l1.5 -0.3l1.5 0.6l1.5 0.5l1.5 -0.3l1.5 -1.5l1.5 2.6l1.5 0.1l1.5 -1.9l1.5 2.1l1.5 1.6l1.5 -1.6l1.5 1.9l1.5 0.6l1.5 -0.9l1.5 0.1l1.5 0l1.3 1.8l0.2 -0.2l1.5 0.7l1.5 0l1.5 0.4l1.5 -0.3l1.5 1.5l1.5 -0.7l1.5 1.4l1.5 -0.1l1.5 -1l1.5 -0.1l1.5 2.1l1.5 -0.2l1.5 -0.2l1.5 1.5l1.5 -2l1.5 2.4l1.5 -0.3l1.5 1.3l1.5 -0.8l1.5 0.4l1.5 1.2l1.5 0l1.5 -1.1l1.5 1.8l1.5 0.4l1.5 -1.5l1.5 0.9l1.5 0.1l1.5 0.5l1.5 0.5l1.5 2.3l1.5 -2.1l1.5 0.2l1.5 0.6l1.5 1.3l1.5 -1.2l1.5 1.2l1.5 0.2l1.5 -1l1.5 0.8l1.5 0.6l1.5 -0.5l1.5 1.3l1.5 -0.7l1.5 1.1l1.5 -1.9l1.5 1l1.5 -2.2l1.5 0.8l1.5 0.6l1.5 0.4l1.5 0.5l1.5 0.9l1 -1.3l0.5 -11.2l1.5 -31.5l1.5 -43.6l1 -28.3l0.5 3.6l1.5 10.7l1.5 10.4l1.5 2.3l1.5 0.3l1.5 1.1l1.5 2.4l1.5 3.6l0.6 -1.9l0.9 2.3l1.5 -0.3l1.5 2.6l1.5 -0.8l1.5 0.5l1.5 1.5l1.5 1l1.5 1.4l1.5 -0.3l1.5 1.4l1.5 2.6l1.5 -0.9l1.5 1.4l0.5 1.8l1 -57.5l0.5 -26.7l1 12l1.5 19l0.8 9l0.7 1.2l1.5 2.5l1.5 0.7l1.5 -0.3l1.5 3.7l1.3 0.6l0.2 1.2l1.5 -1.1l1.5 1.9l1.5 0l1.5 2.3l1.5 -0.2l1.5 2.3l1.5 0l1.5 -0.9l1.5 1.6l1.5 2.3l1 0.7l0.5 0.5l1.5 0.3l1.5 0.1l1.5 1.3l1.5 0.7l1.5 0.8l1.5 1.6l1.5 -0.7l1.5 1.4l1.5 2.1l1.5 -0.4l1.5 1.2l1.5 -0.1l1.5 1.1l1.5 1.9l1.5 1.2l1.5 -0.4l1.5 0.4l1.5 2.4l1.5 -1.9l1.5 1.9l1.5 1.2l1.5 1.6l1.5 -0.7l1.5 -0.5l1.5 0.4l1.5 0.6l1.5 -0.1l1.5 1.1l1.5 1.2l1.5 -1.1l1.5 1.2l1.5 -1.1l1.5 3.5l1.5 -0.3l1.5 -1l1.5 0.7l1.5 0.9l1.5 2.3l1.5 -0.4l1.5 -0.7l1.5 0.9l1.5 -0.1l1.5 1.3l1.5 0.2l1.5 3.5l1.5 -0.4l1.5 0.9l1.5 -0.2l1.1 -0.6l0.4 1.5l1.5 0.2l1.5 -0.4l1.5 -0.2l1.5 1.9l1.5 -0.4l1.5 1.3l1.5 -0.9l1.5 0.7l1.5 2.6l1.5 0.1l1.5 0.1l1.5 0.1l1.5 0.8l1.5 -0.4l1.5 1.8l1.5 1l1.5 -1.1l1.5 -0.1l1.5 1.7l1.5 -0.7l1.5 3.2l1.5 -1.3l1.5 0.8l1.5 0.2l1.5 -0.1l1.5 0.3l1.5 0.2l1.5 2.9l1.5 -0.9l1.5 1.4l1.5 1l1.5 -0.8l1.5 0.2l1.5 0.6l1.5 1l1.5 -0.5l1.5 1.9l1.5 -0.6l1.5 -0.1l1.5 1.6l1.5 1.1l1.5 -1.3l1.5 1l1.5 0.5l1.5 1l1.5 0.6l1.5 -0.4l1.5 -0.1l1.5 1l1.5 1.9l1.5 1.6l1.5 -0.5l1.5 -0.6l1.5 2.9l1.5 -0.8l1.5 -1.2l1.5 0l1.5 0.8l1.5 3.6l1.5 -0.9l1.5 -1.3l1.5 0.7l1.5 0.7l1.5 -0.2l1.5 2l1.5 -0.8l1.5 1.1l1.5 1.1l1.5 -0.1l1.5 1.6l1.5 -0.7l1.5 1.9l0.8 -1.2l0.7 0.2l1.5 -0.3l1.5 1.8l1.5 0.6l1.5 -0.1l1.5 1.6l1.5 -0.2l1.5 0.2l1.5 -1.4l1.5 1.2l1.5 0.5l1.5 -1.2l1.5 2.7l1.5 -0.2l1.5 1.5l1.5 -1.6l1.5 2.9l1.5 0.2l1.5 -0.4l1.5 0.1l1.5 1.7l1.5 -1.8l1.5 0.9l1.5 1.3l1.5 -0.7l1.5 -0.3l1.5 0.1l1.5 0.8l1.5 2l1.5 1.9l1.5 -2.4l1.5 0.4l1.5 1.6l1.5 -0.5l1.5 0l1.5 0.3l1.4 1.7l0.1 -0.5l1.5 -0.8l1.5 1.4l1.5 -1l1.5 2.1l1.5 -2.3l1.5 1.4l1.5 1.3l1.5 0.9l1.5 -0.7l1.5 -1.8l1.5 1.7l1.5 1.1l1.5 -0.1l1.5 0l1.5 -0.5l1.5 -0.8l1.5 1.6l1.5 0.8l1.5 -0.2l1.5 0l1.5 1.3l1.5 -0.3l1.5 0.7l1.5 1.1l1.5 -1l1.5 1.8l1.5 -1.3l1.5 1.6l1.5 -0.5l1.5 0.1l1.5 0.1l1.5 -0.1l1.5 -1.3l1.5 3l1.5 -1l1.5 0.5l0.5 0l1 0.6l1.5 0l1.5 -0.4l1.5 0.3l1.5 2.4l1.5 -0.8l1.5 -1.3l1.5 2.4l1.5 -0.9l1.5 -0.9l1.5 0.4l1.5 0.6l1.5 2l1.5 0.2l1.5 -0.3l1.5 0.5l1.5 0l1.5 1.1l0.8 -0.7l0.7 1.6l1.5 -1l1.5 0.6l1.5 0.3l1.5 -1.3l1.5 0.6l1.5 -3.1l1.5 1.7l1.5 1.1l1.5 -0.6l1.5 1.8l1.5 -0.8l1.5 0.5l1.5 -1.8l1.5 2.1l1.5 -1.1l1.5 1.2l1.5 -0.5l1.5 -0.5l1.5 0.8l1.5 -0.9l1.5 -0.3l1.5 0.7l1.5 0l1.5 1.1l1.5 -1.2l1.5 -0.1l1.5 2.2l1.5 -0.2l1.5 -1.2l1.5 0.3l1.5 -1.5l1.5 2.5l1.5 -1.7l1.5 -1.1l1.5 1.7l1.5 0.7l1.5 0l1.5 -0.3l1.5 -0.1l1.5 -0.4l1.5 0l1.5 -0.1l1.5 2.1l1.5 -2l1.5 0.2l1.5 -1.6l1.5 1.7l1.5 0.7l1.5 -0.1l1.5 -1.9l1.5 1l1.5 1.2l1.5 -1.2l1.5 0.3l1.5 0.9l1.5 -0.2l1.5 -0.6l1.5 -0.3l1.5 -1.1l0.5 1.5l1 0.2l1.5 0.2l1.5 -0.9l1.5 1.1l1.5 -1l1.5 -0.6l1.5 1.7l1.5 -1.7l1.5 -0.3l1.5 1.1l1.5 0.2l1.5 1.7l1.5 -0.2l1.5 0.9l1.5 -1.4l1.5 -1.3l1.5 0.3l1.5 1.2l1.5 -1.4l1.5 1.4l1.5 0.4l1.5 -0.1l1.5 -1.5l1.5 2.5l1.5 0.8l1.5 -0.7l1.5 0.9l1.5 -2.7l1.5 0.4l1.5 0.9l1.5 0.2l1.5 0.4l1.5 -1.2l1.5 -0.5l1.5 0.2l1.5 -0.5l1.5 0.5l1.5 -0.2l1.5 1l1.5 -1.1l1.5 1.4l1.5 -1.2l1.5 1.7l1.5 0.1l1.5 -0.9l1.5 -0.1l1.5 0.5l1.5 0.2l1.5 -1.1l1.5 1.4l1.5 -2l1.5 0.5l1.5 0l1.5 1l1.5 -1l1.5 -1.3l1.5 2.6l1.5 -1.3l1.5 0.2l1.5 0.6l1.5 0.1l1.5 0.2l1.5 -1.4l1.5 1.3l1.5 0.6l1.5 0.1l1.5 0.8l1.5 -2.1l1.5 2.3l1.5 -2.3l1.5 0l1.5 0.9l1.5 1.5l1.5 -0.9l1.5 -0.9l1.5 0.2l1.5 0.9l1.5 -1.7l1.5 0.9l1.5 -0.1l1.5 1.6l1.5 -0.5l1.5 -0.1l1.5 0.7l1.5 -1.2l1.5 -0.5l1.5 1.6l1.5 -2.2l1.5 1.7l1.5 -0.3l1.5 -1.3l0.4 1.5l1.1 -0.9l1.5 1.7l1.5 -0.3l1.5 0.2l1.5 0.3l1.5 -0.7l1.5 0.9l1.5 -0.4l1.5 -0.1l1.5 0.4l1.5 0.8l1.5 -2.9l1.5 1l1.5 -0.8l1.5 0.2l1.5 1.7l1.5 -1.3l1.5 0.7l1.5 -0.3l1.5 1.2l1.5 0.5l1.5 -1.2l1.5 -0.6l1.5 0.1l1.5 0.4l1.5 -1.1l1.5 0.4l1.5 1.3l1.5 0.2l1.5 0.1l1.5 0.1l1.5 -0.8l1.5 0.5l1.5 -0.8l1.5 1l1.5 -1.8l1.5 2l1.5 -0.2l1.5 -0.5l1.5 0.5l1.5 0.7l1.5 -0.7l1.5 1.6l1.5 -0.4l1.5 -0.8l1.5 -0.1l1.5 -1l1.5 -0.1l1.5 0.8l1.5 -0.2l1.5 0.1l1.5 1.1l1.5 -1.1l1.5 0l1.5 -0.3l1.5 -0.5l1.5 0.7l1.5 0.5l1.5 0.6l1.5 -0.2l1.5 -1.5l1.5 0.6l1.5 0.8l1.5 -1.6l1.5 1l1.5 -0.9l1.5 0.8l1.5 1.6l1.5 -0.5l1.5 1.6l1.5 -2.5l1.5 1.6l1.5 -0.9l1.5 -1.1l1.5 1.4l1.5 0l1.5 -0.4l1.5 1.2l1.5 -1.2l1.5 0.8l1.5 -0.6l1.5 -0.4l1.5 0.7l1.5 0.5l1.5 0.3l1.5 -0.2l1.5 -2.3l1.5 0.4l1.5 1l1.5 1.3l1.5 -2.5l1.5 1.7l1.5 -1.1l1.5 1.6l1.5 0.3l1.5 -0.9l1.5 1.4l1.5 -0.4l1.5 -0.6l1.5 1.4l1.5 0.7l1.5 -1.7l1.5 0.2l1.5 0l1.5 0.3l1.5 -1l1.5 0.1l1.5 1l1.5 -1l0.5 1.1l1 -2.3l0.5 0.4l1 -6.7l1.5 -11.9l1.5 -8.3l1.5 -10.5l1.5 -10.1l1.5 -8.7l1 -6.4l0.5 -6.1l1.5 -16.5l1.5 -16.7l0.7 -9l0.8 13.6l0.5 8.2l1 1.7l1.5 -0.5l1.5 2l1.5 0.5l1.5 1.9l1.5 2.1" stroke="#3ca951" stroke-width="1.5" fill="none" stroke-linejoin="round"/>
<path d="M34 264.5l1 2.6l1 0.7l1 2l1 -0.5l1 -0.2l1 3.6l1 -1.7l1 -4.3l1 -1.4l1 -2.1l1 0.3l1 -1.5l1 0.7l1 1.6l1 0.3l1 2.3l1 -5.2l1 -5.4l1 -2.8l1 -1.7l1 4.7l1 -1.2l1 -2.9l1 -0.5l1 0.6l1 -0.5l1 -1.6l1 -0.2l1 2.1l1 -1.6l1 1.2l1 -0.8l1 2l1 -3l1 -1.2l1 -1.2l1 -3.5l1 3.9l1 0.5l1 -3.4l1 -2.4l1 1.7l1 -1.4l1 0.2l1 3.7l1 -3.8l1 -2.9l1 -1.9l1 2.7l1 0.4l1 0.6l1 -2.4l1 -0.3l1 0l1 -3.4l1 -2.3l1 -3.4l1 0.6l1 0.6l1 3.6l1 3.1l1 0.4l1 -0.4l1 5.1l1 -9.7l1 -3.4l1 -3.5l1 -5.5l1 -3.9l1 -3.3l1 3.5l1 -3.3l1 -15.6l1 1.1l0.7 -10.7l0.3 5.8l1 -11.4l1 7.7l1 -14.8l1 2.7l1 -2.5l1 4l1 -10.8l1 8l0.4 5.2l0.6 -16.1l1 21.4l1 -8.9l1 2.9l1 6l1 -16.8l1 0.2l1 6.1l1 4.2l1 0.2l1 -13.2l1 3.8l1 -13.2l1 2l1 6.3l1 0.6l1 -6.3l0.8 -5.2l0.2 14.2l1 -22.6l1 8.9l1 -13.1l1 7.4l1 -6.1l1 -4.2l1 -0.9l1 19l0.4 0.2l0.6 -8.8l1 1.2l1 1.8l1 -12.9l1 12l1 13l1 -22.1l1 -8.5l1 9.8l1 5.9l1 0.4l1 7.2l1 -12l1 -12.6l1 5.1l1 -4.1l1 -1.9l0.8 15l0.2 -8.9l1 4.6l1 19.3l1 -7.8l1 10.5l1 -19.6l1 27.1l1 -4.5l1 11.2l1 7l1 4.4l1 -25.4l1 28l1 -6.7l1 2.3l1 11l1 -5.3l1 -1l1 4.6l1 2.2l1 1.7l1 7.6l1 1.4l1 -17.6l1 5.2l1 6.8l0.9 -0.5l0.1 4.5l1 -5.7l1 -7.2l1 -22l1 -16.7l1 -28.5l1 10.2l1 10.3l0.3 3.5l0.7 2.9l1 -3.6l1 -2.8l1 -2.8l1 -8.6l1 -5.7l1 4.5l1 2.2l1 -1.5l1 -0.2l1 4.4l1 0.4l1 0.1l1 -0.3l1 5.7l1 -3.8l1 4.2l1 1.5l1 -2.2l1 3.9l1 -0.1l1 -1.7l1 2.3l1 1.6l1 1.7l1 -2.4l1 3.1l1 4.1l1 -0.1l1 -0.4l0.6 -1.2l0.4 2.7l1 -1.9l1 -0.5l1 0.6l1 -0.5l1 5.7l1 -3.7l1 2.6l1 -1.9l1 3.3l1 0.1l1 -0.7l1 3.1l1 -3.3l1 0.1l0.5 -1.7l0.5 0.7l1 1.8l1 1.1l1 1.3l1 -0.4l1 -0.2l1 0.2l1 3.1l1 -1.4l1 2.9l1 -1.2l1 0.5l1 0.6l1 1.6l1 0.6l0.4 -1.1l0.6 1.2l1 -1.2l1 0.1l1 0.7l1 1.6l1 0.5l1 2l1 -0.4l1 0.6l0.3 0.4l0.7 -64.7l0.2 -18l0.8 14.8l1 13.4l0.3 2.4l0.7 1.2l1 2.9l1 -1.2l1 1.2l1 3.2l1 0.9l1 2.3l1 -0.7l1 0.8l1 2.1l1 -1l1 1.5l1 -1.6l1 1.9l1 2.5l1 -2.7l1 1.7l1 0.6l1 0.8l1 0.4l1 1.4l1 -0.7l1 0.3l1 1.8l1 0.7l1 -1.3l1 3.1l1 -0.4l1 2l1 -0.4l1 -0.6l1 1.4l1 1.5l1 0.9l1 -0.7l1 1.3l1 1.1l1 -0.5l1 1.5l1 -0.2l1 -1l1 0.1l1 0.9l1 2.8l1 -0.1l1 -1.5l1 1.3l1 2.4l1 -2.3l1 1.2l1 0.1l1 1.5l1 -2.1l1 2.7l1 0.5l1 1.6l1 0l1 0.6l1 -0.5l1 1.7l1 -0.2l1 2.7l1 -0.8l1 0.4l1 0.6l1 0.5l1 0l0.3 1.1l0.7 -36.4l0.8 -41.7l0.2 4.6l1 14.7l1 15.1l0.7 9l0.3 1.4l1 1.1l1 -0.1l1 0.4l1 0.2l1 -0.8l1 1.3l1 1.6l1 1.8l1 0.3l1 -0.1l1 1.4l1 -0.1l1 -0.3l1 0.8l1 1l1 -1.6l1 0.9l1 0.9l1 -0.2l1 0.7l0.6 1.6l0.4 1.7l1 -1.1l1 0.1l1 2.5l1 -0.6l1 -1.1l1 1.8l1 -0.5l1 2.1l1 1.9l1 0.8l1 1.5l1 -1.6l1 -0.7l1 0.1l1 1.1l1 0.3l1 0.9l1 2l1 0.6l1 0.9l1 0.3l1 -0.8l1 1.9l1 -0.1l1 0.9l1 -0.2l1 -0.4l1 2.2l1 0.5l1 -0.3l1 1.4l1 0.4l1 -0.6l1 0.6l1 -0.6l1 1.8l1 -1.3l1 1.2l1 1.1l1 -1.1l1 0.9l1.5 1.2l1.5 -2.2l1.5 3.8l1.5 -0.7l1.5 -0.9l1.5 1.6l1.5 2.1l1.5 -1.1l1.5 1.5l1.5 0.3l1.5 -0.9l1.5 1.3l1.5 1.6l1.5 -1.5l1.5 1.4l1.5 0.2l1.5 0.7l1.5 1l1.5 -1.1l1.5 1.7l1.5 -0.4l1.5 1.1l1.5 0.8l1.5 1.8l1 -1.3l0.5 1.7l1.5 -0.6l1.5 0l1.5 -0.3l1.5 1.8l1.5 0.1l1.5 1l1.5 -0.9l1.5 -0.9l1.5 2.4l1.5 1.2l1.5 -0.6l1.5 0.7l1.5 0.8l1.5 0.1l1.5 2.1l1.5 -1.9l1.5 0.7l1.5 0.9l1.5 0.3l1.5 -1.3l1.5 2.3l1.5 -0.1l1.5 0l1.5 2.1l1.5 -0.8l1.5 1.2l1.5 -0.5l1.5 1.4l1.5 0.9l0.7 -1.5l0.8 0.3l1.5 1.8l1.5 -1l1.5 2.1l1.5 0.1l1.5 -0.5l1.5 0.9l1.5 2.1l1.5 0l1.5 -0.2l1.5 0.4l1.5 1l1.5 -0.9l1.5 1.3l1.5 0.6l1.5 1.2l1.5 -1.1l1.5 0.5l1.5 0.7l1.5 -0.1l1.5 0.4l1.5 1.2l1.5 -0.4l1.5 0.6l1.5 0.8l1.5 0.2l1.5 -0.1l1.5 0.6l1.5 -0.2l1.5 1.2l0.3 0.1l1.2 0.2l1.5 2.7l1.5 0.8l1.5 -1.6l1.5 0.5l1.5 0.2l1.5 0.1l1.5 0l1.5 1.4l1.5 -0.1l1.5 -1l1.5 1.6l1.5 -0.5l1.5 1.6l1.5 -0.8l1.5 1.2l1.5 -0.5l1.5 0.7l1.5 0.9l1.5 0.7l1.5 -1.2l1.5 1.1l1.5 0.1l1.5 -0.5l1.5 1.8l1.5 -0.1l1.5 0.2l1.5 -0.1l1.5 2.4l1.5 -1.9l1.5 -1.2l1.5 2l1.5 0.7l1.5 -0.9l1.5 1l1.5 -1.6l1.5 1.8l1.5 0.4l1.5 -0.5l1.5 0.1l1.5 0.4l1.5 0.7l1.5 1.8l1.5 -0.3l1.5 0l1.5 0.6l1.5 1.4l1.5 -0.7l1.5 0.3l1.5 1.7l1.5 -0.5l1.5 1.2l0.5 -1.2l1 -0.1l1.5 0.5l1.5 0l1.5 0l1.5 -0.6l1.5 0.4l1.5 0.1l1.5 0.4l1.5 1.6l1.5 -1.5l1.5 1.3l1.5 0.2l1.5 -1.4l1.5 2.3l1.5 -0.9l0.3 0.1l1.2 -0.4l1.5 0.3l1.5 -0.9l1.5 -0.6l1.5 0.3l1.5 0.1l1.5 0.3l1.5 -0.1l1.5 0.9l1.5 0.6l1.5 -0.9l1.5 1.1l1.5 0.3l1.5 -0.2l1.5 -1.7l1.5 -0.8l1.5 2.8l1.5 -0.5l1.5 -1.7l1.5 0.5l1.5 0.7l1.5 -0.3l1.5 -1.1l1.5 0.9l1.5 -1.1l1.5 0.9l1.5 0.7l1.5 -0.2l1.5 -0.6l1.5 1.1l1.5 1.2l1.5 -1.6l1.5 0.4l1.5 -1l1.5 1.9l1.5 -1.9l1.5 1l1.5 0.9l1.5 -0.3l1.5 -3l1.5 1.9l1.5 -1.3l1.5 1.7l1.5 -0.5l1.5 3.3l1.5 -0.4l1.5 -1.4l1.5 0.2l1.5 0l1.5 0.4l1.5 0l1.5 -0.4l1.5 -1.4l1.5 -1.3l1.5 1.4l1.5 0.5l1.5 1.7l1.5 -1.4l1.5 2.2l1.5 -0.4l1.5 -0.7l1.5 0.5l1.5 -1.3l1.5 1.3l1.5 -1l1.5 -0.7l1.5 -0.3l1.5 -0.8l1.5 1.6l1.5 1l1.5 -0.5l1.5 0l1.5 1.8l1.5 1l1.5 -3.4l1.5 2.3l1.5 -0.9l1.5 0.2l1.5 -0.5l1.5 0.3l1.5 0.3l1.5 -0.1l1.5 -0.9l1.5 0l1.5 0.9l1.5 0.7l1.5 -1.6l1.5 0.9l1.5 0.3l1.5 -0.1l1.5 -0.9l1.5 0.7l1.5 0.1l1.5 -1l1.5 0.9l1.5 0.1l1.5 -0.4l1.5 2.1l1.5 -0.9l1.5 -0.9l1.5 1.8l1.5 -1.1l1.5 -0.5l1.5 -0.2l1.5 1.8l1.5 -1.8l1.5 1.1l1.5 0.2l1.5 -0.8l1.5 1.1l1.5 0.3l1.5 -0.9l1.5 -0.1l1.5 0.5l1.5 -0.6l1.5 1.1l1.5 -0.4l1.5 -0.5l1.5 0.1l1.5 -0.3l1.5 1.1l1.5 -0.9l1.5 0.7l1.5 -0.8l1.5 3.1l1.5 -1.5l1.5 -0.1l1.5 0.3l1.5 -1.7l1.5 2.5l1.5 -2.5l1.5 2l1.5 -0.6l1.5 1.1l1.5 0.1l1.5 -0.6l1.5 0.3l1.5 -1.3l1.5 0.2l1.5 -0.6l1.5 -0.3l1.5 -0.4l1.5 1.1l1.5 1.3l1.5 -1.8l1.5 0.5l1.5 0.1l1.5 1l1.5 -1.9l1.5 1.9l1.5 -0.7l1.5 -0.3l1.5 1l1.5 -0.1l1.5 0l1.5 0.7l1.5 -2.2l1.5 2l1.5 -0.6l1.5 2l1.5 -0.6l1.5 -0.3l1.5 -1.6l1.5 1.5l1.5 0.7l1.5 -0.8l1.5 -1l1.5 -0.6l1.5 1.3l1.5 -1l1.5 0.9l0.8 0.3l0.7 0.7l1.5 -0.8l1.5 0.5l1.5 0.1l1.5 0.3l1.5 0.4l1.5 0l1.5 -0.6l1.5 0.3l1.5 -0.8l1.5 -0.5l1.5 0.4l1.5 0.5l1.5 -1.5l1.5 2.4l1.5 -0.2l1.5 -1.6l1.5 0.3l1.5 0.1l1.5 -1.3l1.5 0.6l1.5 1.9l1.5 -1.8l1.5 3.5l1.5 -0.6l1.5 0.2l1.5 -0.7l1.5 0.6l1.5 0l1.5 -2l1.5 2l1.5 -2l1.5 0.2l1.5 -2l1.5 1.8l1.5 -1.3l1.5 3.5l1.5 -1.3l1.5 0.6l1.5 -0.8l1.5 0.8l1.5 -0.6l1.5 -1.1l1.5 0.5l1.5 -0.3l1.5 -0.3l1.5 -0.1l1.5 0.7l1.5 1.7l1.5 0.9l1.5 -2.1l1.5 -0.3l1.5 1.6l1.5 -1.1l1.5 0.4l1.5 -0.2l1.5 -1.8l1.5 1l1.5 1.5l1.5 0.1l1.5 -0.3l1.5 -0.9l1.5 1.2l1.5 -0.3l1.5 -0.6l1.5 0.6l1.5 0.4l1.5 1.6l1.5 -1l1.5 -1.7l1.5 1.3l1.5 -2l1.5 -0.4l1.5 1.4l1.5 2.4l1.5 -0.8l1.5 -1.3l1.5 0.9l1.5 -2l1.5 1.5l1.5 -0.7l1.5 -0.2l1.5 0.7l1.5 -0.4l1.5 0.9l1.5 -1.3l1.5 1.3l1.5 0.1l1.5 0.4l1.5 0.1l1.5 0.1l1.5 0.5l1.5 0.1l1.5 -0.3l1.5 0l1.5 -2.1l1.5 1.1l1.5 1.6l1.5 -1.4l1.5 1.3l1.5 0l1.5 0l1.5 -1.9l1.5 0.4l1.5 -0.2l1.5 0.8l1.5 -2l1.5 1.6l1.5 1.1l1.5 -0.8l1.5 1l1.5 0.5l1.5 -1.2l1.5 -0.6l1.5 -0.3l1.5 -0.7l1.5 1l1.5 0.6l1.5 1.3l1.5 -1l1 -0.1l0.5 -0.7l1.5 -3.6l1.5 -20.1l1.5 -22.3l0.5 -5.8l1 -24.4l1.5 -37.2l0.2 -2.6l1.3 22.2l0.1 2.7l1.4 1.6l1.5 4l1.2 1.1l0.3 0.1l1.5 3.1l1.5 -1l1.5 0.9l1.5 1.2l1.5 2l0.4 -0.2l1.1 -33.6l0.2 -5.2l1.3 3.7l1.5 7.1l1.5 1.4l1.5 0.9l1.5 0.3l1.5 1.4l1.5 2l1.5 -2.1l1.5 4.7l1.5 -0.8l1.5 2.4l1.5 0.6l1.5 1l1.5 1.1l1.5 0.3l1.5 2.8l1.5 -0.5l1.5 1.4l1.5 -0.1l1.5 0.7l1.5 2.2l1.5 -0.7l1.5 1.4l1.5 0l1.5 -0.2l1.5 2.7l1.5 -0.3l1.5 -1.1l1.5 2l1.5 2.5l1.5 -0.5l1.5 -0.6l1.5 1.1l1.5 0l1 0.8l0.5 -0.2l1.5 0.7l1.5 -0.2l1.5 1.5l1.5 -1.3l1.5 0l1.5 0.5l1.5 1.2l1.5 1.1l1.5 0.8l1.5 0.7l1.5 -1.4l1.5 0.5l1.5 2.3l1.5 1.4l1.5 -0.6l1.5 -0.2l1.5 1.4l1.5 1l1.5 -0.1l1.5 -0.1l1.5 0.1l1.5 0.1l1.5 0.5l0.5 -0.5l1 1.6l1.5 1l1.5 -0.5l1.5 1.4l1.5 0.5l1.5 -0.1l1.5 0.5l1.5 1.7l1.5 -1.5l1.5 0.5l1.5 0.7l1.5 0.2l1.5 1.5l1.5 0.5l1.5 0.1l1.5 1.5l1.5 -1.2l1.5 2.4l1.5 2.5l1.5 -0.6l1.5 -1l1.5 2.2l1 -1.1l0.5 1.1l1.5 0.2l1.5 -1.5l1.5 2.8l1.5 -2.2l1.5 1.2l1.5 1.4l1.5 0.4l1.5 -0.1l1.5 -0.3l1.5 1.1l1.5 -0.2l1.5 -0.2l1.5 1.5l1.5 0.7l1.5 -1.4l1.5 0.7l1.5 -0.1l1.5 0.3l1.5 1.6l1.5 1.1l0.5 -1.9l1 1.4l1.5 1l1.5 -0.3l1.5 1.7l1.5 0.2l1.5 -0.1l1.5 1.5l1.5 -0.1l1.5 1.1l1.5 0.1l1.5 -0.2l1.5 1.9l1.5 -1.4l1.5 1.2l1.5 -0.2l1.5 0l1.5 0.1l1.5 2.5l1.5 0.6l1.5 0.3l1.5 -2l1.5 2.7l1.5 0l1.5 0.8l1.5 0.1l1.5 0.7l1.5 0.2l1.5 1.1l1.5 -0.3l1.5 0l1.5 -0.8l1.5 2.4l1.5 -1.6l1.4 1.5l0.1 0.5l1.5 0.2l1.5 -0.1l1.5 2.5l1.5 -2.2l1.5 2.5l1.5 -0.7l1.5 0.7l1.5 0.7l1.5 0.9l1.5 -1.5l1.5 2l1.5 -0.3l1.5 0.4l1.5 0.2l1.5 0.1l1.5 1.2l1.5 -1.4l1.5 0.5l1.5 1.6l1.5 -0.1l1.5 1.4l1.5 -2.6l1.5 2.7l1.5 0.8l1.5 2l1.5 -0.4l1.5 -1.3l1.5 1.9l1.5 -1.3l1.5 1.3l1.3 -0.2l0.2 -0.8l1.5 2.1l1.5 0.1l1.5 -0.4l1.5 0l1.5 0.4l1.5 0.9l1.5 1.4l1.5 -1l1.5 0.7l1.5 0.1l1.5 -0.5l1.5 0.8l1.5 0l1.5 1.6l1.5 -0.4l1.5 1.2l1.5 -0.7l1.5 0.5l1.5 1.5l1.5 -0.3l1.5 0.1l1.5 0.8l1.5 0.1l1.5 0.8l1.5 -1.2l1.5 0.3l1.5 -0.2l1.5 1.9l1.5 -0.2l1.5 -0.6l1.5 1l1.5 1.3l1.5 -0.8l1.5 -0.6l1.5 -0.5l1.5 1.4l1.5 1.9l1.5 -1l1.5 -0.9l1.5 -0.7l1.5 2.3l1.5 -1.1l1.5 0.1l1.5 2l1.5 -2.3l1.5 0l1.5 2.8l1.5 -0.4l1.5 -2.9l1.5 3l1.5 -0.8l1.5 0.4l1.5 -0.6l1 0.7l0.5 -10.8l1.5 -34.1l1.5 -42.2l1 -28.8l0.5 2.2l1.5 13.7l1.5 9.7l1.5 2.1l1.5 2l1.5 0.3l1.5 3.4l1.5 -1.4l0.6 0.4l0.9 1l1.5 2.5l1.5 0.8l1.5 0.3l1.5 -0.5l1.5 1.5l1.5 0.8l1.5 1l1.5 -0.3l1.5 1.7l1.5 0.6l1.5 1.8l1.5 -0.1l0.5 0.7l1 -54.1l0.5 -27l1 11.7l1.5 18.3l0.8 9.5l0.7 0.3l1.5 1.6l1.5 1.3l1.5 2.8l1.5 1.6l1.3 1l0.2 -0.4l1.5 1l1.5 0.8l1.5 1.6l1.5 -0.4l1.5 1.5l1.5 0.4l1.5 2.2l1.5 0.3l1.5 0.3l1.5 -0.1l1 1.8l0.5 0.2l1.5 1.9l1.5 -1.1l1.5 1.4l1.5 0.2l1.5 2.5l1.5 0.3l1.5 0.1l1.5 1.5l1.5 0.3l1.5 0.6l1.5 1.4l1.5 1.7l1.5 1.4l1.5 1.2l1.5 -0.6l1.5 0.4l1.5 0.6l1.5 0.1l1.5 1.3l1.5 1.2l1.5 -0.2l1.5 0.8l1.5 -0.1l1.5 2.3l1.5 1l1.5 -0.7l1.5 0.3l1.5 0.2l1.5 0l1.5 0.5l1.5 1.6l1.5 1.7l1.5 -0.3l1.5 -0.1l1.5 -0.1l1.5 -0.3l1.5 2.3l1.5 -0.4l1.5 1.2l1.5 -0.3l1.5 -1l1.5 4.2l1.5 -2.2l1.5 2l1.5 0.9l1.5 -1.6l1.5 2.1l1.5 0.3l1.1 -0.7l0.4 2.8l1.5 -1.3l1.5 1.4l1.5 0.1l1.5 2l1.5 -1.8l1.5 0.8l1.5 1l1.5 0.8l1.5 0l1.5 1.5l1.5 0.6l1.5 0l1.5 -1.1l1.5 0.7l1.5 -0.2l1.5 1.3l1.5 1.5l1.5 1l1.5 -0.8l1.5 1l1.5 -0.6l1.5 0.5l1.5 1.3l1.5 -1.5l1.5 2l1.5 0.1l1.5 1.7l1.5 1l1.5 0l1.5 1.4l1.5 -0.7l1.5 1.3l1.5 -0.2l1.5 -1.3l1.5 2.2l1.5 -0.1l1.5 0.9l1.5 -1.1l1.5 2.2l1.5 0.4l1.5 -0.2l1.5 1l1.5 1.2l1.5 -0.3l1.5 1.2l1.5 -0.6l1.5 2.8l1.5 -1.4l1.5 0.2l1.5 1.6l1.5 0.7l1.5 1l1.5 0.1l1.5 0.8l1.5 -1.4l1.5 1.9l1.5 -0.2l1.5 -0.9l1.5 3.4l1.5 -1.8l1.5 1.8l1.5 0.5l1.5 -0.6l1.5 -0.3l1.5 2.5l1.5 -0.4l1.5 0.8l1.5 0.6l1.5 0.6l1.5 0.7l1.5 0.1l1.5 1.1l0.8 -0.7l0.7 -0.9l1.5 0.7l1.5 1.3l1.5 -0.9l1.5 1.4l1.5 1.1l1.5 -0.6l1.5 1.1l1.5 -0.7l1.5 0.3l1.5 1.6l1.5 0.1l1.5 -0.7l1.5 1l1.5 0.2l1.5 0.8l1.5 0.2l1.5 0.6l1.5 2.7l1.5 -1.7l1.5 -0.4l1.5 1.1l1.5 1.7l1.5 -0.8l1.5 0.9l1.5 -0.6l1.5 0.2l1.5 1.7l1.5 -0.5l1.5 -0.2l1.5 1.5l1.5 -1.2l1.5 0.3l1.5 1.4l1.5 0.3l1.5 0.8l1.4 -0.8l0.1 1.4l1.5 -0.4l1.5 0.2l1.5 0.6l1.5 -0.2l1.5 1.5l1.5 -1.2l1.5 1.3l1.5 -0.1l1.5 -1.6l1.5 1.3l1.5 0.6l1.5 1l1.5 -1.3l1.5 0.8l1.5 0.2l1.5 -0.3l1.5 1.1l1.5 1.7l1.5 0.4l1.5 -1.5l1.5 0.3l1.5 0.2l1.5 -1l1.5 3.7l1.5 -2.1l1.5 1.1l1.5 -0.4l1.5 0.4l1.5 -0.7l1.5 0.6l1.5 1l1.5 -0.3l1.5 1.3l1.5 -0.9l1.5 0.9l1.5 0.6l0.5 -1.2l1 2.3l1.5 -0.6l1.5 2.7l1.5 -2.3l1.5 1.4l1.5 -0.2l1.5 -1.7l1.5 0.2l1.5 0.3l1.5 2.1l1.5 -0.4l1.5 1.2l1.5 -1.1l1.5 2l1.5 -0.2l1.5 0.6l1.5 0.1l1.5 -0.3l0.8 1l0.7 -2.3l1.5 1l1.5 1.4l1.5 -1.5l1.5 1.7l1.5 -0.5l1.5 0.4l1.5 -2.1l1.5 1.4l1.5 1.2l1.5 -1.5l1.5 1.6l1.5 0l1.5 -2.9l1.5 2.5l1.5 -1l1.5 0.1l1.5 -0.5l1.5 1.6l1.5 0.7l1.5 1l1.5 -0.9l1.5 -1.6l1.5 -0.9l1.5 2.1l1.5 -0.1l1.5 -0.4l1.5 -1l1.5 0.3l1.5 0.9l1.5 1.5l1.5 0l1.5 -1.8l1.5 -0.7l1.5 1.3l1.5 0.6l1.5 -1.2l1.5 0.8l1.5 0.8l1.5 -2l1.5 2.9l1.5 -0.6l1.5 -1.3l1.5 -0.2l1.5 0l1.5 -0.9l1.5 1.4l1.5 -0.4l1.5 -0.5l1.5 0.4l1.5 -0.3l1.5 -0.3l1.5 0.9l1.5 0.3l1.5 0.3l1.5 -0.9l1.5 1.2l1.5 -0.7l1.5 1.7l1.5 -2.2l0.5 1.8l1 -1.3l1.5 -1l1.5 1.9l1.5 -1.8l1.5 0.3l1.5 0.8l1.5 0.4l1.5 -0.3l1.5 0.5l1.5 0l1.5 -1.5l1.5 2.4l1.5 0.2l1.5 -1.6l1.5 1l1.5 -0.8l1.5 -0.5l1.5 0.6l1.5 -1.3l1.5 1.2l1.5 1.1l1.5 0.4l1.5 -0.3l1.5 0l1.5 -0.6l1.5 1.3l1.5 0.6l1.5 -1.2l1.5 1l1.5 -1.1l1.5 -0.2l1.5 1.1l1.5 -0.6l1.5 -0.2l1.5 -0.3l1.5 0.5l1.5 -0.2l1.5 -1.3l1.5 1.7l1.5 0.9l1.5 -1.1l1.5 0.2l1.5 0.1l1.5 0.4l1.5 -0.1l1.5 -0.7l1.5 -0.5l1.5 1.4l1.5 0l1.5 -0.8l1.5 0.1l1.5 0.5l1.5 0.7l1.5 -1.6l1.5 -0.3l1.5 0.8l1.5 -0.6l1.5 0.4l1.5 -0.1l1.5 1.9l1.5 -0.4l1.5 -0.2l1.5 1.1l1.5 1.3l1.5 -2.1l1.5 0.3l1.5 -1.5l1.5 1.3l1.5 -1l1.5 -0.7l1.5 1.4l1.5 -0.8l1.5 1.5l1.5 -1.3l1.5 0.1l1.5 -0.4l1.5 0.6l1.5 0.1l1.5 0.7l1.5 -1l1.5 0.1l1.5 -0.2l1.5 0.3l1.5 0.3l1.5 0.2l1.5 -0.3l1.5 1.3l1.5 -1.2l1.5 0.8l1.5 -0.4l1.5 0.2l0.4 -0.2l1.1 -0.5l1.5 0.2l1.5 -0.2l1.5 0.5l1.5 1.2l1.5 0l1.5 0.2l1.5 -1.8l1.5 1.4l1.5 -0.7l1.5 0.2l1.5 -0.7l1.5 1.6l1.5 -2l1.5 1l1.5 -1.2l1.5 0.9l1.5 0.6l1.5 -0.1l1.5 0.1l1.5 0.8l1.5 -1.8l1.5 -0.4l1.5 2.4l1.5 -1.8l1.5 1.1l1.5 2.1l1.5 -1.2l1.5 -0.6l1.5 0.9l1.5 -1.3l1.5 1.3l1.5 -0.8l1.5 -0.1l1.5 -0.4l1.5 0.1l1.5 0.4l1.5 1.1l1.5 -0.7l1.5 0.2l1.5 -0.8l1.5 1.6l1.5 -1.3l1.5 1.4l1.5 -2l1.5 1.6l1.5 -1.6l1.5 0.4l1.5 -0.2l1.5 -1.5l1.5 2l1.5 0l1.5 -1.1l1.5 1.5l1.5 0.1l1.5 -1l1.5 0.8l1.5 1.5l1.5 -1.2l1.5 0.1l1.5 0l1.5 -0.1l1.5 -0.8l1.5 0.6l1.5 -1.5l1.5 1.5l1.5 -0.2l1.5 -0.8l1.5 0l1.5 1.4l1.5 -0.4l1.5 -0.1l1.5 0.1l1.5 0.7l1.5 0.5l1.5 -1.1l1.5 -1.2l1.5 0.7l1.5 0l1.5 1.1l1.5 0.5l1.5 -0.6l1.5 -0.7l1.5 1.6l1.5 -0.8l1.5 -0.4l1.5 0.6l1.5 1.7l1.5 -1.8l1.5 -0.7l1.5 1.3l1.5 -1l1.5 1.8l1.5 -0.2l1.5 -1.7l1.5 0.5l1.5 -0.1l1.5 -0.5l1.5 1l1.5 -0.4l1.5 1.5l1.5 -1l1.5 0.4l1.5 0l1.5 -0.6l1.5 0.2l1.5 -1.2l1.5 1.4l1.5 0l0.5 0.1l1 -2.8l0.5 -0.6l1 -5l1.5 -10.5l1.5 -7.5l1.5 -11.1l1.5 -11.4l1.5 -8.8l1 -7l0.5 -7.5l1.5 -16.2l1.5 -18.3l0.7 -4.2l0.8 10.5l0.5 8.7l1 1.3l1.5 1.1l1.5 3.2l1.5 0.4l1.5 0.6l1.5 3.3" stroke="#9c6b4e" stroke-width="1.5" fill="none" stroke-linejoin="round"/>
<path d="M34 264.9l1 1l1 -1.3l1 3.1l1 2.4l1 1.4l1 0.5l1 -4l1 -3.1l1 -4l1 -3.8l1 -1.8l1 0.2l1 4.7l1 1.5l1 5l1 -2.6l1 -2.8l1 -4.6l1 -4.9l1 0.9l1 0.1l1 1l1 -1.8l1 -2.2l1 1.2l1 -1.3l1 0.8l1 -2.7l1 -0.3l1 -1.9l1 2.1l1 1.5l1 0.3l1 -0.8l1 -2.5l1 1.6l1 -1.8l1 0.8l1 -0.5l1 0.9l1 -4.4l1 0.6l1 0.1l1 -3l1 1.2l1 -2.4l1 0.5l1 0.4l1 0l1 -0.5l1 -5.1l1 -0.4l1 1.2l1 1.2l1 -2.6l1 -3.8l1 -1.6l1 0.4l1 -1l1 4.3l1 -1.6l1 3l1 7.3l1 -4.5l1 -2l1 -7l1 -2.4l1 -1l1 -3.7l1 -7.3l1 -8.8l1 -10.5l1 3.8l1 -1.7l0.7 -10.3l0.3 9.7l1 -14l1 5.2l1 0.8l1 -6l1 -1.8l1 -6l1 -9.9l1 3.9l0.4 -7.1l0.6 5.6l1 2.8l1 -4l1 5.7l1 12l1 -4.6l1 3.4l1 -9.1l1 5.3l1 -13.1l1 -4.9l1 7l1 -5.8l1 2.2l1 -1.7l1 -5.5l1 -1.8l0.8 9l0.2 -11.6l1 2l1 -5.5l1 14.6l1 -12.2l1 6.7l1 -3.6l1 -3.6l1 -5.1l0.4 -9.1l0.6 8.2l1 5.8l1 -8.7l1 0.3l1 6.7l1 -1.6l1 6.3l1 -3.2l1 3.2l1 -8.4l1 -5l1 3.1l1 5.2l1 1.6l1 -2.5l1 -7.3l1 -4.3l0.8 9.8l0.2 1.1l1 -8.2l1 9.3l1 -0.3l1 11.3l1 16.8l1 -10.2l1 3.6l1 5.7l1 4.3l1 11.2l1 -4.6l1 14.5l1 -9.6l1 3.4l1 14.9l1 -5.9l1 -4.9l1 -0.2l1 5.4l1 5.3l1 14.2l1 -6.7l1 -2.4l1 -9.7l1 16.1l0.9 -6.6l0.1 1.2l1 -10.8l1 -7.8l1 -15.4l1 -22.2l1 -17.8l1 2.3l1 6.1l0.3 4l0.7 -0.5l1 0.6l1 3.5l1 -12.2l1 -8.2l1 -1.7l1 1.2l1 0.6l1 2.6l1 -3.2l1 5.1l1 1.3l1 0.6l1 -3l1 6.2l1 4.8l1 1.2l1 -2.2l1 0.4l1 -0.9l1 -1.8l1 6.3l1 2.5l1 -2.5l1 7.2l1 -1.2l1 -0.3l1 1.3l1 -3.4l1 1.6l0.6 -1.7l0.4 3.4l1 -0.6l1 3l1 -1.3l1 -0.9l1 -1l1 3.2l1 1l1 0.5l1 -0.3l1 0.5l1 0.9l1 -0.3l1 0.2l1 1.1l0.5 -1.1l0.5 -0.5l1 2.5l1 -0.3l1 0l1 1.9l1 0.6l1 1.7l1 -1.1l1 0.7l1 0l1 -0.2l1 -0.5l1 -0.3l1 0.2l1 1.2l0.4 0.4l0.6 0.8l1 -0.6l1 2.7l1 0.8l1 -0.8l1 1.4l1 1.1l1 1.8l1 1.4l0.3 -0.3l0.7 -63.3l0.2 -17.6l0.8 11.3l1 14l0.3 4.6l0.7 1.2l1 0.2l1 1.9l1 -0.4l1 0.5l1 2.4l1 1.9l1 2.7l1 -0.7l1 0l1 0l1 1.3l1 0.9l1 0.4l1 1.1l1 0.1l1 -0.2l1 3.5l1 -2.2l1 0.9l1 -0.2l1 1.2l1 1.4l1 -1.2l1 1.7l1 0.2l1 1.2l1 1l1 -0.1l1 1.7l1 -0.6l1 1.5l1 -0.4l1 0.1l1 1.1l1 1l1 1l1 1.5l1 -0.9l1 0.5l1 -1l1 2.8l1 -1.5l1 1l1 2.4l1 -0.4l1 1.7l1 -2.1l1 1.2l1 -1l1 1.8l1 -0.5l1 2.1l1 -0.1l1 -1.3l1 1.8l1 0.3l1 1.4l1 1.5l1 -1.5l1 1.3l1 1.3l1 -0.9l1 0.9l1 0.2l1 2l1 0.4l0.3 -1.4l0.7 -34l0.8 -40.4l0.2 1.4l1 15.4l1 15.1l0.7 10.3l0.3 1.4l1 -1.4l1 0l1 0.8l1 0.1l1 -1.1l1 3.1l1 0.3l1 -0.1l1 0.8l1 0.2l1 2.3l1 0.6l1 0.4l1 1.2l1 -0.5l1 -0.2l1 1.5l1 1.8l1 0.5l1 -0.6l0.6 1.9l0.4 -2l1 0.9l1 0.8l1 2.5l1 -3.4l1 3.2l1 0.4l1 -0.1l1 1.6l1 -1.2l1 2.4l1 -0.3l1 0.8l1 1.5l1 0.3l1 0.1l1 0.9l1 -0.2l1 2.1l1 -0.3l1 0.4l1 1.5l1 0.8l1 -2.3l1 1.7l1 -0.7l1 1.9l1 -0.6l1 0.3l1 0.8l1 1.5l1 -1.2l1 1.4l1 -0.2l1 0.1l1 0.6l1 1.6l1 -1.5l1 0.7l1 0.8l1 -0.9l1 1.6l1.5 1.5l1.5 0.8l1.5 -0.1l1.5 -0.7l1.5 0.6l1.5 0.8l1.5 -0.2l1.5 2.1l1.5 0.4l1.5 1.6l1.5 -2l1.5 1.7l1.5 -0.8l1.5 0.8l1.5 3l1.5 -0.3l1.5 0.4l1.5 -0.4l1.5 1.4l1.5 1l1.5 1.3l1.5 -2l1.5 2.1l1.5 -0.3l1 3l0.5 -0.4l1.5 -0.7l1.5 -0.1l1.5 1.5l1.5 0.3l1.5 -1.4l1.5 1.5l1.5 0l1.5 0.5l1.5 -0.9l1.5 3.1l1.5 -1.3l1.5 -0.4l1.5 0.1l1.5 2.5l1.5 -0.6l1.5 0.9l1.5 -0.3l1.5 -0.6l1.5 1.5l1.5 0.1l1.5 0.3l1.5 1.3l1.5 -0.3l1.5 1.1l1.5 0.2l1.5 -0.1l1.5 0l1.5 0.9l1.5 1.3l0.7 0.3l0.8 0.4l1.5 -1.1l1.5 0.5l1.5 1.4l1.5 0.3l1.5 0.9l1.5 0.3l1.5 -1l1.5 1.6l1.5 1.4l1.5 -0.8l1.5 0.4l1.5 0.7l1.5 -0.7l1.5 2.3l1.5 0.4l1.5 0.8l1.5 -0.6l1.5 0.4l1.5 0.2l1.5 1.1l1.5 0.5l1.5 1l1.5 -0.8l1.5 0.5l1.5 0.1l1.5 0.8l1.5 1.4l1.5 0.5l1.5 -0.3l0.3 0.9l1.2 -0.2l1.5 -0.4l1.5 1.1l1.5 -1.3l1.5 0.6l1.5 0.9l1.5 0.5l1.5 0.1l1.5 0.9l1.5 0.1l1.5 0.5l1.5 3.1l1.5 -1.3l1.5 0.7l1.5 0.3l1.5 -1.9l1.5 1.9l1.5 -1l1.5 -0.2l1.5 0.9l1.5 0.8l1.5 1.1l1.5 0.3l1.5 -0.3l1.5 1.2l1.5 -2.2l1.5 2.1l1.5 1.1l1.5 2l1.5 -2.5l1.5 -0.5l1.5 1.9l1.5 0l1.5 0.8l1.5 -0.3l1.5 -0.3l1.5 0.7l1.5 0.8l1.5 2l1.5 -3.8l1.5 1.7l1.5 1.1l1.5 0.1l1.5 -0.5l1.5 1.1l1.5 0.2l1.5 0.8l1.5 0.6l1.5 -0.5l1.5 1l1.5 -0.7l1.5 0.5l0.5 0.7l1 -0.4l1.5 1l1.5 0.3l1.5 -1l1.5 2.4l1.5 -1l1.5 -0.8l1.5 -0.3l1.5 0.9l1.5 0.3l1.5 0.4l1.5 -0.3l1.5 0.2l1.5 -1.7l1.5 0.9l0.3 0.4l1.2 0.8l1.5 -0.6l1.5 0.4l1.5 -0.9l1.5 1.7l1.5 -0.8l1.5 -1l1.5 0.9l1.5 0l1.5 0.4l1.5 1.5l1.5 -2.2l1.5 2.2l1.5 -1.7l1.5 1.1l1.5 -0.9l1.5 0.7l1.5 0.7l1.5 0.4l1.5 -0.6l1.5 -0.8l1.5 0.8l1.5 -1.7l1.5 1l1.5 -0.5l1.5 -1.1l1.5 1.3l1.5 -0.6l1.5 2l1.5 -1.5l1.5 1.7l1.5 -1l1.5 1.1l1.5 -0.3l1.5 0.7l1.5 -1.7l1.5 -0.3l1.5 1.2l1.5 1.8l1.5 -1.1l1.5 -1l1.5 0.6l1.5 -1l1.5 0.3l1.5 0.9l1.5 -0.6l1.5 -0.2l1.5 0.3l1.5 0.9l1.5 0.1l1.5 0.2l1.5 -0.9l1.5 -1.2l1.5 1.3l1.5 -1l1.5 -0.3l1.5 0.7l1.5 -0.4l1.5 -0.3l1.5 1.1l1.5 -0.8l1.5 1.4l1.5 -0.4l1.5 -1l1.5 1.5l1.5 0.1l1.5 -1l1.5 1.4l1.5 -0.9l1.5 0l1.5 0.8l1.5 -2l1.5 1.4l1.5 1.2l1.5 0l1.5 0.7l1.5 -0.7l1.5 -0.5l1.5 0.8l1.5 -1.1l1.5 0.7l1.5 -2.7l1.5 0.8l1.5 2.1l1.5 0.1l1.5 -0.3l1.5 0.5l1.5 -2.1l1.5 1.7l1.5 -1.3l1.5 0.6l1.5 -0.2l1.5 1.4l1.5 -1.5l1.5 1.3l1.5 0l1.5 -0.2l1.5 0.2l1.5 0.8l1.5 -0.9l1.5 0.3l1.5 -0.3l1.5 -1.8l1.5 2.9l1.5 -0.8l1.5 -0.3l1.5 0.8l1.5 -1.3l1.5 0.6l1.5 -0.8l1.5 0.8l1.5 1l1.5 -1.7l1.5 0.3l1.5 1.3l1.5 -0.9l1.5 2.5l1.5 -2.8l1.5 1.6l1.5 -0.6l1.5 0.6l1.5 0.7l1.5 1l1.5 -0.7l1.5 -0.6l1.5 -0.9l1.5 0.6l1.5 0.2l1.5 -0.5l1.5 -0.5l1.5 0.2l1.5 -0.5l1.5 1.4l1.5 0.5l1.5 -0.4l1.5 -0.4l1.5 -0.6l1.5 1.4l1.5 2l1.5 -1.2l1.5 -1.3l1.5 1l1.5 -1.2l1.5 -0.1l1.5 0.1l1.5 -1.1l1.5 2.3l1.5 -1.4l1.5 0.7l1.5 0.3l1.5 0.5l1.5 -1l1.5 0.2l1.5 0.4l1.5 -0.5l1.5 0.1l1.5 1.3l1.5 -0.9l1.5 0.8l1.5 -1.1l1.5 0.1l1.5 -1.2l1.5 1.4l1.5 -1.1l1.5 1.4l1.5 1.6l1.5 0.4l1.5 -1.8l1.5 0.1l1.5 0.7l1.5 0.1l0.8 0.6l0.7 -1.3l1.5 0.7l1.5 -0.7l1.5 -0.4l1.5 1.5l1.5 -0.1l1.5 -0.7l1.5 -0.3l1.5 -0.3l1.5 1.8l1.5 -1.9l1.5 1.7l1.5 -1.5l1.5 0.8l1.5 -0.6l1.5 -0.6l1.5 0.3l1.5 0.5l1.5 -0.3l1.5 -0.1l1.5 1.8l1.5 -1.6l1.5 0.8l1.5 -0.8l1.5 0l1.5 0.6l1.5 2.3l1.5 -1.5l1.5 0.3l1.5 -0.1l1.5 -1.5l1.5 -0.1l1.5 0.7l1.5 0.9l1.5 -0.6l1.5 -1l1.5 0.8l1.5 -1.3l1.5 1.4l1.5 -1.4l1.5 0.5l1.5 -0.6l1.5 1l1.5 0.3l1.5 1.1l1.5 -1l1.5 0.1l1.5 -0.3l1.5 0.6l1.5 -0.3l1.5 -0.5l1.5 0.8l1.5 0.7l1.5 -1.8l1.5 -0.3l1.5 2.1l1.5 -0.6l1.5 -0.4l1.5 -0.4l1.5 1.1l1.5 1.1l1.5 -1.4l1.5 0.6l1.5 1.6l1.5 -1.2l1.5 -0.7l1.5 -0.8l1.5 1.8l1.5 0l1.5 -0.9l1.5 1l1.5 0l1.5 0.9l1.5 -0.6l1.5 -0.6l1.5 0.5l1.5 -0.7l1.5 -0.7l1.5 0.5l1.5 -0.2l1.5 1.4l1.5 -0.9l1.5 0.4l1.5 -1l1.5 1.4l1.5 -1l1.5 -0.6l1.5 1.8l1.5 -0.3l1.5 0.9l1.5 0.3l1.5 -1.4l1.5 -1l1.5 -0.7l1.5 1.7l1.5 -1.2l1.5 2.4l1.5 -0.5l1.5 -1l1.5 -0.4l1.5 2.5l1.5 -0.6l1.5 -0.2l1.5 0.2l1.5 -0.8l1.5 -1l1.5 0.7l1.5 -0.2l1.5 -0.4l1.5 0.4l1.5 -2l1.5 1.4l1.5 0.8l1.5 -1.5l1.5 2.1l1.5 -0.6l1.5 2.3l1.5 -1l1.5 -0.5l1.5 -1l1 -1.2l0.5 -0.3l1.5 -2.1l1.5 -19.7l1.5 -23l0.5 -5.6l1 -22.3l1.5 -35.6l0.2 -5.9l1.3 23.5l0.1 2.2l1.4 2.8l1.5 1.1l1.2 2l0.3 0.3l1.5 0l1.5 1.3l1.5 2.1l1.5 0.3l1.5 1l0.4 0.2l1.1 -33.5l0.2 -4.9l1.3 4.6l1.5 5.8l1.5 0.8l1.5 1l1.5 1.7l1.5 0.3l1.5 1.6l1.5 0.7l1.5 3l1.5 0.8l1.5 0.4l1.5 1.2l1.5 1.2l1.5 1.2l1.5 0.9l1.5 0.6l1.5 0.5l1.5 1.5l1.5 0.4l1.5 0.3l1.5 1.6l1.5 -0.4l1.5 1.3l1.5 -0.2l1.5 2.1l1.5 0.2l1.5 -0.1l1.5 0.1l1.5 0.9l1.5 -1.2l1.5 3.3l1.5 0.6l1.5 0.5l1.5 -0.4l1 0.7l0.5 0l1.5 0.8l1.5 0l1.5 0.2l1.5 2.7l1.5 -1.6l1.5 1.3l1.5 0.6l1.5 1.2l1.5 0.5l1.5 -1l1.5 1l1.5 0.5l1.5 -0.2l1.5 -1.4l1.5 0.6l1.5 1.3l1.5 2.4l1.5 0l1.5 -0.3l1.5 0.8l1.5 0.7l1.5 0.1l1.5 0.9l0.5 -1.1l1 0.5l1.5 0.6l1.5 -0.4l1.5 0.5l1.5 0.8l1.5 0.1l1.5 2.3l1.5 0.8l1.5 0.1l1.5 -0.5l1.5 1.5l1.5 0.3l1.5 -0.8l1.5 2.4l1.5 0l1.5 0.8l1.5 -1.7l1.5 1.5l1.5 3l1.5 -1.8l1.5 2.6l1.5 -0.4l1 -0.5l0.5 -0.1l1.5 0.2l1.5 0.6l1.5 -1.2l1.5 3.6l1.5 1.5l1.5 -1.2l1.5 0.5l1.5 -0.3l1.5 0.5l1.5 -0.2l1.5 1.5l1.5 -1.1l1.5 0.9l1.5 1.7l1.5 0.3l1.5 -1.3l1.5 -0.6l1.5 3.2l1.5 -1.8l1.5 0.7l0.5 0.4l1 1l1.5 -0.6l1.5 0.6l1.5 0.4l1.5 -0.2l1.5 2.1l1.5 -0.7l1.5 1.1l1.5 -0.1l1.5 1.8l1.5 1.5l1.5 -1.7l1.5 1l1.5 0.3l1.5 1.6l1.5 -1.1l1.5 1.7l1.5 -0.2l1.5 0.9l1.5 -0.4l1.5 0.4l1.5 1l1.5 1.6l1.5 -0.3l1.5 1.3l1.5 1.1l1.5 -1.9l1.5 0.7l1.5 0.8l1.5 0.3l1.5 1.4l1.5 -0.9l1.5 0.7l1.4 1.1l0.1 0.1l1.5 0.4l1.5 0.2l1.5 -0.9l1.5 1.1l1.5 1.1l1.5 0.3l1.5 0.4l1.5 -0.7l1.5 0.7l1.5 -0.4l1.5 1.6l1.5 -0.2l1.5 1.7l1.5 -0.4l1.5 1.4l1.5 1.1l1.5 -1.2l1.5 0.6l1.5 -0.8l1.5 1.1l1.5 -1l1.5 1.7l1.5 2.7l1.5 -0.9l1.5 0.9l1.5 -1l1.5 0.2l1.5 0.6l1.5 -0.2l1.5 1.1l1.3 0.5l0.2 -1.6l1.5 -0.2l1.5 1.7l1.5 0.2l1.5 -0.7l1.5 1.9l1.5 0.7l1.5 -0.3l1.5 -1.2l1.5 1.6l1.5 -0.6l1.5 1.8l1.5 -0.2l1.5 0.3l1.5 0.7l1.5 0.1l1.5 1.9l1.5 -2.8l1.5 1.5l1.5 0.8l1.5 0.2l1.5 -2.4l1.5 3.2l1.5 -0.8l1.5 0l1.5 2.6l1.5 -1.1l1.5 1l1.5 0.2l1.5 0.3l1.5 0.6l1.5 -0.3l1.5 1l1.5 -0.9l1.5 -0.6l1.5 2.2l1.5 -0.8l1.5 0.8l1.5 -1.4l1.5 -0.8l1.5 2.1l1.5 0.1l1.5 1.1l1.5 -2.1l1.5 0.4l1.5 1l1.5 0.9l1.5 -0.6l1.5 0.4l1.5 0.4l1.5 1.2l1.5 -0.5l1.5 -1.3l1.5 -0.9l1 -0.1l0.5 -10l1.5 -33.7l1.5 -42.3l1 -28.9l0.5 2l1.5 13.9l1.5 10.7l1.5 0.2l1.5 1l1.5 3.6l1.5 0.7l1.5 1.2l0.6 0.1l0.9 0.8l1.5 2.7l1.5 -0.8l1.5 1.6l1.5 0.8l1.5 1.2l1.5 -0.1l1.5 2.7l1.5 -0.3l1.5 1.3l1.5 -0.6l1.5 1.3l1.5 2.5l0.5 -1.4l1 -55.1l0.5 -28.2l1 12.8l1.5 19.3l0.8 8.9l0.7 0.6l1.5 2.9l1.5 2.1l1.5 0.4l1.5 3.9l1.3 -0.9l0.2 0.1l1.5 -0.3l1.5 1.1l1.5 0.8l1.5 3.1l1.5 -1.6l1.5 2.1l1.5 1.4l1.5 1.4l1.5 -1.3l1.5 2.5l1 -0.2l0.5 1.1l1.5 -0.7l1.5 1.9l1.5 0.7l1.5 -0.1l1.5 1.7l1.5 1l1.5 1.2l1.5 -0.7l1.5 0.7l1.5 1.8l1.5 0.7l1.5 0.2l1.5 -0.1l1.5 2l1.5 1.7l1.5 -0.9l1.5 1.9l1.5 -0.5l1.5 2.4l1.5 -1l1.5 2.6l1.5 -0.5l1.5 1.4l1.5 -0.8l1.5 -0.4l1.5 1l1.5 0.6l1.5 1.7l1.5 -0.1l1.5 1.4l1.5 0l1.5 0.2l1.5 0.5l1.5 0.6l1.5 1l1.5 1.1l1.5 -1l1.5 1.1l1.5 1.3l1.5 0.9l1.5 -1.2l1.5 0.2l1.5 1l1.5 2l1.5 -0.8l1.5 1.6l1.5 -0.4l1.5 1.1l1.1 0.3l0.4 -0.3l1.5 0l1.5 1.1l1.5 2.3l1.5 -2.2l1.5 2l1.5 -0.2l1.5 -0.2l1.5 1.6l1.5 1.1l1.5 -1.4l1.5 0.4l1.5 1.8l1.5 -1.1l1.5 2.6l1.5 0.5l1.5 -0.8l1.5 1.2l1.5 1.4l1.5 0.3l1.5 -1.7l1.5 0.8l1.5 1.7l1.5 1.3l1.5 0.8l1.5 -0.5l1.5 0l1.5 -0.2l1.5 1.7l1.5 -0.2l1.5 2l1.5 0.4l1.5 -0.5l1.5 -0.7l1.5 1.2l1.5 1.5l1.5 -0.1l1.5 0.6l1.5 -0.6l1.5 -1l1.5 2.7l1.5 1.5l1.5 -1.1l1.5 1.1l1.5 -1l1.5 3.1l1.5 1.3l1.5 -0.3l1.5 -1.4l1.5 1.5l1.5 0.7l1.5 0.7l1.5 -0.1l1.5 1.2l1.5 0.2l1.5 -0.6l1.5 0.6l1.5 2.6l1.5 -0.6l1.5 0.7l1.5 1.8l1.5 -1.7l1.5 1.9l1.5 0.4l1.5 -1.1l1.5 0.9l1.5 0.9l1.5 -1l1.5 0.3l1.5 1.2l1.5 1.9l1.5 -1l1.5 1.8l0.8 -2.3l0.7 1.3l1.5 1l1.5 1.1l1.5 0.2l1.5 0.6l1.5 0.2l1.5 -0.1l1.5 1.5l1.5 -0.2l1.5 -0.7l1.5 1.6l1.5 0.1l1.5 0l1.5 0.6l1.5 -0.4l1.5 0.1l1.5 -0.6l1.5 1.3l1.5 1.8l1.5 -2.8l1.5 2.3l1.5 1.3l1.5 0.5l1.5 -1.2l1.5 1.5l1.5 0.6l1.5 1l1.5 -0.5l1.5 -0.1l1.5 1.3l1.5 0.1l1.5 -0.6l1.5 1.2l1.5 0.6l1.5 0.1l1.5 0l1.4 0.7l0.1 0.1l1.5 0.8l1.5 -1.2l1.5 0.7l1.5 1.1l1.5 -0.6l1.5 -0.3l1.5 0l1.5 0.3l1.5 0.8l1.5 1.1l1.5 1l1.5 -0.1l1.5 0.2l1.5 0.6l1.5 -0.3l1.5 -0.8l1.5 1.3l1.5 0.3l1.5 1.8l1.5 -1.3l1.5 2.1l1.5 -1.4l1.5 -0.5l1.5 0.9l1.5 0.1l1.5 0.1l1.5 -0.1l1.5 2.5l1.5 -1.2l1.5 0l1.5 0.6l1.5 0.1l1.5 1.1l1.5 -0.7l1.5 1l1.5 -1.3l0.5 1.1l1 -0.1l1.5 0.5l1.5 -0.8l1.5 0.9l1.5 -0.4l1.5 2l1.5 1l1.5 -0.8l1.5 -0.9l1.5 1.1l1.5 1.3l1.5 -1.8l1.5 1.3l1.5 0.6l1.5 -0.2l1.5 0.8l1.5 0.4l1.5 0.1l0.8 0.5l0.7 0.1l1.5 -1.9l1.5 0.6l1.5 0.8l1.5 0.4l1.5 0.2l1.5 -1l1.5 -0.1l1.5 2.4l1.5 -1.3l1.5 0.2l1.5 1l1.5 -2.8l1.5 1.6l1.5 -0.4l1.5 0l1.5 1.2l1.5 -0.9l1.5 -0.8l1.5 0.4l1.5 0.1l1.5 1.9l1.5 -1.4l1.5 -0.5l1.5 0.7l1.5 -0.8l1.5 1.6l1.5 -0.2l1.5 0.3l1.5 0.6l1.5 -1.2l1.5 0.9l1.5 -2.1l1.5 2.3l1.5 1l1.5 -1.9l1.5 1.6l1.5 -1.7l1.5 0.6l1.5 0l1.5 -1.1l1.5 -0.3l1.5 1l1.5 0.2l1.5 0.6l1.5 -0.3l1.5 -1.4l1.5 2.2l1.5 -0.5l1.5 -1.6l1.5 1.2l1.5 0.9l1.5 0.9l1.5 -1.8l1.5 -0.3l1.5 1.4l1.5 -1l1.5 0.1l1.5 -1.1l1.5 0.5l0.5 1.2l1 1.2l1.5 -1.1l1.5 -0.4l1.5 -0.1l1.5 -0.6l1.5 0l1.5 1.5l1.5 0.8l1.5 -1.7l1.5 -0.5l1.5 -0.6l1.5 0.8l1.5 1.1l1.5 -1.9l1.5 1.3l1.5 1.4l1.5 0.5l1.5 -1.8l1.5 0.8l1.5 0.2l1.5 -0.2l1.5 -0.3l1.5 0l1.5 -0.1l1.5 -0.5l1.5 0.2l1.5 0l1.5 2.3l1.5 -1.7l1.5 1l1.5 -1.4l1.5 2l1.5 -0.2l1.5 -0.7l1.5 1.8l1.5 -1.4l1.5 0.8l1.5 -2.2l1.5 -1.2l1.5 2.4l1.5 -0.7l1.5 -0.4l1.5 -0.2l1.5 1.4l1.5 0.3l1.5 0.2l1.5 -0.8l1.5 -0.3l1.5 -0.7l1.5 0.3l1.5 1.7l1.5 -2.2l1.5 0.8l1.5 -0.1l1.5 -0.1l1.5 -0.3l1.5 0.7l1.5 0.8l1.5 -0.6l1.5 0.5l1.5 -0.8l1.5 -0.2l1.5 1.5l1.5 -0.7l1.5 -0.1l1.5 0.8l1.5 0.6l1.5 -1.1l1.5 0.7l1.5 -0.5l1.5 1l1.5 -2.3l1.5 0.2l1.5 0.7l1.5 -1.8l1.5 0.9l1.5 1.6l1.5 0.6l1.5 0.5l1.5 -1.5l1.5 0.7l1.5 -0.2l1.5 -0.4l1.5 1l1.5 -0.1l1.5 1l1.5 -1.3l1.5 -0.9l1.5 1.2l1.5 -0.7l1.5 0.6l0.4 0.3l1.1 -1.8l1.5 0.2l1.5 1.6l1.5 0.4l1.5 -1.1l1.5 0.5l1.5 0.6l1.5 -0.7l1.5 0.6l1.5 -0.1l1.5 1.2l1.5 -0.7l1.5 -0.7l1.5 1l1.5 -0.9l1.5 0.2l1.5 -0.8l1.5 0.7l1.5 0.7l1.5 -0.1l1.5 -0.2l1.5 -1.2l1.5 0.7l1.5 0.1l1.5 0l1.5 0l1.5 -1.1l1.5 2.6l1.5 -2.1l1.5 0.6l1.5 0.3l1.5 -0.8l1.5 0.7l1.5 1l1.5 -0.4l1.5 0.4l1.5 -1.3l1.5 0.7l1.5 -0.6l1.5 1l1.5 -0.4l1.5 0.3l1.5 0.7l1.5 0.3l1.5 -1.1l1.5 0.2l1.5 -1l1.5 0.5l1.5 0l1.5 0.7l1.5 1l1.5 -2.9l1.5 2.2l1.5 0.1l1.5 -0.4l1.5 -0.4l1.5 1l1.5 -1.4l1.5 0.1l1.5 1.3l1.5 -0.5l1.5 1.2l1.5 -1.6l1.5 -0.9l1.5 1l1.5 0.4l1.5 -1.5l1.5 1.4l1.5 0.1l1.5 0.4l1.5 0.4l1.5 -0.3l1.5 -0.7l1.5 -0.3l1.5 1.6l1.5 -0.5l1.5 1l1.5 0.4l1.5 -1.4l1.5 0.2l1.5 1.5l1.5 -0.7l1.5 -1.1l1.5 0.8l1.5 -0.2l1.5 1.4l1.5 -2.1l1.5 0.4l1.5 1.1l1.5 -0.1l1.5 -0.6l1.5 -0.7l1.5 -0.4l1.5 -1.4l1.5 2.6l1.5 -0.2l1.5 -0.1l1.5 -0.9l1.5 -0.3l1.5 1.2l1.5 0.1l1.5 1.5l1.5 0.9l1.5 -2.9l1.5 0.4l1.5 1.2l1.5 0.1l1.5 -0.1l1.5 -0.8l0.5 -0.3l1 -1.5l0.5 -1.4l1 -6.1l1.5 -9.9l1.5 -8.3l1.5 -9.7l1.5 -10.8l1.5 -11.3l1 -5.5l0.5 -6l1.5 -15.6l1.5 -18.6l0.7 -6.8l0.8 13.2l0.5 9.1l1 0l1.5 3.3l1.5 0.3l1.5 0.8l1.5 1.2l1.5 1" stroke="#97bbf5" stroke-width="1.5" fill="none" stroke-linejoin="round"/>
<path d="M34 258.8l1 0.8l1 1l1 3.3l1 -0.7l1 0.9l1 0.6l1 -2.3l1 -0.3l1 -0.7l1 -6.7l1 -2.2l1 2l1 1.1l1 2.8l1 0.3l1 1.3l1 -3.6l1 -3.2l1 -1.1l1 -3.9l1 -1.6l1 2l1 -1.2l1 -1.6l1 -1.3l1 -2.3l1 -2.3l1 1.2l1 -0.7l1 -1.7l1 5.7l1 -3.1l1 -0.3l1 0.2l1 0l1 -1.2l1 1.2l1 -2.4l1 1.8l1 -2l1 0.4l1 0.3l1 -1.1l1 -2.1l1 -1.9l1 -0.2l1 1.1l1 -0.2l1 -1l1 -1.1l1 -0.4l1 -4.4l1 -0.2l1 0.2l1 -2.6l1 0.9l1 -2.2l1 -1.4l1 0.1l1 2.5l1 -0.8l1 2.4l1 -0.1l1 4.4l1 -7.1l1 -1.9l1 -5.7l1 -4.1l1 -2.1l1 -4.2l1 -7.7l1 -6.6l1 -5.8l1 -2.2l0.7 5.3l0.3 -9.2l1 -1.8l1 -15.5l1 0.1l1 10.6l1 0.6l1 -2.7l1 4.6l1 -9.7l0.4 -5l0.6 6l1 -10.1l1 9.1l1 -1.4l1 -3.1l1 4.2l1 -1.8l1 -2.3l1 5.5l1 -12l1 -6.4l1 13.9l1 -10.7l1 21.3l1 -8.2l1 -1.3l1 2.8l0.8 -16.3l0.2 -1.5l1 5l1 -5l1 1.1l1 -0.9l1 -1.9l1 -3.8l1 -6.4l1 -3.7l0.4 12.3l0.6 -1.1l1 -8.4l1 -3.2l1 10.8l1 8.5l1 -1l1 -12.4l1 -1.2l1 7.6l1 -6.7l1 -2.3l1 16.3l1 -0.6l1 8.5l1 -16.6l1 0l1 2.7l0.8 -4.5l0.2 4.7l1 2.7l1 0l1 -0.4l1 2.1l1 2.4l1 6.7l1 5.4l1 7.4l1 15.2l1 -12.8l1 -1.9l1 8.6l1 6.1l1 -6.6l1 4.2l1 6.3l1 -12.9l1 6.5l1 10.7l1 0.6l1 0.8l1 -4.6l1 11.5l1 -13.7l1 2.8l0.9 5.9l0.1 -7.8l1 6.2l1 -12.5l1 -19.8l1 -25.2l1 -2l1 8.6l1 4.5l0.3 4.2l0.7 0.1l1 -7.1l1 -4.3l1 -1.9l1 -13.8l1 -3.7l1 -0.7l1 5.3l1 4.8l1 0.4l1 4.7l1 -2.1l1 4l1 4.1l1 -2.4l1 2.2l1 -0.3l1 1.6l1 -2.1l1 3.3l1 0l1 -1.7l1 5.9l1 2.3l1 -1.6l1 0.8l1 -1.7l1 5.2l1 -1l1 5.1l0.6 -0.3l0.4 -1.2l1 1.7l1 -2.1l1 -1.5l1 1.7l1 0l1 2.4l1 -0.1l1 -0.5l1 1.5l1 0.7l1 4l1 -2.4l1 0.6l1 2.7l0.5 -3l0.5 1.5l1 1.7l1 1.3l1 -3l1 1.7l1 -0.3l1 0.1l1 -1.2l1 1.5l1 0.7l1 0.4l1 -1.5l1 0.6l1 0.4l1 -0.1l0.4 -0.1l0.6 2.1l1 1.7l1 1.6l1 0.1l1 0.5l1 0.7l1 -1.2l1 1.5l1 -1l0.3 1.5l0.7 -64.7l0.2 -15.9l0.8 13.1l1 12.3l0.3 3.7l0.7 2.1l1 0.5l1 2.7l1 -0.6l1 3.9l1 1.5l1 -0.5l1 0.2l1 2.6l1 -0.8l1 1.7l1 0.1l1 1.8l1 -0.2l1 -1.4l1 1.6l1 -0.2l1 2.3l1 0.2l1 -0.8l1 0.7l1 -0.7l1 0.3l1 2.2l1 1.1l1 -0.3l1 3.2l1 -0.2l1 2l1 -2.7l1 1.6l1 1.2l1 0.6l1 0l1 -0.7l1 1.2l1 -0.3l1 2.6l1 -0.8l1 1.8l1 1.4l1 0.8l1 -0.2l1 -0.6l1 -2l1 2.1l1 -0.6l1 2.4l1 -2l1 2l1 -1.5l1 2.4l1 0.4l1 0.7l1 1.1l1 -0.1l1 1.5l1 -0.1l1 -0.4l1 0.3l1 2.8l1 0.3l1 -0.4l1 -0.2l1 1.3l1 0.9l1 1.4l0.3 0l0.7 -35.2l0.8 -40.8l0.2 1.6l1 14.8l1 15.4l0.7 9.9l0.3 1.3l1 1.1l1 -0.2l1 -0.7l1 2.3l1 1l1 -0.2l1 0.2l1 -1l1 1.7l1 0.4l1 -0.4l1 1.8l1 -1.8l1 3.9l1 -2.8l1 3l1 0.3l1 0.6l1 0.9l1 -0.2l0.6 1.4l0.4 -2.3l1 3l1 0.7l1 -1l1 -0.5l1 2.2l1 1.1l1 0.6l1 1.4l1 -0.7l1 2.2l1 -1.1l1 0.9l1 1.3l1 0.9l1 -1.5l1 1.9l1 0.9l1 0l1 1.5l1 0.4l1 -0.5l1 0.1l1 0.8l1 2.2l1 -0.6l1 -1.2l1 0l1 0.7l1 3.2l1 -2.2l1 1.4l1 1.5l1 -0.4l1 -0.7l1 0.1l1 2l1 0.4l1 -0.5l1 0.5l1 1.1l1 -0.5l1.5 1.1l1.5 0.2l1.5 0.2l1.5 1.9l1.5 -1l1.5 1.7l1.5 -0.9l1.5 2.3l1.5 -1.9l1.5 0.9l1.5 0.6l1.5 2.6l1.5 -1.1l1.5 1.6l1.5 -0.1l1.5 -0.9l1.5 1.9l1.5 1.2l1.5 -0.4l1.5 1.6l1.5 0.2l1.5 -0.4l1.5 0.4l1.5 0.2l1 3.1l0.5 -0.6l1.5 -0.7l1.5 0.9l1.5 0.4l1.5 0.6l1.5 0.3l1.5 0.3l1.5 0.4l1.5 -0.1l1.5 0.4l1.5 2.3l1.5 -0.3l1.5 0.5l1.5 0.7l1.5 -1.2l1.5 0.6l1.5 1.2l1.5 0.2l1.5 0.1l1.5 0.1l1.5 2.1l1.5 0.2l1.5 -1.1l1.5 0.6l1.5 1.1l1.5 0l1.5 -0.7l1.5 1.8l1.5 -0.9l1.5 1.1l0.7 -0.6l0.8 1.8l1.5 0.9l1.5 0.3l1.5 0.3l1.5 0.9l1.5 -0.5l1.5 2.2l1.5 -2.4l1.5 0.2l1.5 2.7l1.5 0.2l1.5 -1.6l1.5 0.9l1.5 1.5l1.5 -0.9l1.5 -0.1l1.5 2.2l1.5 -0.8l1.5 0.7l1.5 0.2l1.5 1.2l1.5 -0.3l1.5 1.1l1.5 0.4l1.5 -0.1l1.5 1.8l1.5 -1l1.5 1.5l1.5 2.1l1.5 -1l0.3 0.1l1.2 0.8l1.5 0.7l1.5 1.1l1.5 -1.5l1.5 -0.6l1.5 1.1l1.5 -0.2l1.5 -0.1l1.5 1.3l1.5 -0.3l1.5 1.7l1.5 0.4l1.5 0.5l1.5 -0.9l1.5 0.1l1.5 1.5l1.5 -1.6l1.5 1.3l1.5 0.3l1.5 0.7l1.5 1.4l1.5 0.2l1.5 -0.3l1.5 0.8l1.5 0.2l1.5 0l1.5 1.1l1.5 0.6l1.5 -0.9l1.5 -0.1l1.5 0.7l1.5 -0.3l1.5 1.5l1.5 -0.7l1.5 -0.2l1.5 1.2l1.5 0.7l1.5 0.9l1.5 -0.4l1.5 0l1.5 0.2l1.5 0.1l1.5 0.5l1.5 0.9l1.5 0.2l1.5 0l1.5 -1.6l1.5 1.9l1.5 1.7l1.5 -1.5l1.5 1.5l1.5 -0.6l0.5 1.3l1 -0.5l1.5 0.2l1.5 0.3l1.5 0.6l1.5 -1.4l1.5 0.4l1.5 0.3l1.5 1.5l1.5 -2.6l1.5 2.5l1.5 -0.9l1.5 0.7l1.5 -0.8l1.5 1l1.5 0.6l0.3 -1.7l1.2 2.1l1.5 -1l1.5 0.6l1.5 -1.5l1.5 1.2l1.5 -0.4l1.5 1.1l1.5 -2.4l1.5 1.1l1.5 0.7l1.5 0.4l1.5 1l1.5 -2.3l1.5 1.8l1.5 -1.2l1.5 -0.5l1.5 1l1.5 -0.3l1.5 -0.4l1.5 0.8l1.5 -1.7l1.5 1.5l1.5 -0.6l1.5 0.7l1.5 0.2l1.5 -0.1l1.5 0.4l1.5 -1.2l1.5 0.7l1.5 -0.1l1.5 1.9l1.5 -1.5l1.5 -1.2l1.5 1.2l1.5 1.5l1.5 -0.9l1.5 -1.4l1.5 2.8l1.5 -0.6l1.5 -0.3l1.5 0.5l1.5 -2.6l1.5 1.5l1.5 -0.5l1.5 0.4l1.5 -1.8l1.5 2.3l1.5 -1.4l1.5 1.7l1.5 0.9l1.5 -0.3l1.5 0l1.5 -1.2l1.5 0.4l1.5 0.7l1.5 -0.6l1.5 0.6l1.5 -1.5l1.5 0.6l1.5 -0.5l1.5 -0.5l1.5 1.5l1.5 -0.1l1.5 0.3l1.5 -0.6l1.5 1.5l1.5 1.1l1.5 -1.1l1.5 -2l1.5 1l1.5 1.4l1.5 -0.4l1.5 -1.4l1.5 0.5l1.5 0.5l1.5 -0.3l1.5 0.8l1.5 1.6l1.5 -0.5l1.5 0.8l1.5 -0.8l1.5 -3.3l1.5 2.5l1.5 -1.3l1.5 1.5l1.5 1.2l1.5 -0.9l1.5 -2.3l1.5 1.7l1.5 -0.4l1.5 0.9l1.5 -1.8l1.5 0.7l1.5 0.1l1.5 0.2l1.5 0.3l1.5 0.7l1.5 -0.5l1.5 1.2l1.5 -1l1.5 1.6l1.5 -1.1l1.5 -0.6l1.5 -1.2l1.5 0.4l1.5 -0.3l1.5 1.2l1.5 -0.8l1.5 0.6l1.5 0.8l1.5 0.1l1.5 0.5l1.5 -1.3l1.5 -0.2l1.5 0.2l1.5 1.3l1.5 -1.3l1.5 -0.6l1.5 2l1.5 -0.8l1.5 0.5l1.5 -0.7l1.5 1.1l1.5 -0.8l1.5 -0.5l1.5 0.3l1.5 1.6l1.5 -1.5l1.5 1l1.5 1.3l1.5 -0.5l1.5 0l1.5 -1.8l1.5 0.8l1.5 0.8l1.5 -0.4l1.5 -1.9l1.5 2.5l1.5 -0.2l1.5 -0.3l1.5 0.6l1.5 -1.1l1.5 2.1l1.5 -0.3l1.5 -0.7l1.5 0l1.5 -2l1.5 1.1l1.5 0.4l1.5 0.8l1.5 -1.4l1.5 1.1l1.5 0.9l1.5 -1.7l1.5 2l1.5 -1l1.5 -0.9l1.5 -0.3l1.5 1.9l1.5 -1.5l1.5 -0.1l1.5 0.6l1.5 1.1l1.5 0.2l1.5 -1.2l1.5 -1.2l1.5 2.9l1.5 -0.9l1.5 -0.2l1.5 0.5l1.5 -1.2l0.8 2.6l0.7 -0.9l1.5 1.4l1.5 -2.7l1.5 0.5l1.5 -0.7l1.5 2.1l1.5 -1.7l1.5 0.5l1.5 -0.8l1.5 -0.4l1.5 0.3l1.5 0.8l1.5 -0.5l1.5 0.1l1.5 0.6l1.5 -0.4l1.5 0.4l1.5 -0.9l1.5 -0.3l1.5 0.2l1.5 0.1l1.5 1.4l1.5 -2l1.5 0.2l1.5 3l1.5 -2.3l1.5 1.2l1.5 -1.6l1.5 0.5l1.5 0.2l1.5 -0.1l1.5 0.8l1.5 -0.2l1.5 0.9l1.5 -1l1.5 0.6l1.5 -0.9l1.5 1.6l1.5 -1.9l1.5 -0.1l1.5 0.7l1.5 0.1l1.5 -0.7l1.5 0.1l1.5 0.5l1.5 0.8l1.5 1.1l1.5 -1.9l1.5 -0.1l1.5 0.9l1.5 0.6l1.5 0.5l1.5 -0.4l1.5 -0.9l1.5 1.3l1.5 -2.3l1.5 1.8l1.5 0.9l1.5 -0.8l1.5 1l1.5 -2.3l1.5 0.5l1.5 -0.3l1.5 0.8l1.5 0.6l1.5 -0.7l1.5 0.9l1.5 0.2l1.5 -0.2l1.5 -1.2l1.5 1.2l1.5 0.5l1.5 -1.3l1.5 -0.9l1.5 1.9l1.5 0.4l1.5 -1.3l1.5 1.2l1.5 -1.7l1.5 2.4l1.5 -1.3l1.5 1.1l1.5 -2l1.5 1.2l1.5 -0.9l1.5 -1l1.5 0.1l1.5 1.7l1.5 -0.7l1.5 1.4l1.5 -0.1l1.5 0.6l1.5 -1.2l1.5 -0.5l1.5 0l1.5 0.3l1.5 -0.9l1.5 1.2l1.5 -0.3l1.5 0.1l1.5 1.2l1.5 -0.2l1.5 -2.1l1.5 0.6l1.5 2.7l1.5 -0.3l1.5 -1l1.5 -0.8l1.5 0l1.5 0.9l1.5 0.7l1.5 -1.4l1.5 1l1.5 0l1.5 -0.9l1.5 1.5l1.5 -2.5l1.5 1.2l1.5 -0.4l1.5 1.6l1 -1.6l0.5 -1.7l1.5 -2.6l1.5 -21.9l1.5 -19.1l0.5 -8.3l1 -21.8l1.5 -35.1l0.2 -4.6l1.3 23l0.1 2l1.4 2.9l1.5 0.7l1.2 3.2l0.3 -1.5l1.5 1.8l1.5 0.1l1.5 3l1.5 0.3l1.5 0.3l0.4 0.4l1.1 -34.2l0.2 -4.7l1.3 3.8l1.5 7l1.5 1.8l1.5 -1.4l1.5 4.3l1.5 0.5l1.5 1.6l1.5 -0.5l1.5 0.6l1.5 2.2l1.5 0.9l1.5 1.2l1.5 -0.3l1.5 3.6l1.5 -0.7l1.5 0.5l1.5 0.8l1.5 -0.8l1.5 3.1l1.5 -0.1l1.5 0.4l1.5 1.7l1.5 1.5l1.5 2.2l1.5 0.7l1.5 -1.5l1.5 2.1l1.5 -0.2l1.5 1l1.5 -0.1l1.5 -0.1l1.5 -0.1l1.5 2.1l1.5 -0.4l1 0.5l0.5 1.3l1.5 1.7l1.5 -0.1l1.5 -1.5l1.5 2.2l1.5 -2.6l1.5 2.5l1.5 0.2l1.5 0.1l1.5 1l1.5 -0.7l1.5 0.7l1.5 -0.2l1.5 0.9l1.5 0.2l1.5 0.8l1.5 0.8l1.5 -1.1l1.5 2l1.5 0.2l1.5 0l1.5 0.6l1.5 1.4l1.5 -1.5l0.5 1.5l1 0.2l1.5 1.1l1.5 0.7l1.5 1.8l1.5 -1.1l1.5 1.4l1.5 -1.3l1.5 0.3l1.5 0.8l1.5 -0.6l1.5 2.9l1.5 -0.2l1.5 0.2l1.5 1.4l1.5 1.6l1.5 -1.3l1.5 1.2l1.5 1.4l1.5 0.8l1.5 -0.2l1.5 -0.4l1.5 1l1 0.2l0.5 -0.5l1.5 0.3l1.5 1.5l1.5 -0.9l1.5 0.8l1.5 0.4l1.5 1.9l1.5 -1l1.5 0.4l1.5 -0.3l1.5 0.9l1.5 0.7l1.5 1.7l1.5 -0.4l1.5 -0.3l1.5 -0.6l1.5 2.2l1.5 -2.6l1.5 3.5l1.5 -1l1.5 -0.4l0.5 1.3l1 0.2l1.5 0.3l1.5 -0.3l1.5 -0.5l1.5 2.9l1.5 0l1.5 -0.2l1.5 1.1l1.5 1.6l1.5 -0.7l1.5 -1.1l1.5 1.5l1.5 1.7l1.5 0.4l1.5 -0.9l1.5 1.1l1.5 -0.3l1.5 1.3l1.5 0.2l1.5 1.1l1.5 0.1l1.5 0.6l1.5 0.8l1.5 0.8l1.5 0.8l1.5 -1.8l1.5 1.9l1.5 1.4l1.5 -1l1.5 1.4l1.5 0.3l1.5 0.5l1.5 0.2l1.4 -0.5l0.1 1.3l1.5 -1.8l1.5 2.4l1.5 -0.8l1.5 1.1l1.5 1.5l1.5 -0.5l1.5 0.7l1.5 0.6l1.5 -0.4l1.5 1l1.5 -1.6l1.5 1.4l1.5 0.5l1.5 1l1.5 -0.6l1.5 -0.6l1.5 1.1l1.5 1.9l1.5 -0.8l1.5 0.6l1.5 0.1l1.5 0.4l1.5 -0.1l1.5 1.1l1.5 0.6l1.5 -0.5l1.5 1.8l1.5 -0.3l1.5 1.4l1.5 -0.7l1.3 0.9l0.2 -1.6l1.5 1.7l1.5 -0.2l1.5 0.2l1.5 -0.3l1.5 2.1l1.5 -0.4l1.5 1l1.5 0.4l1.5 -1.2l1.5 -0.4l1.5 1.9l1.5 0.1l1.5 -0.3l1.5 1.2l1.5 0l1.5 -0.1l1.5 0.8l1.5 -0.2l1.5 0.7l1.5 1.2l1.5 -0.2l1.5 0l1.5 1l1.5 -0.7l1.5 0.3l1.5 0.2l1.5 -1.1l1.5 1.5l1.5 -0.8l1.5 2.5l1.5 -0.5l1.5 -0.2l1.5 1.7l1.5 -0.2l1.5 -0.8l1.5 1.5l1.5 -0.3l1.5 0l1.5 0.6l1.5 -1.9l1.5 0.4l1.5 0.8l1.5 0.3l1.5 -0.8l1.5 0.4l1.5 0.9l1.5 1.7l1.5 -1l1.5 -1.3l1.5 2.2l1.5 -0.4l1.5 0.1l1.5 -0.7l1 -0.2l0.5 -11.1l1.5 -31.2l1.5 -44l1 -30.4l0.5 4.4l1.5 10.2l1.5 11.7l1.5 2.3l1.5 3l1.5 -1.1l1.5 4.2l1.5 1.2l0.6 -1.1l0.9 1l1.5 2.8l1.5 1.2l1.5 -0.3l1.5 0.1l1.5 0.9l1.5 -0.1l1.5 0.9l1.5 0.6l1.5 1.5l1.5 0.7l1.5 1.4l1.5 0.5l0.5 1.6l1 -56.7l0.5 -25.7l1 11.6l1.5 19l0.8 8.6l0.7 2.2l1.5 -0.4l1.5 3.3l1.5 -0.6l1.5 2.8l1.3 1.1l0.2 -0.3l1.5 1.5l1.5 0.8l1.5 1.4l1.5 1.1l1.5 -0.7l1.5 1.8l1.5 1.3l1.5 -0.6l1.5 2.1l1.5 1l1 1l0.5 -0.5l1.5 0.1l1.5 0.9l1.5 0.7l1.5 2l1.5 0.7l1.5 0.2l1.5 0l1.5 2l1.5 -1.1l1.5 2.9l1.5 -0.4l1.5 1.2l1.5 0l1.5 2.4l1.5 0.4l1.5 1.4l1.5 -0.5l1.5 2.7l1.5 -3l1.5 2.5l1.5 0.6l1.5 0.9l1.5 -0.6l1.5 1.3l1.5 0l1.5 1.5l1.5 0.3l1.5 -0.2l1.5 2l1.5 -1.6l1.5 1.6l1.5 1.2l1.5 -1.6l1.5 1.4l1.5 3l1.5 0.1l1.5 -1.1l1.5 1.2l1.5 0.5l1.5 2.4l1.5 -1.9l1.5 0.9l1.5 0.2l1.5 -0.2l1.5 0.9l1.5 0.6l1.5 0.5l1.5 0.9l1.1 -0.1l0.4 0.1l1.5 1.2l1.5 0.8l1.5 1.2l1.5 0.9l1.5 -1.4l1.5 0.8l1.5 0.9l1.5 0.7l1.5 -0.4l1.5 0.3l1.5 3.1l1.5 -1.9l1.5 -1l1.5 1.2l1.5 1.3l1.5 0l1.5 0l1.5 1.1l1.5 3.2l1.5 -2l1.5 2.2l1.5 -0.5l1.5 1.2l1.5 -0.6l1.5 1.2l1.5 -0.4l1.5 0.5l1.5 1.8l1.5 -1.2l1.5 0.1l1.5 2.4l1.5 0.3l1.5 -0.3l1.5 1.1l1.5 -0.1l1.5 -0.4l1.5 0.9l1.5 1.3l1.5 -1.1l1.5 3.2l1.5 -1.5l1.5 -0.1l1.5 2.6l1.5 -0.3l1.5 0.7l1.5 1.7l1.5 -0.9l1.5 0.4l1.5 2.1l1.5 -1l1.5 -0.1l1.5 0.9l1.5 0.9l1.5 0.8l1.5 -1.3l1.5 0.3l1.5 1.4l1.5 0.8l1.5 0l1.5 0.4l1.5 -0.1l1.5 2.5l1.5 0l1.5 -0.4l1.5 2.1l1.5 -0.5l1.5 -0.8l1.5 1.8l1.5 1l1.5 0.3l1.5 2.3l1.5 -1.7l0.8 -0.3l0.7 1.1l1.5 0.1l1.5 0.7l1.5 -0.8l1.5 -0.3l1.5 0.5l1.5 2.2l1.5 -0.5l1.5 0.2l1.5 1.2l1.5 -1.1l1.5 1.5l1.5 -1.2l1.5 1.8l1.5 0.2l1.5 1.6l1.5 0.4l1.5 -0.3l1.5 0.4l1.5 -1l1.5 1.2l1.5 1.2l1.5 1.9l1.5 -0.3l1.5 0.3l1.5 -1.2l1.5 -0.4l1.5 0l1.5 1.2l1.5 -0.2l1.5 2.4l1.5 -0.8l1.5 -0.6l1.5 0.8l1.5 2.6l1.5 -0.3l1.4 0.1l0.1 -1l1.5 0.4l1.5 2.2l1.5 -0.1l1.5 -0.3l1.5 -1.4l1.5 1.5l1.5 0.9l1.5 -1.5l1.5 -0.6l1.5 0.9l1.5 1.1l1.5 -0.7l1.5 1.8l1.5 -0.2l1.5 1l1.5 -0.6l1.5 0.7l1.5 0.6l1.5 1l1.5 0.3l1.5 -1l1.5 -0.8l1.5 -0.6l1.5 1.4l1.5 -0.2l1.5 1.5l1.5 0.5l1.5 1l1.5 -1.6l1.5 2.2l1.5 1.9l1.5 -2.5l1.5 -0.3l1.5 1.4l1.5 -0.7l1.5 0.5l0.5 1l1 0.4l1.5 0.7l1.5 -1.6l1.5 2.3l1.5 -1l1.5 0.8l1.5 0.7l1.5 -0.4l1.5 1.7l1.5 -1.6l1.5 -0.3l1.5 -0.1l1.5 2.7l1.5 -0.8l1.5 -0.4l1.5 0.4l1.5 1.8l1.5 -0.6l0.8 0.8l0.7 -0.5l1.5 0.8l1.5 -0.9l1.5 1.8l1.5 -1.5l1.5 -0.4l1.5 -0.2l1.5 2.3l1.5 -1.8l1.5 0.4l1.5 -1.9l1.5 -0.3l1.5 1.6l1.5 -0.2l1.5 -1.2l1.5 1.5l1.5 0.5l1.5 -1.3l1.5 1.3l1.5 0.8l1.5 -1.3l1.5 0.5l1.5 0.1l1.5 0.7l1.5 0.7l1.5 -0.3l1.5 -0.9l1.5 1.1l1.5 -1l1.5 1.2l1.5 -1.5l1.5 0.2l1.5 1.1l1.5 -0.1l1.5 -0.5l1.5 0.8l1.5 -0.8l1.5 -0.5l1.5 0l1.5 -0.2l1.5 0.3l1.5 -0.7l1.5 0l1.5 0l1.5 0l1.5 1.6l1.5 -1.4l1.5 0.8l1.5 -1.3l1.5 1.3l1.5 0.3l1.5 -1.1l1.5 0.4l1.5 0.6l1.5 -0.9l1.5 0.5l1.5 0.6l1.5 0.1l1.5 0.1l1.5 -1.2l0.5 1.8l1 -0.3l1.5 -0.3l1.5 -0.4l1.5 0.3l1.5 2.2l1.5 -0.5l1.5 -1.4l1.5 -0.6l1.5 1.2l1.5 -0.8l1.5 0.7l1.5 1.2l1.5 -1.8l1.5 0.8l1.5 -2.5l1.5 1.8l1.5 0.3l1.5 1.2l1.5 -1.1l1.5 0.2l1.5 0.8l1.5 -0.3l1.5 -0.4l1.5 -1.4l1.5 2.1l1.5 -0.1l1.5 -0.4l1.5 -0.4l1.5 -0.5l1.5 1l1.5 -0.5l1.5 0.1l1.5 -0.2l1.5 -0.6l1.5 1.5l1.5 -0.7l1.5 0.2l1.5 0.5l1.5 -0.6l1.5 0l1.5 -0.3l1.5 0.9l1.5 0.8l1.5 0.3l1.5 0l1.5 0l1.5 -0.3l1.5 -0.5l1.5 0.2l1.5 0l1.5 0l1.5 -0.8l1.5 1l1.5 0.4l1.5 -1l1.5 -1l1.5 1.1l1.5 1.7l1.5 -1.8l1.5 1.8l1.5 -1.1l1.5 0.3l1.5 -0.1l1.5 -0.1l1.5 0.2l1.5 -0.8l1.5 -0.5l1.5 -0.7l1.5 0.4l1.5 2.1l1.5 -0.6l1.5 1.3l1.5 -1.8l1.5 0.1l1.5 0.6l1.5 -0.6l1.5 -0.8l1.5 2l1.5 -0.9l1.5 0l1.5 0.3l1.5 0.2l1.5 -0.5l1.5 0.2l1.5 0.8l1.5 -1.2l1.5 1.1l1.5 -0.2l1.5 0.2l1.5 0.6l1.5 -1.1l0.4 1.5l1.1 0.3l1.5 -2.9l1.5 1.1l1.5 2l1.5 -0.3l1.5 -2.4l1.5 1.5l1.5 1.3l1.5 -0.5l1.5 -0.6l1.5 0.1l1.5 -0.9l1.5 -0.4l1.5 1.5l1.5 -1.2l1.5 1.9l1.5 -0.4l1.5 0.2l1.5 0.2l1.5 -0.3l1.5 -0.8l1.5 0.4l1.5 -0.9l1.5 2.3l1.5 -1.7l1.5 -1.5l1.5 2.3l1.5 -1l1.5 0.8l1.5 0.4l1.5 -0.6l1.5 -0.5l1.5 0.4l1.5 0.6l1.5 0l1.5 -0.9l1.5 -0.6l1.5 1.6l1.5 0.4l1.5 -0.5l1.5 -1l1.5 2.3l1.5 -0.4l1.5 -0.7l1.5 -1.1l1.5 0.3l1.5 1.5l1.5 -2.3l1.5 0.6l1.5 3.3l1.5 -3l1.5 0.5l1.5 0l1.5 0.7l1.5 1.1l1.5 -0.7l1.5 -0.9l1.5 1.2l1.5 -1.8l1.5 1.7l1.5 0.2l1.5 0.7l1.5 -2.2l1.5 0.8l1.5 -1.1l1.5 1.9l1.5 -1.5l1.5 0.6l1.5 0.4l1.5 0.9l1.5 -1.6l1.5 0.2l1.5 -0.4l1.5 1.3l1.5 -1.7l1.5 1.5l1.5 -0.2l1.5 1.1l1.5 -0.7l1.5 0.3l1.5 -0.1l1.5 -0.9l1.5 2.2l1.5 -0.2l1.5 -1l1.5 0.5l1.5 -1.7l1.5 -0.2l1.5 0.9l1.5 0.4l1.5 -0.2l1.5 -0.6l1.5 0.8l1.5 -1.5l1.5 2.3l1.5 -0.5l1.5 0.7l1.5 -1.8l1.5 1.2l1.5 1.6l1.5 -2.2l1.5 1.3l1.5 -1.5l1.5 0.6l1.5 -0.6l1.5 0.5l1.5 -0.5l1.5 3.5l1.5 -3.4l0.5 1.9l1 -2.6l0.5 0.5l1 -7.9l1.5 -9.8l1.5 -10.5l1.5 -10.3l1.5 -9.1l1.5 -10l1 -6.3l0.5 -5.1l1.5 -18l1.5 -14.9l0.7 -9.3l0.8 12.7l0.5 8.7l1 1.8l1.5 1l1.5 1.1l1.5 0.4l1.5 0.5l1.5 2.4" stroke="#f78eb9" stroke-width="1.5" fill="none" stroke-linejoin="round"/>
<path d="M34 269.2l1 2.8l1 -2.3l1 -0.4l1 2.6l1 1.9l1 4.2l1 -4.7l1 -5.4l1 -2.3l1 -2.6l1 -0.9l1 1.4l1 0.1l1 3.4l1 1.1l1 1.6l1 -4.3l1 -3.8l1 -3.8l1 -0.2l1 -0.8l1 0.1l1 -3.3l1 -2.4l1 3.4l1 -1.1l1 -0.1l1 -1l1 -0.3l1 -0.8l1 -1.1l1 2.5l1 -2.8l1 -0.6l1 2.9l1 -1.2l1 0.2l1 0.6l1 0.4l1 -0.6l1 -1.2l1 -1.2l1 1.3l1 -4.3l1 -3l1 2.1l1 -3l1 2.7l1 0.9l1 -3l1 -1.3l1 2.3l1 -3.5l1 -1.6l1 -1.7l1 -0.3l1 1.9l1 -4l1 -2.3l1 0.2l1 3.6l1 2l1 1.9l1 0.2l1 -5l1 -3.7l1 -6.6l1 -6.5l1 -9.9l1 -5.4l1 -2.6l1 -0.8l1 -2.2l1 -6.4l0.7 6.9l0.3 -2.7l1 -8.7l1 7l1 -9.4l1 -1l1 1.4l1 0.9l1 4.9l1 -17.1l0.4 16.8l0.6 0.7l1 -1.4l1 15.2l1 -12.6l1 5.1l1 3.7l1 4.5l1 -14.7l1 -1.6l1 -1.3l1 9l1 -10.8l1 -22.5l1 22.9l1 4.3l1 -1.4l1 -11.7l0.8 11.2l0.2 4.4l1 4.6l1 -19.3l1 6.2l1 -11.2l1 -3.1l1 1.8l1 6l1 0.8l0.4 -9.2l0.6 10.8l1 1.1l1 2.2l1 0.6l1 18.2l1 -20.6l1 -8.2l1 1.9l1 -7.3l1 -2.7l1 8.7l1 2.2l1 -16.3l1 15l1 -16.8l1 6.5l1 -19.8l0.8 22l0.2 -17.7l1 10.2l1 11.7l1 7.1l1 0.9l1 13.7l1 -0.6l1 -9.5l1 9.5l1 -1.2l1 0.6l1 5.3l1 8.5l1 6.5l1 -3.5l1 0.9l1 -6.1l1 -8.8l1 16.3l1 4.9l1 -20.2l1 5.2l1 16.1l1 2.9l1 0.4l1 -1.3l0.9 -14.8l0.1 4.2l1 -7.7l1 -1.8l1 -29l1 -24.3l1 -2.8l1 0.3l1 8.8l0.3 1.7l0.7 -1.7l1 5l1 -3.5l1 -8.3l1 -7.2l1 -9l1 3.6l1 9.4l1 -3.5l1 -1l1 -0.9l1 2.5l1 -2.1l1 7.3l1 -1.1l1 4.6l1 -0.7l1 0.7l1 0.3l1 3.3l1 -3.4l1 8l1 -0.8l1 -0.1l1 4.6l1 -3.8l1 4.5l1 0l1 -0.8l1 0.3l0.6 2.3l0.4 -6.4l1 4.6l1 -1.2l1 3.7l1 -0.1l1 -1.7l1 1.7l1 -0.9l1 -2.1l1 0.5l1 0.6l1 -0.7l1 2.1l1 2.9l1 1.9l0.5 -0.1l0.5 1.2l1 -1.5l1 1.8l1 -1.7l1 1.8l1 -2.3l1 2.6l1 1.5l1 1.4l1 -1.6l1 3.2l1 -0.1l1 0.1l1 -0.3l1 0.8l0.4 0.1l0.6 1.6l1 -1.7l1 1.1l1 -0.4l1 2.4l1 0.2l1 -0.5l1 2.7l1 0.2l0.3 -0.3l0.7 -63.7l0.2 -17.4l0.8 11.7l1 13.7l0.3 3.3l0.7 1l1 1.3l1 2.7l1 1.3l1 1l1 0.6l1 1.5l1 2.3l1 -1l1 1.5l1 0.9l1 -0.6l1 0.8l1 1.2l1 0.7l1 1.2l1 -1.1l1 1.6l1 0.1l1 0.1l1 -1.7l1 0.7l1 1.3l1 0.5l1 2l1 -0.6l1 1.3l1 0.2l1 -1.5l1 2.8l1 0.4l1 2.3l1 -0.2l1 1.4l1 -0.5l1 1.4l1 0.6l1 -0.3l1 2.8l1 -0.8l1 1.1l1 0.7l1 -2l1 1.2l1 1.5l1 0.9l1 -0.4l1 0.3l1 0.4l1 -1l1 2.1l1 -1.1l1 2.4l1 -1.5l1 0.8l1 3.1l1 -1l1 1.8l1 0.1l1 1.3l1 0.7l1 -0.4l1 0.5l1 0.7l1 -0.2l1 -0.5l1 0.8l0.3 0.5l0.7 -35.7l0.8 -41.4l0.2 3.8l1 14.3l1 14.1l0.7 11.4l0.3 1.2l1 -2l1 2l1 1.3l1 -0.2l1 1.9l1 0.8l1 0l1 0.3l1 0.2l1 1.1l1 0.1l1 -0.4l1 1.4l1 0.3l1 0.3l1 1.3l1 1.7l1 -0.5l1 1.6l1 -0.2l0.6 0.4l0.4 -1.1l1 0.8l1 1.9l1 0.4l1 -0.6l1 0.2l1 0.8l1 2.1l1 -0.6l1 2.8l1 -2.4l1 2.1l1 -0.3l1 0l1 1.7l1 1l1 0l1 0.1l1 2.1l1 1l1 -0.3l1 -1l1 2.3l1 -0.2l1 0.9l1 1.5l1 -1l1 1.3l1 1.1l1 -2.8l1 3l1 -1.6l1 0.9l1 0.8l1 0.1l1 1.3l1 -0.5l1 0.6l1 1.2l1 -0.8l1 -1.2l1 2.3l1.5 -0.1l1.5 -0.1l1.5 3.3l1.5 -0.8l1.5 -0.2l1.5 0.7l1.5 -1.7l1.5 3.5l1.5 -1.1l1.5 2l1.5 -2l1.5 3.4l1.5 -0.3l1.5 -0.5l1.5 1.5l1.5 0.9l1.5 -0.4l1.5 2.5l1.5 -1.7l1.5 2.5l1.5 0.2l1.5 -1l1.5 -0.2l1.5 2l1 1.3l0.5 -1.5l1.5 0.5l1.5 -0.7l1.5 2.6l1.5 -0.1l1.5 0.3l1.5 -0.5l1.5 0.8l1.5 1.2l1.5 1l1.5 -1.3l1.5 2.3l1.5 0.1l1.5 -0.6l1.5 1.6l1.5 0.3l1.5 -1.3l1.5 2l1.5 -0.3l1.5 0.9l1.5 0.7l1.5 -0.3l1.5 0.1l1.5 1.2l1.5 0.1l1.5 0.9l1.5 0.8l1.5 0.3l1.5 -0.5l1.5 0.5l0.7 0.6l0.8 -0.3l1.5 0.5l1.5 1.9l1.5 0.7l1.5 -1.5l1.5 0.3l1.5 0.8l1.5 -1.1l1.5 3.4l1.5 -0.5l1.5 1.3l1.5 -0.6l1.5 -1.6l1.5 1.6l1.5 2.4l1.5 0l1.5 0.8l1.5 0.2l1.5 -0.7l1.5 -0.2l1.5 2.3l1.5 0.1l1.5 1.5l1.5 0.1l1.5 -1.3l1.5 1.3l1.5 0.5l1.5 0.9l1.5 -1l1.5 -0.4l0.3 2.5l1.2 -1.5l1.5 1.7l1.5 0.8l1.5 0.2l1.5 0.3l1.5 0.5l1.5 -1.7l1.5 1l1.5 1.2l1.5 1.1l1.5 -1l1.5 -0.3l1.5 1.4l1.5 2.1l1.5 -0.9l1.5 -1.6l1.5 0.8l1.5 1l1.5 0.8l1.5 0.1l1.5 1.2l1.5 -0.7l1.5 0.6l1.5 0.1l1.5 0.9l1.5 -0.5l1.5 1.1l1.5 0.3l1.5 -0.6l1.5 1.2l1.5 -0.1l1.5 0.2l1.5 0.1l1.5 0.5l1.5 0.4l1.5 -0.9l1.5 0.7l1.5 1.1l1.5 -0.3l1.5 -0.3l1.5 3.3l1.5 -1.5l1.5 -0.8l1.5 2l1.5 -0.4l1.5 0.4l1.5 0.2l1.5 0.1l1.5 1.1l1.5 -1l1.5 1.6l1.5 0.7l0.5 0l1 -0.2l1.5 -0.4l1.5 1l1.5 -0.2l1.5 -2.1l1.5 1.3l1.5 -0.6l1.5 0.7l1.5 2l1.5 -2l1.5 1.5l1.5 -1.2l1.5 -0.2l1.5 0.8l1.5 0.9l0.3 -0.3l1.2 -1.3l1.5 1.4l1.5 0.7l1.5 -0.5l1.5 -0.8l1.5 -0.4l1.5 0.5l1.5 1.3l1.5 0.3l1.5 1.1l1.5 -1.9l1.5 -0.6l1.5 -0.5l1.5 1.3l1.5 -1.2l1.5 0.5l1.5 -0.3l1.5 1.4l1.5 0.9l1.5 -1.3l1.5 0.9l1.5 -0.8l1.5 0.5l1.5 -1.1l1.5 0.3l1.5 0l1.5 0.8l1.5 -0.5l1.5 -0.6l1.5 0.9l1.5 0.9l1.5 -0.3l1.5 -0.8l1.5 -0.3l1.5 1l1.5 -1.7l1.5 2.9l1.5 -1l1.5 -0.3l1.5 0l1.5 1.2l1.5 -2.5l1.5 0.5l1.5 0.8l1.5 -0.2l1.5 0.9l1.5 -0.2l1.5 -0.7l1.5 0l1.5 2.6l1.5 -1.7l1.5 -0.4l1.5 0.2l1.5 0.2l1.5 0.7l1.5 -0.6l1.5 -1.2l1.5 2.5l1.5 -0.1l1.5 -1.2l1.5 -1.5l1.5 1.7l1.5 -0.1l1.5 -0.2l1.5 1.1l1.5 0.8l1.5 -1.3l1.5 -0.1l1.5 0.2l1.5 -0.1l1.5 -0.4l1.5 1.3l1.5 -0.4l1.5 0.1l1.5 -2.1l1.5 1.8l1.5 -0.6l1.5 -0.9l1.5 2.8l1.5 -2.3l1.5 0.3l1.5 -0.8l1.5 0.9l1.5 1.3l1.5 0.9l1.5 -0.4l1.5 -0.5l1.5 0.4l1.5 -1.1l1.5 0.2l1.5 -0.1l1.5 -0.4l1.5 1.9l1.5 -2.2l1.5 1.6l1.5 0l1.5 -1.3l1.5 0.3l1.5 1.4l1.5 -1.2l1.5 0.6l1.5 -0.7l1.5 0.2l1.5 0l1.5 0.6l1.5 1.3l1.5 -1.6l1.5 0.4l1.5 1.1l1.5 -0.1l1.5 0.2l1.5 -0.3l1.5 -2.1l1.5 2.9l1.5 -1.4l1.5 0.4l1.5 -1l1.5 1.6l1.5 -0.6l1.5 -1.1l1.5 1.4l1.5 0.4l1.5 -0.4l1.5 -1.9l1.5 2.4l1.5 0.1l1.5 1.6l1.5 -1.2l1.5 1.1l1.5 -1.1l1.5 -1.5l1.5 -0.2l1.5 2.4l1.5 -0.6l1.5 -0.4l1.5 0.8l1.5 -1.2l1.5 0.1l1.5 0l1.5 0l1.5 -0.2l1.5 0.6l1.5 0.7l1.5 0.7l1.5 -1l1.5 0.4l1.5 0.2l1.5 -1.2l1.5 -0.1l1.5 0.9l1.5 -0.3l1.5 -0.5l1.5 0.3l1.5 -0.9l1.5 2.3l1.5 -0.3l1.5 0.7l1.5 -2.7l1.5 2l1.5 0.1l1.5 -0.8l1.5 1.2l1.5 -0.7l1.5 0.5l1.5 -0.1l1.5 0l1.5 0.1l1.5 0.2l1.5 0.9l1.5 -1.3l1.5 -0.7l0.8 0l0.7 1.2l1.5 0.3l1.5 -0.7l1.5 -0.3l1.5 0.5l1.5 -1.2l1.5 0.7l1.5 1l1.5 0l1.5 1.3l1.5 -1.9l1.5 1.2l1.5 0.7l1.5 -1.8l1.5 0.8l1.5 0.8l1.5 -0.5l1.5 -0.4l1.5 0.7l1.5 -0.5l1.5 -1.7l1.5 0.4l1.5 0l1.5 0.7l1.5 0.8l1.5 -0.3l1.5 0.7l1.5 -0.2l1.5 -1.1l1.5 -1.3l1.5 1.1l1.5 -0.7l1.5 0l1.5 0.9l1.5 2l1.5 -1.9l1.5 1l1.5 -0.1l1.5 -0.6l1.5 -0.8l1.5 2.6l1.5 -1.2l1.5 2l1.5 -1l1.5 -0.6l1.5 -0.2l1.5 -0.7l1.5 -0.5l1.5 1.1l1.5 -1.1l1.5 1.3l1.5 -1.5l1.5 -0.4l1.5 1.3l1.5 1.3l1.5 -1.4l1.5 2.1l1.5 -0.6l1.5 -1.1l1.5 1l1.5 -1.1l1.5 0.4l1.5 0.5l1.5 -0.2l1.5 1l1.5 -1.8l1.5 0.1l1.5 -0.5l1.5 1.2l1.5 0.1l1.5 -0.6l1.5 1.5l1.5 -1.6l1.5 0.3l1.5 2l1.5 -1.8l1.5 0.7l1.5 -2.5l1.5 2.4l1.5 0l1.5 -0.2l1.5 0.7l1.5 -0.7l1.5 0.2l1.5 -0.7l1.5 0.4l1.5 0l1.5 0.7l1.5 -1.2l1.5 -0.2l1.5 0.7l1.5 -0.1l1.5 0.2l1.5 1.2l1.5 -1.4l1.5 1.7l1.5 -0.3l1.5 -0.8l1.5 0.1l1.5 0.3l1.5 -0.7l1.5 1.3l1.5 0l1.5 -0.5l1.5 -0.1l1.5 0.8l1.5 -1.5l1.5 0.7l1.5 -0.3l1.5 -0.5l1.5 0.7l1.5 1.4l1.5 0.4l1.5 -1.8l1.5 0.1l1.5 0.8l1.5 -0.3l1.5 -0.7l1.5 0l1.5 1.4l1 -2.2l0.5 -0.7l1.5 -1.8l1.5 -20.6l1.5 -21.8l0.5 -7.2l1 -21.8l1.5 -36.1l0.2 -5.8l1.3 24l0.1 1.3l1.4 3.2l1.5 2.5l1.2 0.7l0.3 0.4l1.5 1.7l1.5 0.9l1.5 1.7l1.5 0.2l1.5 2.5l0.4 -2l1.1 -33.9l0.2 -5.4l1.3 5.1l1.5 5.9l1.5 1.1l1.5 1.1l1.5 2.3l1.5 0.9l1.5 1.1l1.5 0.4l1.5 2.8l1.5 2l1.5 -0.3l1.5 1.1l1.5 1.6l1.5 -0.3l1.5 1.4l1.5 -0.4l1.5 0.7l1.5 2.8l1.5 -1.3l1.5 2.7l1.5 1.4l1.5 0.1l1.5 0.6l1.5 1.5l1.5 -1.3l1.5 1.1l1.5 0.6l1.5 0.2l1.5 -0.7l1.5 2.2l1.5 0.1l1.5 2.1l1.5 1.2l1.5 -2.2l1 1.9l0.5 -0.4l1.5 -1.1l1.5 2.7l1.5 1.8l1.5 -2l1.5 2.1l1.5 0.5l1.5 0l1.5 0.4l1.5 2l1.5 -2.4l1.5 1.6l1.5 -0.2l1.5 1.5l1.5 0l1.5 0.6l1.5 0.4l1.5 1.7l1.5 -0.3l1.5 -0.9l1.5 0l1.5 1.5l1.5 -0.2l1.5 1l0.5 -2.8l1 3.5l1.5 0.6l1.5 -2.5l1.5 2.5l1.5 0.7l1.5 -1.2l1.5 2.9l1.5 0l1.5 -0.4l1.5 0.7l1.5 1.1l1.5 0.6l1.5 0l1.5 1.1l1.5 1.4l1.5 -0.4l1.5 0.4l1.5 2.1l1.5 0l1.5 -0.6l1.5 0.9l1.5 0.1l1 0.7l0.5 0l1.5 0l1.5 1.7l1.5 -0.5l1.5 -0.2l1.5 0.5l1.5 -0.2l1.5 0.9l1.5 0.5l1.5 0.1l1.5 2l1.5 0l1.5 0.7l1.5 -0.5l1.5 0.6l1.5 -1.5l1.5 1.3l1.5 1.5l1.5 -0.9l1.5 1.2l1.5 -1.2l0.5 -0.2l1 0.5l1.5 3.2l1.5 -0.7l1.5 -0.8l1.5 1.4l1.5 0l1.5 0.8l1.5 0l1.5 1.1l1.5 1.5l1.5 0.5l1.5 0l1.5 0.9l1.5 0.1l1.5 0.6l1.5 -0.6l1.5 1l1.5 1.7l1.5 -0.7l1.5 0.8l1.5 1.3l1.5 0.2l1.5 1l1.5 -0.1l1.5 1l1.5 -1.7l1.5 1.8l1.5 0.1l1.5 -1l1.5 1.9l1.5 0.4l1.5 0.3l1.5 0.6l1.4 0.1l0.1 1.3l1.5 -1.4l1.5 1.1l1.5 -0.8l1.5 1.9l1.5 1.2l1.5 0.2l1.5 0.5l1.5 -0.2l1.5 0.3l1.5 -0.2l1.5 2.1l1.5 -1.7l1.5 1l1.5 -0.6l1.5 2.3l1.5 -0.7l1.5 0.5l1.5 -0.7l1.5 2.6l1.5 -1.4l1.5 1.6l1.5 -0.6l1.5 0.2l1.5 0.1l1.5 -0.2l1.5 1.5l1.5 0.6l1.5 1.9l1.5 -2.7l1.5 1.5l1.3 -0.2l0.2 0.4l1.5 -0.3l1.5 0.6l1.5 1.6l1.5 -0.9l1.5 0.5l1.5 1.1l1.5 0l1.5 0.5l1.5 0.1l1.5 0.6l1.5 -0.1l1.5 1.7l1.5 -0.9l1.5 -0.2l1.5 0.5l1.5 0.8l1.5 -0.4l1.5 2.1l1.5 -0.7l1.5 0.5l1.5 -0.1l1.5 -0.6l1.5 0.6l1.5 1l1.5 -0.1l1.5 -0.3l1.5 -0.3l1.5 0.7l1.5 1.5l1.5 -1.9l1.5 3.6l1.5 -3.2l1.5 1.6l1.5 2l1.5 -1.4l1.5 -0.2l1.5 -1.3l1.5 1.1l1.5 1l1.5 -0.5l1.5 1.2l1.5 -0.2l1.5 0.2l1.5 0.3l1.5 1.8l1.5 0.1l1.5 0l1.5 -1.9l1.5 0l1.5 0.2l1.5 0.6l1.5 0.9l1.5 0.6l1 -2.3l0.5 -9.3l1.5 -34.4l1.5 -43.1l1 -27.7l0.5 1.7l1.5 13.3l1.5 12.1l1.5 1.1l1.5 0l1.5 2.6l1.5 1.6l1.5 0.3l0.6 2.6l0.9 -0.8l1.5 1.7l1.5 -0.1l1.5 0.5l1.5 0.8l1.5 1.7l1.5 1l1.5 1.6l1.5 -1.2l1.5 1l1.5 2.7l1.5 0l1.5 1.9l0.5 -0.3l1 -55.5l0.5 -27.1l1 11.7l1.5 17.7l0.8 10.6l0.7 0.1l1.5 1.7l1.5 1.6l1.5 0.8l1.5 2.7l1.3 1.8l0.2 -0.9l1.5 2.1l1.5 -0.3l1.5 2.9l1.5 -2.9l1.5 3.8l1.5 1.4l1.5 -0.2l1.5 0l1.5 1.5l1.5 2.4l1 -1.2l0.5 0.8l1.5 0.3l1.5 0.4l1.5 1.4l1.5 1.6l1.5 1.1l1.5 -1.5l1.5 1.7l1.5 1l1.5 2l1.5 -0.6l1.5 0.6l1.5 0.8l1.5 1.2l1.5 1.2l1.5 0.7l1.5 -0.5l1.5 0.7l1.5 3.9l1.5 -1.6l1.5 -0.3l1.5 2.2l1.5 -1.3l1.5 1.1l1.5 1.8l1.5 0.1l1.5 1.5l1.5 -0.7l1.5 1l1.5 -0.7l1.5 1.1l1.5 2l1.5 -0.3l1.5 0.2l1.5 -0.4l1.5 1.9l1.5 1.1l1.5 -0.9l1.5 1.5l1.5 -0.2l1.5 -0.4l1.5 1.9l1.5 -0.5l1.5 1.4l1.5 1.4l1.5 -0.3l1.5 0.5l1.5 -0.7l1.5 1.1l1.1 0.8l0.4 -1.1l1.5 2.3l1.5 0.3l1.5 0l1.5 -0.4l1.5 0.3l1.5 0.8l1.5 1.4l1.5 0.2l1.5 -0.5l1.5 1.6l1.5 -0.2l1.5 0.1l1.5 1.3l1.5 0.6l1.5 0.9l1.5 -1.2l1.5 1.9l1.5 1.2l1.5 0.6l1.5 -0.5l1.5 0.2l1.5 0.8l1.5 0.3l1.5 0.6l1.5 -1.2l1.5 1.5l1.5 1l1.5 0.8l1.5 1.1l1.5 -1.5l1.5 2l1.5 0.4l1.5 0.6l1.5 0.1l1.5 1l1.5 1.2l1.5 0.1l1.5 0.4l1.5 -0.1l1.5 2.4l1.5 -2.4l1.5 2l1.5 0.2l1.5 0.8l1.5 -0.5l1.5 1.4l1.5 -0.6l1.5 1.2l1.5 1.6l1.5 -0.4l1.5 1.7l1.5 -0.1l1.5 -0.7l1.5 1.3l1.5 -0.4l1.5 1.3l1.5 1.4l1.5 -1.3l1.5 2.2l1.5 -1.8l1.5 1.1l1.5 1.4l1.5 -0.6l1.5 1.9l1.5 -1.4l1.5 0.2l1.5 2l1.5 -0.9l1.5 1.4l1.5 0.6l1.5 0.1l1.5 1.4l0.8 0.3l0.7 -0.1l1.5 0.9l1.5 -0.8l1.5 0.9l1.5 -0.9l1.5 0.9l1.5 1.8l1.5 -0.7l1.5 1.7l1.5 1.1l1.5 -0.6l1.5 -0.3l1.5 0.4l1.5 1.9l1.5 -1.7l1.5 0.8l1.5 2.2l1.5 -0.2l1.5 0.1l1.5 -0.3l1.5 0.1l1.5 0.5l1.5 0.2l1.5 0.5l1.5 0.7l1.5 -1.2l1.5 3l1.5 -2.7l1.5 1l1.5 1l1.5 0.3l1.5 0.3l1.5 0.3l1.5 1.5l1.5 -0.7l1.5 1.6l1.4 -0.6l0.1 1.4l1.5 0.1l1.5 0.1l1.5 1.2l1.5 -1.4l1.5 0l1.5 0.8l1.5 -0.7l1.5 1.4l1.5 -0.3l1.5 1.8l1.5 -2.9l1.5 2.4l1.5 -0.6l1.5 0.8l1.5 1.8l1.5 -2.6l1.5 1.5l1.5 -0.5l1.5 1.4l1.5 -1.5l1.5 1.8l1.5 0.5l1.5 -0.8l1.5 1.6l1.5 0.1l1.5 -0.5l1.5 1.6l1.5 -0.8l1.5 0.5l1.5 0.4l1.5 0l1.5 -1l1.5 2.1l1.5 -0.1l1.5 -0.7l1.5 3.5l0.5 -2.6l1 0.9l1.5 1.4l1.5 0.8l1.5 -1.5l1.5 0.7l1.5 0l1.5 -0.6l1.5 1.1l1.5 -0.7l1.5 1.9l1.5 0.9l1.5 -1.8l1.5 1.1l1.5 -0.4l1.5 2.1l1.5 -1.4l1.5 0.5l1.5 0.7l0.8 0.8l0.7 -1.4l1.5 0.4l1.5 -0.8l1.5 0.9l1.5 1.9l1.5 -0.9l1.5 -2.1l1.5 1.4l1.5 -1.8l1.5 2.9l1.5 -1.2l1.5 0.1l1.5 1.4l1.5 -1.1l1.5 0.3l1.5 0.8l1.5 0.5l1.5 -0.2l1.5 0.3l1.5 -2.6l1.5 0.5l1.5 -0.2l1.5 0.5l1.5 0.3l1.5 -1.1l1.5 1.6l1.5 -1.9l1.5 1.6l1.5 -0.2l1.5 0.2l1.5 0.7l1.5 -0.1l1.5 1.6l1.5 -1.2l1.5 -0.8l1.5 0.6l1.5 0.3l1.5 -0.1l1.5 -1.1l1.5 0.1l1.5 1.6l1.5 -2.2l1.5 0.2l1.5 1.8l1.5 -1.4l1.5 -0.7l1.5 1.5l1.5 0.4l1.5 -1.8l1.5 0.4l1.5 0.2l1.5 2.1l1.5 -2.3l1.5 0.5l1.5 1.2l1.5 -0.7l1.5 1l1.5 0l1.5 -1.5l1.5 1.6l0.5 -1.5l1 1.6l1.5 -0.5l1.5 1.1l1.5 -1.9l1.5 1.6l1.5 -0.7l1.5 1.1l1.5 -1.8l1.5 3l1.5 -0.9l1.5 -2l1.5 1l1.5 0.3l1.5 -1.6l1.5 1.9l1.5 -2.1l1.5 0.7l1.5 0.5l1.5 -0.1l1.5 -1.1l1.5 1.8l1.5 0.2l1.5 -0.5l1.5 -0.1l1.5 -0.2l1.5 -0.4l1.5 0.6l1.5 0.9l1.5 0.4l1.5 -0.7l1.5 0l1.5 1l1.5 -2.1l1.5 0.2l1.5 1.1l1.5 -0.6l1.5 0.7l1.5 -0.7l1.5 1.2l1.5 0.1l1.5 0l1.5 -1.3l1.5 1.2l1.5 -0.5l1.5 -0.1l1.5 -0.6l1.5 1.6l1.5 -1.5l1.5 1.4l1.5 0l1.5 0.1l1.5 0.6l1.5 0.1l1.5 -0.8l1.5 1.7l1.5 -1.9l1.5 0.5l1.5 -1.6l1.5 0.9l1.5 0.6l1.5 -0.9l1.5 -0.2l1.5 1l1.5 -0.9l1.5 -0.2l1.5 1.2l1.5 -0.5l1.5 -0.8l1.5 2.2l1.5 -0.7l1.5 -0.6l1.5 0.9l1.5 0.7l1.5 -0.9l1.5 -0.9l1.5 -1.3l1.5 2.3l1.5 -0.1l1.5 0.4l1.5 0.1l1.5 -0.4l1.5 -0.1l1.5 1.2l1.5 -2.3l1.5 0.3l1.5 -0.2l1.5 1.5l1.5 0.8l1.5 -1.7l1.5 0.9l1.5 -1.2l0.4 -0.1l1.1 2.4l1.5 -1.8l1.5 2.1l1.5 -2.3l1.5 0.9l1.5 0l1.5 0.7l1.5 -1.4l1.5 -0.1l1.5 -0.1l1.5 2.3l1.5 -2.9l1.5 0.5l1.5 0.8l1.5 -0.6l1.5 0.8l1.5 0.3l1.5 -0.1l1.5 0.6l1.5 -1.4l1.5 1.7l1.5 -0.5l1.5 0.1l1.5 -0.8l1.5 0.1l1.5 -0.1l1.5 2.1l1.5 -0.9l1.5 -1l1.5 -0.7l1.5 1l1.5 0.8l1.5 0.3l1.5 1.1l1.5 -1.2l1.5 1l1.5 -1.4l1.5 0.2l1.5 1l1.5 -1.7l1.5 2.6l1.5 -2.5l1.5 1.7l1.5 -2.2l1.5 0.4l1.5 -0.5l1.5 0.9l1.5 0.6l1.5 0.7l1.5 -0.3l1.5 -0.3l1.5 -1.1l1.5 0.1l1.5 2.8l1.5 -3.1l1.5 1.8l1.5 -1.2l1.5 0.2l1.5 1.3l1.5 -1.5l1.5 0.5l1.5 0.3l1.5 -0.9l1.5 0.9l1.5 0.7l1.5 -0.5l1.5 0.8l1.5 -0.5l1.5 -0.4l1.5 0.3l1.5 -0.3l1.5 -0.3l1.5 0.2l1.5 1.4l1.5 -0.6l1.5 -0.1l1.5 -1.5l1.5 1.7l1.5 -0.7l1.5 0.5l1.5 -1.2l1.5 3.1l1.5 -2l1.5 0.3l1.5 -0.6l1.5 -0.2l1.5 1.8l1.5 -0.1l1.5 -0.5l1.5 -0.3l1.5 -1.3l1.5 1.3l1.5 -0.9l1.5 1.4l1.5 -0.2l1.5 -0.5l1.5 1.1l1.5 -2l1.5 1.5l1.5 1.4l1.5 -1.8l1.5 0.6l1.5 0.1l1.5 -1.2l1.5 1.6l1.5 0.3l1.5 -0.8l1.5 -1l1.5 0.3l0.5 0.8l1 -0.4l0.5 -1.3l1 -6.7l1.5 -9.5l1.5 -10.2l1.5 -8.8l1.5 -11.5l1.5 -9.7l1 -6.6l0.5 -6.2l1.5 -18.8l1.5 -14.8l0.7 -6.9l0.8 12.3l0.5 7.3l1 2.9l1.5 -0.9l1.5 3.6l1.5 -0.6l1.5 4l1.5 1.2" stroke="#d84f3e" stroke-width="1.5" fill="none" stroke-linejoin="round"/>
<path d="M34 262.8l1 1.3l1 2.9l1 1.4l1 0.6l1 -1.5l1 2.7l1 -1.9l1 -4.7l1 -3.1l1 -3l1 -1.9l1 6.4l1 -2l1 0.7l1 0.2l1 4.2l1 -2.6l1 -6.5l1 -6.3l1 0.7l1 -0.1l1 -0.5l1 1.5l1 2.6l1 -1.8l1 -4.3l1 0.3l1 0.1l1 1.4l1 0.4l1 -0.2l1 -2.7l1 1l1 -4l1 0.2l1 -1.9l1 0.5l1 0.9l1 0.8l1 -2.8l1 1.9l1 -2.7l1 -0.9l1 -2.6l1 -0.1l1 3.3l1 -2.8l1 0.2l1 -0.5l1 -3.5l1 0.9l1 1.3l1 -2.6l1 2.5l1 -3l1 -2.1l1 -1.2l1 1.2l1 -2.4l1 2.4l1 -1.7l1 6.1l1 0.3l1 1.7l1 -4l1 -8.5l1 -3.5l1 -3l1 -4.7l1 -4.2l1 -8.7l1 -0.6l1 -7.8l1 -3.8l0.7 -15.3l0.3 3.9l1 3.5l1 12.7l1 -7.6l1 -9.9l1 0.6l1 4.6l1 -16.8l1 13.3l0.4 8.6l0.6 -4.1l1 -19l1 3.9l1 6.3l1 -10.1l1 9.6l1 0.8l1 -2.8l1 -4.4l1 -17.9l1 24.4l1 -3.5l1 -4.4l1 0.4l1 -7l1 -4.5l1 2.6l0.8 2.1l0.2 -0.8l1 -4l1 9.7l1 -10.5l1 -8.5l1 17.1l1 -11.7l1 -2.7l1 3.4l0.4 -1.6l0.6 -2.8l1 -10.1l1 8.5l1 6l1 8.8l1 -6.6l1 5.2l1 1.9l1 -2.1l1 -0.9l1 0.2l1 -3.1l1 -11.6l1 -4.6l1 -0.1l1 2.7l1 -0.4l0.8 -5l0.2 1.4l1 22.4l1 9.3l1 -5.3l1 -2.1l1 -10.6l1 25.1l1 1.1l1 3.3l1 1l1 -1.8l1 4.8l1 1l1 0.4l1 7.6l1 -12.5l1 8.9l1 -3.7l1 -13.2l1 -5.3l1 24.9l1 10.2l1 -5.7l1 8.2l1 1.9l1 -4.5l0.9 2l0.1 8.8l1 -11.5l1 -3l1 -29.8l1 -12.1l1 -16.6l1 -1.7l1 9.1l0.3 5.3l0.7 0.2l1 -6.7l1 4l1 -5l1 -11.7l1 -2.3l1 -2.9l1 8.8l1 1.8l1 3.6l1 -5l1 6l1 0.6l1 2.2l1 -2.2l1 4l1 -3l1 1.4l1 -0.7l1 2.5l1 -0.3l1 5l1 1.5l1 0.6l1 -3.7l1 1.8l1 2.1l1 -0.9l1 1.1l1 -0.5l0.6 1.2l0.4 1.1l1 -0.4l1 2.7l1 -1.9l1 2.1l1 2.8l1 2.3l1 -2.1l1 3.2l1 -0.5l1 1l1 0.5l1 0.2l1 1.1l1 -0.3l0.5 1.3l0.5 -0.2l1 -2l1 3l1 0l1 -1.3l1 1.1l1 1.1l1 2.3l1 -0.2l1 -0.2l1 -1.2l1 1.8l1 0l1 0.6l1 0.5l0.4 -0.2l0.6 -0.4l1 1l1 -2.2l1 4.1l1 0.3l1 -0.1l1 -0.8l1 1.3l1 -0.3l0.3 0.6l0.7 -62.9l0.2 -18.7l0.8 10.8l1 15.2l0.3 4.4l0.7 1l1 1.4l1 2.5l1 0.6l1 2.2l1 1.2l1 0.5l1 1.2l1 2.2l1 -0.6l1 0l1 0.1l1 0.3l1 1.5l1 0.8l1 1.6l1 -1.4l1 2.4l1 -0.9l1 0.6l1 1.1l1 0.3l1 0.1l1 -0.4l1 1.4l1 0.5l1 2l1 -1.2l1 2.7l1 -0.7l1 -0.3l1 1l1 0.7l1 -1.1l1 2.4l1 -0.4l1 2l1 -0.4l1 0.7l1 2.1l1 0.8l1 -0.1l1 -0.9l1 2.7l1 0.3l1 -1.6l1 0.4l1 1.5l1 1l1 0.1l1 -1.1l1 1.9l1 0.5l1 0.4l1 -0.3l1 -0.1l1 0.3l1 1.8l1 -0.2l1 0.5l1 1l1 0.9l1 0.5l1 1.2l1 -1.4l1 2.6l1 0.2l0.3 -1.1l0.7 -34.8l0.8 -42.2l0.2 3.9l1 14.1l1 12.7l0.7 13.5l0.3 -1.6l1 2.4l1 -0.3l1 2.3l1 -3.6l1 2.5l1 0.1l1 2.4l1 -0.4l1 0.4l1 1l1 0.7l1 1.6l1 0.7l1 1.6l1 -2.9l1 0.8l1 1l1 2l1 -0.1l1 1.7l0.6 -0.1l0.4 -0.7l1 0.5l1 2.6l1 -1.6l1 0.6l1 0.8l1 1.8l1 0.6l1 1.1l1 -1.3l1 2l1 -0.4l1 1.4l1 -0.8l1 1.1l1 1l1 0.9l1 -1.3l1 2.7l1 -0.3l1 1.2l1 1.1l1 1l1 0l1 0.4l1 0.2l1 -1.6l1 1l1 0.8l1 0.4l1 1.4l1 -0.3l1 0.5l1 -0.1l1 -1.4l1 2.5l1 -0.5l1 -0.2l1 -0.8l1 0.2l1 2.3l1 0.5l1.5 -1.2l1.5 0.4l1.5 2.3l1.5 0l1.5 2.3l1.5 0.1l1.5 0.2l1.5 -1.6l1.5 3.9l1.5 -1l1.5 -0.1l1.5 1.7l1.5 0l1.5 1.4l1.5 1.3l1.5 -1.8l1.5 2.2l1.5 -1.1l1.5 1.4l1.5 0.6l1.5 1.4l1.5 -1l1.5 1.1l1.5 0.2l1 0.4l0.5 0.1l1.5 -0.2l1.5 0.2l1.5 1.2l1.5 1.2l1.5 -0.2l1.5 1.5l1.5 -1.8l1.5 1.2l1.5 0.7l1.5 1.5l1.5 -1.4l1.5 1.5l1.5 0.8l1.5 0.5l1.5 -0.7l1.5 0.7l1.5 1.4l1.5 -0.7l1.5 1.1l1.5 -0.2l1.5 1.2l1.5 -0.1l1.5 0.4l1.5 -0.2l1.5 1.1l1.5 0l1.5 3.1l1.5 -1.7l1.5 0.4l0.7 -0.2l0.8 -1.2l1.5 2l1.5 0.8l1.5 0.3l1.5 0l1.5 1.6l1.5 0l1.5 -0.4l1.5 0.1l1.5 2.2l1.5 -0.8l1.5 0.3l1.5 0l1.5 0.8l1.5 1.5l1.5 0.3l1.5 0l1.5 1.1l1.5 0.6l1.5 0.3l1.5 -1.8l1.5 1.9l1.5 0.1l1.5 2.1l1.5 0.5l1.5 -0.4l1.5 -0.5l1.5 2.2l1.5 -0.5l1.5 0.2l0.3 1.5l1.2 -0.5l1.5 0.3l1.5 -0.5l1.5 0.3l1.5 2.2l1.5 -1.8l1.5 -0.1l1.5 2.9l1.5 -1l1.5 0.8l1.5 0.3l1.5 2l1.5 -2.7l1.5 1.6l1.5 0.3l1.5 0.6l1.5 0.4l1.5 0.4l1.5 1.8l1.5 -1.6l1.5 0.9l1.5 -1l1.5 -0.1l1.5 0.9l1.5 -0.7l1.5 3.6l1.5 -2.7l1.5 2.6l1.5 -1.2l1.5 0.5l1.5 -0.1l1.5 0.2l1.5 -0.2l1.5 0.9l1.5 0.5l1.5 -1.6l1.5 0.8l1.5 1.8l1.5 1.3l1.5 -0.2l1.5 -0.8l1.5 2.9l1.5 -1.6l1.5 0.9l1.5 0.6l1.5 -0.2l1.5 2l1.5 -2l1.5 0.4l1.5 -1.1l1.5 0.7l1.5 0.9l0.5 0.3l1 0.6l1.5 -0.7l1.5 1.9l1.5 0.1l1.5 -0.1l1.5 -0.4l1.5 1.4l1.5 -0.9l1.5 0.6l1.5 -0.2l1.5 -1.3l1.5 1.1l1.5 0.5l1.5 -1.6l1.5 2l0.3 -2l1.2 -0.7l1.5 1.9l1.5 0l1.5 0.2l1.5 -0.6l1.5 1.6l1.5 0.2l1.5 0l1.5 -0.4l1.5 -0.2l1.5 0.2l1.5 -0.3l1.5 0.3l1.5 1.6l1.5 -1.9l1.5 1.3l1.5 -1.3l1.5 0.7l1.5 0.4l1.5 -2.7l1.5 1.1l1.5 0.4l1.5 0.3l1.5 -0.1l1.5 0.6l1.5 -0.4l1.5 0.4l1.5 -0.2l1.5 0.2l1.5 -2.5l1.5 3.3l1.5 -1.5l1.5 0.8l1.5 0.7l1.5 -2.1l1.5 1.1l1.5 0l1.5 0.4l1.5 -1.6l1.5 1l1.5 1.9l1.5 -1.4l1.5 0.4l1.5 -0.9l1.5 0.9l1.5 0l1.5 -0.1l1.5 1.5l1.5 -1.7l1.5 0.9l1.5 -1.6l1.5 1l1.5 -0.3l1.5 0.7l1.5 0.9l1.5 -1l1.5 0.7l1.5 0.2l1.5 0l1.5 0.2l1.5 -0.8l1.5 1.5l1.5 -0.6l1.5 -0.8l1.5 -1.1l1.5 3.2l1.5 -1.8l1.5 0.6l1.5 0.3l1.5 -0.8l1.5 -0.5l1.5 1.5l1.5 -0.2l1.5 1.4l1.5 -1.4l1.5 -0.4l1.5 -1.4l1.5 0.3l1.5 -1.4l1.5 -0.1l1.5 2.3l1.5 0.6l1.5 1.4l1.5 -1.6l1.5 0.7l1.5 -0.5l1.5 -0.8l1.5 0.7l1.5 0.3l1.5 0.1l1.5 0.5l1.5 0.2l1.5 -1.3l1.5 0.7l1.5 0.6l1.5 -1l1.5 1.6l1.5 -1.6l1.5 0.9l1.5 -0.3l1.5 -0.2l1.5 -0.4l1.5 0.5l1.5 0l1.5 0.6l1.5 -2.4l1.5 2.1l1.5 0l1.5 -0.7l1.5 1.2l1.5 -0.8l1.5 0.5l1.5 1l1.5 0.1l1.5 -1.7l1.5 1.4l1.5 -0.4l1.5 2.2l1.5 -1.2l1.5 -1.3l1.5 0.8l1.5 0l1.5 -0.1l1.5 -1.4l1.5 1.6l1.5 -0.7l1.5 0.9l1.5 0.6l1.5 -0.1l1.5 -1.1l1.5 0.1l1.5 -1.2l1.5 2l1.5 -0.1l1.5 -0.1l1.5 -0.6l1.5 -0.8l1.5 1.7l1.5 0.6l1.5 0.4l1.5 -0.9l1.5 0.6l1.5 -1.9l1.5 2.1l1.5 0.2l1.5 -2.1l1.5 -0.4l1.5 1.3l1.5 0.8l1.5 -0.7l1.5 -1.2l1.5 2.5l1.5 0.1l1.5 -1.1l1.5 0.6l1.5 -1.3l1.5 -0.1l1.5 -0.5l1.5 1.7l1.5 -1.3l1.5 1.6l1.5 -0.5l1.5 -0.4l1.5 0l1.5 0l1.5 -1.4l1.5 2.1l1.5 -0.4l1.5 0.8l1.5 -1.4l1.5 0.8l0.8 -0.5l0.7 0.3l1.5 0.5l1.5 0.1l1.5 -1.4l1.5 0.9l1.5 1.6l1.5 -0.3l1.5 -0.6l1.5 -0.2l1.5 -0.4l1.5 0.3l1.5 -0.2l1.5 -0.5l1.5 0.2l1.5 0.8l1.5 1.7l1.5 -1.8l1.5 -0.8l1.5 1.7l1.5 -0.5l1.5 0l1.5 0l1.5 -0.6l1.5 1.8l1.5 0.2l1.5 -1.5l1.5 0.7l1.5 -0.1l1.5 0.1l1.5 0.1l1.5 -1.8l1.5 1.1l1.5 0.9l1.5 -0.2l1.5 -1.8l1.5 2.1l1.5 -0.1l1.5 -1.1l1.5 0.9l1.5 0.7l1.5 -1.5l1.5 1.5l1.5 0.6l1.5 0.7l1.5 -0.7l1.5 -1.8l1.5 1.2l1.5 -2.4l1.5 1.7l1.5 0.3l1.5 -1.2l1.5 0.9l1.5 -0.2l1.5 0l1.5 1.7l1.5 -0.9l1.5 0l1.5 0.6l1.5 -0.3l1.5 1.2l1.5 -1.9l1.5 0.3l1.5 -0.1l1.5 -0.3l1.5 0.2l1.5 0l1.5 0.1l1.5 -0.6l1.5 0.1l1.5 0l1.5 2.1l1.5 -0.8l1.5 0l1.5 -1.2l1.5 0.1l1.5 1l1.5 0.4l1.5 0.2l1.5 -0.5l1.5 0.3l1.5 -0.4l1.5 -0.3l1.5 0.2l1.5 0.1l1.5 0.8l1.5 0.7l1.5 -1l1.5 0.4l1.5 0.7l1.5 -2.4l1.5 0.2l1.5 3.5l1.5 -2.2l1.5 -0.4l1.5 -0.1l1.5 -0.7l1.5 0l1.5 0.7l1.5 -0.8l1.5 0.8l1.5 0.5l1.5 -0.5l1.5 0.2l1.5 0.3l1.5 0.7l1.5 -1.2l1.5 -0.3l1.5 0.8l1.5 0.9l1.5 -1.3l1.5 2.2l1.5 -1.5l1.5 1.6l1.5 -0.4l1.5 -0.8l1.5 0.2l1.5 -0.2l1.5 0.7l1.5 -0.6l1.5 0.4l1 0.4l0.5 -2.1l1.5 -4.6l1.5 -19.5l1.5 -21.2l0.5 -5.8l1 -22.9l1.5 -37.1l0.2 -3.4l1.3 21.4l0.1 3.1l1.4 2.2l1.5 1.7l1.2 2.3l0.3 0.5l1.5 1.5l1.5 0.5l1.5 0l1.5 0.8l1.5 1.7l0.4 -0.1l1.1 -33.6l0.2 -3.6l1.3 4.1l1.5 4.2l1.5 1.9l1.5 1.4l1.5 0.5l1.5 1l1.5 2.2l1.5 1.8l1.5 1.7l1.5 -0.5l1.5 1.1l1.5 2l1.5 0.5l1.5 -0.2l1.5 2l1.5 0.6l1.5 1.7l1.5 1.1l1.5 0.3l1.5 0.6l1.5 0.8l1.5 1.1l1.5 0.2l1.5 -0.2l1.5 1l1.5 1l1.5 0.9l1.5 0.5l1.5 1.1l1.5 -1.4l1.5 0.1l1.5 1.5l1.5 1.3l1.5 -1.8l1 2.1l0.5 1.3l1.5 -2l1.5 0.9l1.5 0.2l1.5 1.2l1.5 3.5l1.5 -3.2l1.5 1.5l1.5 0.9l1.5 0.9l1.5 1.2l1.5 0.6l1.5 -1.4l1.5 1.5l1.5 -0.4l1.5 -0.3l1.5 1.4l1.5 -1.5l1.5 1l1.5 1.7l1.5 -0.6l1.5 1.2l1.5 0.5l1.5 0.7l0.5 -1.6l1 0.5l1.5 2.4l1.5 -0.6l1.5 0.9l1.5 2l1.5 -0.3l1.5 0.8l1.5 -0.5l1.5 0.2l1.5 1.5l1.5 0.1l1.5 -0.2l1.5 0.3l1.5 0.9l1.5 1.3l1.5 0.5l1.5 1.3l1.5 -0.8l1.5 0.8l1.5 2.1l1.5 0.1l1.5 0.4l1 0.4l0.5 0.3l1.5 -0.5l1.5 0.6l1.5 1l1.5 0.6l1.5 -2l1.5 2.1l1.5 0.9l1.5 -1.2l1.5 1.5l1.5 0.9l1.5 -0.1l1.5 0.8l1.5 -2.4l1.5 1.6l1.5 0.8l1.5 0.3l1.5 2.8l1.5 -1.9l1.5 0.6l1.5 1.8l0.5 -1.2l1 0.9l1.5 0.2l1.5 0.6l1.5 0l1.5 1.1l1.5 -0.8l1.5 -1.1l1.5 1.8l1.5 1.6l1.5 0.6l1.5 -0.7l1.5 1.2l1.5 0.9l1.5 -0.8l1.5 1.6l1.5 -0.5l1.5 1.5l1.5 0.8l1.5 -0.1l1.5 1.3l1.5 -1.4l1.5 1.6l1.5 -0.9l1.5 0.2l1.5 2.5l1.5 -1.7l1.5 -0.8l1.5 2l1.5 0.6l1.5 1.2l1.5 1.4l1.5 0.1l1.5 0.8l1.4 0.4l0.1 -0.5l1.5 -0.1l1.5 1.3l1.5 0l1.5 0.1l1.5 -0.3l1.5 1.5l1.5 -1.8l1.5 1.2l1.5 1.2l1.5 0.2l1.5 1.1l1.5 0.8l1.5 -2.2l1.5 2.1l1.5 0.2l1.5 1.8l1.5 0.3l1.5 0.4l1.5 -1.1l1.5 -2l1.5 3.5l1.5 -0.9l1.5 1.9l1.5 0l1.5 -0.1l1.5 -1.3l1.5 1.4l1.5 1.8l1.5 -0.2l1.5 -0.5l1.3 0.3l0.2 0.8l1.5 -0.8l1.5 0.4l1.5 3l1.5 -1.8l1.5 0.9l1.5 0.3l1.5 -0.2l1.5 0.3l1.5 0.2l1.5 0.7l1.5 0l1.5 0.5l1.5 0.1l1.5 1l1.5 -0.6l1.5 1.8l1.5 -0.4l1.5 0.7l1.5 -0.5l1.5 0.5l1.5 1.2l1.5 0.7l1.5 -0.1l1.5 -1.8l1.5 1.5l1.5 1l1.5 -0.8l1.5 0.8l1.5 0.6l1.5 0.3l1.5 -1.7l1.5 1.9l1.5 0.4l1.5 -1.7l1.5 1l1.5 1.4l1.5 -1.9l1.5 0.1l1.5 1.8l1.5 -0.3l1.5 -0.3l1.5 0.8l1.5 -2.1l1.5 4.3l1.5 -0.1l1.5 -1.4l1.5 0.3l1.5 0.5l1.5 0.2l1.5 -0.4l1.5 -0.7l1.5 1.3l1.5 -1.2l1 1.1l0.5 -11.6l1.5 -33.5l1.5 -42l1 -29.9l0.5 4.7l1.5 11.3l1.5 11l1.5 -0.4l1.5 2.6l1.5 1.6l1.5 1.4l1.5 2l0.6 0.2l0.9 0.7l1.5 2l1.5 -0.2l1.5 -0.2l1.5 2.8l1.5 0.7l1.5 -1.4l1.5 3.5l1.5 -0.4l1.5 1.7l1.5 0.5l1.5 0.9l1.5 1l0.5 0.9l1 -56.5l0.5 -26.8l1 12.7l1.5 17.8l0.8 8.8l0.7 2.8l1.5 0.4l1.5 2.6l1.5 -0.5l1.5 3.8l1.3 -0.9l0.2 0.4l1.5 2l1.5 0.6l1.5 0.8l1.5 2.3l1.5 1l1.5 0.9l1.5 -0.5l1.5 0.1l1.5 1.4l1.5 0.5l1 0.4l0.5 1.7l1.5 -2.3l1.5 3.4l1.5 0.5l1.5 1.1l1.5 1.4l1.5 1.1l1.5 -0.2l1.5 2l1.5 0.3l1.5 -0.2l1.5 1.4l1.5 0.4l1.5 0.5l1.5 -0.2l1.5 1l1.5 0.3l1.5 1.3l1.5 1.5l1.5 0.9l1.5 0.4l1.5 0.3l1.5 -0.5l1.5 2.1l1.5 1.2l1.5 -1.3l1.5 1.3l1.5 0.9l1.5 0.1l1.5 1.7l1.5 -0.9l1.5 2.3l1.5 -1.2l1.5 2.1l1.5 -0.1l1.5 -0.4l1.5 1.5l1.5 0.3l1.5 -0.4l1.5 1.8l1.5 -1.1l1.5 1.6l1.5 0.2l1.5 -0.9l1.5 1.9l1.5 0.8l1.5 0.2l1.5 0.3l1.5 2l1.1 -0.4l0.4 -0.1l1.5 -0.3l1.5 0.2l1.5 1.3l1.5 1.2l1.5 0.4l1.5 0.2l1.5 -1l1.5 3.5l1.5 -1.9l1.5 1l1.5 1l1.5 1.4l1.5 -2.5l1.5 1.8l1.5 0.8l1.5 2l1.5 0.2l1.5 0.4l1.5 -0.2l1.5 0.4l1.5 -0.2l1.5 1.2l1.5 1.1l1.5 -0.4l1.5 0.6l1.5 -0.9l1.5 2l1.5 -0.8l1.5 0l1.5 2.2l1.5 0.9l1.5 -1.6l1.5 0.8l1.5 2.3l1.5 0.9l1.5 0l1.5 0.7l1.5 0.8l1.5 -0.1l1.5 0.1l1.5 -0.3l1.5 1.6l1.5 0.4l1.5 0.5l1.5 0.6l1.5 0l1.5 0.4l1.5 -1l1.5 1.6l1.5 0.2l1.5 1.3l1.5 0l1.5 0l1.5 1.8l1.5 1.2l1.5 -1.3l1.5 0.2l1.5 1.9l1.5 0.4l1.5 0.4l1.5 1l1.5 -0.1l1.5 1.4l1.5 0l1.5 -0.1l1.5 0.9l1.5 1.1l1.5 0.6l1.5 -0.6l1.5 2.4l1.5 -1.5l1.5 -0.5l0.8 0.5l0.7 -0.1l1.5 1.8l1.5 -0.3l1.5 0.7l1.5 -0.5l1.5 1.1l1.5 -0.5l1.5 0.7l1.5 1.4l1.5 -0.3l1.5 1l1.5 -1.1l1.5 -0.2l1.5 2.6l1.5 -0.2l1.5 0.1l1.5 -0.8l1.5 1.6l1.5 0.6l1.5 0.9l1.5 -1.3l1.5 0.1l1.5 1.4l1.5 0.3l1.5 1.3l1.5 0l1.5 0.7l1.5 0.1l1.5 -0.4l1.5 0.6l1.5 3.1l1.5 -1.4l1.5 -0.3l1.5 1.2l1.5 -0.5l1.5 0.2l1.4 1.4l0.1 -0.8l1.5 -0.9l1.5 -0.1l1.5 1.5l1.5 -0.5l1.5 1.7l1.5 -0.1l1.5 -0.2l1.5 -0.4l1.5 1.6l1.5 0.8l1.5 -0.8l1.5 0.9l1.5 -0.2l1.5 -0.1l1.5 1.5l1.5 -0.7l1.5 0.5l1.5 2.5l1.5 -0.7l1.5 -0.3l1.5 0.5l1.5 0l1.5 0.3l1.5 0.4l1.5 0.5l1.5 0.5l1.5 -0.6l1.5 -0.5l1.5 -0.4l1.5 0.6l1.5 2.5l1.5 0l1.5 -2.4l1.5 1.8l1.5 -0.2l1.5 1.8l0.5 -1.8l1 0.2l1.5 2.5l1.5 -1.1l1.5 1.4l1.5 0.3l1.5 -0.8l1.5 1.8l1.5 -1.6l1.5 -0.1l1.5 1.6l1.5 1.8l1.5 -2l1.5 1.3l1.5 1.2l1.5 -2l1.5 0.1l1.5 0l1.5 1.4l0.8 0l0.7 1.6l1.5 0.1l1.5 -0.7l1.5 -0.4l1.5 -0.6l1.5 -1.5l1.5 2.1l1.5 -2.4l1.5 1.9l1.5 1.3l1.5 -1.2l1.5 -0.2l1.5 1.2l1.5 -0.6l1.5 0.7l1.5 0l1.5 1.3l1.5 -2.5l1.5 2l1.5 -1l1.5 -1.4l1.5 1l1.5 -0.8l1.5 -0.2l1.5 0.2l1.5 -0.2l1.5 1.7l1.5 1.9l1.5 -1.2l1.5 -0.8l1.5 -0.2l1.5 0.5l1.5 0.6l1.5 -0.5l1.5 -1.5l1.5 2.7l1.5 -2l1.5 0.4l1.5 1l1.5 -0.8l1.5 -0.3l1.5 0.5l1.5 -1.8l1.5 2.8l1.5 -2.1l1.5 0.6l1.5 -0.4l1.5 -0.3l1.5 0.3l1.5 0.1l1.5 -1.2l1.5 1.8l1.5 0.3l1.5 0.7l1.5 -1.2l1.5 0.1l1.5 0.7l1.5 0.5l1.5 0.1l1.5 -0.6l0.5 0.5l1 -1.5l1.5 2.1l1.5 -1.2l1.5 -1.5l1.5 2l1.5 0.2l1.5 0.1l1.5 0.3l1.5 -0.3l1.5 0.3l1.5 -0.7l1.5 1.3l1.5 0.6l1.5 -0.5l1.5 -1.3l1.5 0.2l1.5 -0.9l1.5 0.5l1.5 0.5l1.5 1.2l1.5 -1l1.5 1.2l1.5 -2.1l1.5 3.5l1.5 -2.7l1.5 0.3l1.5 -0.5l1.5 0.2l1.5 0.5l1.5 -0.2l1.5 -0.8l1.5 0.4l1.5 0.1l1.5 0.8l1.5 -0.5l1.5 1.3l1.5 -0.4l1.5 0.5l1.5 0.3l1.5 -1.4l1.5 1.2l1.5 -1.1l1.5 -0.4l1.5 0.7l1.5 1.6l1.5 -1l1.5 0.8l1.5 -1.2l1.5 0.2l1.5 -0.8l1.5 0.8l1.5 1l1.5 -1.1l1.5 0.7l1.5 -1.5l1.5 0.3l1.5 0.4l1.5 1.4l1.5 -0.8l1.5 0.2l1.5 -0.8l1.5 -0.9l1.5 0.9l1.5 1.3l1.5 0.4l1.5 -1.8l1.5 -0.8l1.5 1.7l1.5 -0.2l1.5 -0.4l1.5 -1.7l1.5 2.8l1.5 1.4l1.5 -1.2l1.5 0l1.5 -0.4l1.5 0.5l1.5 0.3l1.5 -0.7l1.5 -0.3l1.5 0.2l1.5 -0.3l1.5 0.7l1.5 -0.5l1.5 1.4l1.5 0.3l1.5 -0.2l1.5 -0.9l1.5 -0.8l1.5 1.4l1.5 0.2l0.4 -0.3l1.1 -0.6l1.5 0.3l1.5 1.4l1.5 -1.3l1.5 0.7l1.5 -0.3l1.5 -0.8l1.5 0.8l1.5 -0.7l1.5 1.1l1.5 -0.8l1.5 -0.2l1.5 -0.1l1.5 -0.2l1.5 -0.4l1.5 0.6l1.5 0l1.5 2.6l1.5 -1.5l1.5 -0.3l1.5 -0.6l1.5 -0.5l1.5 1l1.5 -1.4l1.5 0.6l1.5 -0.6l1.5 1.5l1.5 1.2l1.5 -1.8l1.5 0.5l1.5 1.6l1.5 -1.5l1.5 1.1l1.5 -1.1l1.5 0.2l1.5 -0.2l1.5 0.5l1.5 -0.5l1.5 1l1.5 -0.6l1.5 0.5l1.5 0.7l1.5 -0.7l1.5 -1.2l1.5 1l1.5 0.1l1.5 -0.5l1.5 0.8l1.5 0.8l1.5 -1l1.5 0.2l1.5 -0.4l1.5 0.2l1.5 -1.3l1.5 1l1.5 0.7l1.5 0.3l1.5 0.4l1.5 -1.4l1.5 -1.1l1.5 2.2l1.5 -0.4l1.5 1.1l1.5 -1.8l1.5 0.8l1.5 -1l1.5 0.8l1.5 1.2l1.5 -0.4l1.5 -0.5l1.5 0.4l1.5 -0.4l1.5 -0.3l1.5 1.3l1.5 -0.1l1.5 -0.5l1.5 0.8l1.5 -0.4l1.5 0.7l1.5 -2.1l1.5 0.6l1.5 0.3l1.5 0.6l1.5 -0.5l1.5 0.7l1.5 -0.7l1.5 0.6l1.5 1.1l1.5 -2.5l1.5 -0.1l1.5 -0.4l1.5 1.5l1.5 -1.5l1.5 1.9l1.5 -0.8l1.5 -0.3l1.5 2.1l1.5 -1.6l1.5 1.1l1.5 1l1.5 -2.3l1.5 0.8l1.5 1.1l1.5 -0.7l1.5 -0.1l1.5 -0.1l1.5 -0.3l1.5 -1.7l1.5 -0.6l0.5 0.7l1 1l0.5 -1.3l1 -6.6l1.5 -10.1l1.5 -10.7l1.5 -10.7l1.5 -8.9l1.5 -10.2l1 -5.8l0.5 -7.2l1.5 -14.9l1.5 -16.8l0.7 -9.6l0.8 13l0.5 9.9l1 0.6l1.5 2l1.5 1.1l1.5 0.8l1.5 3.2l1.5 -0.2" stroke="#a463f2" stroke-width="1.5" fill="none" stroke-linejoin="round"/>
<path d="M34 260.5l1 -0.2l1 0.8l1 2.4l1 1.5l1 -0.5l1 3.5l1 -5.2l1 -0.8l1 -5.3l1 -2.3l1 -0.9l1 -0.3l1 2.4l1 3.4l1 -0.6l1 3.5l1 -4.5l1 -2.7l1 -9.6l1 -0.7l1 -3.1l1 0.9l1 3.6l1 2.8l1 0.6l1 -2.8l1 0.1l1 -3l1 2.4l1 -1.8l1 -4l1 -0.4l1 1.2l1 0.3l1 -1.7l1 -1.8l1 0.6l1 0.1l1 1l1 1.7l1 -1.3l1 1.8l1 -2.5l1 1.1l1 0.6l1 -3.4l1 -2.2l1 -2.3l1 -1l1 1.8l1 -2.1l1 0.2l1 2.9l1 -2l1 -3.7l1 0l1 -0.1l1 -4.3l1 0.1l1 3.8l1 -1.3l1 2.3l1 1.1l1 -0.1l1 -4.6l1 -5.8l1 -3.5l1 2l1 -6.2l1 -2.8l1 -6.4l1 -4.9l1 -1.3l1 -7.7l0.7 3.2l0.3 -10l1 3.1l1 7.4l1 -14.7l1 -0.8l1 0.6l1 3.8l1 2l1 -14.9l0.4 4l0.6 -10l1 2.1l1 -9.9l1 -2.4l1 16.4l1 -4.2l1 11.8l1 -7.8l1 -2l1 2l1 -4.9l1 -12.5l1 -6.1l1 4.3l1 8l1 6l1 -5.5l0.8 -7.9l0.2 -1.1l1 -22.5l1 13.2l1 21.2l1 -13.7l1 7l1 -1.7l1 -11.7l1 -6.7l0.4 13.2l0.6 -5.4l1 -7.5l1 -3.8l1 21.4l1 -16.5l1 1.8l1 -7.7l1 -0.8l1 2.7l1 0l1 15.5l1 -7.5l1 -5.5l1 1.1l1 12.3l1 -9.4l1 3.5l0.8 -3.2l0.2 6.4l1 -3.6l1 8.9l1 -0.1l1 -0.8l1 21.4l1 1.5l1 2.6l1 4.7l1 -3.3l1 2.9l1 0.6l1 12.4l1 -13.7l1 -2.9l1 15.8l1 5.1l1 4.7l1 -9l1 3.4l1 10.3l1 -19.5l1 15.9l1 -1.3l1 1.1l1 -8.9l0.9 12.5l0.1 1.1l1 -0.6l1 -13.8l1 -26.1l1 -19.8l1 -28.3l1 12.5l1 11.3l0.3 4.3l0.7 2.2l1 4l1 -4.9l1 -6.7l1 -10.9l1 -3.7l1 1.1l1 1.1l1 2.1l1 3.2l1 8l1 -0.5l1 4.4l1 1.1l1 -0.7l1 4.1l1 -4.5l1 2.3l1 -2.2l1 3.8l1 -2.8l1 5.1l1 -1.8l1 4.7l1 -0.9l1 3.2l1 -3.6l1 3.5l1 0.5l1 -0.7l0.6 0.3l0.4 0.1l1 3l1 0.2l1 1.4l1 -1l1 2.1l1 -2.5l1 0.8l1 -0.1l1 0.6l1 -0.1l1 0.7l1 1.1l1 0.9l1 2.1l0.5 -0.6l0.5 0l1 -0.8l1 1l1 -0.8l1 0.6l1 1.8l1 -1.4l1 1l1 -0.1l1 -0.1l1 -0.6l1 1.9l1 3.1l1 1.3l1 -1l0.4 -0.5l0.6 0.6l1 1.3l1 -0.3l1 3.4l1 0.7l1 -2.3l1 2.6l1 -0.8l1 2.4l0.3 -0.6l0.7 -63.4l0.2 -18.4l0.8 10.2l1 15.7l0.3 2.8l0.7 1.9l1 0.9l1 2.8l1 1.6l1 1.6l1 -0.6l1 1.2l1 0.5l1 1.4l1 1.4l1 0.7l1 -0.2l1 2.3l1 0.8l1 -0.6l1 -1l1 1.5l1 2.9l1 -1l1 -0.7l1 3.7l1 -1.8l1 0.5l1 0.2l1 1.1l1 -0.2l1 1.2l1 -0.2l1 1l1 1.1l1 1.1l1 -1.8l1 2.5l1 -0.8l1 2.2l1 -1.2l1 3.6l1 -1.6l1 0.9l1 0.5l1 -0.8l1 0.9l1 0l1 1l1 2l1 -1.6l1 -1.2l1 2.8l1 0.1l1 1.2l1 -1.6l1 2.6l1 2.3l1 0.8l1 0.3l1 -0.6l1 0.9l1 -0.1l1 0.2l1 0.6l1 -1l1 2.3l1 1.7l1 0.8l1 -1l1 -1.6l1 3.6l0.3 0.7l0.7 -36.4l0.8 -40.4l0.2 2.4l1 14.8l1 13.9l0.7 10.5l0.3 0.7l1 0.6l1 -0.3l1 2.3l1 -0.8l1 -1.1l1 2.6l1 1.6l1 -2.2l1 1.4l1 0.7l1 0.2l1 0.8l1 1.6l1 -0.7l1 1.8l1 -0.2l1 1.2l1 0.9l1 -1l1 2.6l0.6 -2.6l0.4 2.4l1 1.6l1 0.3l1 -0.2l1 0.6l1 2l1 -1.7l1 -0.7l1 1.9l1 0.6l1 0.1l1 1.9l1 -0.2l1 0.5l1 0.8l1 0.5l1 1.4l1 -0.2l1 0.7l1 1.4l1 2.7l1 -3.1l1 1.1l1 0.8l1 -0.2l1 1.2l1 -0.3l1 0.9l1 0.3l1 0.2l1 -0.1l1 2.6l1 -1l1 -0.6l1 0.3l1 -1.6l1 4.2l1 0.5l1 -0.2l1 -0.6l1 0.3l1 1.1l1.5 1.1l1.5 1.3l1.5 -1.4l1.5 0.8l1.5 0.6l1.5 1.3l1.5 -0.7l1.5 1.5l1.5 -0.8l1.5 2.2l1.5 1.3l1.5 -2.3l1.5 0.1l1.5 1.3l1.5 0.3l1.5 1.6l1.5 0.4l1.5 -0.6l1.5 0.4l1.5 1.7l1.5 0.3l1.5 0.6l1.5 1.4l1.5 -0.7l1 1.8l0.5 -1.5l1.5 1.5l1.5 0.7l1.5 -1.2l1.5 2.7l1.5 -1.1l1.5 -1.1l1.5 1.4l1.5 0l1.5 0.8l1.5 0l1.5 1.7l1.5 -0.1l1.5 -0.5l1.5 0.9l1.5 0.7l1.5 1.6l1.5 -1.6l1.5 0.7l1.5 2.3l1.5 -0.3l1.5 0.1l1.5 -0.7l1.5 1.8l1.5 0l1.5 -0.7l1.5 1.9l1.5 0.3l1.5 -0.4l1.5 0.8l0.7 -0.3l0.8 2.9l1.5 -2.1l1.5 2.5l1.5 -0.1l1.5 1l1.5 0.1l1.5 -0.9l1.5 1.2l1.5 0l1.5 0.6l1.5 1.4l1.5 0.3l1.5 0.4l1.5 0.3l1.5 2.1l1.5 -0.9l1.5 0.3l1.5 0.4l1.5 0.5l1.5 0l1.5 0.7l1.5 -1l1.5 1.2l1.5 -0.4l1.5 1.7l1.5 -0.1l1.5 1l1.5 1.2l1.5 0.1l1.5 1.5l0.3 -1.4l1.2 0.8l1.5 0.4l1.5 -0.6l1.5 1l1.5 -0.1l1.5 1l1.5 -1.1l1.5 0.6l1.5 1.2l1.5 0.2l1.5 -0.9l1.5 1.8l1.5 0l1.5 0.3l1.5 0l1.5 0.2l1.5 1.3l1.5 -0.5l1.5 1.4l1.5 -0.7l1.5 1.1l1.5 -0.8l1.5 1.8l1.5 -0.9l1.5 1l1.5 0.3l1.5 0.2l1.5 -0.1l1.5 -0.5l1.5 0.8l1.5 0l1.5 0l1.5 2.4l1.5 -0.4l1.5 0.9l1.5 -0.1l1.5 -0.5l1.5 0l1.5 1.3l1.5 0.1l1.5 0.6l1.5 0.7l1.5 -0.5l1.5 1l1.5 0.2l1.5 0.8l1.5 0.1l1.5 -1.4l1.5 1.6l1.5 1.1l1.5 0.5l1.5 -1.6l0.5 0.4l1 -0.2l1.5 0.5l1.5 -0.8l1.5 1.3l1.5 -0.1l1.5 0.6l1.5 0.5l1.5 -0.7l1.5 -1.3l1.5 1.6l1.5 -0.9l1.5 1.4l1.5 -0.6l1.5 0.1l1.5 1.3l0.3 -0.7l1.2 0l1.5 0.4l1.5 0.4l1.5 -0.8l1.5 0.9l1.5 -0.2l1.5 1.5l1.5 0.1l1.5 -1.8l1.5 -0.5l1.5 -0.6l1.5 2.6l1.5 0l1.5 -0.6l1.5 -1.1l1.5 0.4l1.5 0.5l1.5 1.3l1.5 -3.1l1.5 1.9l1.5 -0.1l1.5 0.5l1.5 -0.4l1.5 -0.5l1.5 0.5l1.5 -0.1l1.5 0.3l1.5 -0.5l1.5 0.6l1.5 0.9l1.5 0.5l1.5 -0.8l1.5 -1l1.5 0.5l1.5 0l1.5 -0.3l1.5 0.5l1.5 -1.9l1.5 1.1l1.5 -0.1l1.5 1.7l1.5 -0.4l1.5 -0.7l1.5 -0.5l1.5 -0.4l1.5 0.9l1.5 0.6l1.5 0.6l1.5 -1.8l1.5 0.9l1.5 0.6l1.5 0l1.5 -1.4l1.5 1.6l1.5 -0.3l1.5 0l1.5 -0.3l1.5 1l1.5 0l1.5 -0.2l1.5 -1.6l1.5 1.1l1.5 -0.8l1.5 1.1l1.5 0.5l1.5 -0.8l1.5 -0.4l1.5 1l1.5 0.2l1.5 -1.1l1.5 0.8l1.5 -0.3l1.5 1l1.5 -1.3l1.5 0.1l1.5 -0.1l1.5 1.1l1.5 0.4l1.5 -0.3l1.5 0.5l1.5 -1.1l1.5 -0.6l1.5 0.1l1.5 0.8l1.5 1.6l1.5 -1l1.5 -0.1l1.5 0.1l1.5 -1.9l1.5 2.9l1.5 -0.2l1.5 -0.8l1.5 1.4l1.5 -0.9l1.5 0.8l1.5 -1.7l1.5 0.7l1.5 -0.2l1.5 0.7l1.5 -1.7l1.5 0.9l1.5 0.9l1.5 0.1l1.5 -0.7l1.5 0.7l1.5 0.2l1.5 0.3l1.5 -0.6l1.5 -0.8l1.5 1.1l1.5 -0.9l1.5 0.1l1.5 -1l1.5 2.1l1.5 -1.3l1.5 0.5l1.5 0.2l1.5 0l1.5 0.7l1.5 -0.1l1.5 0.2l1.5 -1l1.5 0.7l1.5 0.2l1.5 -1.3l1.5 0.9l1.5 -0.3l1.5 0.1l1.5 -0.7l1.5 2.2l1.5 -1.3l1.5 1.7l1.5 -0.9l1.5 -1.1l1.5 0l1.5 -1.4l1.5 2.2l1.5 0.6l1.5 0.9l1.5 -0.8l1.5 -0.8l1.5 0.3l1.5 0.2l1.5 0.1l1.5 -0.5l1.5 0.1l1.5 -0.3l1.5 0.2l1.5 0.7l1.5 -0.6l1.5 -0.2l1.5 0.8l1.5 1.1l1.5 -0.1l1.5 -0.8l1.5 0.7l1.5 0.2l1.5 -0.3l1.5 1.5l1.5 -2.1l1.5 0.1l1.5 0.6l1.5 -0.7l1.5 0.1l1.5 0.1l1.5 1l1.5 -0.4l1.5 0l1.5 0.5l1.5 -1.2l1.5 2.2l0.8 -1.6l0.7 -0.8l1.5 0.5l1.5 0.3l1.5 0.2l1.5 -0.1l1.5 -1.1l1.5 0.6l1.5 2.3l1.5 0.6l1.5 0.4l1.5 -1.3l1.5 -1.1l1.5 1.6l1.5 -1.7l1.5 2.2l1.5 -2.8l1.5 0.4l1.5 1l1.5 -0.5l1.5 0.8l1.5 -0.1l1.5 -0.3l1.5 -0.3l1.5 -1.3l1.5 2.1l1.5 -0.2l1.5 -0.9l1.5 0.5l1.5 1.4l1.5 -1.9l1.5 0.4l1.5 -0.7l1.5 1.5l1.5 -1.4l1.5 0.8l1.5 -0.3l1.5 0.8l1.5 0.6l1.5 -1.1l1.5 -1l1.5 2.2l1.5 -0.9l1.5 0l1.5 -0.3l1.5 0.9l1.5 0.2l1.5 -1.8l1.5 1.6l1.5 -0.9l1.5 0.7l1.5 -1.5l1.5 3.4l1.5 -2.2l1.5 -0.6l1.5 -1.5l1.5 1.8l1.5 0.7l1.5 0l1.5 -0.6l1.5 0.6l1.5 -0.5l1.5 2.5l1.5 -2.7l1.5 0.6l1.5 -0.8l1.5 1.4l1.5 -0.4l1.5 0.1l1.5 0.4l1.5 0.2l1.5 -0.3l1.5 1l1.5 0.1l1.5 -1l1.5 0.2l1.5 1.4l1.5 -2.4l1.5 2.3l1.5 -0.6l1.5 0.2l1.5 -1.6l1.5 1.8l1.5 -0.2l1.5 -0.6l1.5 -1.3l1.5 2.4l1.5 -0.2l1.5 -1.5l1.5 -0.8l1.5 2l1.5 0.9l1.5 -2.2l1.5 0.1l1.5 -0.2l1.5 1.1l1.5 -1.1l1.5 3.1l1.5 -1.7l1.5 0l1.5 -1.7l1.5 2l1.5 0.1l1.5 0l1.5 -1.2l1.5 -0.2l1.5 -0.3l1.5 1.2l1.5 -2.5l1.5 3.4l1.5 -0.5l1.5 0.8l1.5 0.2l1.5 -1.3l1.5 1.2l1.5 -1l1.5 1.2l1.5 -0.4l1.5 -1.6l1.5 1.5l1.5 0l1 -0.2l0.5 -2.2l1.5 -1.2l1.5 -21.5l1.5 -20.5l0.5 -8l1 -24.1l1.5 -35.2l0.2 -3.6l1.3 23l0.1 1.1l1.4 2.6l1.5 2l1.2 3l0.3 0.3l1.5 0.7l1.5 0.2l1.5 1.8l1.5 1.2l1.5 0.4l0.4 1.6l1.1 -34.6l0.2 -5.9l1.3 4.6l1.5 7.5l1.5 1.4l1.5 0l1.5 0.8l1.5 0l1.5 1l1.5 1.8l1.5 1.5l1.5 1.1l1.5 0.2l1.5 1.8l1.5 1.1l1.5 1.6l1.5 -0.4l1.5 0.5l1.5 1.8l1.5 -0.4l1.5 0.8l1.5 2.2l1.5 1.1l1.5 0.9l1.5 1.5l1.5 0.7l1.5 -0.1l1.5 0.1l1.5 1.6l1.5 0.1l1.5 1.2l1.5 0l1.5 0.4l1.5 0.4l1.5 -0.5l1.5 1.4l1 0.5l0.5 0.5l1.5 0l1.5 0.8l1.5 0.4l1.5 0.4l1.5 0.1l1.5 0.2l1.5 1.2l1.5 0.7l1.5 -1.6l1.5 2.4l1.5 0.6l1.5 0l1.5 -0.5l1.5 2.2l1.5 -0.2l1.5 -0.7l1.5 0.8l1.5 -0.4l1.5 0.8l1.5 0.4l1.5 1.2l1.5 0.2l1.5 0.2l0.5 0.8l1 -0.9l1.5 0.7l1.5 -0.5l1.5 2l1.5 0.8l1.5 -0.6l1.5 2l1.5 0.2l1.5 1.2l1.5 0.5l1.5 -0.6l1.5 1.1l1.5 0.9l1.5 1.5l1.5 -1.2l1.5 2l1.5 -2.2l1.5 1.3l1.5 0.4l1.5 1.5l1.5 0.6l1.5 1.1l1 0.5l0.5 -0.2l1.5 -0.4l1.5 1.6l1.5 0l1.5 -1.8l1.5 1.7l1.5 0.8l1.5 0.2l1.5 -1.2l1.5 2.3l1.5 0.1l1.5 -0.5l1.5 0l1.5 0.7l1.5 1.8l1.5 1l1.5 -0.8l1.5 -0.7l1.5 -0.4l1.5 0.5l1.5 1.9l0.5 -0.8l1 0.7l1.5 1l1.5 0.7l1.5 -0.8l1.5 1.9l1.5 0.2l1.5 -0.7l1.5 1.1l1.5 -0.2l1.5 2.1l1.5 -0.8l1.5 0.9l1.5 0.7l1.5 1.8l1.5 -0.1l1.5 -0.2l1.5 0.7l1.5 0.2l1.5 -0.3l1.5 1.3l1.5 -0.4l1.5 0.6l1.5 1l1.5 0.8l1.5 0l1.5 0.2l1.5 0.3l1.5 1.8l1.5 0l1.5 1.8l1.5 -0.6l1.5 1l1.5 0.9l1.4 -0.2l0.1 0.1l1.5 -0.5l1.5 0.6l1.5 1.6l1.5 -1.2l1.5 -1.2l1.5 2.3l1.5 -1.1l1.5 3.2l1.5 0.3l1.5 0.6l1.5 -2.9l1.5 2l1.5 -2.3l1.5 4.4l1.5 -0.5l1.5 -1.1l1.5 2.3l1.5 -1.9l1.5 2l1.5 0.7l1.5 0.6l1.5 -0.7l1.5 0.6l1.5 0.5l1.5 0.5l1.5 0l1.5 1l1.5 0.6l1.5 0.2l1.5 -1l1.3 1.7l0.2 -1.7l1.5 0.1l1.5 1l1.5 -0.8l1.5 1.8l1.5 1.6l1.5 -0.3l1.5 -1.1l1.5 1.2l1.5 0l1.5 -0.4l1.5 0.5l1.5 1.5l1.5 0.2l1.5 -0.3l1.5 0.5l1.5 0l1.5 0.8l1.5 -0.7l1.5 2.3l1.5 0.1l1.5 0.4l1.5 -0.7l1.5 1.6l1.5 -0.2l1.5 -1.5l1.5 1l1.5 0.6l1.5 -0.8l1.5 0.7l1.5 1.5l1.5 0.8l1.5 -0.2l1.5 -0.9l1.5 0l1.5 0.9l1.5 0.1l1.5 -0.8l1.5 1l1.5 0.3l1.5 -0.3l1.5 0l1.5 1.4l1.5 -0.9l1.5 0.6l1.5 -1.1l1.5 1.8l1.5 -1.4l1.5 1.4l1.5 -1.4l1.5 1.7l1.5 -0.4l1.5 0.2l1.5 -0.9l1 1.5l0.5 -12.4l1.5 -33.7l1.5 -41.3l1 -29.2l0.5 4.7l1.5 9.3l1.5 11.1l1.5 2.4l1.5 2.7l1.5 1.2l1.5 1l1.5 1.6l0.6 -0.3l0.9 0.6l1.5 1.3l1.5 0.5l1.5 1.2l1.5 0.9l1.5 0.9l1.5 0.3l1.5 1.2l1.5 0.1l1.5 2.4l1.5 -1.9l1.5 2.7l1.5 0.8l0.5 -0.1l1 -53.7l0.5 -28.1l1 14.1l1.5 15.6l0.8 12.1l0.7 -0.1l1.5 1.5l1.5 1.1l1.5 0.6l1.5 2.7l1.3 1.8l0.2 -0.8l1.5 2.5l1.5 -0.8l1.5 0.9l1.5 1.2l1.5 1.4l1.5 -0.1l1.5 1.3l1.5 2.2l1.5 0.2l1.5 0.7l1 -0.3l0.5 1.9l1.5 -0.1l1.5 1.7l1.5 -0.2l1.5 0.4l1.5 2.5l1.5 -1l1.5 1.3l1.5 1.3l1.5 0.3l1.5 -0.7l1.5 2.3l1.5 2l1.5 0.2l1.5 -0.8l1.5 2.7l1.5 -0.4l1.5 -0.5l1.5 3.1l1.5 -0.9l1.5 1.9l1.5 0.6l1.5 0.3l1.5 0l1.5 1.2l1.5 -1l1.5 1.3l1.5 -1.1l1.5 2.5l1.5 -1l1.5 2.9l1.5 -1.4l1.5 1l1.5 1l1.5 1.7l1.5 -0.2l1.5 0.3l1.5 1.1l1.5 -1.6l1.5 2.3l1.5 0l1.5 -0.9l1.5 1.3l1.5 2.1l1.5 -1l1.5 1.7l1.5 -0.1l1.5 -0.1l1.5 0.5l1.1 -0.2l0.4 0.9l1.5 2.8l1.5 -2.7l1.5 0.8l1.5 0.8l1.5 0.9l1.5 0.5l1.5 -0.3l1.5 0.9l1.5 0.6l1.5 0.4l1.5 0.6l1.5 1l1.5 0.2l1.5 1.1l1.5 -0.6l1.5 2l1.5 -0.7l1.5 0.9l1.5 0.5l1.5 1.3l1.5 -1.7l1.5 1.5l1.5 0.6l1.5 1.5l1.5 0.4l1.5 0.3l1.5 1.6l1.5 -0.3l1.5 1.1l1.5 -0.4l1.5 1l1.5 -0.8l1.5 2.1l1.5 -1.2l1.5 1.9l1.5 0.1l1.5 -0.9l1.5 1.2l1.5 0.3l1.5 0.1l1.5 0.3l1.5 2.1l1.5 -0.9l1.5 1.5l1.5 0.5l1.5 -0.6l1.5 1.9l1.5 0l1.5 0.1l1.5 0.4l1.5 0.1l1.5 0.5l1.5 0l1.5 2.4l1.5 0.5l1.5 -0.3l1.5 -0.5l1.5 -0.2l1.5 0.7l1.5 2.8l1.5 -1.6l1.5 1l1.5 0.8l1.5 -0.5l1.5 1.4l1.5 0.6l1.5 0.9l1.5 -0.1l1.5 0.9l1.5 -0.2l1.5 -0.2l1.5 1.5l0.8 0.2l0.7 0.1l1.5 -0.7l1.5 2.8l1.5 -0.3l1.5 0.6l1.5 -0.3l1.5 -0.8l1.5 0.6l1.5 2.2l1.5 1.4l1.5 -3.3l1.5 3.3l1.5 -0.2l1.5 0.2l1.5 0.4l1.5 1.2l1.5 -0.1l1.5 0.6l1.5 -0.9l1.5 0.6l1.5 0.2l1.5 -0.3l1.5 1l1.5 0.1l1.5 1.3l1.5 -0.1l1.5 1.8l1.5 -1l1.5 -0.2l1.5 1.9l1.5 -0.5l1.5 0.1l1.5 0.4l1.5 1.4l1.5 -1l1.5 0.6l1.4 1.2l0.1 0.9l1.5 0.2l1.5 -0.9l1.5 1.2l1.5 -0.5l1.5 -0.3l1.5 0.5l1.5 0.6l1.5 0.6l1.5 -0.5l1.5 0.2l1.5 0.6l1.5 0.3l1.5 1.8l1.5 -0.5l1.5 0.2l1.5 1.1l1.5 -1.3l1.5 1.7l1.5 -0.3l1.5 0.9l1.5 -0.3l1.5 -0.9l1.5 1.8l1.5 -0.7l1.5 0.2l1.5 -0.6l1.5 0.8l1.5 -1.9l1.5 1.4l1.5 2.5l1.5 -0.1l1.5 -0.5l1.5 1.1l1.5 0.3l1.5 -0.1l1.5 -1.3l0.5 1.6l1 -0.6l1.5 0.3l1.5 0.8l1.5 0.3l1.5 0.6l1.5 0l1.5 -0.5l1.5 0.9l1.5 1.2l1.5 -1.3l1.5 0.9l1.5 -0.1l1.5 -0.2l1.5 0.7l1.5 0.1l1.5 -0.3l1.5 1.6l1.5 -0.5l0.8 1.9l0.7 -0.5l1.5 -1.1l1.5 0.9l1.5 -1.5l1.5 1.2l1.5 -1.3l1.5 1.6l1.5 0.7l1.5 -2l1.5 1l1.5 1.1l1.5 0l1.5 -0.6l1.5 1.2l1.5 -0.5l1.5 -1.4l1.5 1.9l1.5 -2l1.5 0.8l1.5 0.6l1.5 -1.2l1.5 1.1l1.5 0.3l1.5 0.4l1.5 -2l1.5 1.2l1.5 0.1l1.5 -0.9l1.5 -0.7l1.5 0.8l1.5 0.8l1.5 -0.1l1.5 0.8l1.5 -1l1.5 0.2l1.5 -0.1l1.5 -0.1l1.5 -0.9l1.5 1l1.5 0.3l1.5 0l1.5 -0.8l1.5 0.6l1.5 0.6l1.5 0.7l1.5 -1.4l1.5 0.4l1.5 -0.4l1.5 0.8l1.5 -0.5l1.5 1.6l1.5 -0.6l1.5 0.3l1.5 -0.6l1.5 0.2l1.5 1.4l1.5 -0.9l1.5 1.1l1.5 -1l1.5 -0.2l0.5 -0.6l1 0.1l1.5 -2.2l1.5 3.6l1.5 -0.8l1.5 -0.3l1.5 0.4l1.5 -1.8l1.5 1.2l1.5 -0.8l1.5 1.7l1.5 0.5l1.5 -1.2l1.5 1.6l1.5 -1.1l1.5 0.2l1.5 -0.8l1.5 0.3l1.5 -0.4l1.5 1l1.5 -1.3l1.5 1l1.5 1.2l1.5 -0.4l1.5 -2.1l1.5 1.6l1.5 0.7l1.5 0.6l1.5 -1l1.5 0.6l1.5 0.3l1.5 -1.8l1.5 0.9l1.5 0.9l1.5 -1.1l1.5 0.7l1.5 0.6l1.5 -1.5l1.5 0.7l1.5 -0.6l1.5 1.7l1.5 0.2l1.5 -3.1l1.5 1.9l1.5 -1.7l1.5 0l1.5 1.6l1.5 2.9l1.5 -2.7l1.5 0.7l1.5 0.3l1.5 -0.6l1.5 -0.3l1.5 0.3l1.5 -0.5l1.5 -0.8l1.5 1l1.5 0.4l1.5 -0.5l1.5 0.2l1.5 0l1.5 0.6l1.5 -1.2l1.5 1.4l1.5 -0.6l1.5 -0.1l1.5 0l1.5 1.3l1.5 -0.9l1.5 -0.4l1.5 0l1.5 0.9l1.5 -0.7l1.5 0.5l1.5 0.9l1.5 0.2l1.5 -2.1l1.5 1.2l1.5 1l1.5 -0.2l1.5 -1.2l1.5 0.8l1.5 -0.5l1.5 -0.3l1.5 1.4l1.5 -0.4l1.5 -0.1l1.5 0.8l1.5 0.3l1.5 -0.4l1.5 -0.1l1.5 -0.1l0.4 -1.7l1.1 1.1l1.5 0l1.5 -1.7l1.5 2.5l1.5 -0.4l1.5 0l1.5 -0.2l1.5 1l1.5 -0.1l1.5 -0.8l1.5 -0.8l1.5 2.1l1.5 0.4l1.5 -0.4l1.5 0l1.5 -1l1.5 -0.1l1.5 0.3l1.5 -0.4l1.5 -1.5l1.5 0.4l1.5 2.3l1.5 -2l1.5 0l1.5 1.5l1.5 0.3l1.5 -1.1l1.5 0.3l1.5 -0.6l1.5 0.1l1.5 -0.1l1.5 0.8l1.5 0.7l1.5 -1l1.5 -0.2l1.5 1.5l1.5 0.3l1.5 -0.1l1.5 0.5l1.5 -0.9l1.5 0.5l1.5 -1.4l1.5 0.1l1.5 -0.1l1.5 0.9l1.5 0.2l1.5 -0.7l1.5 0.7l1.5 0.2l1.5 -0.5l1.5 -0.9l1.5 1.4l1.5 -1.2l1.5 0.2l1.5 0.8l1.5 0.4l1.5 -0.2l1.5 -0.1l1.5 0.5l1.5 0.5l1.5 -1.1l1.5 0.9l1.5 -0.2l1.5 -0.2l1.5 1.2l1.5 -2.2l1.5 1.2l1.5 0.5l1.5 0.6l1.5 -1.6l1.5 0l1.5 -0.1l1.5 -0.5l1.5 1.7l1.5 0.7l1.5 -1l1.5 -0.5l1.5 0.3l1.5 0.2l1.5 0.1l1.5 1.2l1.5 -0.5l1.5 0.6l1.5 -1.3l1.5 0.9l1.5 -1.7l1.5 0.5l1.5 0.5l1.5 -0.7l1.5 0.2l1.5 0.2l1.5 0.2l1.5 1l1.5 -1.8l1.5 3l1.5 -2.6l1.5 -1.9l1.5 3.1l1.5 -0.4l1.5 0.6l1.5 -1.7l1.5 2l1.5 -1.7l1.5 1.2l1.5 -0.4l1.5 0.1l1.5 2.4l1.5 -3.8l1.5 2.3l0.5 0.5l1 -3l0.5 -1l1 -5.7l1.5 -11.8l1.5 -7.9l1.5 -10.5l1.5 -9.6l1.5 -10.7l1 -6.6l0.5 -6.2l1.5 -16.7l1.5 -16.3l0.7 -8.5l0.8 15.5l0.5 5.6l1 2.3l1.5 0.4l1.5 1.9l1.5 2.2l1.5 1.2l1.5 2.6" stroke="#e88fc9" stroke-width="1.5" fill="none" stroke-linejoin="round"/>
<path d="M34 264.9l1 0.2l1 3l1 1.3l1 -0.8l1 -1.4l1 3.7l1 -1.4l1 -3.6l1 -3.9l1 -2.7l1 -1.3l1 3.2l1 2.9l1 -0.1l1 -0.6l1 5.4l1 -6l1 -0.5l1 -4.8l1 -1.7l1 1.9l1 -3.3l1 -3.3l1 -0.3l1 0.1l1 -1.2l1 -0.7l1 1.8l1 -4.1l1 -0.1l1 4.7l1 -3.1l1 2.9l1 -2l1 1.3l1 -3.5l1 2.3l1 -4.6l1 -0.2l1 2l1 -0.2l1 -2l1 1.9l1 -4.3l1 0.8l1 0.1l1 -2.5l1 -1.2l1 1.9l1 -4.1l1 3.3l1 -4.7l1 1.4l1 -3l1 0.7l1 -0.8l1 -0.4l1 0.1l1 -1.2l1 3.6l1 -1.8l1 1.4l1 -0.3l1 1.9l1 -6.1l1 -4.5l1 -1.8l1 -3.9l1 -4.6l1 -6.5l1 -4.5l1 -3.9l1 -3.3l1 -0.9l0.7 -6.6l0.3 0.7l1 -8l1 5l1 0l1 -1.7l1 1.7l1 -13.3l1 -0.3l1 -5.9l0.4 -2.2l0.6 3.9l1 3.2l1 1.1l1 0.6l1 -15.5l1 9.1l1 -1.8l1 -2.7l1 2.7l1 2.1l1 -1.1l1 -13.8l1 0.3l1 16.2l1 0.3l1 -13.9l1 -3.3l0.8 11l0.2 -24.3l1 11.6l1 -1.3l1 -6.1l1 -1.1l1 -0.5l1 4.9l1 5.4l1 5.2l0.4 -20.7l0.6 9.7l1 -6.7l1 13l1 -17.7l1 13.4l1 0.4l1 -13.6l1 10.7l1 -7.4l1 0l1 19.8l1 -21l1 7.2l1 1l1 -3.8l1 6.7l1 28.6l0.8 -23.9l0.2 4.5l1 -3.6l1 -1l1 2.7l1 8.6l1 1.1l1 15.4l1 -17.5l1 9.8l1 5.1l1 -2l1 0.2l1 2.5l1 7l1 4.2l1 6.6l1 -7.4l1 -16.2l1 16l1 5.9l1 -6.7l1 20l1 5l1 -18.2l1 3.1l1 13.7l0.9 -9.4l0.1 1.3l1 -9.3l1 -8.5l1 -14.4l1 -13.5l1 -22.3l1 11.1l1 7l0.3 -5.2l0.7 1.7l1 -2.5l1 4.6l1 -9.6l1 -5.3l1 -6.9l1 1.2l1 0.5l1 7l1 -0.9l1 0.7l1 -0.5l1 4.1l1 -1.6l1 0.5l1 8.3l1 -2l1 1.2l1 -1l1 -2.4l1 1.1l1 2.1l1 0.6l1 4.2l1 -1.6l1 3.2l1 -1.7l1 -1.3l1 2l1 4l0.6 -2l0.4 1.1l1 1l1 -0.5l1 1.2l1 1l1 0.8l1 -1.5l1 2.8l1 -2.2l1 -1.6l1 1.9l1 0l1 1.4l1 1.3l1 1.3l0.5 -0.7l0.5 1l1 -1.6l1 4.8l1 -0.9l1 1.5l1 0.9l1 0.2l1 -1.2l1 -0.3l1 1.4l1 0.3l1 0.9l1 -0.7l1 2.2l1 -0.3l0.4 0.7l0.6 1.9l1 1.3l1 -2l1 0.6l1 2.3l1 -0.5l1 3.4l1 -2.9l1 3.1l0.3 -2l0.7 -62.4l0.2 -18.6l0.8 10.7l1 15.7l0.3 4.2l0.7 0.2l1 0.6l1 -0.5l1 4.1l1 -0.6l1 1.1l1 1.4l1 2.9l1 0.3l1 1.9l1 -1.7l1 2.7l1 -0.3l1 0.5l1 2l1 -1.6l1 2.8l1 -0.7l1 1.1l1 1.1l1 -0.3l1 2.1l1 0.2l1 0.4l1 0.3l1 0.2l1 -0.6l1 1.8l1 0.2l1 -0.4l1 1.2l1 -0.8l1 1.3l1 -0.3l1 0.2l1 0.5l1 2.4l1 0.2l1 2.3l1 -2.3l1 1.4l1 0.5l1 1.8l1 0l1 -0.5l1 2l1 -1l1 0.1l1 1.3l1 0.6l1 1.3l1 -0.3l1 -0.7l1 0.7l1 0.3l1 0l1 3.2l1 -1.5l1 1.5l1 0.5l1 0.2l1 1.2l1 0.5l1 0l1 0.5l1 1.6l1 -2.2l0.3 0.7l0.7 -35.9l0.8 -40l0.2 2.2l1 17l1 11.6l0.7 13.9l0.3 -2.3l1 2.6l1 -1l1 0.1l1 0.2l1 1l1 1.5l1 1.1l1 -1.3l1 4.4l1 -0.3l1 0.9l1 0.5l1 -0.8l1 1.1l1 0.2l1 -1.5l1 0.7l1 0.5l1 2.2l1 1.2l0.6 0.8l0.4 -0.3l1 -0.3l1 -0.5l1 2.4l1 0.7l1 -0.4l1 0.3l1 0.8l1 1.1l1 0.6l1 0.5l1 0.1l1 -0.7l1 3.7l1 0l1 0.8l1 -0.9l1 0.8l1 2.3l1 -1.5l1 3.1l1 -0.6l1 -1.8l1 1.4l1 -0.9l1 1.5l1 0.9l1 1.1l1 -0.4l1 -2.6l1 4.8l1 -1.1l1 0.6l1 2.5l1 0.5l1 -1.2l1 1.7l1 -1.5l1 -0.2l1 -0.5l1 2.2l1 -0.4l1.5 -0.1l1.5 0.9l1.5 0l1.5 2.3l1.5 -0.1l1.5 -1.2l1.5 2.3l1.5 0.2l1.5 0.6l1.5 2.4l1.5 -1.7l1.5 0.2l1.5 1.1l1.5 1.2l1.5 0.1l1.5 1.2l1.5 -1.7l1.5 2.7l1.5 -1.5l1.5 1.9l1.5 0l1.5 0.6l1.5 1.8l1.5 -1.5l1 2.5l0.5 -1.1l1.5 0.4l1.5 -0.9l1.5 1.9l1.5 -0.1l1.5 0.8l1.5 -0.5l1.5 2.3l1.5 -0.3l1.5 2.3l1.5 -1.3l1.5 -0.1l1.5 0.1l1.5 2.1l1.5 -0.8l1.5 0.8l1.5 -0.5l1.5 2.8l1.5 -1.2l1.5 0.1l1.5 0.3l1.5 1.2l1.5 0.3l1.5 0.5l1.5 0.5l1.5 1.3l1.5 -1.6l1.5 1l1.5 1.2l1.5 0.9l0.7 -0.8l0.8 0.9l1.5 -0.4l1.5 -0.2l1.5 -0.6l1.5 2l1.5 -0.1l1.5 0.4l1.5 -0.7l1.5 4.2l1.5 -2.1l1.5 1.1l1.5 -0.8l1.5 1.3l1.5 0.6l1.5 -0.1l1.5 2.1l1.5 -0.8l1.5 1l1.5 -1l1.5 1.7l1.5 0l1.5 1.4l1.5 0.2l1.5 -0.4l1.5 2.3l1.5 0.2l1.5 0.3l1.5 -0.1l1.5 -1l1.5 3l0.3 -1.2l1.2 -0.3l1.5 0.8l1.5 0.2l1.5 0.3l1.5 -1.3l1.5 3.1l1.5 -0.5l1.5 -1.1l1.5 0.7l1.5 2.3l1.5 -0.4l1.5 -0.1l1.5 -0.1l1.5 1l1.5 0.5l1.5 -0.8l1.5 1.9l1.5 0.6l1.5 0.6l1.5 -1.2l1.5 1l1.5 0.9l1.5 -0.8l1.5 0.7l1.5 0.4l1.5 1.4l1.5 -1.5l1.5 -0.2l1.5 1.2l1.5 0.1l1.5 -0.3l1.5 1.9l1.5 1.1l1.5 -0.6l1.5 0.7l1.5 1.4l1.5 -1.6l1.5 0l1.5 0.4l1.5 2.2l1.5 -0.7l1.5 0.2l1.5 -0.4l1.5 0.5l1.5 2.1l1.5 -2.4l1.5 2.6l1.5 -1.4l1.5 0.2l1.5 -0.5l1.5 0.9l1.5 0.9l0.5 0.1l1 -1l1.5 2l1.5 -2.6l1.5 1.4l1.5 1.6l1.5 -1.1l1.5 0.3l1.5 0l1.5 -0.1l1.5 2.4l1.5 -1l1.5 0.3l1.5 -1l1.5 1l1.5 0.3l0.3 -0.9l1.2 1.1l1.5 0.2l1.5 -0.7l1.5 -0.3l1.5 0l1.5 -0.3l1.5 1.3l1.5 -1.1l1.5 0.2l1.5 0l1.5 0l1.5 0.1l1.5 1.8l1.5 -0.9l1.5 -0.2l1.5 1.3l1.5 -1.2l1.5 -0.1l1.5 0.9l1.5 -2l1.5 0.8l1.5 -0.5l1.5 -0.2l1.5 1.2l1.5 -0.7l1.5 0.9l1.5 -0.7l1.5 0.2l1.5 0.3l1.5 1l1.5 -1.6l1.5 -0.2l1.5 -0.5l1.5 1.6l1.5 1.1l1.5 -2.6l1.5 0.5l1.5 -0.1l1.5 1.1l1.5 1.2l1.5 -1.8l1.5 0.3l1.5 1.2l1.5 -0.5l1.5 0.5l1.5 -0.7l1.5 0l1.5 0.3l1.5 0.4l1.5 0.4l1.5 -0.5l1.5 -0.3l1.5 0.8l1.5 -0.2l1.5 -1l1.5 0.6l1.5 0.5l1.5 -1.3l1.5 -0.6l1.5 -0.3l1.5 1.8l1.5 -0.5l1.5 -0.7l1.5 2.1l1.5 -1.8l1.5 1.4l1.5 -1.3l1.5 0.9l1.5 -1.6l1.5 2.9l1.5 -1.7l1.5 1.2l1.5 -0.5l1.5 0l1.5 0.4l1.5 1l1.5 -1.1l1.5 -0.1l1.5 -1.2l1.5 1.2l1.5 0.7l1.5 -1.5l1.5 1.1l1.5 0.8l1.5 -1.3l1.5 -0.7l1.5 1.8l1.5 -1.1l1.5 1l1.5 -1.3l1.5 3.3l1.5 -2.7l1.5 0l1.5 0.6l1.5 0.5l1.5 0.6l1.5 0.2l1.5 -1.3l1.5 0.8l1.5 -1l1.5 0.9l1.5 1.1l1.5 -0.9l1.5 1.4l1.5 -0.6l1.5 -1.3l1.5 0.5l1.5 0.7l1.5 0.2l1.5 -1.2l1.5 1.8l1.5 -1.2l1.5 -1.3l1.5 -0.4l1.5 0.9l1.5 -0.8l1.5 0.8l1.5 1.3l1.5 -0.6l1.5 0.4l1.5 0.3l1.5 0.6l1.5 -0.6l1.5 0.5l1.5 -0.6l1.5 0.3l1.5 0l1.5 -0.2l1.5 -0.1l1.5 -0.2l1.5 2.7l1.5 -2.1l1.5 -0.3l1.5 -1.5l1.5 1.2l1.5 0.4l1.5 -0.1l1.5 -0.3l1.5 1.4l1.5 -1.6l1.5 1.5l1.5 -1.2l1.5 -1.4l1.5 2.6l1.5 -1.2l1.5 2.2l1.5 -0.1l1.5 -1.8l1.5 0.1l1.5 -0.4l1.5 0.1l1.5 1.2l1.5 0.6l1.5 -1.8l1.5 0.8l1.5 0.3l1.5 -0.1l1.5 -0.7l1.5 0.9l1.5 -0.3l1.5 0.3l1.5 0.9l1.5 -0.6l1.5 -0.5l1.5 1.2l1.5 0.7l1.5 -3.1l1.5 1.4l1.5 1l1.5 -0.4l1.5 0.4l0.8 0l0.7 0.7l1.5 0.3l1.5 -1.1l1.5 -0.5l1.5 1.4l1.5 -0.2l1.5 0.5l1.5 -2.6l1.5 -0.5l1.5 1.9l1.5 0.8l1.5 0.4l1.5 -1.3l1.5 0.4l1.5 -0.3l1.5 0.6l1.5 -0.7l1.5 -0.3l1.5 1.2l1.5 -0.1l1.5 -1.4l1.5 1.6l1.5 0.8l1.5 -1.8l1.5 0.5l1.5 0.1l1.5 0.5l1.5 -0.4l1.5 -0.3l1.5 -0.5l1.5 1.6l1.5 -1.1l1.5 -0.6l1.5 0.3l1.5 -0.1l1.5 1.5l1.5 -1l1.5 0.2l1.5 0.2l1.5 -0.3l1.5 0.8l1.5 0.9l1.5 -1.3l1.5 0.4l1.5 0.1l1.5 0.6l1.5 -1.2l1.5 -1.1l1.5 1.2l1.5 0.5l1.5 0.3l1.5 0.9l1.5 -0.9l1.5 1l1.5 -3l1.5 -0.2l1.5 1.1l1.5 0.4l1.5 -0.1l1.5 -0.9l1.5 0.6l1.5 1.5l1.5 -0.8l1.5 1.3l1.5 -0.5l1.5 -1.6l1.5 0.5l1.5 -0.6l1.5 0.6l1.5 1.1l1.5 -0.2l1.5 0l1.5 -0.7l1.5 0.4l1.5 0.8l1.5 0.2l1.5 -1.4l1.5 -0.1l1.5 0.9l1.5 -0.7l1.5 1.3l1.5 -1.5l1.5 1.5l1.5 0.2l1.5 -0.1l1.5 -0.5l1.5 0.8l1.5 -1.2l1.5 1.1l1.5 -0.7l1.5 1.9l1.5 -1.3l1.5 0.5l1.5 0.3l1.5 -1l1.5 -0.6l1.5 0.8l1.5 -0.6l1.5 -0.2l1.5 2.1l1.5 -0.5l1.5 -0.8l1.5 -0.5l1.5 1.4l1.5 -1l1.5 -1.3l1.5 2.5l1.5 -1.4l1.5 -0.2l1.5 0.5l1.5 -0.4l1.5 1.5l1.5 -1.1l1.5 1.5l1.5 -0.9l1.5 -1l1.5 -0.3l1.5 0.9l1.5 -0.1l1.5 0.6l1 -1.1l0.5 -0.3l1.5 -3.6l1.5 -20.8l1.5 -18.8l0.5 -8.1l1 -24.6l1.5 -34.7l0.2 -4.8l1.3 24.2l0.1 0.1l1.4 5.6l1.5 1.7l1.2 1l0.3 0.9l1.5 0.6l1.5 0.2l1.5 0.5l1.5 1.9l1.5 0.3l0.4 0.9l1.1 -34.2l0.2 -6.2l1.3 5.7l1.5 4.1l1.5 5.1l1.5 -1.9l1.5 1.4l1.5 2.4l1.5 2.5l1.5 -2l1.5 2.2l1.5 2.2l1.5 1.8l1.5 -1.4l1.5 2.9l1.5 0.3l1.5 0.1l1.5 0.4l1.5 2.1l1.5 0.8l1.5 0.6l1.5 1l1.5 0.8l1.5 1.9l1.5 1.9l1.5 -2l1.5 0.9l1.5 1.3l1.5 0.1l1.5 0.8l1.5 -0.6l1.5 0.3l1.5 1l1.5 -0.3l1.5 2.3l1.5 0.7l1 -1.4l0.5 -0.1l1.5 1.4l1.5 0.6l1.5 -0.3l1.5 0.3l1.5 1.4l1.5 0.3l1.5 0l1.5 -0.5l1.5 2.2l1.5 -1.8l1.5 1l1.5 2.3l1.5 1.1l1.5 -0.8l1.5 -0.2l1.5 -0.1l1.5 0.5l1.5 -0.1l1.5 0.4l1.5 1.6l1.5 -0.7l1.5 2.3l1.5 1.8l0.5 -0.5l1 0.3l1.5 2.2l1.5 -0.9l1.5 0l1.5 -0.6l1.5 0.7l1.5 -0.4l1.5 2.1l1.5 1.6l1.5 0.5l1.5 -1l1.5 0.8l1.5 -0.2l1.5 0.4l1.5 2.2l1.5 -0.9l1.5 0.4l1.5 0.9l1.5 1.7l1.5 0l1.5 -0.8l1.5 1.2l1 0.6l0.5 -0.4l1.5 0.9l1.5 1.1l1.5 -1.9l1.5 1.1l1.5 0.2l1.5 1.6l1.5 0l1.5 -0.4l1.5 -0.2l1.5 2.3l1.5 0.6l1.5 -1.2l1.5 0.5l1.5 0.5l1.5 0.8l1.5 -0.8l1.5 1.5l1.5 0.3l1.5 0.7l1.5 -1.8l0.5 1.5l1 1l1.5 -0.5l1.5 0.2l1.5 0l1.5 3l1.5 -0.5l1.5 0.5l1.5 0.4l1.5 0l1.5 2.2l1.5 -0.9l1.5 1.1l1.5 1.1l1.5 -2.1l1.5 1.8l1.5 -0.6l1.5 0.6l1.5 1.3l1.5 1.6l1.5 -0.2l1.5 -0.2l1.5 0.2l1.5 2.7l1.5 -0.2l1.5 -1.5l1.5 0.8l1.5 1.5l1.5 1.4l1.5 0.6l1.5 0.3l1.5 -0.7l1.5 0.8l1.5 0.1l1.4 0.9l0.1 0.5l1.5 -1.8l1.5 1.3l1.5 -0.4l1.5 1.1l1.5 1.8l1.5 -0.8l1.5 -1l1.5 2l1.5 0.2l1.5 1l1.5 -0.4l1.5 -0.9l1.5 2.5l1.5 -0.2l1.5 -0.5l1.5 0.4l1.5 0.5l1.5 0.1l1.5 1.5l1.5 -0.1l1.5 0.2l1.5 0.3l1.5 0.3l1.5 0.7l1.5 0.9l1.5 -1.5l1.5 1.5l1.5 0.3l1.5 0.8l1.5 0l1.3 1.2l0.2 -0.8l1.5 0.7l1.5 1l1.5 0.1l1.5 -0.6l1.5 0.4l1.5 0.9l1.5 0.6l1.5 0.5l1.5 -0.7l1.5 0.8l1.5 -0.8l1.5 -0.8l1.5 1.5l1.5 2l1.5 0.1l1.5 -1.8l1.5 1.7l1.5 1l1.5 -0.3l1.5 0.4l1.5 0.7l1.5 0.4l1.5 -1.2l1.5 1.7l1.5 1.3l1.5 -0.5l1.5 0.1l1.5 0l1.5 -1.3l1.5 2.6l1.5 0l1.5 0.4l1.5 1.2l1.5 -2.8l1.5 0.8l1.5 -0.1l1.5 0.6l1.5 0.5l1.5 0.2l1.5 -1.8l1.5 3.3l1.5 -0.7l1.5 1l1.5 -0.4l1.5 -1.6l1.5 -0.2l1.5 3.7l1.5 -2.6l1.5 1.1l1.5 -0.9l1.5 0l1.5 0.6l1.5 0.2l1 1.7l0.5 -11.7l1.5 -34.2l1.5 -43l1 -29.6l0.5 3l1.5 13.5l1.5 10l1.5 -0.1l1.5 1.4l1.5 3.1l1.5 1.8l1.5 0.4l0.6 0.7l0.9 1.2l1.5 -0.3l1.5 2.2l1.5 0.7l1.5 -0.6l1.5 3.1l1.5 0.7l1.5 0.6l1.5 1.5l1.5 0.6l1.5 -0.8l1.5 3l1.5 -1.7l0.5 0.4l1 -54.2l0.5 -26.9l1 12.2l1.5 17.9l0.8 10l0.7 0.8l1.5 2.8l1.5 0.9l1.5 0.3l1.5 3.7l1.3 -0.6l0.2 1.8l1.5 -0.2l1.5 0.4l1.5 2.2l1.5 1l1.5 2.4l1.5 -1.6l1.5 0.6l1.5 1l1.5 2.9l1.5 1.2l1 -0.1l0.5 -1.2l1.5 2.8l1.5 -0.3l1.5 0.5l1.5 2l1.5 -0.4l1.5 1.7l1.5 -0.6l1.5 1.6l1.5 -0.3l1.5 2.3l1.5 -1.1l1.5 2.8l1.5 0.8l1.5 -1.2l1.5 2l1.5 -0.2l1.5 1.2l1.5 -1.3l1.5 2.1l1.5 2.2l1.5 1l1.5 -0.6l1.5 0.3l1.5 0.2l1.5 -0.2l1.5 2.9l1.5 -3.4l1.5 3l1.5 2l1.5 -1.8l1.5 2.5l1.5 -0.1l1.5 -0.9l1.5 1.2l1.5 1.7l1.5 -0.6l1.5 1.5l1.5 0.3l1.5 -0.8l1.5 2.5l1.5 -1.3l1.5 0.3l1.5 2.1l1.5 0.8l1.5 0.7l1.5 -1.1l1.5 -0.8l1.5 1.4l1.1 2.4l0.4 -1.7l1.5 0.6l1.5 1.3l1.5 -0.9l1.5 3.3l1.5 -1.6l1.5 0.6l1.5 0.3l1.5 1.3l1.5 0.5l1.5 1.3l1.5 -0.7l1.5 0.3l1.5 1.7l1.5 -0.4l1.5 0.3l1.5 0.6l1.5 0.5l1.5 0l1.5 1l1.5 -1l1.5 1.4l1.5 1.7l1.5 -0.7l1.5 1.5l1.5 0l1.5 0.8l1.5 0.9l1.5 -0.7l1.5 0.2l1.5 2.9l1.5 -1l1.5 -1.4l1.5 3l1.5 0.1l1.5 1.5l1.5 0.4l1.5 0.1l1.5 1l1.5 -1l1.5 -0.8l1.5 2.3l1.5 0l1.5 1.7l1.5 0.5l1.5 -0.6l1.5 1.4l1.5 -0.2l1.5 0.8l1.5 -0.7l1.5 1l1.5 0.3l1.5 0.7l1.5 0.6l1.5 1.6l1.5 -1l1.5 1.4l1.5 0.2l1.5 0.7l1.5 -0.1l1.5 0.8l1.5 -0.7l1.5 2.1l1.5 0l1.5 -0.1l1.5 1.2l1.5 0.9l1.5 0.7l1.5 0.2l1.5 0l1.5 0.1l1.5 1.5l1.5 -0.4l0.8 1.1l0.7 -0.1l1.5 1l1.5 -0.7l1.5 1.5l1.5 -0.2l1.5 -0.2l1.5 1.2l1.5 -0.1l1.5 0.3l1.5 -0.5l1.5 0.9l1.5 0.9l1.5 -0.1l1.5 0.5l1.5 0.6l1.5 0.5l1.5 0.4l1.5 -1.3l1.5 1.7l1.5 1.4l1.5 -0.1l1.5 0.8l1.5 -1.5l1.5 2.1l1.5 -0.8l1.5 1.6l1.5 0.9l1.5 -0.3l1.5 -0.3l1.5 1.9l1.5 -0.7l1.5 0.4l1.5 -0.2l1.5 -0.1l1.5 2.4l1.5 -2.6l1.4 0.6l0.1 1.8l1.5 0.4l1.5 -0.7l1.5 0.1l1.5 1.1l1.5 -1l1.5 1.4l1.5 -0.9l1.5 2.1l1.5 -1.1l1.5 1.6l1.5 -0.4l1.5 0.5l1.5 -0.6l1.5 2l1.5 -1.1l1.5 0.8l1.5 -0.8l1.5 -0.1l1.5 2.7l1.5 -2.5l1.5 2.3l1.5 -0.2l1.5 1.4l1.5 -0.8l1.5 -0.4l1.5 0.5l1.5 -0.9l1.5 1.4l1.5 0.3l1.5 0.8l1.5 -0.9l1.5 -0.5l1.5 0.7l1.5 0.5l1.5 1.7l1.5 -1.9l0.5 2.6l1 0.2l1.5 -1.3l1.5 1.1l1.5 -1.3l1.5 0.3l1.5 3.9l1.5 -1.2l1.5 0.4l1.5 -0.5l1.5 -1.6l1.5 1.8l1.5 -1l1.5 2.3l1.5 -1.5l1.5 1.8l1.5 0l1.5 0.4l1.5 0.1l0.8 0l0.7 0.2l1.5 1.6l1.5 -2.2l1.5 0.3l1.5 -0.8l1.5 0.7l1.5 -0.4l1.5 2.1l1.5 -1.4l1.5 -0.4l1.5 1.5l1.5 0.3l1.5 0.2l1.5 -1.5l1.5 0.6l1.5 -1.1l1.5 1.4l1.5 -1.2l1.5 1.5l1.5 -0.4l1.5 0.9l1.5 0.3l1.5 0.2l1.5 -3.7l1.5 3.2l1.5 -1.6l1.5 2.2l1.5 -0.9l1.5 1l1.5 0.4l1.5 -1.6l1.5 0.2l1.5 0.9l1.5 -1.1l1.5 -0.4l1.5 1.1l1.5 -1.3l1.5 2.3l1.5 -1.1l1.5 0.2l1.5 -0.9l1.5 -0.4l1.5 0.5l1.5 2.3l1.5 -1.4l1.5 -0.5l1.5 0.4l1.5 -1.9l1.5 3.4l1.5 -2l1.5 -0.6l1.5 0.8l1.5 2l1.5 -1.9l1.5 0.9l1.5 -0.4l1.5 -0.9l1.5 2.5l1.5 -1.5l1.5 0.1l0.5 0.8l1 -0.5l1.5 0l1.5 0.9l1.5 -1.5l1.5 0.8l1.5 0.6l1.5 -0.5l1.5 0l1.5 -0.7l1.5 -1.4l1.5 0.3l1.5 0.4l1.5 0.8l1.5 -1.8l1.5 2l1.5 0.8l1.5 -1.3l1.5 0.4l1.5 1.2l1.5 -0.9l1.5 0.4l1.5 -1.6l1.5 2.5l1.5 -0.6l1.5 -0.1l1.5 -1.3l1.5 1.5l1.5 -1.2l1.5 0.9l1.5 -1.1l1.5 1.9l1.5 -0.2l1.5 1.4l1.5 -3.2l1.5 1.8l1.5 0.2l1.5 -0.8l1.5 0.2l1.5 0l1.5 1.1l1.5 -1.9l1.5 1.7l1.5 -2.2l1.5 0.7l1.5 0.8l1.5 -0.5l1.5 1.7l1.5 -0.9l1.5 -0.8l1.5 0.7l1.5 -0.3l1.5 1.5l1.5 -1.6l1.5 2.4l1.5 -2.1l1.5 1.8l1.5 -0.5l1.5 1l1.5 -1.4l1.5 0.7l1.5 0.2l1.5 -1.3l1.5 -0.4l1.5 1.4l1.5 -1.4l1.5 0.1l1.5 1.4l1.5 -0.3l1.5 -0.6l1.5 -0.1l1.5 0.6l1.5 -0.4l1.5 1.2l1.5 -0.7l1.5 -0.6l1.5 0.5l1.5 0.8l1.5 -0.9l1.5 -0.2l1.5 0.2l1.5 0.4l1.5 -1.1l1.5 3l1.5 -1.3l1.5 -1.7l1.5 2.4l1.5 0.3l1.5 -0.4l1.5 -1.9l1.5 2.7l1.5 -2.3l0.4 1.7l1.1 -1l1.5 -0.4l1.5 -0.3l1.5 -0.7l1.5 2.8l1.5 -1.7l1.5 0.5l1.5 -0.7l1.5 1.6l1.5 -1.5l1.5 0l1.5 -0.7l1.5 0.9l1.5 0.4l1.5 -0.2l1.5 -0.1l1.5 0.3l1.5 -0.2l1.5 1.7l1.5 -0.3l1.5 -0.8l1.5 0.1l1.5 -0.2l1.5 0.1l1.5 -1.7l1.5 2.3l1.5 0.5l1.5 -1.1l1.5 1.6l1.5 -1.6l1.5 -0.3l1.5 0.3l1.5 0.2l1.5 0l1.5 -0.1l1.5 -0.3l1.5 1.7l1.5 -1.2l1.5 0.3l1.5 -0.8l1.5 0.8l1.5 -0.3l1.5 1l1.5 0.4l1.5 0.2l1.5 -2.3l1.5 1l1.5 0.3l1.5 -0.2l1.5 0.3l1.5 -1.4l1.5 0.9l1.5 -0.5l1.5 0.4l1.5 -0.4l1.5 2.2l1.5 -1.7l1.5 1l1.5 -1l1.5 0.9l1.5 -0.5l1.5 -0.5l1.5 0.9l1.5 0.2l1.5 0.2l1.5 0.7l1.5 -1.5l1.5 1.5l1.5 -1.5l1.5 0.4l1.5 0.1l1.5 0.1l1.5 0.5l1.5 0.7l1.5 -2.4l1.5 0.9l1.5 -0.8l1.5 0.4l1.5 2.6l1.5 -2.7l1.5 1.8l1.5 -1.6l1.5 0.3l1.5 -1l1.5 1.2l1.5 0.6l1.5 0.5l1.5 0.1l1.5 -0.5l1.5 1.4l1.5 -0.9l1.5 -0.3l1.5 -0.1l1.5 -1l1.5 1.4l1.5 -0.7l1.5 0.2l1.5 0.3l1.5 -0.9l1.5 -0.4l1.5 2.7l1.5 -1.4l1.5 0.9l1.5 -0.8l1.5 1.2l1.5 0l1.5 -2.9l1.5 3.3l1.5 -1.5l0.5 0l1 -0.3l0.5 -2.4l1 -5.9l1.5 -9.1l1.5 -9.8l1.5 -10.2l1.5 -11.9l1.5 -8.1l1 -8.9l0.5 -2.6l1.5 -19l1.5 -16.7l0.7 -7.1l0.8 13.3l0.5 8.3l1 0.8l1.5 1.4l1.5 2.2l1.5 0.4l1.5 1.7l1.5 2.1" stroke="#a167f1" stroke-width="1.5" fill="none" stroke-linejoin="round"/>
<path d="M34 261.6l1 -0.9l1 2.2l1 2l1 2.5l1 1.1l1 0.7l1 -2.5l1 -3.8l1 -2.6l1 -5.8l1 -1.9l1 2.1l1 1.2l1 3.6l1 -1.3l1 2.7l1 0.1l1 -4l1 -3.1l1 -2.5l1 -2.2l1 0.7l1 -2.1l1 0.2l1 0.2l1 -2.2l1 0.8l1 -1.3l1 0.2l1 0.5l1 -3.1l1 1.8l1 -1.5l1 -0.1l1 1.4l1 -0.9l1 -3l1 -0.8l1 -0.3l1 0.2l1 1.5l1 -1.3l1 -0.6l1 0l1 -2.8l1 -3.3l1 0.3l1 2.5l1 -2.7l1 -1.3l1 1.7l1 -0.2l1 -0.9l1 -1.5l1 0.5l1 0.8l1 -2.1l1 -1.4l1 -0.9l1 -0.8l1 4.9l1 1.9l1 -0.3l1 1.7l1 -6.8l1 -3.1l1 -4.9l1 -6.6l1 -5.2l1 -1.2l1 -6.2l1 -2.3l1 -8.2l1 -5.3l0.7 2.7l0.3 -4.3l1 1l1 0.7l1 -2.3l1 0.9l1 -2.7l1 -16.1l1 -2.9l1 -1.2l0.4 11.8l0.6 0.5l1 1.7l1 -5.7l1 3.3l1 -3.2l1 -0.4l1 -8.7l1 9.3l1 -6.3l1 -11.9l1 5.9l1 -4.2l1 19.7l1 -16.2l1 -6.4l1 -3.3l1 -2.7l0.8 1.1l0.2 -0.8l1 5.1l1 1.8l1 5.7l1 -1.3l1 -8.8l1 -3.8l1 1.6l1 -7.6l0.4 -1.5l0.6 2.7l1 1.3l1 5.2l1 -3.7l1 11.3l1 -4.2l1 1.5l1 -6.3l1 -1.4l1 -6.2l1 7.8l1 -7.1l1 6.3l1 5.9l1 3.4l1 0l1 -0.4l0.8 0.9l0.2 -7.5l1 7.7l1 -5.9l1 6.4l1 15.7l1 3.7l1 -0.5l1 -12.1l1 10l1 13.4l1 7.3l1 -9.3l1 10.3l1 -6.9l1 -0.1l1 8.8l1 4.5l1 -15.9l1 0.8l1 8l1 1.3l1 -4.5l1 2.5l1 9.3l1 2.3l1 4.3l0.9 -3.6l0.1 -2.6l1 -18.1l1 3.8l1 -12.7l1 -21.6l1 -20.3l1 13.5l1 0.4l0.3 9.1l0.7 -2.8l1 -1.8l1 -7.7l1 -1.3l1 -6.5l1 -11.5l1 2.7l1 5.7l1 -0.7l1 6.3l1 -0.3l1 3.3l1 2.9l1 5.1l1 -4.5l1 6.2l1 -3l1 -1.1l1 3l1 -3.1l1 3.7l1 2.2l1 2l1 4.1l1 -3.4l1 2.4l1 -0.1l1 -1.4l1 -0.2l1 6.7l0.6 -3.8l0.4 0.8l1 0.2l1 -1.4l1 2.9l1 0.3l1 2.6l1 -2.5l1 3.3l1 -2.1l1 1.1l1 2.2l1 -1.3l1 -0.1l1 0.9l1 -1.3l0.5 1.8l0.5 -1.1" stroke="#9b60ee" stroke-width="1.5" fill="none" stroke-linejoin="round"/>
<path d="M34 258.2l1 -1.8l1 2.4l1 2.7l1 0l1 0.4l1 0.8l1 -4l1 2.1l1 -5.2l1 -3.7l1 -1.7l1 3.6l1 1.5l1 -0.2l1 1.2l1 5l1 -7.7l1 1.2l1 -6.5l1 -1.5l1 1l1 -2.4l1 0.2l1 3.2l1 -1.8l1 -1.4l1 0.7l1 -4.6l1 0.6l1 0l1 1.1l1 -0.6l1 1.2l1 -0.6l1 -1.7l1 -3.3l1 5.2l1 -0.8l1 -0.8l1 -1.6l1 -2.6l1 1.5l1 -2.4l1 -1.9l1 0.1l1 0.6l1 -2.1l1 1.4l1 0.4l1 1.7l1 -1l1 -1.8l1 -2.7l1 -1.2l1 0.5l1 -3.8l1 -4l1 -0.1l1 -2.5l1 3.6l1 -0.2l1 3.6l1 2.8l1 3l1 -6.2l1 -1.9l1 -6.1l1 -6.1l1 -8.2l1 -2.3l1 -2.2l1 5.5l1 -18.6l1 8.6l0.7 -11.9l0.3 -3.4l1 2.8l1 -7.4l1 11.6l1 -5.9l1 10l1 -14.3l1 -4.9l1 -10.7l0.4 -2.9l0.6 6.3l1 -0.8l1 6.6l1 -10.2l1 6.9l1 0l1 -5.6l1 5l1 -7.4l1 11.4l1 2.8l1 -4.6l1 3.8l1 -14.4l1 4.2l1 -18.7l1 24.4l0.8 -12.1l0.2 0.3l1 -2.3l1 -4.9l1 -11.1l1 21.4l1 -3.9l1 -8.7l1 -2.2l1 -4.4l0.4 2.9l0.6 5.9l1 -11.8l1 10.9l1 -8.8l1 1.9l1 9.7l1 -9.9l1 -2.2l1 -2.1l1 -7l1 -3.1l1 22.6l1 -0.8l1 8.8l1 -14l1 6.4l1 -1.6l0.8 0.3l0.2 -8.8l1 3.6l1 18.9l1 10.7l1 -15.5l1 6.1l1 7.1l1 17.3l1 -3.5l1 -18.8l1 4.8l1 2.5l1 13.1l1 11.6l1 -14l1 3.1l1 3.4l1 2.5l1 4.8l1 0.2l1 12.1l1 -3l1 1.6l1 4.7l1 -1.4l1 -1.8l0.9 6.1l0.1 -20.6l1 0.4l1 4.6l1 -32.2l1 -13.5l1 -28.4l1 18.4l1 9l0.3 -0.3l0.7 -2.3l1 -9.4l1 13.2l1 -11.2l1 -1.8l1 -11.1l1 -4l1 3.9l1 7.4l1 4.9l1 -3.3l1 4.1l1 0.3l1 3l1 -1.4l1 2.7l1 -2.1l1 -0.1l1 1.9l1 1.4l1 1.1l1 6.1l1 -4.9l1 3l1 -2.5l1 6.1l1 -2.9l1 1.3l1 2.6l1 -2.4l0.6 -0.2l0.4 3l1 -1.1l1 0.6l1 1.6l1 -1.1l1 -0.2l1 4.1l1 1.4l1 -0.8l1 -0.1l1 0.7l1 -0.7l1 1.9l1 0.8l1 -2.3l0.5 2.5l0.5 -1.3" stroke="#ff8ab7" stroke-width="1.5" fill="none" stroke-linejoin="round"/>
<path d="M34 261.9l1 2.8l1 2.9l1 0.2l1 -0.6l1 -1.5l1 1.8l1 -5l1 2.7l1 -5.5l1 -1.7l1 -2.4l1 1.6l1 2.1l1 1.7l1 -0.5l1 1.7l1 -2.9l1 -1.9l1 -5.1l1 1.2l1 0.2l1 -0.9l1 -1.8l1 -1l1 -1.9l1 1.5l1 -2.2l1 -1.2l1 -0.7l1 0.4l1 1.1l1 -4.2l1 1.5l1 -1.1l1 0.3l1 -0.5l1 1.1l1 -0.7l1 1.9l1 -0.1l1 -1.8l1 2l1 -3.4l1 0.1l1 -3.6l1 1.1l1 -1.8l1 3l1 -4.6l1 3.5l1 -1.9l1 -3.2l1 3.4l1 -1.9l1 -3l1 -0.7l1 -3.6l1 0.4l1 -0.9l1 -1l1 5.3l1 -0.3l1 2.2l1 0.9l1 -3.3l1 -7l1 -5.3l1 -4.9l1 -1.1l1 -5.2l1 -3.6l1 -10.4l1 -0.8l1 -10.8l0.7 -2.3l0.3 -6l1 10.7l1 -4.5l1 -6.8l1 9l1 -7.7l1 10.8l1 -7.2l1 -10l0.4 3.2l0.6 3.3l1 5.4l1 -22.9l1 21.7l1 -13.3l1 -3l1 4.2l1 -6.1l1 -13.9l1 14.3l1 -6l1 6.7l1 -2.4l1 -12.8l1 0.2l1 8.6l1 5.5l0.8 -6.2l0.2 -1l1 8.6l1 -13.6l1 7.4l1 -13.1l1 -13.3l1 8.6l1 15.2l1 -12.1l0.4 8.1l0.6 -4.7l1 2.8l1 -1.6l1 -13.3l1 5.5l1 -5.5l1 2.6l1 7.9l1 -1l1 1.3l1 -12l1 14.9l1 -3.5l1 -1.4l1 5.8l1 1.7l1 -14.2l0.8 9.4l0.2 -12.2l1 15.9l1 -2.6l1 3.7l1 2.7l1 -3.2l1 13.4l1 -6.3l1 4l1 7l1 8.6l1 14.1l1 -8.9l1 -5.9l1 15.7l1 -14.2l1 9.1l1 7.4l1 0.9l1 6.3l1 2.4l1 -16l1 -3.8l1 6l1 5.3l1 -9.6l0.9 23.4l0.1 -3.2l1 -16.5l1 6l1 -28.8l1 -21.1l1 -20l1 15.3l1 0.1l0.3 8.1l0.7 1.6l1 -8.2l1 5.5l1 -5.8l1 -9l1 -10.5l1 7.7l1 3.7l1 1.9l1 1.6l1 2.1l1 4l1 -1.5l1 1.8l1 1.9l1 3.9l1 0.7l1 1.9l1 1.5l1 -4l1 3.3l1 -1.1l1 -0.4l1 2.1l1 -2.7l1 3.9l1 2.1l1 -0.6l1 5.2l1 -1l0.6 1.7l0.4 1.5l1 -0.5l1 -2.1l1 -1.4l1 -4.3l1 3.4l1 1.5l1 3l1 -0.5l1 2.8l1 -1.9l1 4.4l1 -2.1l1 1.7l1 -1.2l0.5 2.8l0.5 -3.3" stroke="#6fc4ac" stroke-width="1.5" fill="none" stroke-linejoin="round"/>
<path d="M34 260l1 2.1l1 3.1l1 -0.5l1 3.8l1 -1l1 -1.4l1 -3.6l1 -0.9l1 -2.9l1 -2.9l1 -3.5l1 1l1 2l1 3.3l1 3.5l1 1.5l1 -3.5l1 -3.7l1 -5.1l1 -0.2l1 -3.8l1 0.5l1 -1.2l1 1l1 -1.1l1 0.1l1 1.4l1 -0.8l1 0.5l1 -0.5l1 -2.6l1 -0.2l1 0.1l1 -1.2l1 -1l1 2.6l1 -1.4l1 -3.5l1 -2.1l1 2.6l1 -1.4l1 -1.5l1 1.7l1 -0.7l1 -1.1l1 2.5l1 -3.5l1 0.9l1 -3.1l1 0l1 -2l1 0.4l1 -0.9l1 -1.1l1 -2.7l1 2.1l1 2l1 -3.5l1 -2l1 1.3l1 -1l1 2.6l1 0.1l1 4.9l1 -4.4l1 -3.4l1 -4.5l1 -2.6l1 -5.9l1 -8.2l1 -5.5l1 -8.2l1 -6.4l1 -9.8l0.7 -11.5l0.3 15.8l1 -11.7l1 13.4l1 9.7l1 -31.7l1 0.9l1 -9.6l1 14.6l1 0.5l0.4 2.5l0.6 0.7l1 -4.2l1 0.8l1 -4l1 1.9l1 -5.8l1 3.9l1 -13.6l1 8.2l1 -6.6l1 5.8l1 -5.6l1 7l1 -7.8l1 6.3l1 -2.1l1 -2.8l0.8 -0.9l0.2 2.2l1 -9.2l1 -1.6l1 10.3l1 -1.2l1 -9.3l1 7.4l1 -2.5l1 -1.1l0.4 -13.7l0.6 -3l1 -6.8l1 5.6l1 3l1 9.4l1 -1.2l1 9.7l1 -8.1l1 2.4l1 0.3l1 1.1l1 -8.1l1 -11.9l1 8.3l1 6.6l1 -3.4l1 -1.9l0.8 -2.9l0.2 9.6l1 6l1 3.7l1 1.4l1 9.5l1 -2.9l1 0.8l1 10.1l1 11.3l1 5l1 -6.4l1 3.2l1 2.8l1 4.3l1 -1.2l1 2.2l1 8.7l1 -6.9l1 -0.6l1 -6.2l1 6.7l1 -7.5l1 3.3l1 13.4l1 -8.6l1 14.3l0.9 -1l0.1 0.8l1 -11l1 -9.6l1 -21l1 -24.1l1 -22.2l1 15l1 16.2l0.3 -4l0.7 6.2l1 -7l1 7l1 -9.6l1 -5.9l1 -12l1 5l1 1.6l1 7.1l1 -1l1 8.6l1 -6.3l1 5.3l1 -0.2l1 -3.2l1 3.9l1 0.1l1 3.4l1 2.2l1 -1.5l1 1.2l1 4.6l1 -3.3l1 0.6l1 4.3l1 0.4l1 0.9l1 -1.3l1 3.7l1 -0.1l0.6 -1.7l0.4 1.3l1 -1.8l1 -1.5l1 3.7l1 3l1 -4l1 1.7l1 2.6l1 0.1l1 0.8l1 2.5l1 -1.1l1 -0.8l1 -0.1l1 -0.4l0.5 1.5l0.5 0" stroke="#3ca951" stroke-width="1.5" fill="none" stroke-linejoin="round"/>
<path d="M34 260.9l1 2.6l1 4.4l1 -0.7l1 5.2l1 0.9l1 4.2l1 -2.8l1 -4.8l1 -4l1 -3.2l1 -2.1l1 1.1l1 4.9l1 -1.7l1 2.6l1 0.5l1 -5.7l1 -4.5l1 -3l1 1.8l1 -1.1l1 -1.6l1 -1.1l1 -3.5l1 0.2l1 1.8l1 -1l1 0.3l1 -1.9l1 1.3l1 -0.9l1 -2.5l1 1l1 2.1l1 -1.1l1 2.1l1 -1.7l1 -0.3l1 -0.9l1 -4.7l1 0.7l1 -1.3l1 2.4l1 -0.1l1 -3.5l1 2.3l1 -1.7l1 -1.4l1 -2l1 2.2l1 -0.8l1 -2.9l1 2.9l1 2.4l1 -4.6l1 -1.1l1 -0.7l1 -3.5l1 -1.3l1 -0.8l1 3.7l1 2.4l1 1.4l1 2l1 -6.7l1 -5.7l1 -2.2l1 -6.9l1 -2.3l1 -7.1l1 -0.5l1 -6.4l1 0.9l1 -18.8l0.7 4.5l0.3 -8.9l1 2.6l1 3.8l1 -7l1 -1l1 -5.5l1 5.3l1 -1.4l1 -7l0.4 7.9l0.6 -1.9l1 -0.7l1 10.3l1 -8.4l1 -1.1l1 -10.6l1 -7.7l1 10.9l1 -7.3l1 3.3l1 -4.6l1 1.6l1 -5.2l1 8.7l1 -25.8l1 10l1 3.6l0.8 -13.1l0.2 5.2l1 0.9l1 -5.6l1 -0.7l1 10.7l1 -11.4l1 11.2l1 3.5l1 -1.3l0.4 -5.1l0.6 9.2l1 -8.8l1 7.3l1 0.2l1 -2.3l1 -16.4l1 8.4l1 -9.4l1 9.4l1 0.2l1 9.6l1 -7.4l1 5.2l1 -2.4l1 -10.9l1 9.7l1 -1l0.8 -6.1l0.2 -6.1l1 13.2l1 -1l1 10l1 -8.1l1 8.5l1 19.1l1 -1.5l1 -1.6l1 -1.9l1 10l1 3.4l1 0.9l1 -10.2l1 20l1 -10.7l1 13.7l1 6.4l1 -7.3l1 0.5l1 2.6l1 -6l1 4l1 -0.3l1 1.6l1 11.8l0.9 0.6l0.1 5.5l1 -21.4l1 -8.1l1 -18.4l1 -21.5l1 -11.5l1 6.9l1 8.1l0.3 -2.7l0.7 3.5l1 -4.3l1 5.5l1 -18.6l1 0.1l1 -4.7l1 -1.1l1 4.8l1 0.7l1 5.2l1 -0.6l1 -0.8l1 0.7l1 -0.2l1 2.3l1 4.5l1 0.3l1 3.3l1 -2.5l1 2l1 -0.3l1 4.3l1 -1.5l1 4.8l1 1.2l1 -2l1 3.9l1 -2.2l1 2l1 2.6l0.6 -1.8l0.4 -1.1l1 2.3l1 -0.8l1 0l1 0l1 2.4l1 -2.1l1 0.9l1 -1.4l1 1.3l1 -0.2l1 1.9l1 0.6l1 0.3l1 0.5l0.5 1.3l0.5 -1.3" stroke="#a463f2" stroke-width="1.5" fill="none" stroke-linejoin="round"/>
<path d="M34 263.4l1 2.6l1 -0.5l1 0.7l1 2.5l1 3l1 -0.7l1 -1l1 -7l1 1l1 -5.4l1 -1.9l1 0.6l1 3.2l1 0.1l1 2l1 3.4l1 -5.5l1 -7.1l1 -2.4l1 -0.5l1 -0.3l1 -0.3l1 -0.2l1 -2.5l1 0.3l1 0.1l1 -2.2l1 2.1l1 1.2l1 2l1 -2.4l1 -1.5l1 0.2l1 -2.1l1 -0.6l1 0.3l1 -0.1l1 1.8l1 -1.9l1 -0.8l1 2.3l1 -0.1l1 -1.4l1 -2.2l1 0.8l1 -1.5l1 -0.8l1 -1.6l1 -2l1 -0.3l1 -1.3l1 0.9l1 0l1 -2.9l1 0.5l1 0.6l1 -2.8l1 -0.4l1 0.4l1 2.2l1 0.7l1 0l1 1.5l1 1.2l1 -2.5l1 -7l1 -6.9l1 -3.4l1 -4.8l1 -6.2l1 -2.4l1 -8.7l1 -0.6l1 -3.3l0.7 -18.1l0.3 11.8l1 0.9l1 -14.2l1 -3.9l1 16l1 -16.6l1 -3.4l1 2.6l1 -3.1l0.4 -5.3l0.6 8.4l1 11.4l1 -11.4l1 9.3l1 -11.2l1 0.6l1 -5.1l1 -5.6l1 16.3l1 -17.4l1 6.1l1 -16.7l1 7.2l1 2.2l1 2l1 1.4l1 -0.1l0.8 -15.1l0.2 14.2l1 -8.8l1 1.4l1 -4.9l1 2.1l1 -2.4l1 1.5l1 -2.7l1 -5.4l0.4 -0.4l0.6 3.9l1 -1.1l1 -1.8l1 7.8l1 -21.6l1 18.4l1 7.4l1 -1.8l1 -13.4l1 12.6l1 -13.5l1 13l1 -13.9l1 4.5l1 -12.6l1 16.6l1 7.8l0.8 -10.7l0.2 4l1 5.2l1 0.9l1 -2.1l1 12.9l1 11.3l1 -0.7l1 -8.5l1 16.8l1 -10.1l1 9l1 5.8l1 2.9l1 7.4l1 -7.1l1 9.6l1 1.3l1 -28.1l1 21.2l1 -2.8l1 3.4l1 6.5l1 -0.8l1 7.1l1 2.1l1 -7.5l0.9 -6.7l0.1 -1.8l1 0.2l1 -1.3l1 -12.7l1 -27l1 -24.9l1 12.3l1 12.4l0.3 -1.4l0.7 -0.3l1 5.2l1 -3.7l1 -6.1l1 -6.5l1 -9.1l1 1l1 5l1 8.1l1 3.5l1 1.7l1 -1.7l1 0.7l1 -2.7l1 0.5l1 5.6l1 1.9l1 3.2l1 -1.5l1 2.3l1 0.7l1 -5.5l1 -0.1l1 5.3l1 2.1l1 6.5l1 -3.9l1 1.7l1 -4.3l1 1.6l0.6 1.6l0.4 1.5l1 -2.9l1 2l1 4l1 0.3l1 -0.8l1 -1.2l1 0.6l1 -0.4l1 -1l1 4.1l1 0.8l1 -2.7l1 2.1l1 1.4l0.5 0.9l0.5 2" stroke="#b57bf0" stroke-width="1.5" fill="none" stroke-linejoin="round"/>
<path d="M254.0 173.4L255.3 163.3L256.6 173.4M281.4 142.3L282.7 124.6L284.0 142.3M284.4 144.0L285.7 132.0L287.0 144.0M287.3 145.6L288.6 138.0L289.9 145.6M296.3 150.6L297.6 133.6L298.9 150.6M1491.7 135.6L1493.0 116.5L1494.3 135.6M1498.7 139.3L1500.0 134.0L1501.3 139.3M1754.7 215.8L1756.0 202.4L1757.3 215.8M1768.5 218.2L1769.8 212.0L1771.1 218.2M1775.7 219.6L1777.0 200.5L1778.3 219.6" stroke="#7cc4af" stroke-width="1.5" fill="none" stroke-linejoin="round"/>
<path d="M1510.5 145.0L1511.5 135L1512.5 145.0" stroke="#f27663" stroke-width="1.5" fill="none"/>
</g>
<path d="M88 490.3H99M630.9 490.3V672.2H638.4V490.3V581.7H668V661.9V581.7H1066M1411 490.3V672.2M1412.6 581.7V668.6H1417M1806.7 581.7H1843.6V672.2H1906V581.7H2192.5M1808.5 581.7V672.2M1811 581.7V672.2M1813.3 581.7V648.6M1817.8 492.6V666.4M1822.8 497.0V675.3M1828.5 581.7V693.1M1830 492.6V677.5M1832.5 497.0V670.8M1806.7 581.7H1835" stroke="#506ccf" stroke-width="1.5" fill="none"/>
<path d="M87 490 88 489.7 89 490.4 90 491.5 91 490.1 92 488.7 92 673.8 91 674.6 90 674.6 89 674.5 88 673.3 87 674.2Z" fill="#506ccf"/>
<path d="M55 581.5H87" stroke="#44579c" stroke-width="1"/>
<path d="M99 490.6 100 490.6 101 490 102 490.5 103 489.5 104 493.1 105 490.8 106 489.9 107 490.1 108 490.4 109 490.3 110 489.2 111 490.9 112 490.7 113 490.6 114 489.8 115 491.7 116 490.4 117 491.3 118 489.8 119 490.4 120 490.4 121 489.4 122 485.2 123 491.6 124 488.9 125 490.9 126 490.8 127 489.9 128 490.8 129 489.6 130 489.9 131 493.3 132 490.2 133 490.3 134 494 135 489.2 136 489.9 137 489.8 138 489.1 139 490.3 140 490.1 141 488.9 142 489 143 490.5 144 491.8 145 492.2 146 491.2 147 489.5 148 490.2 149 488.9 150 487.8 151 489.5 152 492 153 491.3 154 489.2 155 493 156 490.7 157 487.8 158 487.2 159 488.9 160 490.2 161 490.7 162 492 163 490.8 164 491 165 488.8 166 488.1 167 490.4 168 489.3 169 491 170 489.5 171 490.2 172 489.9 173 489.9 174 491.2 175 489.4 176 491.4 177 490.5 178 491.3 179 489 180 490.5 181 490.3 182 489.6 183 488.9 184 490 185 489.6 186 490.5 187 490.8 188 491 189 492.2 190 490.4 191 491 192 484.2 193 490.5 194 489.5 195 489.2 196 489.9 197 490.3 198 493.5 199 490.7 200 489.6 201 489.7 202 490.8 203 490.9 204 493.3 205 489.6 206 489.8 207 485.8 208 489.1 209 491.2 210 489 211 489.7 212 490.1 213 489.2 214 485.8 215 490.6 216 490.3 217 490.3 218 489.3 219 489.8 220 490.7 221 489.2 222 491.2 223 488.7 224 489.6 225 488.2 226 491.1 227 489.9 228 490.7 229 489.7 230 488.9 231 493.6 232 491.7 233 490.7 234 490 235 490.3 236 490.6 237 492.5 238 491.8 239 489 240 490.4 241 490.4 242 489.4 243 489.2 244 489.9 245 489.9 246 489.3 247 488.9 248 489.2 249 489.7 250 491 251 489.8 252 489.5 253 493.5 254 490.9 255 491.9 256 488.6 257 490.9 258 489 259 489.4 260 490.6 261 491.1 262 490.1 263 490.1 264 485 265 485.8 266 490 267 491.7 268 488.1 269 489.4 270 486.7 271 489.6 272 489 273 492.4 274 490.8 275 490.8 276 487.1 277 492.7 278 489 279 488.5 280 489.9 281 489.3 282 489.9 283 490 284 490.2 285 490.9 286 490.5 287 491.2 288 490.9 289 489 290 488.9 291 490.7 292 493 293 490.4 294 490.2 295 490.9 296 489 297 490.2 298 489.9 299 490.9 300 491.1 301 489.6 302 490.2 303 490.6 304 490.3 305 489.9 306 490.2 307 489.4 308 489.9 309 494.5 310 487.2 311 490.8 312 489 313 490.2 314 489.5 315 489.9 316 491 317 490.3 318 489.5 319 489.6 320 492.5 321 489.8 322 489.2 323 487.8 324 490.1 325 489.4 326 489.7 327 490.1 328 491.7 329 488.1 330 488.9 331 489.1 332 489.9 333 492.7 334 489.8 335 489.4 336 490.7 337 489.4 338 489.2 339 490.7 340 489.8 341 488.8 342 488.5 343 488.6 344 489.7 345 488 346 489.9 347 490.6 348 491.4 349 489.6 350 490.4 351 488.3 352 489.6 353 488.2 354 493.7 355 492.5 356 489.8 357 490.3 358 490.5 359 489.5 360 491.7 361 490.9 362 490.5 363 489.6 364 489.3 365 488.7 366 489.2 367 489.1 368 487.3 369 489.6 370 488.7 371 491.2 372 490.7 373 490.9 374 490.4 375 492.1 376 489.1 377 489.3 378 490.9 379 489.6 380 491.9 381 488.8 382 490.5 383 490 384 490.3 385 491.1 386 490.3 387 490.6 388 490.8 389 492.3 390 487 391 491 392 490.1 393 491.1 394 493.2 395 490.3 396 489.6 397 489.8 398 490.9 399 490.2 400 490.9 401 489.2 402 489.9 403 490.2 404 490.4 405 489.7 406 490.4 407 485.5 408 492.2 409 489.1 410 490.5 411 489 412 490.9 413 489.4 414 489.1 415 488.2 416 490.6 417 489.7 418 489.8 419 490.1 420 488.4 421 491 422 492.6 423 489.2 424 486.3 425 490.7 426 491.1 427 489.7 428 489.7 429 490.9 430 485.3 431 490.2 432 489 433 490.1 434 489.4 435 488.7 436 490.9 437 490.6 438 489.9 439 489.4 440 491.3 441 490.5 442 490.6 443 490.3 444 489.3 445 489.2 446 491.2 447 489.2 448 490.3 449 489.8 450 489.5 451 490 452 490.4 453 490.7 454 488.7 455 489 456 489.7 457 490.4 458 489.4 459 489.7 460 489.6 461 489.9 462 491.3 463 492.1 464 492 465 490.2 466 489.9 467 489.5 468 489.7 469 490.3 470 490.7 471 490.1 472 489.2 473 493.6 474 491.8 475 489.8 476 489.2 477 491.2 478 489.7 479 490.6 480 490 481 493.8 482 491 483 485.5 484 490.1 485 489.7 486 489.8 487 487.1 488 491.6 489 489 490 489.4 491 489.2 492 491.5 493 490.9 494 489.8 495 489.1 496 489.1 497 490.7 498 489.8 499 491.1 500 489.8 501 490.4 502 485.7 503 492 504 490.7 505 485.1 506 490.5 507 490.5 508 490.3 509 491.5 510 490.1 511 490.7 512 490.2 513 491 514 488.5 515 489.7 516 491.3 517 488.7 518 490.4 519 490.9 520 489.4 521 489.4 522 489.8 523 489.4 524 489.4 525 490.7 526 489 527 489 528 490.8 529 489.2 530 489.8 531 488.3 532 491 533 491.8 534 489.6 535 489.5 536 489.8 537 490.7 538 487.8 539 490.6 540 489.5 541 490.1 542 489.7 543 490.3 544 489.5 545 488.9 546 489.2 547 488.2 548 489.7 549 489.1 550 490.2 551 490 552 489.7 553 487.1 554 490.5 555 490.6 556 490 557 493.1 558 489.4 559 488.8 560 490 561 489.3 562 491.1 563 490.9 564 490.3 565 494.4 566 493 567 492.6 568 489.6 569 489.7 570 489.2 571 488.5 572 490.1 573 490.6 574 493.5 575 493.3 576 490.3 577 489.9 578 489.4 579 490.7 580 493.8 581 490 582 488.8 583 490.2 584 491 585 490.2 586 488.9 587 491 588 489.5 589 490.8 590 489.8 591 490.5 592 493.3 593 491.2 594 490 595 491.8 596 491.6 597 491.3 598 490.6 599 489 600 489.4 601 490.6 602 490 603 489.5 604 491 605 489.6 606 490.3 607 489.1 608 489 609 488.4 610 489 611 490.2 612 490.4 613 489.4 614 493.7 615 489.8 616 490.3 617 488.6 618 489.8 619 489.2 620 489.8 621 490.4 622 490.9 623 489.3 624 490.9 625 492.8 626 489.6 627 490.4 628 489.1 629 489.4 630 489.8 630 677.5 629 675 628 675 627 674.9 626 679 625 677.7 624 677.1 623 677.6 622 678.9 621 678 620 677.3 619 676.8 618 677 617 678.3 616 677.2 615 677.7 614 676.6 613 677.6 612 679.6 611 677.9 610 678.4 609 678.1 608 676.2 607 676.2 606 678.1 605 679 604 677.4 603 677.7 602 676.8 601 676.7 600 677.8 599 675.4 598 678.4 597 678.1 596 675.3 595 677.2 594 677.5 593 678.8 592 676.5 591 678 590 677.2 589 677.9 588 676.3 587 678 586 674.9 585 676.1 584 676.4 583 677.4 582 676.6 581 677.5 580 675.2 579 677.6 578 676.6 577 676.5 576 681.8 575 677.3 574 677.3 573 677.2 572 678.5 571 676.3 570 677.2 569 677.4 568 676.5 567 676.7 566 676.7 565 678.5 564 678.5 563 677.3 562 677.9 561 676.8 560 677.4 559 676.5 558 677.5 557 678.6 556 677.3 555 678.1 554 673.5 553 676.9 552 677.9 551 677.9 550 677.7 549 677.6 548 678 547 677.5 546 678.6 545 678.3 544 676.3 543 676.6 542 675.3 541 677.4 540 674.3 539 677.7 538 677.6 537 677.6 536 676.9 535 678.4 534 676.8 533 677.4 532 678.2 531 676.6 530 678.7 529 675.6 528 676.9 527 677 526 677.4 525 677.5 524 676.8 523 677.8 522 676.9 521 677.5 520 677.1 519 678.7 518 680.7 517 677.9 516 674.7 515 679.5 514 677.4 513 678.6 512 677.1 511 677.5 510 677.1 509 676.1 508 678.9 507 675.7 506 680.4 505 676 504 678.2 503 678.3 502 677 501 677.3 500 677.7 499 677.1 498 677.1 497 677.5 496 677 495 678.7 494 678.2 493 678.3 492 675 491 677.8 490 677.3 489 677.2 488 677.1 487 677.3 486 677.4 485 676.1 484 677.8 483 678.5 482 676.6 481 677.2 480 676 479 678.9 478 676.2 477 677.9 476 679.6 475 675.4 474 677.4 473 679 472 678.5 471 679 470 677.5 469 679.6 468 677.1 467 676.9 466 677.7 465 678.7 464 676 463 677.2 462 676.1 461 677.6 460 677.8 459 677.5 458 677.5 457 678.2 456 674.7 455 677.1 454 677.3 453 678.1 452 677.9 451 677.5 450 676.9 449 676.3 448 674.4 447 677.3 446 676.5 445 678.8 444 678.2 443 677.5 442 677.3 441 678.7 440 677.2 439 679 438 675 437 674 436 679.5 435 681.7 434 677.5 433 678.4 432 677.9 431 678.8 430 679.3 429 679.2 428 677.7 427 678.3 426 676.9 425 677.4 424 675.6 423 677.2 422 678.6 421 676.8 420 677.1 419 677.9 418 676.2 417 678.4 416 676.9 415 676.7 414 677 413 675.2 412 677.1 411 680.9 410 675.6 409 678.4 408 676.4 407 679.3 406 677.8 405 679.2 404 677.2 403 675.6 402 677.4 401 678.1 400 677 399 677.2 398 676.5 397 674.1 396 677.8 395 678.9 394 675.7 393 675 392 678.7 391 676.6 390 676.9 389 675.2 388 676.6 387 678.3 386 678.4 385 677.8 384 678.1 383 678.6 382 678.9 381 677.7 380 677.1 379 676.6 378 678.5 377 678.9 376 681.8 375 677.9 374 674.3 373 678 372 678 371 677.1 370 676 369 675.5 368 679.5 367 677.3 366 678.8 365 678.1 364 679.4 363 677.3 362 678.8 361 676.6 360 677.4 359 673.6 358 678.6 357 675.4 356 674.9 355 677.4 354 679.1 353 676.8 352 676.1 351 678.7 350 677.9 349 676.8 348 675.9 347 677.4 346 679 345 677 344 677.9 343 677.3 342 676.2 341 679.2 340 678 339 676.4 338 675 337 674 336 676.9 335 679.1 334 676 333 677.8 332 677.7 331 675.4 330 680.9 329 676.1 328 678.5 327 676.8 326 676.7 325 674.9 324 678.4 323 679.5 322 676.8 321 677.2 320 675.7 319 677.8 318 677.3 317 676.4 316 678.8 315 679.5 314 676 313 675.9 312 677.4 311 677.1 310 679 309 677.7 308 677.8 307 676.7 306 677.2 305 676.9 304 677.9 303 676.9 302 676.4 301 677.8 300 678.4 299 678.3 298 678.4 297 682.6 296 676 295 677.3 294 677 293 675.5 292 675.6 291 678 290 677.9 289 678.2 288 681.4 287 677.6 286 678.1 285 676 284 673.6 283 679.2 282 677.4 281 677.4 280 677.8 279 677 278 678.8 277 677.6 276 674.5 275 676.4 274 674.2 273 677.5 272 676.8 271 677.3 270 677 269 676.7 268 676.1 267 675.5 266 676.8 265 676.8 264 675.8 263 677.7 262 673.5 261 677.7 260 672 259 678.4 258 677.1 257 675.4 256 677.6 255 677.2 254 675.8 253 674 252 677.1 251 674.8 250 677.4 249 679.6 248 679.1 247 677.9 246 677.1 245 677.6 244 677.2 243 677.7 242 675.5 241 672.6 240 677.4 239 676.8 238 677.5 237 677 236 677.7 235 679.8 234 681.6 233 678 232 678.2 231 678.4 230 676.8 229 677.6 228 677.6 227 679.8 226 678.1 225 678.2 224 678.1 223 677.5 222 676.4 221 675.8 220 677.9 219 674.8 218 677.2 217 678.8 216 677.5 215 679.2 214 676.7 213 676.1 212 677.4 211 678.8 210 676.5 209 677.8 208 677.4 207 678 206 675.9 205 676.6 204 678.2 203 678.4 202 677 201 676.5 200 678.1 199 676.5 198 676.5 197 676.8 196 678 195 677.6 194 677.9 193 677.4 192 678.1 191 676.3 190 676.3 189 677.9 188 678 187 678.1 186 676.5 185 678.4 184 678.7 183 677.1 182 677.7 181 676.8 180 677.5 179 677.7 178 677 177 677.3 176 677.4 175 677.7 174 678 173 677.4 172 676.9 171 677.9 170 677.6 169 676.2 168 678.8 167 676.9 166 676.6 165 674.9 164 678.1 163 677.9 162 677.2 161 676.6 160 677.1 159 678.5 158 678.3 157 677.5 156 677.3 155 678 154 676.8 153 677.7 152 678.8 151 681 150 679.5 149 675.7 148 677.9 147 678.4 146 678.2 145 677.2 144 676.8 143 679 142 677.5 141 678.3 140 677.6 139 678.2 138 678 137 676.1 136 675 135 675.5 134 676.7 133 676.6 132 678.8 131 677.6 130 677.7 129 676.2 128 677.1 127 676.8 126 677.3 125 676.5 124 674.6 123 675.3 122 676.8 121 677.1 120 678.3 119 679.4 118 678.6 117 677.4 116 677.9 115 677.3 114 678.5 113 678.4 112 677 111 677.7 110 676.5 109 676.5 108 678.3 107 677 106 676.3 105 678.6 104 677 103 678.1 102 679.4 101 679.1 100 677.9 99 676.9Z" fill="#506ccf"/>
<path d="M1066 489 1067 490.3 1068 490.6 1069 491.1 1070 489.4 1071 490.4 1072 489.5 1073 491.5 1074 489.6 1075 491.3 1076 488.9 1077 492.9 1078 490.3 1079 490.4 1080 488.4 1081 490.7 1082 490.5 1083 490.1 1084 490.6 1085 491.7 1086 488.3 1087 488.7 1088 490 1089 491.5 1090 491 1091 489.3 1092 490 1093 488.6 1094 489.9 1095 489.2 1096 488.2 1097 489.4 1098 490.4 1099 489.9 1100 490.2 1101 493.7 1102 487.7 1103 491.3 1104 494.2 1105 489.4 1106 488.9 1107 489.8 1108 483.4 1109 489.8 1110 493.5 1111 491.2 1112 489.4 1113 489.4 1114 489.4 1115 489.8 1116 489.1 1117 489.7 1118 490.6 1119 489.3 1120 489.8 1121 491.7 1122 491.1 1123 488.7 1124 487.7 1125 489.1 1126 491.8 1127 491.5 1128 489.1 1129 488.3 1130 491.7 1131 488.2 1132 489.7 1133 490.6 1134 489.4 1135 491.3 1136 493.8 1137 490.5 1138 488.8 1139 489.9 1140 490.2 1141 490 1142 488.9 1143 491.7 1144 490.3 1145 491.1 1146 489.9 1147 489.4 1148 490.2 1149 490.3 1150 491.1 1151 489.9 1152 490 1153 489.9 1154 491.1 1155 490.4 1156 489.4 1157 488.7 1158 491.6 1159 489.9 1160 490.1 1161 490.4 1162 488.6 1163 490.6 1164 490.5 1165 488.5 1166 492.5 1167 489.8 1168 489.8 1169 489.3 1170 489.5 1171 490.7 1172 492.4 1173 490.8 1174 489.4 1175 489.4 1176 489.9 1177 489.5 1178 489.7 1179 490 1180 490.7 1181 491 1182 490.5 1183 490.1 1184 489.1 1185 491 1186 488.9 1187 490.1 1188 490.6 1189 493.1 1190 488.2 1191 490 1192 492.4 1193 490.3 1194 491.1 1195 489.3 1196 489 1197 487.9 1198 491.1 1199 490.1 1200 491 1201 489.1 1202 489.3 1203 489 1204 490.7 1205 489.6 1206 489.1 1207 490.7 1208 489 1209 490.4 1210 485.8 1211 488.8 1212 490.2 1213 489.4 1214 490.6 1215 491.9 1216 491.5 1217 486.2 1218 493.3 1219 489.2 1220 490.8 1221 490 1222 491 1223 487.7 1224 490.7 1225 489.6 1226 489.7 1227 491.7 1228 488.7 1229 490.9 1230 490.9 1231 491.3 1232 488.3 1233 491.1 1234 487.9 1235 491.6 1236 491 1237 489.6 1238 490.1 1239 489.5 1240 490.7 1241 489.4 1242 489.1 1243 490 1244 491 1245 489.1 1246 489.2 1247 488.3 1248 489.8 1249 491.2 1250 491.1 1251 489.1 1252 489.4 1253 490.3 1254 487.5 1255 490.8 1256 490 1257 488.7 1258 490.5 1259 490 1260 490.6 1261 490.2 1262 492.2 1263 489.4 1264 491.5 1265 490.6 1266 489.4 1267 490 1268 489.7 1269 490.8 1270 490.7 1271 490.7 1272 489.8 1273 489.5 1274 489.6 1275 489.8 1276 489.4 1277 489.2 1278 492.5 1279 489.9 1280 489.8 1281 490.4 1282 490 1283 489 1284 488.6 1285 490.8 1286 489.2 1287 489.9 1288 489.9 1289 490.5 1290 488.5 1291 488.4 1292 489.2 1293 489.8 1294 489.7 1295 489.2 1296 491.5 1297 490.1 1298 489.1 1299 491 1300 489.8 1301 492.6 1302 490.4 1303 489.1 1304 489.1 1305 489.7 1306 486.7 1307 491.3 1308 489.5 1309 491.9 1310 489.3 1311 490.5 1312 490.1 1313 494.5 1314 491.2 1315 489.8 1316 491.8 1317 493.7 1318 489.6 1319 490 1320 490.8 1321 488.3 1322 489.8 1323 489.2 1324 491.2 1325 489.8 1326 491.6 1327 489.9 1328 492.4 1329 489.9 1330 489.4 1331 491.9 1332 490.1 1333 489.6 1334 492.3 1335 490.3 1336 490.3 1337 489.6 1338 491.2 1339 491 1340 491 1341 491.6 1342 490.4 1343 492.7 1344 490.1 1345 491.4 1346 490 1347 489.4 1348 493 1349 490.1 1350 490.2 1351 489.1 1352 494.5 1353 489.9 1354 489.7 1355 490.6 1356 490.2 1357 489.5 1358 488.8 1359 489.9 1360 489.9 1361 490.7 1362 489 1363 488.6 1364 489.8 1365 490.6 1366 489.9 1367 490.5 1368 489.5 1369 491.1 1370 489.6 1371 489.4 1372 493 1373 489.5 1374 489.4 1375 489.5 1376 492.4 1377 491 1378 491.9 1379 492.1 1380 488.6 1381 490 1382 491.7 1383 491.6 1384 490.3 1385 490.3 1386 489.5 1387 489.4 1388 488.9 1389 490 1390 489.8 1391 490.1 1392 490.8 1393 492.3 1394 491.4 1395 492 1396 490.3 1397 489 1398 490.5 1399 489.5 1400 485.4 1401 490.5 1402 489.1 1403 488.6 1404 489.3 1405 491.2 1406 490.5 1407 490.7 1408 488.9 1409 490.7 1410 489.6 1411 490.7 1411 678.1 1410 678.4 1409 677.5 1408 677.1 1407 677.5 1406 679.6 1405 674.1 1404 676.7 1403 676 1402 679 1401 679.3 1400 677.9 1399 677.1 1398 675.7 1397 679.8 1396 677.3 1395 678.3 1394 680.2 1393 679.3 1392 674.2 1391 677.4 1390 677.5 1389 678.5 1388 674.9 1387 678.4 1386 678.5 1385 678.2 1384 677 1383 677.3 1382 678.1 1381 677.7 1380 677.1 1379 678.7 1378 676.4 1377 678.1 1376 677 1375 677.3 1374 681.4 1373 677.7 1372 678.2 1371 678.8 1370 677.7 1369 675.5 1368 676.6 1367 678.2 1366 678.4 1365 677.8 1364 675.3 1363 676.2 1362 677.6 1361 677.1 1360 676.9 1359 678.2 1358 675 1357 677.2 1356 676.3 1355 678 1354 675.7 1353 678.5 1352 677.5 1351 678.2 1350 678.1 1349 676.5 1348 677.8 1347 677.2 1346 676.8 1345 677.5 1344 675.8 1343 675.6 1342 677.6 1341 678 1340 676.3 1339 677.3 1338 677.6 1337 677.8 1336 678.2 1335 678.8 1334 675.9 1333 676.7 1332 680.6 1331 677.5 1330 676.6 1329 677.3 1328 677.4 1327 677.6 1326 675 1325 676.9 1324 678.4 1323 677.3 1322 677.2 1321 679.4 1320 678.6 1319 675.3 1318 678.2 1317 677.9 1316 679 1315 676.7 1314 678 1313 676.9 1312 677 1311 675 1310 676.9 1309 678 1308 676 1307 674 1306 676.4 1305 679.1 1304 677.9 1303 677.2 1302 676.2 1301 676.2 1300 677.6 1299 679.3 1298 676.3 1297 676.9 1296 676.5 1295 677.2 1294 676.6 1293 674.6 1292 678.3 1291 676.1 1290 676.1 1289 680 1288 676.8 1287 678.5 1286 678.1 1285 677.3 1284 676.9 1283 678.8 1282 677.5 1281 677 1280 677.4 1279 678.8 1278 678.3 1277 675.8 1276 675.7 1275 678.6 1274 677.4 1273 676.2 1272 677.2 1271 677 1270 678 1269 675.5 1268 677.2 1267 677.2 1266 675.4 1265 674.4 1264 676.9 1263 677.5 1262 674.9 1261 677.5 1260 677.8 1259 676.5 1258 676.9 1257 677.2 1256 677.7 1255 677.7 1254 678 1253 678.1 1252 676.5 1251 679.2 1250 678.1 1249 676.8 1248 675.3 1247 677.5 1246 678 1245 678.2 1244 674.9 1243 678.3 1242 673.8 1241 676.7 1240 677.1 1239 677.8 1238 678.5 1237 677.3 1236 677.5 1235 678 1234 675.9 1233 678.1 1232 675.7 1231 676.2 1230 677.9 1229 678.1 1228 677.4 1227 677.1 1226 675.7 1225 678.5 1224 677.1 1223 677.2 1222 675.3 1221 675.6 1220 678 1219 675.9 1218 679.1 1217 677.4 1216 676.9 1215 676.7 1214 679.2 1213 677.4 1212 677.9 1211 674.5 1210 674.6 1209 676.3 1208 681 1207 678.1 1206 676.4 1205 678.3 1204 677.1 1203 678.4 1202 673.9 1201 676.6 1200 678.4 1199 677.5 1198 678.4 1197 676.2 1196 676.5 1195 677.1 1194 680.4 1193 674 1192 676.6 1191 677.4 1190 677.8 1189 678.2 1188 678.4 1187 677.7 1186 682.4 1185 676.5 1184 676 1183 676.5 1182 676.9 1181 680.2 1180 677.7 1179 677.4 1178 677.7 1177 677.3 1176 677.4 1175 677.1 1174 679.7 1173 679.1 1172 677.7 1171 677.6 1170 677.5 1169 677.1 1168 678.6 1167 679.2 1166 677.8 1165 678.9 1164 675.1 1163 681.4 1162 677.3 1161 675.7 1160 678.1 1159 680.4 1158 676.8 1157 678.2 1156 674.6 1155 677.3 1154 676.4 1153 676.6 1152 675.3 1151 677.1 1150 678.6 1149 679.7 1148 677 1147 676.6 1146 677 1145 676.1 1144 674.9 1143 677 1142 678.8 1141 678.6 1140 677.7 1139 677 1138 678.2 1137 681.4 1136 677.4 1135 678.1 1134 679.4 1133 676.9 1132 677.1 1131 678.1 1130 677.8 1129 678.6 1128 676.8 1127 680.6 1126 678.8 1125 677.7 1124 676.9 1123 678.4 1122 676.1 1121 676.6 1120 677.4 1119 678.2 1118 677.6 1117 676.9 1116 677.3 1115 676.7 1114 677.1 1113 677.1 1112 675.2 1111 679.1 1110 681.5 1109 677.1 1108 676.3 1107 678.7 1106 678.6 1105 677.9 1104 678.7 1103 678.4 1102 675.8 1101 679.3 1100 678.4 1099 679.6 1098 676.6 1097 679 1096 680.1 1095 677.7 1094 675.1 1093 675.3 1092 674.8 1091 674.2 1090 676.4 1089 678.9 1088 683.2 1087 675.7 1086 675.9 1085 676.7 1084 676.3 1083 677.2 1082 676.7 1081 675.6 1080 681.7 1079 677.3 1078 678.5 1077 677.3 1076 676.5 1075 678.6 1074 675.2 1073 676.8 1072 680.4 1071 677.6 1070 677.4 1069 678 1068 677.2 1067 678.9 1066 677.7Z" fill="#506ccf"/>
<path d="M1417 491 1418 490.6 1419 489.4 1420 489.3 1421 488.7 1422 489.4 1423 492 1424 490.3 1425 489.3 1426 489.8 1427 489.8 1428 489.6 1429 488.2 1430 489.5 1431 489.8 1432 490.5 1433 489.7 1434 490.5 1435 489.6 1436 490.1 1437 491.6 1438 492.9 1439 487.8 1440 490.3 1441 490.7 1442 488.7 1443 490.6 1444 490.5 1445 492.1 1446 490.4 1447 490.3 1448 493.2 1449 485.3 1450 490.2 1451 488.5 1452 491.3 1453 490.7 1454 491 1455 489.8 1456 493.1 1457 490.4 1458 490.7 1459 489.9 1460 489.2 1461 489.6 1462 489.4 1463 489.4 1464 489.4 1465 487.1 1466 491.3 1467 490.7 1468 490.6 1469 489.7 1470 490.6 1471 490.7 1472 491.6 1473 489.5 1474 491.6 1475 490.5 1476 489.1 1477 488.7 1478 488.5 1479 490 1480 489.8 1481 488.7 1482 490.7 1483 486.8 1484 489.3 1485 488.7 1486 489.9 1487 488.6 1488 490.7 1489 489.5 1490 489.6 1491 490.2 1492 489.6 1493 490 1494 488.8 1495 489.6 1496 489 1497 489.7 1498 487.4 1499 494.2 1500 491.2 1501 490.5 1502 490.6 1503 490.4 1504 489.6 1505 485.7 1506 490 1507 489.2 1508 489.3 1509 489.6 1510 489.2 1511 489.6 1512 489.5 1513 490.3 1514 491 1515 489.2 1516 491.6 1517 489.4 1518 489.8 1519 492.3 1520 490.1 1521 490.9 1522 490.2 1523 490.3 1524 489.9 1525 494.4 1526 489.3 1527 491.3 1528 489.8 1529 491.1 1530 489.5 1531 491.1 1532 491 1533 490.1 1534 490.8 1535 490.7 1536 490.7 1537 489.3 1538 490.7 1539 489.7 1540 484.7 1541 489.1 1542 489.5 1543 489.9 1544 490 1545 490.7 1546 490.1 1547 493.2 1548 489.9 1549 489.1 1550 490.7 1551 489.2 1552 489.3 1553 489.5 1554 489.3 1555 491.7 1556 489.9 1557 491.4 1558 491.4 1559 488.9 1560 489.2 1561 490.2 1562 490.1 1563 490 1564 486.8 1565 489.5 1566 491.4 1567 490.1 1568 489.7 1569 485.9 1570 489.8 1571 489.2 1572 490.8 1573 490.4 1574 491.4 1575 489.3 1576 490.4 1577 489.6 1578 489.5 1579 485 1580 489.4 1581 489.4 1582 490 1583 489.2 1584 491.9 1585 489 1586 489.8 1587 490.8 1588 490 1589 488.8 1590 488.9 1591 489.9 1592 488.4 1593 492.8 1594 494.8 1595 490 1596 489 1597 488.9 1598 488.8 1599 491.9 1600 489.8 1601 491 1602 490.1 1603 490.6 1604 489.3 1605 490.2 1606 489.7 1607 494.2 1608 490.6 1609 492.8 1610 491.6 1611 489.8 1612 489.8 1613 492.5 1614 490.6 1615 490.2 1616 489.8 1617 490.5 1618 490.7 1619 490.5 1620 492.5 1621 490.4 1622 495.5 1623 489.1 1624 490.4 1625 489.7 1626 489.4 1627 492 1628 487.8 1629 489.8 1630 490.5 1631 489.7 1632 489 1633 489.4 1634 492.9 1635 489.9 1636 490.8 1637 490 1638 489.3 1639 490.7 1640 490 1641 490.5 1642 491.5 1643 490.4 1644 490.3 1645 489.7 1646 490.2 1647 490 1648 490 1649 490.5 1650 490.2 1651 489.2 1652 489.3 1653 490.7 1654 489 1655 491.1 1656 490.5 1657 490.3 1658 490.2 1659 489.7 1660 488.2 1661 489.9 1662 491.5 1663 489.9 1664 490.3 1665 489.3 1666 490.8 1667 489.1 1668 490.7 1669 489.6 1670 489.6 1671 488.8 1672 490.6 1673 490.3 1674 489.9 1675 489.4 1676 492.8 1677 489.1 1678 490.1 1679 490 1680 490.5 1681 489.3 1682 491.7 1683 489.7 1684 490.3 1685 492.8 1686 489.6 1687 487.8 1688 488.2 1689 489.7 1690 488.9 1691 491.4 1692 489.9 1693 490 1694 491.3 1695 491 1696 489.8 1697 490.5 1698 490 1699 491 1700 488.9 1701 489.9 1702 490.6 1703 489 1704 489.8 1705 489.5 1706 491.7 1707 490.3 1708 488.2 1709 490.6 1710 489.3 1711 489.4 1712 489.4 1713 491.2 1714 488.7 1715 488.1 1716 491.4 1717 488.6 1718 490 1719 493.6 1720 489.4 1721 489.9 1722 490.2 1723 490.5 1724 492.4 1725 490.3 1726 488.6 1727 487.8 1728 489.9 1729 490.1 1730 490.1 1731 492.1 1732 490.2 1733 489.3 1734 493.3 1735 488.7 1736 488.7 1737 489.6 1738 489 1739 490.6 1740 490 1741 490.8 1742 488.5 1743 491.3 1744 490.5 1745 489.7 1746 489.1 1747 489.7 1748 489.6 1749 491 1750 491.3 1751 490.1 1752 489.8 1753 490 1754 493.4 1755 489 1756 489.9 1757 490.1 1758 489.6 1759 489.7 1760 489.9 1761 488.3 1762 489.5 1763 489.2 1764 489.3 1765 490.2 1766 490.7 1767 489.8 1768 489.8 1769 490.5 1770 490.1 1771 490.8 1772 486.5 1773 489.6 1774 490.7 1775 492.5 1776 489.7 1777 489.7 1778 489.9 1779 492.7 1780 489.5 1781 487.7 1782 489.3 1783 489.8 1784 490.3 1785 490.6 1786 489.9 1787 490.1 1788 486.4 1789 489.5 1790 490.1 1791 493.3 1792 490.4 1793 490 1794 493.7 1795 490.9 1796 489.5 1797 488.4 1798 491 1799 490.2 1800 490.4 1801 489.7 1802 489.6 1803 490 1804 489.5 1805 492.2 1806 490.6 1806.7 676.4 1805.7 676.9 1804.7 676.7 1803.7 676.8 1802.7 678.2 1801.7 679.4 1800.7 677.4 1799.7 677.3 1798.7 678.1 1797.7 675.9 1796.7 677.4 1795.7 677.9 1794.7 678.5 1793.7 676.9 1792.7 677.4 1791.7 677.1 1790.7 677.6 1789.7 677.2 1788.7 678 1787.7 677.2 1786.7 681.4 1785.7 678.4 1784.7 676.6 1783.7 675 1782.7 676.3 1781.7 675.8 1780.7 678.9 1779.7 676.3 1778.7 678.5 1777.7 676.2 1776.7 677 1775.7 677.2 1774.7 678.1 1773.7 677.9 1772.7 677.5 1771.7 677.5 1770.7 677.5 1769.7 677.8 1768.7 678.3 1767.7 676.9 1766.7 677.6 1765.7 678.8 1764.7 677.6 1763.7 677.4 1762.7 677.8 1761.7 677.3 1760.7 675.3 1759.7 677.9 1758.7 676.9 1757.7 677.3 1756.7 675.4 1755.7 678 1754.7 676.2 1753.7 679.7 1752.7 678.1 1751.7 677.1 1750.7 676.3 1749.7 677.9 1748.7 676.5 1747.7 676.7 1746.7 677.4 1745.7 677.2 1744.7 677.5 1743.7 677.8 1742.7 679.2 1741.7 675.9 1740.7 674 1739.7 679.9 1738.7 676.9 1737.7 678.8 1736.7 677.7 1735.7 677.6 1734.7 675.3 1733.7 676.9 1732.7 677.2 1731.7 678.2 1730.7 675.8 1729.7 677.1 1728.7 679.1 1727.7 678.7 1726.7 677.5 1725.7 677.4 1724.7 676.1 1723.7 678.2 1722.7 677.1 1721.7 678.7 1720.7 677.3 1719.7 674.7 1718.7 677.1 1717.7 679.1 1716.7 678.3 1715.7 675.4 1714.7 677 1713.7 676.9 1712.7 677.1 1711.7 676.8 1710.7 679.4 1709.7 676.7 1708.7 677.8 1707.7 677.7 1706.7 676.4 1705.7 678.8 1704.7 678.1 1703.7 675.7 1702.7 677.3 1701.7 676.2 1700.7 678.6 1699.7 675.2 1698.7 678.6 1697.7 677 1696.7 677 1695.7 675.2 1694.7 678 1693.7 678.1 1692.7 676.9 1691.7 676.5 1690.7 675.4 1689.7 678.2 1688.7 676.4 1687.7 677.4 1686.7 677.4 1685.7 678.2 1684.7 677.8 1683.7 681.9 1682.7 677.5 1681.7 674.9 1680.7 676.8 1679.7 678 1678.7 680.5 1677.7 679.5 1676.7 673.8 1675.7 675 1674.7 678.5 1673.7 675.4 1672.7 677.3 1671.7 678.8 1670.7 678 1669.7 679.7 1668.7 677.5 1667.7 676.7 1666.7 676 1665.7 677.2 1664.7 676.6 1663.7 677.7 1662.7 676.2 1661.7 677.1 1660.7 676.2 1659.7 677.4 1658.7 678.2 1657.7 678.7 1656.7 676 1655.7 677.4 1654.7 678.2 1653.7 679.1 1652.7 677.6 1651.7 677.1 1650.7 678 1649.7 676.6 1648.7 676.5 1647.7 677.3 1646.7 676.9 1645.7 676.1 1644.7 678.1 1643.7 674.7 1642.7 678.3 1641.7 676.8 1640.7 676.9 1639.7 677.1 1638.7 676.3 1637.7 678.3 1636.7 678.1 1635.7 677.8 1634.7 677.1 1633.7 677.8 1632.7 677 1631.7 677.4 1630.7 676.9 1629.7 676.7 1628.7 675.7 1627.7 677.3 1626.7 678.1 1625.7 675 1624.7 676 1623.7 677.8 1622.7 677.3 1621.7 678.7 1620.7 677.2 1619.7 678.3 1618.7 680.3 1617.7 675.4 1616.7 675.9 1615.7 678 1614.7 676.9 1613.7 676.9 1612.7 677.5 1611.7 677.1 1610.7 677.9 1609.7 676.7 1608.7 678.8 1607.7 675.2 1606.7 677.6 1605.7 678.1 1604.7 677.4 1603.7 678.6 1602.7 677.2 1601.7 676.6 1600.7 677.7 1599.7 677.8 1598.7 676.9 1597.7 676.6 1596.7 679.5 1595.7 678.3 1594.7 678.4 1593.7 678.9 1592.7 678.8 1591.7 677.5 1590.7 676.8 1589.7 677.7 1588.7 676.7 1587.7 677.8 1586.7 678 1585.7 675.6 1584.7 677.4 1583.7 677.5 1582.7 677.3 1581.7 675.5 1580.7 674.2 1579.7 678.2 1578.7 678.2 1577.7 677.4 1576.7 677.3 1575.7 675.1 1574.7 677.7 1573.7 678 1572.7 675.6 1571.7 677.9 1570.7 677.9 1569.7 678.8 1568.7 676.5 1567.7 678.3 1566.7 677.2 1565.7 678.1 1564.7 677.2 1563.7 674.6 1562.7 676.1 1561.7 676.9 1560.7 677.4 1559.7 676.7 1558.7 678.7 1557.7 678 1556.7 676.6 1555.7 678 1554.7 675.4 1553.7 676 1552.7 677.1 1551.7 677.1 1550.7 678.9 1549.7 682.2 1548.7 677 1547.7 678.2 1546.7 678.4 1545.7 677.5 1544.7 677.7 1543.7 679.5 1542.7 676.3 1541.7 677.1 1540.7 678.1 1539.7 677.3 1538.7 677.8 1537.7 677.4 1536.7 681 1535.7 677.9 1534.7 679.2 1533.7 677.4 1532.7 677.6 1531.7 677.8 1530.7 677.8 1529.7 677.4 1528.7 676.5 1527.7 677.4 1526.7 678.1 1525.7 677.6 1524.7 678.1 1523.7 674.8 1522.7 677.3 1521.7 681 1520.7 676.8 1519.7 676.9 1518.7 674.9 1517.7 678.4 1516.7 677.3 1515.7 675.8 1514.7 679 1513.7 676.9 1512.7 678 1511.7 681.5 1510.7 676.7 1509.7 677.6 1508.7 676.2 1507.7 677.3 1506.7 677.6 1505.7 676.7 1504.7 677.8 1503.7 677 1502.7 677.1 1501.7 675 1500.7 677 1499.7 681.6 1498.7 676.6 1497.7 677.8 1496.7 678.2 1495.7 678 1494.7 678.2 1493.7 678.2 1492.7 676.9 1491.7 679 1490.7 674.5 1489.7 677.3 1488.7 676 1487.7 677.1 1486.7 676.8 1485.7 678.7 1484.7 678.2 1483.7 678.2 1482.7 676.8 1481.7 677.8 1480.7 677.2 1479.7 675 1478.7 678.4 1477.7 675 1476.7 677.9 1475.7 677.4 1474.7 676.7 1473.7 676.2 1472.7 681 1471.7 677.7 1470.7 678.8 1469.7 677 1468.7 677.4 1467.7 678 1466.7 678.1 1465.7 676.9 1464.7 675.8 1463.7 677.8 1462.7 678.5 1461.7 676.6 1460.7 675.7 1459.7 677.5 1458.7 677.8 1457.7 677.5 1456.7 678.3 1455.7 676.9 1454.7 679.2 1453.7 677.7 1452.7 678 1451.7 676.3 1450.7 676.4 1449.7 679.2 1448.7 676 1447.7 678.8 1446.7 676.7 1445.7 677 1444.7 674.9 1443.7 676.9 1442.7 676.6 1441.7 677.8 1440.7 677.9 1439.7 676.5 1438.7 677.2 1437.7 677.9 1436.7 677 1435.7 677.4 1434.7 677.7 1433.7 677.7 1432.7 677.2 1431.7 678.3 1430.7 679.9 1429.7 676.7 1428.7 676.5 1427.7 677.3 1426.7 677.9 1425.7 678.1 1424.7 673.4 1423.7 678 1422.7 676.4 1421.7 678.8 1420.7 677.7 1419.7 675.4 1418.7 677.3 1417.7 677.5Z" fill="#506ccf"/>
<path d="M2192.5 493 2193.5 488.9 2194.5 490.8 2195.5 493.4 2196.5 489.4 2197.5 492.9 2198.5 488.9 2199.5 490.3 2200.5 490 2201.5 492.7 2202.5 493.2 2203.5 490.8 2204.5 488.7 2205.5 490.5 2206.5 489.5 2207.5 490.1 2208.5 489 2209.5 489.5 2210.5 489 2211.5 490.3 2212.5 493.1 2213.5 490.8 2214.5 489.8 2215 676.6 2214 677.9 2213 676.9 2212 679 2211 673.2 2210 675.7 2209 678.6 2208 677.9 2207 677.7 2206 679.9 2205 678.2 2204 676.6 2203 675.5 2202 677.8 2201 678 2200 678 2199 677.6 2198 677 2197 679.2 2196 678.4 2195 677.8 2194 678 2193 677.8Z" fill="#506ccf"/>
<path d="M220 670.8V697.6M264.6 670.8V731.0M268.7 670.8V713.2M278.7 670.8V693.1M296 670.8V711.0M383.7 670.8V684.2M450 670.8V696.2M605.5 670.8V688.7M1183 670.8V693.1M1383.5 670.8V697.6M1392 670.8V684.2M1404 670.8V697.6M1500.2 670.8V728.8M1553 670.8V697.6M1657 670.8V693.1M1685.5 670.8V688.7M1750.8 670.8V697.6M1765 670.8V688.7M1794 670.8V679.8M1328 492.6V479.2M1754.8 492.6V481.4" stroke="#506ccf" stroke-width="1.5" fill="none"/>
<path d="M126.4 491V553.7M172.2 491V543.6M217.4 491V557M227.5 491V542M283.4 491V510M334.6 491V552M348.5 491V540M489 491V554M507.7 491V567M569.7 491V530M597.5 491V554M604 491V600M615 491V580M625.7 491V671M628.6 491V671M111 587V676M171.2 617V676M304.5 580V676M440.6 564V676M422 644V676M487.6 611V676M569.7 637V676M606.5 587V676M1108.7 491V570M1183.1 491V570M1193.5 537V676M1251.8 491V540M1257.2 491V547M1290.3 491V567M1296.4 594V676M1394.6 491V580M1399.6 491V580M1403.6 491V580M1101.3 610V676M1115.4 567V676M1256 607V676M1275.6 587V676M1408 581V676M1488.5 491V554M1496.2 491V534M1589 491V554M1716.3 491V554M1740.7 491V530M1744.8 491V567M1755.8 491V520M1769.9 491V503M1486.8 617V676M1519.6 651V676M1589 604V676M1605 644V676M1623.5 654V676M1660.3 584V676M1698.5 580V676M1729.7 584V676M2205 491V676" stroke="#1a1e2e" stroke-opacity="0.6" stroke-width="1" fill="none"/>
</svg>
<div class="more"><span>More (6)</span><svg style="left:61.5px;top:6.5px" width="12" height="10" viewBox="0 0 12 10"><path d="M2 3l4 4 4-4" stroke="#e1e1e1" stroke-width="1.5" fill="none"/></svg></div>
</body></html>
